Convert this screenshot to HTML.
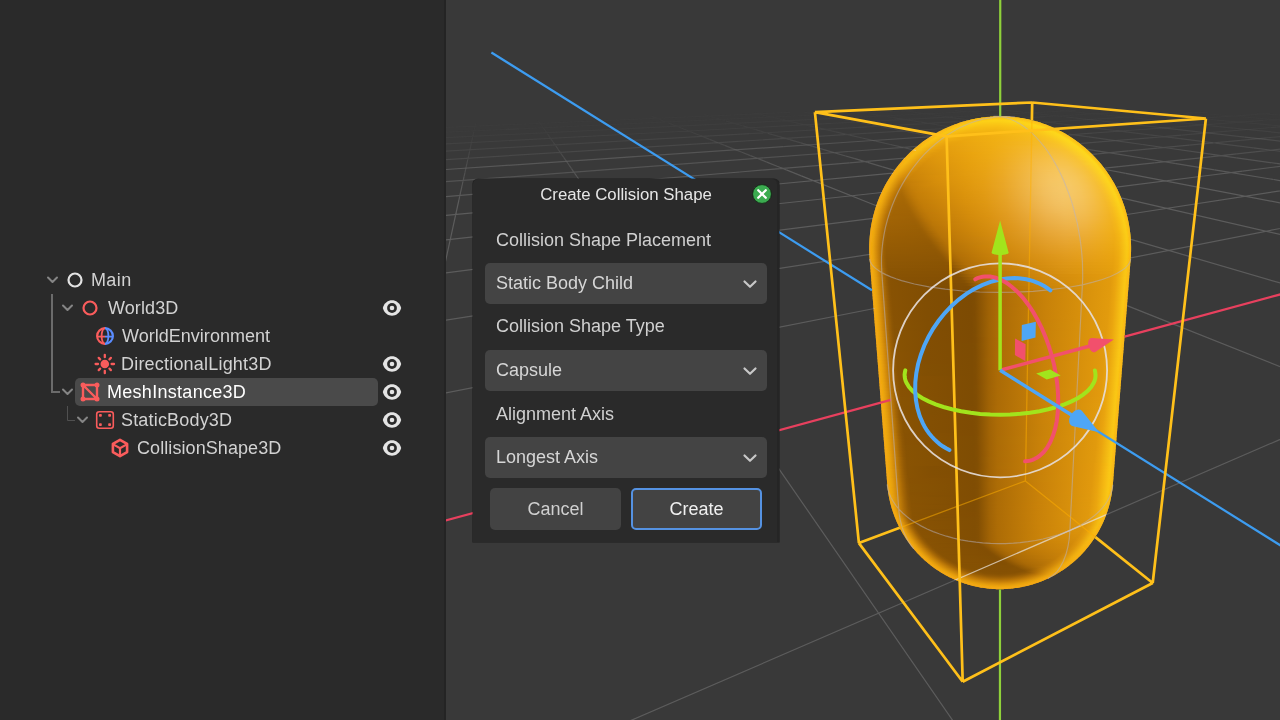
<!DOCTYPE html>
<html><head><meta charset="utf-8"><style>
*{margin:0;padding:0;box-sizing:content-box}
html,body{width:1280px;height:720px;overflow:hidden;background:#2a2a2a}
body{position:relative;font-family:"Liberation Sans",sans-serif}
.t{position:absolute;will-change:transform;font-size:18px;line-height:22px;height:22px;white-space:nowrap;color:#d2d2d2}
.ttl{position:absolute;will-change:transform;font-size:16.8px;line-height:22px;white-space:nowrap;color:#e6e6e6}
.dl{color:#d0d0d0}
.dd{color:#d6d6d6}
.btn{font-size:18px}
</style></head><body>
<div style="position:absolute;left:0;top:0;width:446px;height:720px;background:#2a2a2a"></div>
<svg width="1280" height="720" style="position:absolute;left:0;top:0"><defs><clipPath id="vpc"><rect x="446" y="0" width="834" height="720"/></clipPath><clipPath id="cap"><path d="M887.21 483.82 L869.61 258.61 L869.45 256.34 L869.34 254.05 L869.26 251.75 L869.25 251.16 L869.22 248.87 L869.23 246.57 L869.28 244.27 L869.38 241.96 L869.41 241.40 L869.55 239.10 L869.73 236.80 L869.95 234.50 L870.22 232.19 L870.28 231.67 L870.59 229.37 L870.94 227.08 L871.33 224.79 L871.77 222.50 L871.87 222.00 L872.35 219.73 L872.86 217.46 L873.43 215.19 L874.03 212.94 L874.68 210.68 L874.81 210.24 L875.49 208.00 L876.22 205.78 L876.99 203.56 L877.81 201.36 L877.96 200.95 L878.81 198.77 L879.70 196.59 L880.64 194.44 L881.61 192.29 L881.79 191.92 L882.80 189.80 L883.85 187.70 L884.95 185.61 L886.08 183.54 L887.25 181.48 L887.44 181.16 L888.65 179.13 L889.90 177.13 L891.18 175.14 L892.50 173.18 L892.70 172.88 L894.06 170.95 L895.45 169.04 L896.88 167.15 L898.35 165.29 L898.56 165.03 L900.06 163.20 L901.59 161.40 L903.16 159.62 L904.76 157.87 L904.97 157.64 L906.61 155.92 L908.27 154.24 L909.97 152.58 L910.18 152.37 L911.91 150.75 L913.67 149.16 L915.46 147.60 L915.67 147.42 L917.49 145.90 L919.33 144.41 L921.20 142.95 L921.42 142.79 L923.31 141.37 L925.24 139.99 L927.19 138.64 L927.40 138.50 L929.37 137.19 L931.37 135.92 L933.39 134.68 L933.60 134.56 L935.64 133.37 L937.71 132.21 L937.91 132.10 L939.99 130.98 L942.10 129.91 L942.30 129.81 L944.42 128.78 L946.56 127.78 L946.76 127.69 L948.91 126.75 L949.11 126.66 L951.27 125.76 L953.46 124.89 L953.65 124.82 L955.84 124.00 L956.04 123.93 L958.24 123.15 L958.43 123.09 L960.64 122.36 L960.83 122.30 L963.04 121.61 L963.24 121.56 L965.45 120.92 L965.64 120.87 L965.84 120.81 L968.04 120.23 L968.24 120.18 L970.44 119.64 L970.63 119.59 L970.83 119.55 L973.02 119.06 L973.21 119.02 L973.40 118.98 L975.57 118.54 L975.76 118.50 L975.95 118.47 L978.10 118.08 L978.28 118.04 L978.47 118.01 L978.67 117.98 L980.77 117.64 L980.95 117.62 L981.14 117.59 L981.33 117.56 L981.53 117.53 L983.56 117.25 L983.74 117.23 L983.92 117.20 L984.11 117.18 L984.31 117.16 L984.51 117.13 L986.43 116.91 L986.61 116.89 L986.79 116.87 L986.97 116.85 L987.16 116.83 L987.36 116.82 L987.56 116.80 L987.76 116.78 L989.50 116.62 L989.68 116.61 L989.86 116.59 L990.04 116.58 L990.22 116.56 L990.41 116.55 L990.60 116.53 L990.79 116.52 L990.99 116.51 L991.19 116.49 L991.39 116.48 L991.59 116.47 L993.00 116.38 L993.18 116.37 L993.35 116.36 L993.53 116.35 L993.71 116.34 L993.89 116.33 L994.07 116.32 L994.25 116.31 L994.44 116.31 L994.62 116.30 L994.81 116.29 L995.00 116.28 L995.20 116.27 L995.39 116.27 L995.58 116.26 L995.78 116.25 L995.98 116.25 L996.18 116.24 L996.38 116.24 L996.58 116.23 L996.78 116.23 L996.98 116.22 L997.19 116.22 L997.39 116.21 L997.60 116.21 L997.80 116.20 L998.01 116.20 L998.44 116.19 L998.61 116.19 L998.77 116.19 L998.94 116.19 L999.11 116.19 L999.28 116.18 L999.45 116.18 L999.62 116.18 L999.78 116.18 L999.95 116.18 L1000.12 116.18 L1000.29 116.18 L1000.46 116.18 L1000.63 116.18 L1000.80 116.18 L1000.97 116.18 L1001.14 116.18 L1001.30 116.19 L1001.47 116.19 L1001.64 116.19 L1001.81 116.19 L1001.97 116.19 L1002.41 116.20 L1002.62 116.20 L1002.83 116.21 L1003.03 116.21 L1003.24 116.22 L1003.44 116.22 L1003.64 116.22 L1003.84 116.23 L1004.05 116.24 L1004.24 116.24 L1004.44 116.25 L1004.64 116.25 L1004.84 116.26 L1005.03 116.27 L1005.22 116.27 L1005.42 116.28 L1005.61 116.29 L1005.79 116.30 L1005.98 116.30 L1006.17 116.31 L1006.35 116.32 L1006.53 116.33 L1006.71 116.34 L1006.89 116.35 L1007.07 116.36 L1007.24 116.37 L1007.41 116.38 L1008.83 116.47 L1009.03 116.48 L1009.23 116.49 L1009.43 116.51 L1009.63 116.52 L1009.82 116.53 L1010.01 116.55 L1010.20 116.56 L1010.38 116.58 L1010.56 116.59 L1010.74 116.61 L1010.91 116.62 L1012.67 116.78 L1012.87 116.80 L1013.06 116.82 L1013.26 116.83 L1013.44 116.85 L1013.63 116.87 L1013.81 116.89 L1013.99 116.91 L1015.92 117.13 L1016.11 117.16 L1016.31 117.18 L1016.50 117.20 L1016.68 117.23 L1016.86 117.25 L1018.90 117.53 L1019.09 117.56 L1019.28 117.59 L1019.47 117.61 L1019.65 117.64 L1021.75 117.98 L1021.95 118.01 L1022.14 118.04 L1022.32 118.08 L1024.47 118.47 L1024.66 118.50 L1024.85 118.54 L1027.02 118.98 L1027.21 119.02 L1027.40 119.06 L1029.59 119.55 L1029.79 119.59 L1029.98 119.64 L1032.18 120.18 L1032.38 120.23 L1034.58 120.81 L1034.78 120.87 L1034.97 120.92 L1037.18 121.56 L1037.37 121.61 L1039.59 122.30 L1039.78 122.36 L1041.99 123.09 L1042.18 123.15 L1044.38 123.93 L1044.58 124.00 L1046.77 124.82 L1048.94 125.68 L1049.15 125.76 L1051.31 126.66 L1051.51 126.75 L1053.66 127.70 L1055.80 128.68 L1056.00 128.78 L1058.12 129.81 L1060.22 130.88 L1060.43 130.99 L1062.51 132.10 L1064.57 133.25 L1064.78 133.37 L1066.82 134.57 L1068.84 135.80 L1069.05 135.93 L1071.05 137.20 L1073.02 138.51 L1073.23 138.65 L1075.18 140.00 L1077.11 141.38 L1079.01 142.80 L1079.22 142.96 L1081.09 144.42 L1082.94 145.91 L1084.75 147.44 L1084.96 147.62 L1086.75 149.18 L1088.51 150.77 L1090.24 152.40 L1091.93 154.05 L1092.15 154.26 L1093.81 155.95 L1095.45 157.67 L1097.04 159.41 L1097.25 159.65 L1098.82 161.43 L1100.36 163.23 L1101.86 165.07 L1103.32 166.92 L1103.53 167.19 L1104.96 169.08 L1106.35 170.99 L1107.71 172.93 L1109.03 174.89 L1109.22 175.19 L1110.51 177.18 L1111.76 179.18 L1112.96 181.21 L1114.13 183.26 L1114.32 183.60 L1115.45 185.67 L1116.54 187.76 L1117.60 189.87 L1118.61 191.99 L1119.58 194.13 L1119.75 194.51 L1120.69 196.67 L1121.58 198.84 L1122.43 201.03 L1123.24 203.23 L1123.39 203.65 L1124.16 205.86 L1124.89 208.09 L1125.57 210.33 L1126.22 212.57 L1126.34 213.03 L1126.94 215.29 L1127.50 217.56 L1128.02 219.83 L1128.50 222.11 L1128.93 224.39 L1129.02 224.89 L1129.41 227.19 L1129.76 229.49 L1130.07 231.78 L1130.33 234.08 L1130.39 234.62 L1130.61 236.92 L1130.79 239.23 L1130.92 241.53 L1131.02 243.84 L1131.04 244.40 L1131.09 246.71 L1131.10 249.01 L1131.06 251.30 L1130.99 253.59 L1130.97 254.19 L1130.85 256.48 L1130.69 258.76 L1112.89 484.16 L1112.74 485.86 L1112.64 486.96 L1112.45 488.65 L1112.31 489.76 L1112.09 491.45 L1111.83 493.12 L1111.66 494.24 L1111.36 495.90 L1111.15 497.02 L1110.82 498.67 L1110.58 499.79 L1110.21 501.43 L1109.81 503.06 L1109.53 504.18 L1109.10 505.79 L1108.78 506.91 L1108.31 508.51 L1107.81 510.09 L1107.46 511.20 L1106.93 512.77 L1106.54 513.88 L1105.97 515.43 L1105.55 516.53 L1104.95 518.06 L1104.49 519.16 L1103.86 520.67 L1103.20 522.15 L1102.71 523.24 L1102.02 524.70 L1101.50 525.79 L1100.78 527.22 L1100.22 528.30 L1099.48 529.71 L1098.89 530.78 L1098.12 532.16 L1097.49 533.22 L1096.70 534.57 L1096.04 535.62 L1095.22 536.94 L1094.54 537.98 L1093.69 539.27 L1092.81 540.54 L1092.11 541.56 L1091.37 542.57 L1090.48 543.79 L1089.71 544.79 L1088.80 545.98 L1088.01 546.97 L1087.08 548.12 L1086.26 549.09 L1085.31 550.20 L1084.47 551.16 L1083.50 552.24 L1082.64 553.17 L1081.66 554.21 L1080.77 555.13 L1079.78 556.13 L1078.87 557.04 L1077.93 557.93 L1076.94 558.88 L1075.98 559.75 L1074.98 560.66 L1074.01 561.51 L1072.99 562.38 L1072.01 563.21 L1070.99 564.04 L1069.98 564.85 L1068.96 565.65 L1067.94 566.42 L1066.90 567.20 L1065.84 567.98 L1064.83 568.69 L1063.76 569.44 L1062.66 570.18 L1061.67 570.83 L1060.57 571.55 L1059.44 572.25 L1058.47 572.85 L1057.33 573.53 L1056.18 574.20 L1055.23 574.74 L1054.07 575.39 L1052.89 576.02 L1051.96 576.51 L1050.78 577.11 L1049.58 577.71 L1048.69 578.14 L1047.49 578.71 L1046.27 579.27 L1045.04 579.81 L1044.19 580.17 L1042.97 580.69 L1041.72 581.20 L1040.46 581.69 L1039.67 581.99 L1038.42 582.45 L1037.15 582.90 L1035.87 583.34 L1035.15 583.58 L1033.88 583.99 L1032.59 584.39 L1031.29 584.77 L1029.98 585.14 L1029.36 585.31 L1028.07 585.65 L1026.76 585.98 L1025.44 586.29 L1024.12 586.59 L1022.78 586.87 L1021.44 587.14 L1020.98 587.23 L1019.65 587.48 L1018.32 587.70 L1016.98 587.92 L1015.63 588.11 L1014.28 588.29 L1012.92 588.46 L1011.56 588.61 L1010.19 588.74 L1008.82 588.85 L1008.62 588.87 L1007.28 588.96 L1005.93 589.04 L1004.58 589.10 L1003.22 589.15 L1001.87 589.18 L1000.52 589.20 L999.16 589.19 L997.81 589.17 L996.45 589.14 L995.10 589.09 L993.75 589.02 L992.40 588.93 L991.06 588.83 L990.86 588.82 L989.49 588.70 L988.12 588.56 L986.76 588.41 L985.40 588.24 L984.05 588.05 L982.70 587.85 L981.37 587.63 L980.04 587.40 L978.71 587.15 L978.25 587.06 L976.90 586.79 L975.57 586.50 L974.25 586.20 L972.93 585.88 L971.63 585.54 L971.03 585.38 L969.71 585.02 L968.40 584.65 L967.11 584.26 L965.83 583.86 L965.13 583.63 L963.83 583.20 L962.55 582.76 L961.29 582.31 L960.04 581.84 L959.25 581.53 L957.99 581.04 L956.75 580.53 L955.53 580.01 L954.68 579.64 L953.45 579.09 L952.24 578.53 L951.36 578.11 L950.15 577.52 L948.95 576.92 L947.78 576.31 L946.85 575.82 L945.68 575.19 L944.52 574.54 L943.57 573.99 L942.42 573.32 L941.29 572.64 L940.32 572.03 L939.19 571.32 L938.09 570.61 L937.10 569.95 L936.01 569.20 L934.94 568.45 L933.94 567.73 L932.88 566.96 L931.88 566.20 L930.83 565.40 L929.81 564.60 L928.80 563.78 L927.79 562.95 L926.79 562.10 L925.80 561.25 L924.83 560.39 L923.83 559.48 L922.88 558.60 L921.88 557.65 L920.96 556.75 L919.97 555.76 L919.06 554.85 L918.18 553.92 L917.20 552.88 L916.35 551.94 L915.38 550.86 L914.55 549.90 L913.60 548.79 L912.79 547.81 L911.86 546.66 L911.07 545.67 L910.16 544.48 L909.40 543.48 L908.51 542.25 L907.78 541.24 L906.91 539.98 L906.21 538.95 L905.36 537.66 L904.69 536.62 L903.87 535.30 L903.22 534.25 L902.43 532.89 L901.81 531.83 L901.04 530.45 L900.46 529.38 L899.72 527.97 L899.17 526.89 L898.45 525.45 L897.94 524.37 L897.25 522.91 L896.59 521.42 L896.11 520.33 L895.48 518.82 L895.03 517.72 L894.44 516.19 L894.02 515.09 L893.46 513.54 L893.08 512.43 L892.55 510.86 L892.05 509.28 L891.70 508.16 L891.24 506.56 L890.93 505.45 L890.50 503.83 L890.10 502.20 L889.83 501.09 L889.47 499.44 L889.23 498.33 L888.90 496.67 L888.70 495.56 L888.41 493.89 L888.15 492.22 L887.99 491.11 L887.76 489.42 L887.64 488.32 L887.45 486.62 L887.30 484.92Z"/></clipPath><mask id="notcap"><rect x="0" y="0" width="1280" height="720" fill="#fff"/><path d="M887.21 483.82 L869.61 258.61 L869.45 256.34 L869.34 254.05 L869.26 251.75 L869.25 251.16 L869.22 248.87 L869.23 246.57 L869.28 244.27 L869.38 241.96 L869.41 241.40 L869.55 239.10 L869.73 236.80 L869.95 234.50 L870.22 232.19 L870.28 231.67 L870.59 229.37 L870.94 227.08 L871.33 224.79 L871.77 222.50 L871.87 222.00 L872.35 219.73 L872.86 217.46 L873.43 215.19 L874.03 212.94 L874.68 210.68 L874.81 210.24 L875.49 208.00 L876.22 205.78 L876.99 203.56 L877.81 201.36 L877.96 200.95 L878.81 198.77 L879.70 196.59 L880.64 194.44 L881.61 192.29 L881.79 191.92 L882.80 189.80 L883.85 187.70 L884.95 185.61 L886.08 183.54 L887.25 181.48 L887.44 181.16 L888.65 179.13 L889.90 177.13 L891.18 175.14 L892.50 173.18 L892.70 172.88 L894.06 170.95 L895.45 169.04 L896.88 167.15 L898.35 165.29 L898.56 165.03 L900.06 163.20 L901.59 161.40 L903.16 159.62 L904.76 157.87 L904.97 157.64 L906.61 155.92 L908.27 154.24 L909.97 152.58 L910.18 152.37 L911.91 150.75 L913.67 149.16 L915.46 147.60 L915.67 147.42 L917.49 145.90 L919.33 144.41 L921.20 142.95 L921.42 142.79 L923.31 141.37 L925.24 139.99 L927.19 138.64 L927.40 138.50 L929.37 137.19 L931.37 135.92 L933.39 134.68 L933.60 134.56 L935.64 133.37 L937.71 132.21 L937.91 132.10 L939.99 130.98 L942.10 129.91 L942.30 129.81 L944.42 128.78 L946.56 127.78 L946.76 127.69 L948.91 126.75 L949.11 126.66 L951.27 125.76 L953.46 124.89 L953.65 124.82 L955.84 124.00 L956.04 123.93 L958.24 123.15 L958.43 123.09 L960.64 122.36 L960.83 122.30 L963.04 121.61 L963.24 121.56 L965.45 120.92 L965.64 120.87 L965.84 120.81 L968.04 120.23 L968.24 120.18 L970.44 119.64 L970.63 119.59 L970.83 119.55 L973.02 119.06 L973.21 119.02 L973.40 118.98 L975.57 118.54 L975.76 118.50 L975.95 118.47 L978.10 118.08 L978.28 118.04 L978.47 118.01 L978.67 117.98 L980.77 117.64 L980.95 117.62 L981.14 117.59 L981.33 117.56 L981.53 117.53 L983.56 117.25 L983.74 117.23 L983.92 117.20 L984.11 117.18 L984.31 117.16 L984.51 117.13 L986.43 116.91 L986.61 116.89 L986.79 116.87 L986.97 116.85 L987.16 116.83 L987.36 116.82 L987.56 116.80 L987.76 116.78 L989.50 116.62 L989.68 116.61 L989.86 116.59 L990.04 116.58 L990.22 116.56 L990.41 116.55 L990.60 116.53 L990.79 116.52 L990.99 116.51 L991.19 116.49 L991.39 116.48 L991.59 116.47 L993.00 116.38 L993.18 116.37 L993.35 116.36 L993.53 116.35 L993.71 116.34 L993.89 116.33 L994.07 116.32 L994.25 116.31 L994.44 116.31 L994.62 116.30 L994.81 116.29 L995.00 116.28 L995.20 116.27 L995.39 116.27 L995.58 116.26 L995.78 116.25 L995.98 116.25 L996.18 116.24 L996.38 116.24 L996.58 116.23 L996.78 116.23 L996.98 116.22 L997.19 116.22 L997.39 116.21 L997.60 116.21 L997.80 116.20 L998.01 116.20 L998.44 116.19 L998.61 116.19 L998.77 116.19 L998.94 116.19 L999.11 116.19 L999.28 116.18 L999.45 116.18 L999.62 116.18 L999.78 116.18 L999.95 116.18 L1000.12 116.18 L1000.29 116.18 L1000.46 116.18 L1000.63 116.18 L1000.80 116.18 L1000.97 116.18 L1001.14 116.18 L1001.30 116.19 L1001.47 116.19 L1001.64 116.19 L1001.81 116.19 L1001.97 116.19 L1002.41 116.20 L1002.62 116.20 L1002.83 116.21 L1003.03 116.21 L1003.24 116.22 L1003.44 116.22 L1003.64 116.22 L1003.84 116.23 L1004.05 116.24 L1004.24 116.24 L1004.44 116.25 L1004.64 116.25 L1004.84 116.26 L1005.03 116.27 L1005.22 116.27 L1005.42 116.28 L1005.61 116.29 L1005.79 116.30 L1005.98 116.30 L1006.17 116.31 L1006.35 116.32 L1006.53 116.33 L1006.71 116.34 L1006.89 116.35 L1007.07 116.36 L1007.24 116.37 L1007.41 116.38 L1008.83 116.47 L1009.03 116.48 L1009.23 116.49 L1009.43 116.51 L1009.63 116.52 L1009.82 116.53 L1010.01 116.55 L1010.20 116.56 L1010.38 116.58 L1010.56 116.59 L1010.74 116.61 L1010.91 116.62 L1012.67 116.78 L1012.87 116.80 L1013.06 116.82 L1013.26 116.83 L1013.44 116.85 L1013.63 116.87 L1013.81 116.89 L1013.99 116.91 L1015.92 117.13 L1016.11 117.16 L1016.31 117.18 L1016.50 117.20 L1016.68 117.23 L1016.86 117.25 L1018.90 117.53 L1019.09 117.56 L1019.28 117.59 L1019.47 117.61 L1019.65 117.64 L1021.75 117.98 L1021.95 118.01 L1022.14 118.04 L1022.32 118.08 L1024.47 118.47 L1024.66 118.50 L1024.85 118.54 L1027.02 118.98 L1027.21 119.02 L1027.40 119.06 L1029.59 119.55 L1029.79 119.59 L1029.98 119.64 L1032.18 120.18 L1032.38 120.23 L1034.58 120.81 L1034.78 120.87 L1034.97 120.92 L1037.18 121.56 L1037.37 121.61 L1039.59 122.30 L1039.78 122.36 L1041.99 123.09 L1042.18 123.15 L1044.38 123.93 L1044.58 124.00 L1046.77 124.82 L1048.94 125.68 L1049.15 125.76 L1051.31 126.66 L1051.51 126.75 L1053.66 127.70 L1055.80 128.68 L1056.00 128.78 L1058.12 129.81 L1060.22 130.88 L1060.43 130.99 L1062.51 132.10 L1064.57 133.25 L1064.78 133.37 L1066.82 134.57 L1068.84 135.80 L1069.05 135.93 L1071.05 137.20 L1073.02 138.51 L1073.23 138.65 L1075.18 140.00 L1077.11 141.38 L1079.01 142.80 L1079.22 142.96 L1081.09 144.42 L1082.94 145.91 L1084.75 147.44 L1084.96 147.62 L1086.75 149.18 L1088.51 150.77 L1090.24 152.40 L1091.93 154.05 L1092.15 154.26 L1093.81 155.95 L1095.45 157.67 L1097.04 159.41 L1097.25 159.65 L1098.82 161.43 L1100.36 163.23 L1101.86 165.07 L1103.32 166.92 L1103.53 167.19 L1104.96 169.08 L1106.35 170.99 L1107.71 172.93 L1109.03 174.89 L1109.22 175.19 L1110.51 177.18 L1111.76 179.18 L1112.96 181.21 L1114.13 183.26 L1114.32 183.60 L1115.45 185.67 L1116.54 187.76 L1117.60 189.87 L1118.61 191.99 L1119.58 194.13 L1119.75 194.51 L1120.69 196.67 L1121.58 198.84 L1122.43 201.03 L1123.24 203.23 L1123.39 203.65 L1124.16 205.86 L1124.89 208.09 L1125.57 210.33 L1126.22 212.57 L1126.34 213.03 L1126.94 215.29 L1127.50 217.56 L1128.02 219.83 L1128.50 222.11 L1128.93 224.39 L1129.02 224.89 L1129.41 227.19 L1129.76 229.49 L1130.07 231.78 L1130.33 234.08 L1130.39 234.62 L1130.61 236.92 L1130.79 239.23 L1130.92 241.53 L1131.02 243.84 L1131.04 244.40 L1131.09 246.71 L1131.10 249.01 L1131.06 251.30 L1130.99 253.59 L1130.97 254.19 L1130.85 256.48 L1130.69 258.76 L1112.89 484.16 L1112.74 485.86 L1112.64 486.96 L1112.45 488.65 L1112.31 489.76 L1112.09 491.45 L1111.83 493.12 L1111.66 494.24 L1111.36 495.90 L1111.15 497.02 L1110.82 498.67 L1110.58 499.79 L1110.21 501.43 L1109.81 503.06 L1109.53 504.18 L1109.10 505.79 L1108.78 506.91 L1108.31 508.51 L1107.81 510.09 L1107.46 511.20 L1106.93 512.77 L1106.54 513.88 L1105.97 515.43 L1105.55 516.53 L1104.95 518.06 L1104.49 519.16 L1103.86 520.67 L1103.20 522.15 L1102.71 523.24 L1102.02 524.70 L1101.50 525.79 L1100.78 527.22 L1100.22 528.30 L1099.48 529.71 L1098.89 530.78 L1098.12 532.16 L1097.49 533.22 L1096.70 534.57 L1096.04 535.62 L1095.22 536.94 L1094.54 537.98 L1093.69 539.27 L1092.81 540.54 L1092.11 541.56 L1091.37 542.57 L1090.48 543.79 L1089.71 544.79 L1088.80 545.98 L1088.01 546.97 L1087.08 548.12 L1086.26 549.09 L1085.31 550.20 L1084.47 551.16 L1083.50 552.24 L1082.64 553.17 L1081.66 554.21 L1080.77 555.13 L1079.78 556.13 L1078.87 557.04 L1077.93 557.93 L1076.94 558.88 L1075.98 559.75 L1074.98 560.66 L1074.01 561.51 L1072.99 562.38 L1072.01 563.21 L1070.99 564.04 L1069.98 564.85 L1068.96 565.65 L1067.94 566.42 L1066.90 567.20 L1065.84 567.98 L1064.83 568.69 L1063.76 569.44 L1062.66 570.18 L1061.67 570.83 L1060.57 571.55 L1059.44 572.25 L1058.47 572.85 L1057.33 573.53 L1056.18 574.20 L1055.23 574.74 L1054.07 575.39 L1052.89 576.02 L1051.96 576.51 L1050.78 577.11 L1049.58 577.71 L1048.69 578.14 L1047.49 578.71 L1046.27 579.27 L1045.04 579.81 L1044.19 580.17 L1042.97 580.69 L1041.72 581.20 L1040.46 581.69 L1039.67 581.99 L1038.42 582.45 L1037.15 582.90 L1035.87 583.34 L1035.15 583.58 L1033.88 583.99 L1032.59 584.39 L1031.29 584.77 L1029.98 585.14 L1029.36 585.31 L1028.07 585.65 L1026.76 585.98 L1025.44 586.29 L1024.12 586.59 L1022.78 586.87 L1021.44 587.14 L1020.98 587.23 L1019.65 587.48 L1018.32 587.70 L1016.98 587.92 L1015.63 588.11 L1014.28 588.29 L1012.92 588.46 L1011.56 588.61 L1010.19 588.74 L1008.82 588.85 L1008.62 588.87 L1007.28 588.96 L1005.93 589.04 L1004.58 589.10 L1003.22 589.15 L1001.87 589.18 L1000.52 589.20 L999.16 589.19 L997.81 589.17 L996.45 589.14 L995.10 589.09 L993.75 589.02 L992.40 588.93 L991.06 588.83 L990.86 588.82 L989.49 588.70 L988.12 588.56 L986.76 588.41 L985.40 588.24 L984.05 588.05 L982.70 587.85 L981.37 587.63 L980.04 587.40 L978.71 587.15 L978.25 587.06 L976.90 586.79 L975.57 586.50 L974.25 586.20 L972.93 585.88 L971.63 585.54 L971.03 585.38 L969.71 585.02 L968.40 584.65 L967.11 584.26 L965.83 583.86 L965.13 583.63 L963.83 583.20 L962.55 582.76 L961.29 582.31 L960.04 581.84 L959.25 581.53 L957.99 581.04 L956.75 580.53 L955.53 580.01 L954.68 579.64 L953.45 579.09 L952.24 578.53 L951.36 578.11 L950.15 577.52 L948.95 576.92 L947.78 576.31 L946.85 575.82 L945.68 575.19 L944.52 574.54 L943.57 573.99 L942.42 573.32 L941.29 572.64 L940.32 572.03 L939.19 571.32 L938.09 570.61 L937.10 569.95 L936.01 569.20 L934.94 568.45 L933.94 567.73 L932.88 566.96 L931.88 566.20 L930.83 565.40 L929.81 564.60 L928.80 563.78 L927.79 562.95 L926.79 562.10 L925.80 561.25 L924.83 560.39 L923.83 559.48 L922.88 558.60 L921.88 557.65 L920.96 556.75 L919.97 555.76 L919.06 554.85 L918.18 553.92 L917.20 552.88 L916.35 551.94 L915.38 550.86 L914.55 549.90 L913.60 548.79 L912.79 547.81 L911.86 546.66 L911.07 545.67 L910.16 544.48 L909.40 543.48 L908.51 542.25 L907.78 541.24 L906.91 539.98 L906.21 538.95 L905.36 537.66 L904.69 536.62 L903.87 535.30 L903.22 534.25 L902.43 532.89 L901.81 531.83 L901.04 530.45 L900.46 529.38 L899.72 527.97 L899.17 526.89 L898.45 525.45 L897.94 524.37 L897.25 522.91 L896.59 521.42 L896.11 520.33 L895.48 518.82 L895.03 517.72 L894.44 516.19 L894.02 515.09 L893.46 513.54 L893.08 512.43 L892.55 510.86 L892.05 509.28 L891.70 508.16 L891.24 506.56 L890.93 505.45 L890.50 503.83 L890.10 502.20 L889.83 501.09 L889.47 499.44 L889.23 498.33 L888.90 496.67 L888.70 495.56 L888.41 493.89 L888.15 492.22 L887.99 491.11 L887.76 489.42 L887.64 488.32 L887.45 486.62 L887.30 484.92Z" fill="#000"/></mask><filter id="rb" x="-10%" y="-10%" width="120%" height="120%"><feGaussianBlur stdDeviation="1.2"/></filter><filter id="lite"><feColorMatrix type="matrix" values="0 0 0 0 0.80  0 0 0 0 0.74  0 0 0 0 0.68  0 0 0 0.75 0"/></filter><linearGradient id="c0" gradientUnits="userSpaceOnUse" x1="991.1" x2="1009.3"><stop offset="0.019" stop-color="#fdd819"/><stop offset="0.981" stop-color="#feda1a"/></linearGradient><linearGradient id="c1" gradientUnits="userSpaceOnUse" x1="981.8" x2="1018.7"><stop offset="0.009" stop-color="#fdd719"/><stop offset="0.991" stop-color="#fedb1a"/></linearGradient><linearGradient id="c2" gradientUnits="userSpaceOnUse" x1="975.8" x2="1024.7"><stop offset="0.007" stop-color="#fdd619"/><stop offset="0.993" stop-color="#fedc1a"/></linearGradient><linearGradient id="c3" gradientUnits="userSpaceOnUse" x1="971.0" x2="1029.4"><stop offset="0.006" stop-color="#fdd518"/><stop offset="0.492" stop-color="#fdd519"/><stop offset="0.994" stop-color="#fedc1a"/></linearGradient><linearGradient id="c4" gradientUnits="userSpaceOnUse" x1="967.0" x2="1033.4"><stop offset="0.005" stop-color="#fdd418"/><stop offset="0.493" stop-color="#fdd218"/><stop offset="0.995" stop-color="#fedc1b"/></linearGradient><linearGradient id="c5" gradientUnits="userSpaceOnUse" x1="963.4" x2="1037.0"><stop offset="0.005" stop-color="#fdd318"/><stop offset="0.487" stop-color="#fccf17"/><stop offset="0.995" stop-color="#fedd1b"/></linearGradient><linearGradient id="c6" gradientUnits="userSpaceOnUse" x1="960.2" x2="1040.2"><stop offset="0.004" stop-color="#fdd318"/><stop offset="0.079" stop-color="#fdd318"/><stop offset="0.327" stop-color="#fbcc16"/><stop offset="0.488" stop-color="#fbcc16"/><stop offset="0.996" stop-color="#fedd1b"/></linearGradient><linearGradient id="c7" gradientUnits="userSpaceOnUse" x1="957.3" x2="1043.2"><stop offset="0.004" stop-color="#fdd218"/><stop offset="0.062" stop-color="#fdd318"/><stop offset="0.315" stop-color="#fbc916"/><stop offset="0.477" stop-color="#fac816"/><stop offset="0.650" stop-color="#fccd17"/><stop offset="0.996" stop-color="#fedd1b"/></linearGradient><linearGradient id="c8" gradientUnits="userSpaceOnUse" x1="954.5" x2="1045.9"><stop offset="0.004" stop-color="#fcd118"/><stop offset="0.058" stop-color="#fcd218"/><stop offset="0.306" stop-color="#fac615"/><stop offset="0.478" stop-color="#fac515"/><stop offset="0.662" stop-color="#fbcb17"/><stop offset="0.931" stop-color="#fedc1b"/><stop offset="0.996" stop-color="#fedd1b"/></linearGradient><linearGradient id="c9" gradientUnits="userSpaceOnUse" x1="951.9" x2="1048.5"><stop offset="0.004" stop-color="#fcd117"/><stop offset="0.055" stop-color="#fcd118"/><stop offset="0.290" stop-color="#f9c415"/><stop offset="0.474" stop-color="#f9c214"/><stop offset="0.669" stop-color="#fac816"/><stop offset="0.935" stop-color="#fedc1b"/><stop offset="0.996" stop-color="#fedd1b"/></linearGradient><linearGradient id="c10" gradientUnits="userSpaceOnUse" x1="949.5" x2="1050.9"><stop offset="0.003" stop-color="#fcd017"/><stop offset="0.052" stop-color="#fcd017"/><stop offset="0.286" stop-color="#f8c114"/><stop offset="0.471" stop-color="#f8bf14"/><stop offset="0.675" stop-color="#fac616"/><stop offset="0.938" stop-color="#fedc1b"/><stop offset="0.997" stop-color="#fede1b"/></linearGradient><linearGradient id="c11" gradientUnits="userSpaceOnUse" x1="947.2" x2="1053.2"><stop offset="0.003" stop-color="#fcd017"/><stop offset="0.050" stop-color="#fcd017"/><stop offset="0.273" stop-color="#f7be13"/><stop offset="0.468" stop-color="#f7bc13"/><stop offset="0.681" stop-color="#f9c416"/><stop offset="0.950" stop-color="#fedc1b"/><stop offset="0.997" stop-color="#fede1b"/></linearGradient><linearGradient id="c12" gradientUnits="userSpaceOnUse" x1="945.0" x2="1055.4"><stop offset="0.003" stop-color="#fccf17"/><stop offset="0.048" stop-color="#fccf17"/><stop offset="0.263" stop-color="#f7bc13"/><stop offset="0.460" stop-color="#f5ba13"/><stop offset="0.692" stop-color="#f9c316"/><stop offset="0.952" stop-color="#fedc1b"/><stop offset="0.997" stop-color="#fede1b"/></linearGradient><linearGradient id="c13" gradientUnits="userSpaceOnUse" x1="942.9" x2="1057.5"><stop offset="0.003" stop-color="#fccf17"/><stop offset="0.046" stop-color="#fcce17"/><stop offset="0.254" stop-color="#f6ba13"/><stop offset="0.452" stop-color="#f4b712"/><stop offset="0.694" stop-color="#f8c116"/><stop offset="0.954" stop-color="#fedc1b"/><stop offset="0.997" stop-color="#fede1b"/></linearGradient><linearGradient id="c14" gradientUnits="userSpaceOnUse" x1="940.9" x2="1059.5"><stop offset="0.003" stop-color="#fcce17"/><stop offset="0.036" stop-color="#fcce17"/><stop offset="0.162" stop-color="#f7bf14"/><stop offset="0.245" stop-color="#f5b812"/><stop offset="0.437" stop-color="#f3b512"/><stop offset="0.705" stop-color="#f8c017"/><stop offset="0.955" stop-color="#fedc1b"/><stop offset="0.997" stop-color="#fede1b"/></linearGradient><linearGradient id="c15" gradientUnits="userSpaceOnUse" x1="939.0" x2="1061.4"><stop offset="0.003" stop-color="#fccd17"/><stop offset="0.035" stop-color="#fccd17"/><stop offset="0.156" stop-color="#f7bd13"/><stop offset="0.237" stop-color="#f4b612"/><stop offset="0.431" stop-color="#f2b312"/><stop offset="0.706" stop-color="#f7bf17"/><stop offset="0.811" stop-color="#fac91a"/><stop offset="0.957" stop-color="#fedc1b"/><stop offset="0.997" stop-color="#fede1b"/></linearGradient><linearGradient id="c16" gradientUnits="userSpaceOnUse" x1="937.2" x2="1063.2"><stop offset="0.003" stop-color="#fccd17"/><stop offset="0.034" stop-color="#fccd17"/><stop offset="0.144" stop-color="#f7bc13"/><stop offset="0.222" stop-color="#f3b412"/><stop offset="0.308" stop-color="#f1b111"/><stop offset="0.410" stop-color="#f1b111"/><stop offset="0.582" stop-color="#f4b614"/><stop offset="0.715" stop-color="#f7be18"/><stop offset="0.817" stop-color="#fac81a"/><stop offset="0.966" stop-color="#fedd1b"/><stop offset="0.997" stop-color="#fede1b"/></linearGradient><linearGradient id="c17" gradientUnits="userSpaceOnUse" x1="935.4" x2="1065.0"><stop offset="0.003" stop-color="#fbcc16"/><stop offset="0.033" stop-color="#fbcc16"/><stop offset="0.140" stop-color="#f6bb13"/><stop offset="0.217" stop-color="#f2b211"/><stop offset="0.293" stop-color="#f0af11"/><stop offset="0.393" stop-color="#f0af11"/><stop offset="0.592" stop-color="#f4b615"/><stop offset="0.722" stop-color="#f7bd19"/><stop offset="0.821" stop-color="#fac71b"/><stop offset="0.967" stop-color="#fedd1b"/><stop offset="0.997" stop-color="#fede1b"/></linearGradient><linearGradient id="c18" gradientUnits="userSpaceOnUse" x1="933.7" x2="1066.7"><stop offset="0.003" stop-color="#fbcc16"/><stop offset="0.032" stop-color="#fbcb16"/><stop offset="0.136" stop-color="#f5b912"/><stop offset="0.203" stop-color="#f2b111"/><stop offset="0.277" stop-color="#efae10"/><stop offset="0.366" stop-color="#f0ae10"/><stop offset="0.723" stop-color="#f6bc1a"/><stop offset="0.812" stop-color="#f9c51c"/><stop offset="0.960" stop-color="#fedc1b"/><stop offset="0.997" stop-color="#fede1b"/></linearGradient><linearGradient id="c19" gradientUnits="userSpaceOnUse" x1="932.1" x2="1068.4"><stop offset="0.003" stop-color="#fbcb16"/><stop offset="0.032" stop-color="#fbcb16"/><stop offset="0.126" stop-color="#f5b912"/><stop offset="0.191" stop-color="#f1b011"/><stop offset="0.264" stop-color="#efac10"/><stop offset="0.344" stop-color="#efac10"/><stop offset="0.736" stop-color="#f6bc1c"/><stop offset="0.823" stop-color="#f9c51d"/><stop offset="0.961" stop-color="#fedc1b"/><stop offset="0.997" stop-color="#fede1b"/></linearGradient><linearGradient id="c20" gradientUnits="userSpaceOnUse" x1="930.5" x2="1069.9"><stop offset="0.003" stop-color="#fbcb16"/><stop offset="0.031" stop-color="#fbca16"/><stop offset="0.123" stop-color="#f5b712"/><stop offset="0.187" stop-color="#f0af10"/><stop offset="0.322" stop-color="#eeab10"/><stop offset="0.493" stop-color="#f1b113"/><stop offset="0.742" stop-color="#f6bc1d"/><stop offset="0.827" stop-color="#f9c41e"/><stop offset="0.962" stop-color="#fedb1c"/><stop offset="0.997" stop-color="#fede1b"/></linearGradient><linearGradient id="c21" gradientUnits="userSpaceOnUse" x1="928.9" x2="1071.5"><stop offset="0.002" stop-color="#fbca16"/><stop offset="0.030" stop-color="#fbca16"/><stop offset="0.121" stop-color="#f4b612"/><stop offset="0.176" stop-color="#efae10"/><stop offset="0.232" stop-color="#edaa10"/><stop offset="0.302" stop-color="#eda910"/><stop offset="0.483" stop-color="#f1b013"/><stop offset="0.747" stop-color="#f6bb1f"/><stop offset="0.831" stop-color="#f9c41f"/><stop offset="0.970" stop-color="#fedc1c"/><stop offset="0.998" stop-color="#fede1b"/></linearGradient><linearGradient id="c22" gradientUnits="userSpaceOnUse" x1="927.4" x2="1073.0"><stop offset="0.002" stop-color="#fbca16"/><stop offset="0.030" stop-color="#fbc916"/><stop offset="0.111" stop-color="#f4b612"/><stop offset="0.166" stop-color="#efad10"/><stop offset="0.221" stop-color="#eca90f"/><stop offset="0.282" stop-color="#eca80f"/><stop offset="0.473" stop-color="#f0af13"/><stop offset="0.759" stop-color="#f6bc20"/><stop offset="0.841" stop-color="#f9c420"/><stop offset="0.970" stop-color="#fedc1c"/><stop offset="0.998" stop-color="#fede1b"/></linearGradient><linearGradient id="c23" gradientUnits="userSpaceOnUse" x1="925.9" x2="1074.5"><stop offset="0.002" stop-color="#fbc916"/><stop offset="0.029" stop-color="#fac816"/><stop offset="0.109" stop-color="#f3b512"/><stop offset="0.163" stop-color="#eeab10"/><stop offset="0.270" stop-color="#eba70f"/><stop offset="0.470" stop-color="#f0af13"/><stop offset="0.771" stop-color="#f6bc22"/><stop offset="0.851" stop-color="#f9c521"/><stop offset="0.971" stop-color="#fedc1c"/><stop offset="0.998" stop-color="#fede1b"/></linearGradient><linearGradient id="c24" gradientUnits="userSpaceOnUse" x1="924.5" x2="1075.9"><stop offset="0.002" stop-color="#fbc916"/><stop offset="0.029" stop-color="#fac815"/><stop offset="0.107" stop-color="#f3b311"/><stop offset="0.153" stop-color="#eeab10"/><stop offset="0.251" stop-color="#eaa60f"/><stop offset="0.467" stop-color="#f0af13"/><stop offset="0.775" stop-color="#f6bc24"/><stop offset="0.854" stop-color="#f9c522"/><stop offset="0.971" stop-color="#fedc1c"/><stop offset="0.998" stop-color="#fede1b"/></linearGradient><linearGradient id="c25" gradientUnits="userSpaceOnUse" x1="923.1" x2="1077.3"><stop offset="0.002" stop-color="#fbc816"/><stop offset="0.028" stop-color="#fac715"/><stop offset="0.099" stop-color="#f3b311"/><stop offset="0.144" stop-color="#edaa10"/><stop offset="0.189" stop-color="#eaa60f"/><stop offset="0.240" stop-color="#eaa50f"/><stop offset="0.458" stop-color="#f0ae13"/><stop offset="0.696" stop-color="#f4b823"/><stop offset="0.786" stop-color="#f6bc26"/><stop offset="0.856" stop-color="#f9c423"/><stop offset="0.972" stop-color="#fedc1c"/><stop offset="0.998" stop-color="#fede1b"/></linearGradient><linearGradient id="c26" gradientUnits="userSpaceOnUse" x1="921.8" x2="1078.6"><stop offset="0.002" stop-color="#fac815"/><stop offset="0.028" stop-color="#fac615"/><stop offset="0.097" stop-color="#f2b211"/><stop offset="0.142" stop-color="#eca90f"/><stop offset="0.186" stop-color="#e9a40f"/><stop offset="0.231" stop-color="#e9a40e"/><stop offset="0.452" stop-color="#efad13"/><stop offset="0.700" stop-color="#f4b825"/><stop offset="0.795" stop-color="#f6bd27"/><stop offset="0.865" stop-color="#f9c524"/><stop offset="0.972" stop-color="#fedc1c"/><stop offset="0.998" stop-color="#fede1b"/></linearGradient><linearGradient id="c27" gradientUnits="userSpaceOnUse" x1="920.5" x2="1079.9"><stop offset="0.002" stop-color="#fac715"/><stop offset="0.027" stop-color="#fac615"/><stop offset="0.133" stop-color="#eca80f"/><stop offset="0.176" stop-color="#e9a30e"/><stop offset="0.220" stop-color="#e8a30e"/><stop offset="0.450" stop-color="#efad13"/><stop offset="0.705" stop-color="#f4b927"/><stop offset="0.805" stop-color="#f6bd29"/><stop offset="0.873" stop-color="#f9c625"/><stop offset="0.973" stop-color="#fedc1c"/><stop offset="0.998" stop-color="#fede1b"/></linearGradient><linearGradient id="c28" gradientUnits="userSpaceOnUse" x1="919.2" x2="1081.2"><stop offset="0.002" stop-color="#fac715"/><stop offset="0.027" stop-color="#fac515"/><stop offset="0.088" stop-color="#f2b111"/><stop offset="0.131" stop-color="#eba70f"/><stop offset="0.168" stop-color="#e8a20e"/><stop offset="0.211" stop-color="#e7a20e"/><stop offset="0.457" stop-color="#efad13"/><stop offset="0.758" stop-color="#f5bb2b"/><stop offset="0.856" stop-color="#f8c228"/><stop offset="0.973" stop-color="#fedc1c"/><stop offset="0.998" stop-color="#fede1b"/></linearGradient><linearGradient id="c29" gradientUnits="userSpaceOnUse" x1="918.0" x2="1082.4"><stop offset="0.002" stop-color="#fac715"/><stop offset="0.026" stop-color="#f9c515"/><stop offset="0.123" stop-color="#eba70f"/><stop offset="0.159" stop-color="#e8a20e"/><stop offset="0.201" stop-color="#e7a10e"/><stop offset="0.455" stop-color="#efad13"/><stop offset="0.690" stop-color="#f4b829"/><stop offset="0.763" stop-color="#f5bc2d"/><stop offset="0.865" stop-color="#f9c328"/><stop offset="0.974" stop-color="#fedc1c"/><stop offset="0.998" stop-color="#fede1b"/></linearGradient><linearGradient id="c30" gradientUnits="userSpaceOnUse" x1="916.8" x2="1083.6"><stop offset="0.002" stop-color="#fac615"/><stop offset="0.020" stop-color="#fac615"/><stop offset="0.121" stop-color="#eaa60f"/><stop offset="0.157" stop-color="#e7a00e"/><stop offset="0.193" stop-color="#e69f0e"/><stop offset="0.449" stop-color="#eeac13"/><stop offset="0.688" stop-color="#f4b92b"/><stop offset="0.759" stop-color="#f5bc2f"/><stop offset="0.867" stop-color="#f8c32a"/><stop offset="0.980" stop-color="#fedd1c"/><stop offset="0.998" stop-color="#fede1b"/></linearGradient><linearGradient id="c31" gradientUnits="userSpaceOnUse" x1="915.6" x2="1084.8"><stop offset="0.002" stop-color="#fac615"/><stop offset="0.020" stop-color="#fac515"/><stop offset="0.084" stop-color="#f0ae10"/><stop offset="0.119" stop-color="#e9a40f"/><stop offset="0.154" stop-color="#e69f0e"/><stop offset="0.190" stop-color="#e59f0e"/><stop offset="0.447" stop-color="#eeac13"/><stop offset="0.687" stop-color="#f4b92d"/><stop offset="0.764" stop-color="#f5bc31"/><stop offset="0.869" stop-color="#f8c32b"/><stop offset="0.980" stop-color="#fedd1c"/><stop offset="0.998" stop-color="#fede1b"/></linearGradient><linearGradient id="c32" gradientUnits="userSpaceOnUse" x1="914.4" x2="1086.0"><stop offset="0.002" stop-color="#fac515"/><stop offset="0.019" stop-color="#f9c415"/><stop offset="0.083" stop-color="#efad10"/><stop offset="0.118" stop-color="#e9a30e"/><stop offset="0.182" stop-color="#e49e0d"/><stop offset="0.448" stop-color="#eeab13"/><stop offset="0.685" stop-color="#f4b92e"/><stop offset="0.761" stop-color="#f5bc33"/><stop offset="0.813" stop-color="#f6be32"/><stop offset="0.871" stop-color="#f8c32c"/><stop offset="0.952" stop-color="#fdd51f"/><stop offset="0.981" stop-color="#fedd1c"/><stop offset="0.998" stop-color="#fede1b"/></linearGradient><linearGradient id="c33" gradientUnits="userSpaceOnUse" x1="913.3" x2="1087.1"><stop offset="0.002" stop-color="#f9c515"/><stop offset="0.019" stop-color="#f9c415"/><stop offset="0.111" stop-color="#e8a30e"/><stop offset="0.139" stop-color="#e59e0d"/><stop offset="0.174" stop-color="#e49d0d"/><stop offset="0.443" stop-color="#eeab13"/><stop offset="0.523" stop-color="#f0af1b"/><stop offset="0.689" stop-color="#f4b931"/><stop offset="0.763" stop-color="#f5bd35"/><stop offset="0.815" stop-color="#f6be34"/><stop offset="0.872" stop-color="#f8c22d"/><stop offset="0.952" stop-color="#fdd51f"/><stop offset="0.981" stop-color="#fedd1c"/><stop offset="0.998" stop-color="#fede1b"/></linearGradient><linearGradient id="c34" gradientUnits="userSpaceOnUse" x1="912.2" x2="1088.2"><stop offset="0.002" stop-color="#f9c415"/><stop offset="0.019" stop-color="#f9c314"/><stop offset="0.109" stop-color="#e8a20e"/><stop offset="0.137" stop-color="#e49d0d"/><stop offset="0.171" stop-color="#e39c0d"/><stop offset="0.447" stop-color="#eeab14"/><stop offset="0.525" stop-color="#f0af1c"/><stop offset="0.683" stop-color="#f4b932"/><stop offset="0.762" stop-color="#f5bd37"/><stop offset="0.818" stop-color="#f6be36"/><stop offset="0.874" stop-color="#f8c22e"/><stop offset="0.953" stop-color="#fdd51f"/><stop offset="0.981" stop-color="#fedd1c"/><stop offset="0.998" stop-color="#fede1b"/></linearGradient><linearGradient id="c35" gradientUnits="userSpaceOnUse" x1="911.1" x2="1089.3"><stop offset="0.002" stop-color="#f9c415"/><stop offset="0.019" stop-color="#f9c314"/><stop offset="0.074" stop-color="#eeab10"/><stop offset="0.108" stop-color="#e7a10e"/><stop offset="0.163" stop-color="#e29b0d"/><stop offset="0.442" stop-color="#edaa14"/><stop offset="0.525" stop-color="#f0af1c"/><stop offset="0.686" stop-color="#f4ba34"/><stop offset="0.764" stop-color="#f5bd39"/><stop offset="0.820" stop-color="#f6bf37"/><stop offset="0.876" stop-color="#f8c230"/><stop offset="0.954" stop-color="#fdd520"/><stop offset="0.981" stop-color="#fedd1c"/><stop offset="0.998" stop-color="#fede1b"/></linearGradient><linearGradient id="c36" gradientUnits="userSpaceOnUse" x1="910.1" x2="1090.3"><stop offset="0.002" stop-color="#f9c314"/><stop offset="0.018" stop-color="#f9c214"/><stop offset="0.101" stop-color="#e7a10e"/><stop offset="0.129" stop-color="#e29b0d"/><stop offset="0.162" stop-color="#e19a0d"/><stop offset="0.349" stop-color="#eaa50f"/><stop offset="0.442" stop-color="#edaa14"/><stop offset="0.525" stop-color="#f0af1d"/><stop offset="0.684" stop-color="#f4ba35"/><stop offset="0.761" stop-color="#f5be3b"/><stop offset="0.822" stop-color="#f6bf39"/><stop offset="0.882" stop-color="#f8c330"/><stop offset="0.954" stop-color="#fdd420"/><stop offset="0.982" stop-color="#fedd1c"/><stop offset="0.998" stop-color="#fede1b"/></linearGradient><linearGradient id="c37" gradientUnits="userSpaceOnUse" x1="909.0" x2="1091.4"><stop offset="0.002" stop-color="#f9c314"/><stop offset="0.018" stop-color="#f9c214"/><stop offset="0.100" stop-color="#e6a00e"/><stop offset="0.127" stop-color="#e19a0d"/><stop offset="0.154" stop-color="#e0990d"/><stop offset="0.350" stop-color="#eaa50f"/><stop offset="0.443" stop-color="#edaa14"/><stop offset="0.519" stop-color="#efae1d"/><stop offset="0.688" stop-color="#f4ba38"/><stop offset="0.764" stop-color="#f5be3e"/><stop offset="0.824" stop-color="#f6bf3b"/><stop offset="0.884" stop-color="#f8c331"/><stop offset="0.955" stop-color="#fdd420"/><stop offset="0.982" stop-color="#fedc1d"/><stop offset="0.998" stop-color="#fede1b"/></linearGradient><linearGradient id="c38" gradientUnits="userSpaceOnUse" x1="908.0" x2="1092.4"><stop offset="0.002" stop-color="#f9c214"/><stop offset="0.018" stop-color="#f8c114"/><stop offset="0.072" stop-color="#eca80f"/><stop offset="0.099" stop-color="#e59e0e"/><stop offset="0.126" stop-color="#e1990d"/><stop offset="0.153" stop-color="#e0980c"/><stop offset="0.347" stop-color="#e9a40f"/><stop offset="0.438" stop-color="#eca914"/><stop offset="0.519" stop-color="#efae1d"/><stop offset="0.686" stop-color="#f4ba39"/><stop offset="0.761" stop-color="#f5bf3f"/><stop offset="0.820" stop-color="#f6c03d"/><stop offset="0.885" stop-color="#f8c332"/><stop offset="0.955" stop-color="#fdd420"/><stop offset="0.982" stop-color="#fedc1d"/><stop offset="0.998" stop-color="#fede1b"/></linearGradient><linearGradient id="c39" gradientUnits="userSpaceOnUse" x1="907.0" x2="1093.4"><stop offset="0.002" stop-color="#f8c114"/><stop offset="0.018" stop-color="#f8c114"/><stop offset="0.071" stop-color="#eba70f"/><stop offset="0.098" stop-color="#e49d0d"/><stop offset="0.146" stop-color="#df970c"/><stop offset="0.343" stop-color="#e9a30f"/><stop offset="0.439" stop-color="#eca914"/><stop offset="0.519" stop-color="#efae1e"/><stop offset="0.684" stop-color="#f4ba3b"/><stop offset="0.764" stop-color="#f5bf42"/><stop offset="0.822" stop-color="#f6c03f"/><stop offset="0.886" stop-color="#f8c233"/><stop offset="0.956" stop-color="#fdd421"/><stop offset="0.982" stop-color="#fedc1d"/><stop offset="0.998" stop-color="#fede1b"/></linearGradient><linearGradient id="c40" gradientUnits="userSpaceOnUse" x1="906.1" x2="1094.3"><stop offset="0.002" stop-color="#f8c114"/><stop offset="0.018" stop-color="#f8c014"/><stop offset="0.070" stop-color="#eaa60f"/><stop offset="0.097" stop-color="#e39c0d"/><stop offset="0.144" stop-color="#de960c"/><stop offset="0.344" stop-color="#e9a30f"/><stop offset="0.439" stop-color="#eca914"/><stop offset="0.518" stop-color="#efae1e"/><stop offset="0.682" stop-color="#f4bb3c"/><stop offset="0.761" stop-color="#f5bf43"/><stop offset="0.824" stop-color="#f6c140"/><stop offset="0.887" stop-color="#f8c234"/><stop offset="0.919" stop-color="#fac82b"/><stop offset="0.956" stop-color="#fdd421"/><stop offset="0.982" stop-color="#fedc1d"/><stop offset="0.998" stop-color="#fede1b"/></linearGradient><linearGradient id="c41" gradientUnits="userSpaceOnUse" x1="905.1" x2="1095.3"><stop offset="0.002" stop-color="#f8c014"/><stop offset="0.017" stop-color="#f8bf14"/><stop offset="0.070" stop-color="#eaa50f"/><stop offset="0.096" stop-color="#e29b0d"/><stop offset="0.143" stop-color="#dd950c"/><stop offset="0.341" stop-color="#e8a20f"/><stop offset="0.435" stop-color="#eca814"/><stop offset="0.518" stop-color="#efad1f"/><stop offset="0.685" stop-color="#f4bb3e"/><stop offset="0.763" stop-color="#f5c045"/><stop offset="0.826" stop-color="#f6c142"/><stop offset="0.894" stop-color="#f8c333"/><stop offset="0.956" stop-color="#fdd321"/><stop offset="0.983" stop-color="#fedc1d"/><stop offset="0.998" stop-color="#fede1b"/></linearGradient><linearGradient id="c42" gradientUnits="userSpaceOnUse" x1="904.2" x2="1096.2"><stop offset="0.002" stop-color="#f7bf14"/><stop offset="0.017" stop-color="#f8bf14"/><stop offset="0.090" stop-color="#e29b0d"/><stop offset="0.110" stop-color="#de960c"/><stop offset="0.136" stop-color="#dc940c"/><stop offset="0.343" stop-color="#e8a20f"/><stop offset="0.435" stop-color="#eca814"/><stop offset="0.518" stop-color="#eead1f"/><stop offset="0.683" stop-color="#f4bb40"/><stop offset="0.766" stop-color="#f6c047"/><stop offset="0.828" stop-color="#f6c143"/><stop offset="0.895" stop-color="#f8c334"/><stop offset="0.957" stop-color="#fdd321"/><stop offset="0.983" stop-color="#fedc1d"/><stop offset="0.998" stop-color="#fede1b"/></linearGradient><linearGradient id="c43" gradientUnits="userSpaceOnUse" x1="903.3" x2="1097.1"><stop offset="0.002" stop-color="#f7be13"/><stop offset="0.017" stop-color="#f7be13"/><stop offset="0.063" stop-color="#eaa50f"/><stop offset="0.089" stop-color="#e19a0d"/><stop offset="0.130" stop-color="#db930c"/><stop offset="0.341" stop-color="#e7a20f"/><stop offset="0.433" stop-color="#eba714"/><stop offset="0.515" stop-color="#eead1f"/><stop offset="0.685" stop-color="#f4bc42"/><stop offset="0.767" stop-color="#f6c149"/><stop offset="0.829" stop-color="#f6c245"/><stop offset="0.895" stop-color="#f8c335"/><stop offset="0.957" stop-color="#fdd321"/><stop offset="0.983" stop-color="#fedc1d"/><stop offset="0.998" stop-color="#fede1b"/></linearGradient><linearGradient id="c44" gradientUnits="userSpaceOnUse" x1="902.4" x2="1098.0"><stop offset="0.002" stop-color="#f7bd13"/><stop offset="0.017" stop-color="#f7bd13"/><stop offset="0.063" stop-color="#e9a40e"/><stop offset="0.088" stop-color="#e0990d"/><stop offset="0.129" stop-color="#db930b"/><stop offset="0.342" stop-color="#e7a10f"/><stop offset="0.434" stop-color="#eba714"/><stop offset="0.515" stop-color="#eead20"/><stop offset="0.688" stop-color="#f4bc44"/><stop offset="0.769" stop-color="#f6c14b"/><stop offset="0.830" stop-color="#f6c246"/><stop offset="0.897" stop-color="#f8c336"/><stop offset="0.927" stop-color="#fac92b"/><stop offset="0.958" stop-color="#fdd321"/><stop offset="0.983" stop-color="#fedc1d"/><stop offset="0.998" stop-color="#fede1b"/></linearGradient><linearGradient id="c45" gradientUnits="userSpaceOnUse" x1="901.5" x2="1098.9"><stop offset="0.002" stop-color="#f6bb13"/><stop offset="0.017" stop-color="#f7bd13"/><stop offset="0.062" stop-color="#e8a30e"/><stop offset="0.087" stop-color="#df980c"/><stop offset="0.128" stop-color="#da920b"/><stop offset="0.339" stop-color="#e7a10f"/><stop offset="0.435" stop-color="#eba714"/><stop offset="0.515" stop-color="#eeac20"/><stop offset="0.686" stop-color="#f4bc45"/><stop offset="0.767" stop-color="#f6c24d"/><stop offset="0.832" stop-color="#f6c248"/><stop offset="0.898" stop-color="#f8c236"/><stop offset="0.928" stop-color="#fac82b"/><stop offset="0.958" stop-color="#fdd321"/><stop offset="0.983" stop-color="#fedc1d"/><stop offset="0.998" stop-color="#fede1b"/></linearGradient><linearGradient id="c46" gradientUnits="userSpaceOnUse" x1="900.7" x2="1099.7"><stop offset="0.002" stop-color="#f6ba13"/><stop offset="0.017" stop-color="#f6bc13"/><stop offset="0.076" stop-color="#e29b0d"/><stop offset="0.101" stop-color="#db930c"/><stop offset="0.121" stop-color="#d9910b"/><stop offset="0.336" stop-color="#e6a00e"/><stop offset="0.430" stop-color="#eaa614"/><stop offset="0.515" stop-color="#eeac21"/><stop offset="0.684" stop-color="#f4bd46"/><stop offset="0.769" stop-color="#f6c24f"/><stop offset="0.834" stop-color="#f6c349"/><stop offset="0.899" stop-color="#f8c237"/><stop offset="0.928" stop-color="#fac82c"/><stop offset="0.958" stop-color="#fcd222"/><stop offset="0.983" stop-color="#fedc1d"/><stop offset="0.998" stop-color="#fede1b"/></linearGradient><linearGradient id="c47" gradientUnits="userSpaceOnUse" x1="899.8" x2="1100.6"><stop offset="0.002" stop-color="#f5ba12"/><stop offset="0.012" stop-color="#f6bc13"/><stop offset="0.022" stop-color="#f5b912"/><stop offset="0.061" stop-color="#e7a10e"/><stop offset="0.086" stop-color="#dd960c"/><stop offset="0.121" stop-color="#d8900b"/><stop offset="0.339" stop-color="#e6a00e"/><stop offset="0.433" stop-color="#eaa614"/><stop offset="0.512" stop-color="#edac21"/><stop offset="0.686" stop-color="#f4bd48"/><stop offset="0.765" stop-color="#f6c250"/><stop offset="0.835" stop-color="#f6c34a"/><stop offset="0.904" stop-color="#f8c336"/><stop offset="0.959" stop-color="#fcd222"/><stop offset="0.983" stop-color="#fedc1d"/><stop offset="0.998" stop-color="#fede1b"/></linearGradient><linearGradient id="c48" gradientUnits="userSpaceOnUse" x1="899.0" x2="1101.4"><stop offset="0.002" stop-color="#f5b912"/><stop offset="0.012" stop-color="#f6bb13"/><stop offset="0.021" stop-color="#f5b712"/><stop offset="0.061" stop-color="#e6a00e"/><stop offset="0.085" stop-color="#dc940c"/><stop offset="0.120" stop-color="#d78f0b"/><stop offset="0.336" stop-color="#e69f0e"/><stop offset="0.429" stop-color="#eaa514"/><stop offset="0.512" stop-color="#edac21"/><stop offset="0.684" stop-color="#f4bd49"/><stop offset="0.768" stop-color="#f6c352"/><stop offset="0.836" stop-color="#f6c34b"/><stop offset="0.905" stop-color="#f8c336"/><stop offset="0.959" stop-color="#fcd222"/><stop offset="0.984" stop-color="#fedb1d"/><stop offset="0.998" stop-color="#fede1b"/></linearGradient><linearGradient id="c49" gradientUnits="userSpaceOnUse" x1="898.2" x2="1102.2"><stop offset="0.002" stop-color="#f5b812"/><stop offset="0.011" stop-color="#f6ba13"/><stop offset="0.021" stop-color="#f4b612"/><stop offset="0.065" stop-color="#e39c0d"/><stop offset="0.084" stop-color="#db930c"/><stop offset="0.118" stop-color="#d68e0b"/><stop offset="0.337" stop-color="#e59f0e"/><stop offset="0.430" stop-color="#eaa514"/><stop offset="0.512" stop-color="#edab22"/><stop offset="0.682" stop-color="#f4bd4a"/><stop offset="0.765" stop-color="#f6c353"/><stop offset="0.833" stop-color="#f6c34d"/><stop offset="0.906" stop-color="#f8c337"/><stop offset="0.930" stop-color="#fac72d"/><stop offset="0.959" stop-color="#fcd222"/><stop offset="0.984" stop-color="#fedb1d"/><stop offset="0.998" stop-color="#fedd1b"/></linearGradient><linearGradient id="c50" gradientUnits="userSpaceOnUse" x1="897.4" x2="1103.0"><stop offset="0.002" stop-color="#f5b812"/><stop offset="0.021" stop-color="#f3b512"/><stop offset="0.079" stop-color="#dc940c"/><stop offset="0.113" stop-color="#d58d0b"/><stop offset="0.340" stop-color="#e59f0e"/><stop offset="0.432" stop-color="#eaa514"/><stop offset="0.515" stop-color="#edab23"/><stop offset="0.684" stop-color="#f4be4c"/><stop offset="0.766" stop-color="#f6c455"/><stop offset="0.834" stop-color="#f6c44f"/><stop offset="0.906" stop-color="#f8c237"/><stop offset="0.931" stop-color="#fac72d"/><stop offset="0.960" stop-color="#fcd122"/><stop offset="0.984" stop-color="#fedb1d"/><stop offset="0.998" stop-color="#fedd1b"/></linearGradient><linearGradient id="c51" gradientUnits="userSpaceOnUse" x1="896.6" x2="1103.8"><stop offset="0.002" stop-color="#f5b812"/><stop offset="0.021" stop-color="#f3b411"/><stop offset="0.078" stop-color="#db930c"/><stop offset="0.112" stop-color="#d48c0a"/><stop offset="0.337" stop-color="#e59e0e"/><stop offset="0.428" stop-color="#e9a414"/><stop offset="0.510" stop-color="#edab22"/><stop offset="0.687" stop-color="#f4be4e"/><stop offset="0.768" stop-color="#f6c456"/><stop offset="0.835" stop-color="#f6c450"/><stop offset="0.907" stop-color="#f7c238"/><stop offset="0.931" stop-color="#fac72d"/><stop offset="0.960" stop-color="#fcd122"/><stop offset="0.984" stop-color="#fedb1d"/><stop offset="0.998" stop-color="#fedd1b"/></linearGradient><linearGradient id="c52" gradientUnits="userSpaceOnUse" x1="895.9" x2="1104.5"><stop offset="0.002" stop-color="#f5b812"/><stop offset="0.016" stop-color="#f3b512"/><stop offset="0.030" stop-color="#efad10"/><stop offset="0.078" stop-color="#da920b"/><stop offset="0.111" stop-color="#d38b0a"/><stop offset="0.340" stop-color="#e59e0e"/><stop offset="0.431" stop-color="#e9a414"/><stop offset="0.512" stop-color="#edab23"/><stop offset="0.684" stop-color="#f4be4e"/><stop offset="0.765" stop-color="#f6c458"/><stop offset="0.803" stop-color="#f6c556"/><stop offset="0.836" stop-color="#f6c451"/><stop offset="0.870" stop-color="#f6c247"/><stop offset="0.908" stop-color="#f7c238"/><stop offset="0.932" stop-color="#f9c72d"/><stop offset="0.960" stop-color="#fcd122"/><stop offset="0.984" stop-color="#fedb1d"/><stop offset="0.998" stop-color="#fedd1b"/></linearGradient><linearGradient id="c53" gradientUnits="userSpaceOnUse" x1="895.1" x2="1105.3"><stop offset="0.002" stop-color="#f5b812"/><stop offset="0.011" stop-color="#f4b612"/><stop offset="0.030" stop-color="#eeac10"/><stop offset="0.077" stop-color="#d9910b"/><stop offset="0.110" stop-color="#d28b0a"/><stop offset="0.342" stop-color="#e49e0e"/><stop offset="0.432" stop-color="#e9a415"/><stop offset="0.512" stop-color="#ecaa23"/><stop offset="0.687" stop-color="#f4bf50"/><stop offset="0.767" stop-color="#f6c559"/><stop offset="0.805" stop-color="#f6c557"/><stop offset="0.838" stop-color="#f6c451"/><stop offset="0.871" stop-color="#f6c248"/><stop offset="0.909" stop-color="#f7c238"/><stop offset="0.932" stop-color="#f9c62d"/><stop offset="0.961" stop-color="#fcd122"/><stop offset="0.984" stop-color="#fedb1c"/><stop offset="0.998" stop-color="#fedd1b"/></linearGradient><linearGradient id="c54" gradientUnits="userSpaceOnUse" x1="894.4" x2="1106.0"><stop offset="0.002" stop-color="#f5b812"/><stop offset="0.011" stop-color="#f4b612"/><stop offset="0.030" stop-color="#eeab10"/><stop offset="0.077" stop-color="#d8900b"/><stop offset="0.110" stop-color="#d28a0a"/><stop offset="0.340" stop-color="#e49d0e"/><stop offset="0.429" stop-color="#e8a314"/><stop offset="0.514" stop-color="#ecaa24"/><stop offset="0.683" stop-color="#f4be51"/><stop offset="0.726" stop-color="#f5c358"/><stop offset="0.768" stop-color="#f6c55b"/><stop offset="0.806" stop-color="#f6c658"/><stop offset="0.838" stop-color="#f6c552"/><stop offset="0.871" stop-color="#f6c348"/><stop offset="0.909" stop-color="#f7c239"/><stop offset="0.933" stop-color="#f9c62e"/><stop offset="0.961" stop-color="#fcd022"/><stop offset="0.984" stop-color="#fedb1c"/><stop offset="0.998" stop-color="#fedd1b"/></linearGradient><linearGradient id="c55" gradientUnits="userSpaceOnUse" x1="893.7" x2="1106.7"><stop offset="0.002" stop-color="#f5b812"/><stop offset="0.011" stop-color="#f4b612"/><stop offset="0.025" stop-color="#efac10"/><stop offset="0.072" stop-color="#d9910b"/><stop offset="0.104" stop-color="#d1890a"/><stop offset="0.337" stop-color="#e39c0e"/><stop offset="0.430" stop-color="#e8a314"/><stop offset="0.514" stop-color="#ecaa24"/><stop offset="0.686" stop-color="#f4bf52"/><stop offset="0.765" stop-color="#f6c55c"/><stop offset="0.803" stop-color="#f6c65a"/><stop offset="0.835" stop-color="#f6c554"/><stop offset="0.873" stop-color="#f6c349"/><stop offset="0.910" stop-color="#f7c139"/><stop offset="0.933" stop-color="#f9c62e"/><stop offset="0.961" stop-color="#fcd022"/><stop offset="0.984" stop-color="#fedb1c"/><stop offset="0.998" stop-color="#fedd1b"/></linearGradient><linearGradient id="c56" gradientUnits="userSpaceOnUse" x1="893.0" x2="1107.4"><stop offset="0.002" stop-color="#f5b812"/><stop offset="0.011" stop-color="#f4b612"/><stop offset="0.043" stop-color="#e59f0e"/><stop offset="0.071" stop-color="#d8900b"/><stop offset="0.090" stop-color="#d1890a"/><stop offset="0.104" stop-color="#d0880a"/><stop offset="0.340" stop-color="#e39c0e"/><stop offset="0.428" stop-color="#e8a214"/><stop offset="0.512" stop-color="#ecaa24"/><stop offset="0.683" stop-color="#f3bf53"/><stop offset="0.725" stop-color="#f5c35a"/><stop offset="0.767" stop-color="#f6c65d"/><stop offset="0.804" stop-color="#f6c65b"/><stop offset="0.836" stop-color="#f6c555"/><stop offset="0.873" stop-color="#f6c349"/><stop offset="0.910" stop-color="#f7c139"/><stop offset="0.933" stop-color="#f9c52e"/><stop offset="0.961" stop-color="#fcd022"/><stop offset="0.984" stop-color="#fedb1c"/><stop offset="0.998" stop-color="#fedd1b"/></linearGradient><linearGradient id="c57" gradientUnits="userSpaceOnUse" x1="892.3" x2="1108.1"><stop offset="0.002" stop-color="#f5b812"/><stop offset="0.011" stop-color="#f4b512"/><stop offset="0.034" stop-color="#e9a30e"/><stop offset="0.062" stop-color="#db930c"/><stop offset="0.085" stop-color="#d1890a"/><stop offset="0.103" stop-color="#cf870a"/><stop offset="0.338" stop-color="#e39c0e"/><stop offset="0.426" stop-color="#e7a214"/><stop offset="0.509" stop-color="#eba923"/><stop offset="0.685" stop-color="#f3bf54"/><stop offset="0.726" stop-color="#f5c35b"/><stop offset="0.768" stop-color="#f6c65e"/><stop offset="0.805" stop-color="#f6c65c"/><stop offset="0.841" stop-color="#f6c555"/><stop offset="0.878" stop-color="#f6c248"/><stop offset="0.915" stop-color="#f7c237"/><stop offset="0.938" stop-color="#f9c72c"/><stop offset="0.961" stop-color="#fcd022"/><stop offset="0.985" stop-color="#feda1c"/><stop offset="0.998" stop-color="#fedd1b"/></linearGradient><linearGradient id="c58" gradientUnits="userSpaceOnUse" x1="891.6" x2="1108.8"><stop offset="0.002" stop-color="#f5b812"/><stop offset="0.011" stop-color="#f4b512"/><stop offset="0.034" stop-color="#e8a20e"/><stop offset="0.061" stop-color="#d9910b"/><stop offset="0.084" stop-color="#d0880a"/><stop offset="0.102" stop-color="#ce8609"/><stop offset="0.335" stop-color="#e29b0e"/><stop offset="0.427" stop-color="#e7a214"/><stop offset="0.509" stop-color="#eba924"/><stop offset="0.683" stop-color="#f3bf55"/><stop offset="0.724" stop-color="#f5c45c"/><stop offset="0.765" stop-color="#f6c65f"/><stop offset="0.802" stop-color="#f6c75d"/><stop offset="0.838" stop-color="#f6c556"/><stop offset="0.875" stop-color="#f6c34a"/><stop offset="0.916" stop-color="#f7c137"/><stop offset="0.939" stop-color="#f9c62c"/><stop offset="0.962" stop-color="#fcd022"/><stop offset="0.985" stop-color="#feda1c"/><stop offset="0.998" stop-color="#fedd1b"/></linearGradient><linearGradient id="c59" gradientUnits="userSpaceOnUse" x1="890.9" x2="1109.4"><stop offset="0.002" stop-color="#f5b712"/><stop offset="0.011" stop-color="#f4b512"/><stop offset="0.033" stop-color="#e7a00e"/><stop offset="0.056" stop-color="#da910b"/><stop offset="0.084" stop-color="#cf870a"/><stop offset="0.102" stop-color="#cd8509"/><stop offset="0.206" stop-color="#d8900b"/><stop offset="0.338" stop-color="#e29b0e"/><stop offset="0.429" stop-color="#e7a114"/><stop offset="0.511" stop-color="#eba924"/><stop offset="0.684" stop-color="#f3bf56"/><stop offset="0.725" stop-color="#f5c45d"/><stop offset="0.766" stop-color="#f6c660"/><stop offset="0.803" stop-color="#f6c75e"/><stop offset="0.839" stop-color="#f6c557"/><stop offset="0.876" stop-color="#f6c34b"/><stop offset="0.916" stop-color="#f7c137"/><stop offset="0.939" stop-color="#f9c62c"/><stop offset="0.962" stop-color="#fccf22"/><stop offset="0.985" stop-color="#feda1c"/><stop offset="0.998" stop-color="#fedd1b"/></linearGradient><linearGradient id="c60" gradientUnits="userSpaceOnUse" x1="890.3" x2="1110.1"><stop offset="0.002" stop-color="#f5b712"/><stop offset="0.011" stop-color="#f3b512"/><stop offset="0.020" stop-color="#efad10"/><stop offset="0.038" stop-color="#e29b0d"/><stop offset="0.056" stop-color="#d8900b"/><stop offset="0.074" stop-color="#d0880a"/><stop offset="0.097" stop-color="#cc8409"/><stop offset="0.210" stop-color="#d8900b"/><stop offset="0.337" stop-color="#e19a0d"/><stop offset="0.428" stop-color="#e7a114"/><stop offset="0.509" stop-color="#eba824"/><stop offset="0.686" stop-color="#f3c057"/><stop offset="0.727" stop-color="#f5c45e"/><stop offset="0.767" stop-color="#f6c761"/><stop offset="0.804" stop-color="#f6c75f"/><stop offset="0.840" stop-color="#f6c657"/><stop offset="0.876" stop-color="#f6c34b"/><stop offset="0.917" stop-color="#f7c137"/><stop offset="0.940" stop-color="#f9c62c"/><stop offset="0.962" stop-color="#fccf21"/><stop offset="0.989" stop-color="#fedc1c"/><stop offset="0.998" stop-color="#fedd1b"/></linearGradient><linearGradient id="c61" gradientUnits="userSpaceOnUse" x1="889.7" x2="1110.7"><stop offset="0.002" stop-color="#f4b712"/><stop offset="0.011" stop-color="#f3b512"/><stop offset="0.020" stop-color="#efad10"/><stop offset="0.038" stop-color="#e19a0d"/><stop offset="0.055" stop-color="#d68e0b"/><stop offset="0.073" stop-color="#ce870a"/><stop offset="0.096" stop-color="#cb8309"/><stop offset="0.208" stop-color="#d78f0b"/><stop offset="0.338" stop-color="#e19a0d"/><stop offset="0.428" stop-color="#e6a114"/><stop offset="0.513" stop-color="#eba825"/><stop offset="0.684" stop-color="#f3c057"/><stop offset="0.725" stop-color="#f5c45f"/><stop offset="0.765" stop-color="#f6c762"/><stop offset="0.805" stop-color="#f6c75f"/><stop offset="0.841" stop-color="#f6c658"/><stop offset="0.877" stop-color="#f6c34b"/><stop offset="0.918" stop-color="#f7c137"/><stop offset="0.940" stop-color="#f9c52b"/><stop offset="0.962" stop-color="#fccf21"/><stop offset="0.989" stop-color="#fedc1c"/><stop offset="0.998" stop-color="#fedd1b"/></linearGradient><linearGradient id="c62" gradientUnits="userSpaceOnUse" x1="889.0" x2="1111.3"><stop offset="0.002" stop-color="#f4b712"/><stop offset="0.011" stop-color="#f3b512"/><stop offset="0.019" stop-color="#efad10"/><stop offset="0.042" stop-color="#dd950c"/><stop offset="0.055" stop-color="#d48c0a"/><stop offset="0.073" stop-color="#cc8509"/><stop offset="0.095" stop-color="#ca8309"/><stop offset="0.207" stop-color="#d78e0b"/><stop offset="0.337" stop-color="#e1990d"/><stop offset="0.426" stop-color="#e6a014"/><stop offset="0.511" stop-color="#eaa825"/><stop offset="0.686" stop-color="#f3c058"/><stop offset="0.726" stop-color="#f5c460"/><stop offset="0.766" stop-color="#f6c763"/><stop offset="0.806" stop-color="#f6c760"/><stop offset="0.842" stop-color="#f6c658"/><stop offset="0.878" stop-color="#f6c24b"/><stop offset="0.918" stop-color="#f7c037"/><stop offset="0.940" stop-color="#f9c52b"/><stop offset="0.963" stop-color="#fccf21"/><stop offset="0.989" stop-color="#fedc1c"/><stop offset="0.998" stop-color="#fedd1b"/></linearGradient><linearGradient id="c63" gradientUnits="userSpaceOnUse" x1="888.4" x2="1111.9"><stop offset="0.002" stop-color="#f4b712"/><stop offset="0.010" stop-color="#f3b512"/><stop offset="0.019" stop-color="#efad10"/><stop offset="0.042" stop-color="#dc940c"/><stop offset="0.055" stop-color="#d28a0a"/><stop offset="0.073" stop-color="#ca8309"/><stop offset="0.091" stop-color="#c88109"/><stop offset="0.206" stop-color="#d68e0b"/><stop offset="0.340" stop-color="#e0990d"/><stop offset="0.429" stop-color="#e6a014"/><stop offset="0.513" stop-color="#eaa826"/><stop offset="0.682" stop-color="#f3c058"/><stop offset="0.727" stop-color="#f5c561"/><stop offset="0.767" stop-color="#f6c763"/><stop offset="0.807" stop-color="#f6c761"/><stop offset="0.843" stop-color="#f6c659"/><stop offset="0.878" stop-color="#f6c24b"/><stop offset="0.918" stop-color="#f7c037"/><stop offset="0.941" stop-color="#f9c52b"/><stop offset="0.963" stop-color="#fcce21"/><stop offset="0.990" stop-color="#fedb1b"/><stop offset="0.998" stop-color="#fedc1b"/></linearGradient><linearGradient id="c64" gradientUnits="userSpaceOnUse" x1="887.8" x2="1112.5"><stop offset="0.002" stop-color="#f4b712"/><stop offset="0.010" stop-color="#f3b412"/><stop offset="0.019" stop-color="#efac10"/><stop offset="0.046" stop-color="#d78f0b"/><stop offset="0.055" stop-color="#d0880a"/><stop offset="0.068" stop-color="#c98209"/><stop offset="0.086" stop-color="#c68008"/><stop offset="0.232" stop-color="#d8900b"/><stop offset="0.356" stop-color="#e19a0e"/><stop offset="0.427" stop-color="#e59f14"/><stop offset="0.511" stop-color="#eaa725"/><stop offset="0.684" stop-color="#f3c059"/><stop offset="0.724" stop-color="#f5c461"/><stop offset="0.764" stop-color="#f6c764"/><stop offset="0.803" stop-color="#f6c862"/><stop offset="0.839" stop-color="#f6c65a"/><stop offset="0.874" stop-color="#f6c34d"/><stop offset="0.919" stop-color="#f7c037"/><stop offset="0.941" stop-color="#f9c52b"/><stop offset="0.963" stop-color="#fcce21"/><stop offset="0.990" stop-color="#fedb1b"/><stop offset="0.998" stop-color="#fedc1b"/></linearGradient><linearGradient id="c65" gradientUnits="userSpaceOnUse" x1="887.2" x2="1113.1"><stop offset="0.002" stop-color="#f4b712"/><stop offset="0.010" stop-color="#f3b412"/><stop offset="0.024" stop-color="#eba70f"/><stop offset="0.054" stop-color="#ce8609"/><stop offset="0.068" stop-color="#c78009"/><stop offset="0.085" stop-color="#c47e08"/><stop offset="0.222" stop-color="#d68e0b"/><stop offset="0.354" stop-color="#e1990e"/><stop offset="0.429" stop-color="#e59f14"/><stop offset="0.513" stop-color="#eaa726"/><stop offset="0.685" stop-color="#f3c05a"/><stop offset="0.725" stop-color="#f5c562"/><stop offset="0.765" stop-color="#f5c765"/><stop offset="0.804" stop-color="#f6c862"/><stop offset="0.840" stop-color="#f6c65a"/><stop offset="0.875" stop-color="#f6c34d"/><stop offset="0.919" stop-color="#f6c037"/><stop offset="0.941" stop-color="#f9c42b"/><stop offset="0.963" stop-color="#fcce21"/><stop offset="0.990" stop-color="#fedb1b"/><stop offset="0.998" stop-color="#fedc1b"/></linearGradient><linearGradient id="c66" gradientUnits="userSpaceOnUse" x1="886.7" x2="1113.7"><stop offset="0.002" stop-color="#f4b712"/><stop offset="0.010" stop-color="#f3b411"/><stop offset="0.023" stop-color="#eba70f"/><stop offset="0.054" stop-color="#cc8509"/><stop offset="0.067" stop-color="#c47e08"/><stop offset="0.080" stop-color="#c27c08"/><stop offset="0.211" stop-color="#d58d0b"/><stop offset="0.351" stop-color="#e0990d"/><stop offset="0.426" stop-color="#e59f13"/><stop offset="0.509" stop-color="#e9a624"/><stop offset="0.684" stop-color="#f3c05a"/><stop offset="0.727" stop-color="#f5c562"/><stop offset="0.767" stop-color="#f5c765"/><stop offset="0.806" stop-color="#f6c862"/><stop offset="0.841" stop-color="#f6c65a"/><stop offset="0.876" stop-color="#f6c24d"/><stop offset="0.920" stop-color="#f6bf37"/><stop offset="0.942" stop-color="#f9c42b"/><stop offset="0.963" stop-color="#fcce21"/><stop offset="0.990" stop-color="#fedb1b"/><stop offset="0.998" stop-color="#fedc1b"/></linearGradient><linearGradient id="c67" gradientUnits="userSpaceOnUse" x1="886.1" x2="1114.3"><stop offset="0.002" stop-color="#f4b712"/><stop offset="0.010" stop-color="#f3b411"/><stop offset="0.023" stop-color="#eba70f"/><stop offset="0.058" stop-color="#c78009"/><stop offset="0.080" stop-color="#bf7a08"/><stop offset="0.115" stop-color="#c88109"/><stop offset="0.202" stop-color="#d38b0a"/><stop offset="0.354" stop-color="#e0980e"/><stop offset="0.428" stop-color="#e59e14"/><stop offset="0.511" stop-color="#e9a625"/><stop offset="0.685" stop-color="#f3c05b"/><stop offset="0.724" stop-color="#f4c562"/><stop offset="0.763" stop-color="#f5c766"/><stop offset="0.803" stop-color="#f6c863"/><stop offset="0.842" stop-color="#f6c65a"/><stop offset="0.877" stop-color="#f6c24d"/><stop offset="0.920" stop-color="#f6bf36"/><stop offset="0.942" stop-color="#f9c42a"/><stop offset="0.964" stop-color="#fccd20"/><stop offset="0.990" stop-color="#fedb1b"/><stop offset="0.998" stop-color="#fedc1b"/></linearGradient><linearGradient id="c68" gradientUnits="userSpaceOnUse" x1="885.6" x2="1114.8"><stop offset="0.002" stop-color="#f4b712"/><stop offset="0.010" stop-color="#f3b411"/><stop offset="0.023" stop-color="#eba60f"/><stop offset="0.058" stop-color="#c57f08"/><stop offset="0.067" stop-color="#bf7a08"/><stop offset="0.080" stop-color="#bd7807"/><stop offset="0.114" stop-color="#c78009"/><stop offset="0.192" stop-color="#d18a0a"/><stop offset="0.348" stop-color="#df980d"/><stop offset="0.426" stop-color="#e49e13"/><stop offset="0.513" stop-color="#e9a626"/><stop offset="0.686" stop-color="#f3c05b"/><stop offset="0.725" stop-color="#f4c563"/><stop offset="0.764" stop-color="#f5c766"/><stop offset="0.803" stop-color="#f6c863"/><stop offset="0.842" stop-color="#f6c65a"/><stop offset="0.877" stop-color="#f6c24d"/><stop offset="0.920" stop-color="#f6bf36"/><stop offset="0.942" stop-color="#f8c32a"/><stop offset="0.964" stop-color="#fbcd20"/><stop offset="0.990" stop-color="#fedb1b"/><stop offset="0.998" stop-color="#fedc1b"/></linearGradient><linearGradient id="c69" gradientUnits="userSpaceOnUse" x1="885.0" x2="1115.4"><stop offset="0.002" stop-color="#f4b712"/><stop offset="0.010" stop-color="#f3b411"/><stop offset="0.023" stop-color="#eba60f"/><stop offset="0.058" stop-color="#c47e08"/><stop offset="0.066" stop-color="#bd7807"/><stop offset="0.079" stop-color="#ba7607"/><stop offset="0.118" stop-color="#c78009"/><stop offset="0.183" stop-color="#d0880a"/><stop offset="0.351" stop-color="#df970d"/><stop offset="0.429" stop-color="#e49e14"/><stop offset="0.511" stop-color="#e9a625"/><stop offset="0.683" stop-color="#f3c05b"/><stop offset="0.727" stop-color="#f4c563"/><stop offset="0.765" stop-color="#f5c766"/><stop offset="0.804" stop-color="#f6c864"/><stop offset="0.843" stop-color="#f6c55a"/><stop offset="0.878" stop-color="#f6c24d"/><stop offset="0.921" stop-color="#f6be36"/><stop offset="0.942" stop-color="#f8c32a"/><stop offset="0.964" stop-color="#fbcd20"/><stop offset="0.990" stop-color="#fedb1b"/><stop offset="0.998" stop-color="#fedc1b"/></linearGradient><linearGradient id="c70" gradientUnits="userSpaceOnUse" x1="884.5" x2="1115.9"><stop offset="0.002" stop-color="#f4b612"/><stop offset="0.010" stop-color="#f3b411"/><stop offset="0.023" stop-color="#eba60f"/><stop offset="0.062" stop-color="#bf7908"/><stop offset="0.070" stop-color="#b97507"/><stop offset="0.079" stop-color="#b77407"/><stop offset="0.118" stop-color="#c57f08"/><stop offset="0.173" stop-color="#ce8609"/><stop offset="0.350" stop-color="#de970d"/><stop offset="0.427" stop-color="#e49d13"/><stop offset="0.513" stop-color="#e9a625"/><stop offset="0.685" stop-color="#f3c05b"/><stop offset="0.728" stop-color="#f4c564"/><stop offset="0.766" stop-color="#f5c767"/><stop offset="0.805" stop-color="#f6c764"/><stop offset="0.844" stop-color="#f6c55a"/><stop offset="0.878" stop-color="#f6c24d"/><stop offset="0.921" stop-color="#f6be36"/><stop offset="0.943" stop-color="#f8c32a"/><stop offset="0.964" stop-color="#fbcd20"/><stop offset="0.990" stop-color="#fedb1b"/><stop offset="0.998" stop-color="#fedc1a"/></linearGradient><linearGradient id="c71" gradientUnits="userSpaceOnUse" x1="884.0" x2="1116.4"><stop offset="0.002" stop-color="#f4b612"/><stop offset="0.010" stop-color="#f3b411"/><stop offset="0.023" stop-color="#eaa60f"/><stop offset="0.061" stop-color="#be7907"/><stop offset="0.070" stop-color="#b67307"/><stop offset="0.079" stop-color="#b57207"/><stop offset="0.121" stop-color="#c57f08"/><stop offset="0.168" stop-color="#cc8509"/><stop offset="0.348" stop-color="#de960d"/><stop offset="0.429" stop-color="#e39d14"/><stop offset="0.515" stop-color="#e9a626"/><stop offset="0.682" stop-color="#f2bf5b"/><stop offset="0.725" stop-color="#f4c464"/><stop offset="0.763" stop-color="#f5c767"/><stop offset="0.802" stop-color="#f6c764"/><stop offset="0.840" stop-color="#f6c55c"/><stop offset="0.879" stop-color="#f6c14c"/><stop offset="0.921" stop-color="#f6be35"/><stop offset="0.943" stop-color="#f8c229"/><stop offset="0.964" stop-color="#fbcc20"/><stop offset="0.990" stop-color="#feda1b"/><stop offset="0.998" stop-color="#fedc1a"/></linearGradient><linearGradient id="c72" gradientUnits="userSpaceOnUse" x1="883.5" x2="1116.9"><stop offset="0.001" stop-color="#f4b612"/><stop offset="0.010" stop-color="#f3b311"/><stop offset="0.023" stop-color="#eaa50f"/><stop offset="0.057" stop-color="#c27c08"/><stop offset="0.070" stop-color="#b57207"/><stop offset="0.078" stop-color="#b27006"/><stop offset="0.121" stop-color="#c47e08"/><stop offset="0.159" stop-color="#ca8309"/><stop offset="0.351" stop-color="#de960d"/><stop offset="0.432" stop-color="#e39d14"/><stop offset="0.513" stop-color="#e8a525"/><stop offset="0.683" stop-color="#f2bf5b"/><stop offset="0.726" stop-color="#f4c464"/><stop offset="0.764" stop-color="#f5c767"/><stop offset="0.803" stop-color="#f6c764"/><stop offset="0.841" stop-color="#f6c55b"/><stop offset="0.879" stop-color="#f5c14c"/><stop offset="0.922" stop-color="#f6be35"/><stop offset="0.943" stop-color="#f8c229"/><stop offset="0.964" stop-color="#fbcc1f"/><stop offset="0.990" stop-color="#feda1b"/><stop offset="0.999" stop-color="#fedc1a"/></linearGradient><linearGradient id="c73" gradientUnits="userSpaceOnUse" x1="883.0" x2="1117.4"><stop offset="0.001" stop-color="#f4b612"/><stop offset="0.010" stop-color="#f3b311"/><stop offset="0.023" stop-color="#eaa50f"/><stop offset="0.057" stop-color="#c17c08"/><stop offset="0.069" stop-color="#b47106"/><stop offset="0.078" stop-color="#b06e06"/><stop offset="0.120" stop-color="#c27c08"/><stop offset="0.154" stop-color="#c98209"/><stop offset="0.349" stop-color="#dd950d"/><stop offset="0.430" stop-color="#e39c13"/><stop offset="0.515" stop-color="#e8a526"/><stop offset="0.685" stop-color="#f2bf5c"/><stop offset="0.727" stop-color="#f4c464"/><stop offset="0.765" stop-color="#f5c767"/><stop offset="0.803" stop-color="#f5c764"/><stop offset="0.842" stop-color="#f6c55b"/><stop offset="0.880" stop-color="#f5c14c"/><stop offset="0.922" stop-color="#f6bd35"/><stop offset="0.943" stop-color="#f8c229"/><stop offset="0.965" stop-color="#fbcc1f"/><stop offset="0.990" stop-color="#feda1b"/><stop offset="0.999" stop-color="#fedc1a"/></linearGradient><linearGradient id="c74" gradientUnits="userSpaceOnUse" x1="882.5" x2="1117.9"><stop offset="0.001" stop-color="#f4b612"/><stop offset="0.010" stop-color="#f2b311"/><stop offset="0.023" stop-color="#eaa50f"/><stop offset="0.061" stop-color="#bc7707"/><stop offset="0.073" stop-color="#b06e06"/><stop offset="0.082" stop-color="#ad6c06"/><stop offset="0.120" stop-color="#c07b08"/><stop offset="0.149" stop-color="#c78109"/><stop offset="0.348" stop-color="#dd950d"/><stop offset="0.432" stop-color="#e39c14"/><stop offset="0.513" stop-color="#e8a425"/><stop offset="0.686" stop-color="#f2bf5c"/><stop offset="0.728" stop-color="#f4c464"/><stop offset="0.766" stop-color="#f5c767"/><stop offset="0.804" stop-color="#f5c764"/><stop offset="0.842" stop-color="#f5c55b"/><stop offset="0.880" stop-color="#f5c14b"/><stop offset="0.927" stop-color="#f6bd32"/><stop offset="0.944" stop-color="#f8c128"/><stop offset="0.965" stop-color="#fbcc1f"/><stop offset="0.990" stop-color="#feda1b"/><stop offset="0.999" stop-color="#fedb1a"/></linearGradient><linearGradient id="c75" gradientUnits="userSpaceOnUse" x1="882.0" x2="1118.4"><stop offset="0.001" stop-color="#f4b612"/><stop offset="0.010" stop-color="#f2b311"/><stop offset="0.023" stop-color="#eaa50f"/><stop offset="0.056" stop-color="#c07b08"/><stop offset="0.069" stop-color="#b27006"/><stop offset="0.081" stop-color="#ab6b06"/><stop offset="0.123" stop-color="#c07b08"/><stop offset="0.149" stop-color="#c78009"/><stop offset="0.351" stop-color="#dc950d"/><stop offset="0.431" stop-color="#e29b13"/><stop offset="0.515" stop-color="#e8a425"/><stop offset="0.683" stop-color="#f2bf5b"/><stop offset="0.725" stop-color="#f4c464"/><stop offset="0.763" stop-color="#f5c667"/><stop offset="0.805" stop-color="#f5c764"/><stop offset="0.843" stop-color="#f5c45b"/><stop offset="0.881" stop-color="#f5c04b"/><stop offset="0.927" stop-color="#f6bd31"/><stop offset="0.944" stop-color="#f8c128"/><stop offset="0.965" stop-color="#fbcb1f"/><stop offset="0.990" stop-color="#feda1b"/><stop offset="0.999" stop-color="#fedb1a"/></linearGradient><linearGradient id="c76" gradientUnits="userSpaceOnUse" x1="881.5" x2="1118.8"><stop offset="0.001" stop-color="#f4b612"/><stop offset="0.010" stop-color="#f2b311"/><stop offset="0.022" stop-color="#e9a40f"/><stop offset="0.060" stop-color="#ba7607"/><stop offset="0.073" stop-color="#ae6d06"/><stop offset="0.085" stop-color="#aa6a06"/><stop offset="0.123" stop-color="#be7908"/><stop offset="0.148" stop-color="#c67f08"/><stop offset="0.349" stop-color="#dc940c"/><stop offset="0.433" stop-color="#e29b13"/><stop offset="0.517" stop-color="#e7a426"/><stop offset="0.684" stop-color="#f2be5c"/><stop offset="0.722" stop-color="#f3c363"/><stop offset="0.760" stop-color="#f5c667"/><stop offset="0.802" stop-color="#f5c764"/><stop offset="0.839" stop-color="#f5c45b"/><stop offset="0.881" stop-color="#f5c04a"/><stop offset="0.927" stop-color="#f6bd31"/><stop offset="0.944" stop-color="#f8c127"/><stop offset="0.965" stop-color="#fbcb1e"/><stop offset="0.990" stop-color="#feda1b"/><stop offset="0.999" stop-color="#fedb1a"/></linearGradient><linearGradient id="c77" gradientUnits="userSpaceOnUse" x1="881.1" x2="1119.3"><stop offset="0.001" stop-color="#f4b612"/><stop offset="0.010" stop-color="#f2b311"/><stop offset="0.022" stop-color="#e9a40f"/><stop offset="0.043" stop-color="#d0880a"/><stop offset="0.060" stop-color="#ba7607"/><stop offset="0.072" stop-color="#ae6d06"/><stop offset="0.085" stop-color="#a96906"/><stop offset="0.127" stop-color="#be7908"/><stop offset="0.152" stop-color="#c57f08"/><stop offset="0.352" stop-color="#dc940c"/><stop offset="0.431" stop-color="#e19b13"/><stop offset="0.515" stop-color="#e7a325"/><stop offset="0.681" stop-color="#f2be5b"/><stop offset="0.723" stop-color="#f3c363"/><stop offset="0.761" stop-color="#f4c667"/><stop offset="0.802" stop-color="#f5c664"/><stop offset="0.840" stop-color="#f5c45b"/><stop offset="0.878" stop-color="#f5c04c"/><stop offset="0.928" stop-color="#f5bc30"/><stop offset="0.944" stop-color="#f8c027"/><stop offset="0.965" stop-color="#fbcb1e"/><stop offset="0.990" stop-color="#feda1b"/><stop offset="0.999" stop-color="#fedb1a"/></linearGradient><linearGradient id="c78" gradientUnits="userSpaceOnUse" x1="880.6" x2="1119.7"><stop offset="0.001" stop-color="#f4b612"/><stop offset="0.010" stop-color="#f2b311"/><stop offset="0.022" stop-color="#e9a40e"/><stop offset="0.043" stop-color="#d0880a"/><stop offset="0.060" stop-color="#b97507"/><stop offset="0.072" stop-color="#ad6c06"/><stop offset="0.085" stop-color="#a86805"/><stop offset="0.093" stop-color="#aa6a06"/><stop offset="0.130" stop-color="#be7908"/><stop offset="0.155" stop-color="#c57f08"/><stop offset="0.350" stop-color="#db930c"/><stop offset="0.434" stop-color="#e19a13"/><stop offset="0.517" stop-color="#e7a325"/><stop offset="0.683" stop-color="#f1be5b"/><stop offset="0.724" stop-color="#f3c363"/><stop offset="0.762" stop-color="#f4c666"/><stop offset="0.803" stop-color="#f5c664"/><stop offset="0.841" stop-color="#f5c45a"/><stop offset="0.878" stop-color="#f5c04b"/><stop offset="0.928" stop-color="#f5bc30"/><stop offset="0.945" stop-color="#f7c027"/><stop offset="0.965" stop-color="#fbcb1e"/><stop offset="0.990" stop-color="#feda1b"/><stop offset="0.999" stop-color="#fedb1a"/></linearGradient><linearGradient id="c79" gradientUnits="userSpaceOnUse" x1="880.2" x2="1120.2"><stop offset="0.001" stop-color="#f4b612"/><stop offset="0.010" stop-color="#f2b211"/><stop offset="0.022" stop-color="#e9a40e"/><stop offset="0.043" stop-color="#cf880a"/><stop offset="0.059" stop-color="#b97507"/><stop offset="0.076" stop-color="#aa6a06"/><stop offset="0.088" stop-color="#a86805"/><stop offset="0.097" stop-color="#aa6a06"/><stop offset="0.134" stop-color="#be7907"/><stop offset="0.159" stop-color="#c57f08"/><stop offset="0.353" stop-color="#db930c"/><stop offset="0.436" stop-color="#e19a13"/><stop offset="0.514" stop-color="#e6a325"/><stop offset="0.684" stop-color="#f1be5b"/><stop offset="0.721" stop-color="#f3c262"/><stop offset="0.759" stop-color="#f4c566"/><stop offset="0.800" stop-color="#f5c664"/><stop offset="0.841" stop-color="#f5c35a"/><stop offset="0.879" stop-color="#f5c04b"/><stop offset="0.928" stop-color="#f5bc2f"/><stop offset="0.945" stop-color="#f7c026"/><stop offset="0.965" stop-color="#fbca1e"/><stop offset="0.990" stop-color="#fed91a"/><stop offset="0.999" stop-color="#fedb1a"/></linearGradient><linearGradient id="c80" gradientUnits="userSpaceOnUse" x1="879.7" x2="1120.6"><stop offset="0.001" stop-color="#f4b512"/><stop offset="0.010" stop-color="#f2b211"/><stop offset="0.022" stop-color="#e9a30e"/><stop offset="0.043" stop-color="#cf870a"/><stop offset="0.059" stop-color="#b87407"/><stop offset="0.076" stop-color="#a96906"/><stop offset="0.088" stop-color="#a76805"/><stop offset="0.097" stop-color="#a86805"/><stop offset="0.134" stop-color="#bc7707"/><stop offset="0.159" stop-color="#c47e08"/><stop offset="0.353" stop-color="#da930c"/><stop offset="0.436" stop-color="#e19a13"/><stop offset="0.519" stop-color="#e6a325"/><stop offset="0.684" stop-color="#f1bd5a"/><stop offset="0.721" stop-color="#f3c262"/><stop offset="0.759" stop-color="#f4c566"/><stop offset="0.800" stop-color="#f5c563"/><stop offset="0.841" stop-color="#f5c35a"/><stop offset="0.879" stop-color="#f5bf4a"/><stop offset="0.928" stop-color="#f5bb2f"/><stop offset="0.945" stop-color="#f7bf26"/><stop offset="0.965" stop-color="#fbca1d"/><stop offset="0.990" stop-color="#fed91a"/><stop offset="0.999" stop-color="#fedb1a"/></linearGradient><linearGradient id="c81" gradientUnits="userSpaceOnUse" x1="879.3" x2="1121.0"><stop offset="0.001" stop-color="#f4b512"/><stop offset="0.010" stop-color="#f2b211"/><stop offset="0.022" stop-color="#e9a30e"/><stop offset="0.047" stop-color="#c88109"/><stop offset="0.063" stop-color="#b37006"/><stop offset="0.076" stop-color="#a96906"/><stop offset="0.092" stop-color="#a76705"/><stop offset="0.100" stop-color="#a86805"/><stop offset="0.142" stop-color="#be7907"/><stop offset="0.162" stop-color="#c47e08"/><stop offset="0.356" stop-color="#da920c"/><stop offset="0.434" stop-color="#e09913"/><stop offset="0.516" stop-color="#e6a225"/><stop offset="0.681" stop-color="#f1bc59"/><stop offset="0.722" stop-color="#f3c262"/><stop offset="0.760" stop-color="#f4c565"/><stop offset="0.801" stop-color="#f5c563"/><stop offset="0.842" stop-color="#f5c359"/><stop offset="0.879" stop-color="#f5bf4a"/><stop offset="0.929" stop-color="#f5bb2e"/><stop offset="0.945" stop-color="#f7bf25"/><stop offset="0.966" stop-color="#fbca1d"/><stop offset="0.990" stop-color="#fed91a"/><stop offset="0.999" stop-color="#fedb1a"/></linearGradient><linearGradient id="c82" gradientUnits="userSpaceOnUse" x1="878.9" x2="1121.4"><stop offset="0.001" stop-color="#f4b512"/><stop offset="0.010" stop-color="#f2b211"/><stop offset="0.022" stop-color="#e8a30e"/><stop offset="0.047" stop-color="#c88109"/><stop offset="0.063" stop-color="#b27006"/><stop offset="0.075" stop-color="#a86905"/><stop offset="0.096" stop-color="#a66705"/><stop offset="0.104" stop-color="#a76805"/><stop offset="0.145" stop-color="#bd7907"/><stop offset="0.166" stop-color="#c47e08"/><stop offset="0.354" stop-color="#da920c"/><stop offset="0.436" stop-color="#e09913"/><stop offset="0.518" stop-color="#e6a225"/><stop offset="0.683" stop-color="#f1bc59"/><stop offset="0.724" stop-color="#f3c162"/><stop offset="0.761" stop-color="#f4c465"/><stop offset="0.802" stop-color="#f4c562"/><stop offset="0.843" stop-color="#f5c258"/><stop offset="0.880" stop-color="#f4be49"/><stop offset="0.929" stop-color="#f5ba2e"/><stop offset="0.945" stop-color="#f7bf25"/><stop offset="0.966" stop-color="#fbc91d"/><stop offset="0.990" stop-color="#fed91a"/><stop offset="0.999" stop-color="#fedb1a"/></linearGradient><linearGradient id="c83" gradientUnits="userSpaceOnUse" x1="878.5" x2="1121.8"><stop offset="0.001" stop-color="#f3b512"/><stop offset="0.010" stop-color="#f2b211"/><stop offset="0.022" stop-color="#e8a30e"/><stop offset="0.046" stop-color="#c78109"/><stop offset="0.063" stop-color="#b26f06"/><stop offset="0.079" stop-color="#a76705"/><stop offset="0.100" stop-color="#a66705"/><stop offset="0.108" stop-color="#a76805"/><stop offset="0.149" stop-color="#bd7807"/><stop offset="0.169" stop-color="#c37d08"/><stop offset="0.357" stop-color="#d9910c"/><stop offset="0.439" stop-color="#e09913"/><stop offset="0.516" stop-color="#e5a124"/><stop offset="0.684" stop-color="#f1bc59"/><stop offset="0.721" stop-color="#f2c161"/><stop offset="0.757" stop-color="#f4c464"/><stop offset="0.798" stop-color="#f4c462"/><stop offset="0.839" stop-color="#f4c259"/><stop offset="0.880" stop-color="#f4be48"/><stop offset="0.929" stop-color="#f5ba2d"/><stop offset="0.945" stop-color="#f7be24"/><stop offset="0.966" stop-color="#fbc91d"/><stop offset="0.990" stop-color="#fed91a"/><stop offset="0.999" stop-color="#feda1a"/></linearGradient><linearGradient id="c84" gradientUnits="userSpaceOnUse" x1="878.1" x2="1122.2"><stop offset="0.001" stop-color="#f3b512"/><stop offset="0.010" stop-color="#f2b211"/><stop offset="0.022" stop-color="#e8a20e"/><stop offset="0.046" stop-color="#c78009"/><stop offset="0.062" stop-color="#b16f06"/><stop offset="0.079" stop-color="#a66705"/><stop offset="0.103" stop-color="#a56705"/><stop offset="0.111" stop-color="#a76805"/><stop offset="0.152" stop-color="#bd7807"/><stop offset="0.172" stop-color="#c37d08"/><stop offset="0.356" stop-color="#d9910c"/><stop offset="0.437" stop-color="#df9813"/><stop offset="0.518" stop-color="#e5a124"/><stop offset="0.681" stop-color="#f0bb58"/><stop offset="0.722" stop-color="#f2c060"/><stop offset="0.758" stop-color="#f3c364"/><stop offset="0.799" stop-color="#f4c461"/><stop offset="0.840" stop-color="#f4c258"/><stop offset="0.881" stop-color="#f4be47"/><stop offset="0.929" stop-color="#f4ba2c"/><stop offset="0.946" stop-color="#f7be24"/><stop offset="0.966" stop-color="#fbc91c"/><stop offset="0.990" stop-color="#fed91a"/><stop offset="0.999" stop-color="#feda1a"/></linearGradient><linearGradient id="c85" gradientUnits="userSpaceOnUse" x1="877.8" x2="1122.6"><stop offset="0.001" stop-color="#f3b512"/><stop offset="0.010" stop-color="#f2b211"/><stop offset="0.022" stop-color="#e8a20e"/><stop offset="0.046" stop-color="#c68008"/><stop offset="0.062" stop-color="#b06f06"/><stop offset="0.079" stop-color="#a66705"/><stop offset="0.103" stop-color="#a56605"/><stop offset="0.115" stop-color="#a76805"/><stop offset="0.152" stop-color="#bb7707"/><stop offset="0.176" stop-color="#c37d08"/><stop offset="0.360" stop-color="#d9910c"/><stop offset="0.437" stop-color="#df9812"/><stop offset="0.518" stop-color="#e5a124"/><stop offset="0.681" stop-color="#f0bb57"/><stop offset="0.722" stop-color="#f2c060"/><stop offset="0.758" stop-color="#f3c363"/><stop offset="0.799" stop-color="#f4c361"/><stop offset="0.840" stop-color="#f4c157"/><stop offset="0.881" stop-color="#f4bd47"/><stop offset="0.929" stop-color="#f4b92c"/><stop offset="0.946" stop-color="#f7be24"/><stop offset="0.966" stop-color="#fac91c"/><stop offset="0.990" stop-color="#fdd91a"/><stop offset="0.999" stop-color="#feda1a"/></linearGradient><linearGradient id="c86" gradientUnits="userSpaceOnUse" x1="877.4" x2="1123.0"><stop offset="0.001" stop-color="#f3b512"/><stop offset="0.010" stop-color="#f2b111"/><stop offset="0.022" stop-color="#e8a20e"/><stop offset="0.046" stop-color="#c67f08"/><stop offset="0.062" stop-color="#b06e06"/><stop offset="0.078" stop-color="#a56705"/><stop offset="0.107" stop-color="#a46605"/><stop offset="0.119" stop-color="#a76805"/><stop offset="0.160" stop-color="#bd7807"/><stop offset="0.180" stop-color="#c37d08"/><stop offset="0.362" stop-color="#d9910c"/><stop offset="0.439" stop-color="#df9812"/><stop offset="0.520" stop-color="#e5a024"/><stop offset="0.682" stop-color="#f0ba57"/><stop offset="0.723" stop-color="#f2c05f"/><stop offset="0.759" stop-color="#f3c262"/><stop offset="0.800" stop-color="#f4c360"/><stop offset="0.840" stop-color="#f4c156"/><stop offset="0.881" stop-color="#f4bd46"/><stop offset="0.930" stop-color="#f4b92b"/><stop offset="0.946" stop-color="#f6bd23"/><stop offset="0.966" stop-color="#fac81c"/><stop offset="0.990" stop-color="#fdd91a"/><stop offset="0.999" stop-color="#feda1a"/></linearGradient><linearGradient id="c87" gradientUnits="userSpaceOnUse" x1="877.0" x2="1123.3"><stop offset="0.001" stop-color="#f3b512"/><stop offset="0.009" stop-color="#f2b111"/><stop offset="0.022" stop-color="#e8a20e"/><stop offset="0.046" stop-color="#c57f08"/><stop offset="0.062" stop-color="#af6e06"/><stop offset="0.078" stop-color="#a56605"/><stop offset="0.110" stop-color="#a46605"/><stop offset="0.123" stop-color="#a76805"/><stop offset="0.163" stop-color="#bd7807"/><stop offset="0.183" stop-color="#c27d08"/><stop offset="0.361" stop-color="#d8900c"/><stop offset="0.441" stop-color="#df9713"/><stop offset="0.522" stop-color="#e5a024"/><stop offset="0.684" stop-color="#f0ba57"/><stop offset="0.724" stop-color="#f2bf5f"/><stop offset="0.760" stop-color="#f3c262"/><stop offset="0.801" stop-color="#f4c25f"/><stop offset="0.841" stop-color="#f4c055"/><stop offset="0.882" stop-color="#f4bc45"/><stop offset="0.930" stop-color="#f4b92b"/><stop offset="0.946" stop-color="#f6bd23"/><stop offset="0.966" stop-color="#fac81b"/><stop offset="0.991" stop-color="#fdd81a"/><stop offset="0.999" stop-color="#feda1a"/></linearGradient><linearGradient id="c88" gradientUnits="userSpaceOnUse" x1="876.7" x2="1123.7"><stop offset="0.001" stop-color="#f3b512"/><stop offset="0.009" stop-color="#f1b111"/><stop offset="0.022" stop-color="#e7a10e"/><stop offset="0.050" stop-color="#bf7a08"/><stop offset="0.066" stop-color="#ab6b06"/><stop offset="0.078" stop-color="#a56605"/><stop offset="0.114" stop-color="#a46505"/><stop offset="0.122" stop-color="#a56605"/><stop offset="0.166" stop-color="#bc7807"/><stop offset="0.186" stop-color="#c27c08"/><stop offset="0.363" stop-color="#d8900c"/><stop offset="0.444" stop-color="#de9713"/><stop offset="0.520" stop-color="#e4a023"/><stop offset="0.681" stop-color="#efb955"/><stop offset="0.721" stop-color="#f1be5e"/><stop offset="0.757" stop-color="#f3c161"/><stop offset="0.798" stop-color="#f3c25f"/><stop offset="0.838" stop-color="#f4c056"/><stop offset="0.878" stop-color="#f4bc46"/><stop offset="0.930" stop-color="#f4b82a"/><stop offset="0.946" stop-color="#f6bd22"/><stop offset="0.966" stop-color="#fac81b"/><stop offset="0.991" stop-color="#fdd81a"/><stop offset="0.999" stop-color="#feda1a"/></linearGradient><linearGradient id="c89" gradientUnits="userSpaceOnUse" x1="876.3" x2="1124.0"><stop offset="0.001" stop-color="#f3b512"/><stop offset="0.009" stop-color="#f1b111"/><stop offset="0.022" stop-color="#e7a10e"/><stop offset="0.050" stop-color="#be7908"/><stop offset="0.066" stop-color="#aa6a06"/><stop offset="0.078" stop-color="#a46605"/><stop offset="0.118" stop-color="#a36505"/><stop offset="0.126" stop-color="#a56605"/><stop offset="0.166" stop-color="#bb7607"/><stop offset="0.190" stop-color="#c27c08"/><stop offset="0.363" stop-color="#d78f0c"/><stop offset="0.444" stop-color="#de9712"/><stop offset="0.520" stop-color="#e49f23"/><stop offset="0.681" stop-color="#efb955"/><stop offset="0.721" stop-color="#f1be5d"/><stop offset="0.757" stop-color="#f2c160"/><stop offset="0.798" stop-color="#f3c15e"/><stop offset="0.838" stop-color="#f3bf55"/><stop offset="0.878" stop-color="#f3bc45"/><stop offset="0.930" stop-color="#f4b829"/><stop offset="0.946" stop-color="#f6bc22"/><stop offset="0.966" stop-color="#fac81b"/><stop offset="0.991" stop-color="#fdd81a"/><stop offset="0.999" stop-color="#feda1a"/></linearGradient><linearGradient id="c90" gradientUnits="userSpaceOnUse" x1="876.0" x2="1124.4"><stop offset="0.001" stop-color="#f3b412"/><stop offset="0.009" stop-color="#f1b111"/><stop offset="0.021" stop-color="#e7a10e"/><stop offset="0.049" stop-color="#be7907"/><stop offset="0.065" stop-color="#aa6a06"/><stop offset="0.077" stop-color="#a46505"/><stop offset="0.122" stop-color="#a36505"/><stop offset="0.130" stop-color="#a56605"/><stop offset="0.170" stop-color="#bb7607"/><stop offset="0.194" stop-color="#c27c08"/><stop offset="0.366" stop-color="#d78f0c"/><stop offset="0.442" stop-color="#de9612"/><stop offset="0.522" stop-color="#e49f23"/><stop offset="0.682" stop-color="#efb854"/><stop offset="0.722" stop-color="#f1bd5c"/><stop offset="0.758" stop-color="#f2c05f"/><stop offset="0.798" stop-color="#f3c15d"/><stop offset="0.838" stop-color="#f3bf54"/><stop offset="0.878" stop-color="#f3bb44"/><stop offset="0.931" stop-color="#f4b829"/><stop offset="0.947" stop-color="#f6bc21"/><stop offset="0.963" stop-color="#f9c51c"/><stop offset="0.991" stop-color="#fdd81a"/><stop offset="0.999" stop-color="#feda1a"/></linearGradient><linearGradient id="c91" gradientUnits="userSpaceOnUse" x1="875.7" x2="1124.7"><stop offset="0.001" stop-color="#f3b412"/><stop offset="0.009" stop-color="#f1b111"/><stop offset="0.021" stop-color="#e7a10e"/><stop offset="0.049" stop-color="#bd7907"/><stop offset="0.065" stop-color="#a96906"/><stop offset="0.077" stop-color="#a36505"/><stop offset="0.125" stop-color="#a36505"/><stop offset="0.133" stop-color="#a46605"/><stop offset="0.173" stop-color="#ba7607"/><stop offset="0.193" stop-color="#c17b08"/><stop offset="0.364" stop-color="#d68e0c"/><stop offset="0.444" stop-color="#dd9612"/><stop offset="0.524" stop-color="#e39f23"/><stop offset="0.683" stop-color="#efb854"/><stop offset="0.723" stop-color="#f1bd5b"/><stop offset="0.759" stop-color="#f2c05e"/><stop offset="0.799" stop-color="#f3c05c"/><stop offset="0.839" stop-color="#f3be53"/><stop offset="0.879" stop-color="#f3bb43"/><stop offset="0.931" stop-color="#f3b728"/><stop offset="0.947" stop-color="#f6bb21"/><stop offset="0.963" stop-color="#f9c41b"/><stop offset="0.991" stop-color="#fdd81a"/><stop offset="0.999" stop-color="#fed91a"/></linearGradient><linearGradient id="c92" gradientUnits="userSpaceOnUse" x1="875.3" x2="1125.0"><stop offset="0.001" stop-color="#f3b411"/><stop offset="0.009" stop-color="#f1b111"/><stop offset="0.021" stop-color="#e7a00e"/><stop offset="0.049" stop-color="#bd7807"/><stop offset="0.065" stop-color="#a96906"/><stop offset="0.077" stop-color="#a36505"/><stop offset="0.125" stop-color="#a26405"/><stop offset="0.137" stop-color="#a46605"/><stop offset="0.173" stop-color="#b97507"/><stop offset="0.197" stop-color="#c17b08"/><stop offset="0.368" stop-color="#d68e0c"/><stop offset="0.444" stop-color="#dd9512"/><stop offset="0.524" stop-color="#e39e22"/><stop offset="0.683" stop-color="#efb753"/><stop offset="0.723" stop-color="#f1bc5a"/><stop offset="0.759" stop-color="#f2bf5d"/><stop offset="0.799" stop-color="#f3c05b"/><stop offset="0.839" stop-color="#f3be52"/><stop offset="0.879" stop-color="#f3ba42"/><stop offset="0.931" stop-color="#f3b728"/><stop offset="0.947" stop-color="#f6bb20"/><stop offset="0.963" stop-color="#f9c41b"/><stop offset="0.991" stop-color="#fdd81a"/><stop offset="0.999" stop-color="#fed91a"/></linearGradient><linearGradient id="c93" gradientUnits="userSpaceOnUse" x1="875.0" x2="1125.3"><stop offset="0.001" stop-color="#f3b411"/><stop offset="0.009" stop-color="#f1b111"/><stop offset="0.021" stop-color="#e6a00e"/><stop offset="0.049" stop-color="#bc7807"/><stop offset="0.065" stop-color="#a86905"/><stop offset="0.077" stop-color="#a36505"/><stop offset="0.129" stop-color="#a26405"/><stop offset="0.140" stop-color="#a46605"/><stop offset="0.176" stop-color="#b87507"/><stop offset="0.200" stop-color="#c07b08"/><stop offset="0.371" stop-color="#d68e0c"/><stop offset="0.446" stop-color="#dd9512"/><stop offset="0.526" stop-color="#e39e23"/><stop offset="0.681" stop-color="#eeb651"/><stop offset="0.720" stop-color="#f0bb59"/><stop offset="0.756" stop-color="#f2be5c"/><stop offset="0.800" stop-color="#f2bf5a"/><stop offset="0.840" stop-color="#f3bd51"/><stop offset="0.879" stop-color="#f3ba41"/><stop offset="0.931" stop-color="#f3b627"/><stop offset="0.947" stop-color="#f6bb20"/><stop offset="0.963" stop-color="#f9c41b"/><stop offset="0.991" stop-color="#fdd81a"/><stop offset="0.999" stop-color="#fed91a"/></linearGradient><linearGradient id="c94" gradientUnits="userSpaceOnUse" x1="874.7" x2="1125.6"><stop offset="0.001" stop-color="#f3b411"/><stop offset="0.009" stop-color="#f1b011"/><stop offset="0.021" stop-color="#e6a00e"/><stop offset="0.049" stop-color="#bc7707"/><stop offset="0.065" stop-color="#a86805"/><stop offset="0.077" stop-color="#a26405"/><stop offset="0.133" stop-color="#a16405"/><stop offset="0.140" stop-color="#a26405"/><stop offset="0.184" stop-color="#ba7607"/><stop offset="0.204" stop-color="#c07b08"/><stop offset="0.371" stop-color="#d68e0b"/><stop offset="0.446" stop-color="#dc9512"/><stop offset="0.526" stop-color="#e39e22"/><stop offset="0.681" stop-color="#eeb650"/><stop offset="0.720" stop-color="#f0bb58"/><stop offset="0.756" stop-color="#f1be5b"/><stop offset="0.796" stop-color="#f2be59"/><stop offset="0.836" stop-color="#f3bd51"/><stop offset="0.875" stop-color="#f3ba42"/><stop offset="0.931" stop-color="#f3b626"/><stop offset="0.947" stop-color="#f5ba1f"/><stop offset="0.963" stop-color="#f9c31a"/><stop offset="0.991" stop-color="#fdd719"/><stop offset="0.999" stop-color="#fed91a"/></linearGradient><linearGradient id="c95" gradientUnits="userSpaceOnUse" x1="874.4" x2="1125.9"><stop offset="0.001" stop-color="#f3b411"/><stop offset="0.009" stop-color="#f1b011"/><stop offset="0.021" stop-color="#e6a00e"/><stop offset="0.049" stop-color="#bb7707"/><stop offset="0.065" stop-color="#a76805"/><stop offset="0.077" stop-color="#a26405"/><stop offset="0.136" stop-color="#a16305"/><stop offset="0.144" stop-color="#a26405"/><stop offset="0.187" stop-color="#ba7607"/><stop offset="0.207" stop-color="#c07b08"/><stop offset="0.373" stop-color="#d58d0b"/><stop offset="0.449" stop-color="#dc9512"/><stop offset="0.524" stop-color="#e29d21"/><stop offset="0.682" stop-color="#eeb550"/><stop offset="0.722" stop-color="#f0ba57"/><stop offset="0.757" stop-color="#f1bd5a"/><stop offset="0.797" stop-color="#f2be58"/><stop offset="0.836" stop-color="#f2bc50"/><stop offset="0.876" stop-color="#f2b941"/><stop offset="0.931" stop-color="#f3b626"/><stop offset="0.947" stop-color="#f5ba1f"/><stop offset="0.963" stop-color="#f9c31a"/><stop offset="0.991" stop-color="#fdd719"/><stop offset="0.999" stop-color="#fed91a"/></linearGradient><linearGradient id="c96" gradientUnits="userSpaceOnUse" x1="874.2" x2="1126.2"><stop offset="0.001" stop-color="#f3b411"/><stop offset="0.009" stop-color="#f1b011"/><stop offset="0.021" stop-color="#e6a00e"/><stop offset="0.049" stop-color="#bb7707"/><stop offset="0.064" stop-color="#a76805"/><stop offset="0.076" stop-color="#a26405"/><stop offset="0.139" stop-color="#a16305"/><stop offset="0.147" stop-color="#a26405"/><stop offset="0.187" stop-color="#b87407"/><stop offset="0.210" stop-color="#c07a08"/><stop offset="0.372" stop-color="#d58d0b"/><stop offset="0.451" stop-color="#dc9412"/><stop offset="0.526" stop-color="#e29d21"/><stop offset="0.683" stop-color="#edb54f"/><stop offset="0.723" stop-color="#f0ba56"/><stop offset="0.758" stop-color="#f1bc59"/><stop offset="0.798" stop-color="#f2bd57"/><stop offset="0.837" stop-color="#f2bc4e"/><stop offset="0.876" stop-color="#f2b940"/><stop offset="0.932" stop-color="#f3b525"/><stop offset="0.947" stop-color="#f5ba1e"/><stop offset="0.963" stop-color="#f9c31a"/><stop offset="0.991" stop-color="#fdd719"/><stop offset="0.999" stop-color="#fed91a"/></linearGradient><linearGradient id="c97" gradientUnits="userSpaceOnUse" x1="873.9" x2="1126.5"><stop offset="0.001" stop-color="#f3b411"/><stop offset="0.009" stop-color="#f1b011"/><stop offset="0.021" stop-color="#e69f0e"/><stop offset="0.049" stop-color="#ba7607"/><stop offset="0.064" stop-color="#a66705"/><stop offset="0.076" stop-color="#a16405"/><stop offset="0.139" stop-color="#a06305"/><stop offset="0.151" stop-color="#a26405"/><stop offset="0.187" stop-color="#b67307"/><stop offset="0.214" stop-color="#c07a08"/><stop offset="0.376" stop-color="#d58d0b"/><stop offset="0.451" stop-color="#db9411"/><stop offset="0.526" stop-color="#e29c20"/><stop offset="0.683" stop-color="#edb44e"/><stop offset="0.758" stop-color="#f1bc58"/><stop offset="0.798" stop-color="#f2bc56"/><stop offset="0.837" stop-color="#f2bb4d"/><stop offset="0.876" stop-color="#f2b83f"/><stop offset="0.932" stop-color="#f3b524"/><stop offset="0.947" stop-color="#f5b91e"/><stop offset="0.963" stop-color="#f9c219"/><stop offset="0.991" stop-color="#fdd719"/><stop offset="0.999" stop-color="#fed91a"/></linearGradient><linearGradient id="c98" gradientUnits="userSpaceOnUse" x1="873.6" x2="1126.7"><stop offset="0.001" stop-color="#f3b411"/><stop offset="0.009" stop-color="#f1b011"/><stop offset="0.021" stop-color="#e69f0e"/><stop offset="0.048" stop-color="#ba7607"/><stop offset="0.064" stop-color="#a66705"/><stop offset="0.076" stop-color="#a16305"/><stop offset="0.143" stop-color="#a06205"/><stop offset="0.155" stop-color="#a26405"/><stop offset="0.190" stop-color="#b67307"/><stop offset="0.217" stop-color="#bf7a08"/><stop offset="0.378" stop-color="#d48c0b"/><stop offset="0.453" stop-color="#db9412"/><stop offset="0.527" stop-color="#e19c20"/><stop offset="0.681" stop-color="#edb34c"/><stop offset="0.755" stop-color="#f0bb57"/><stop offset="0.798" stop-color="#f1bc55"/><stop offset="0.838" stop-color="#f2ba4c"/><stop offset="0.877" stop-color="#f2b73e"/><stop offset="0.932" stop-color="#f2b424"/><stop offset="0.948" stop-color="#f5b91d"/><stop offset="0.963" stop-color="#f9c219"/><stop offset="0.991" stop-color="#fdd719"/><stop offset="0.999" stop-color="#fdd919"/></linearGradient><linearGradient id="c99" gradientUnits="userSpaceOnUse" x1="873.4" x2="1127.0"><stop offset="0.001" stop-color="#f3b411"/><stop offset="0.009" stop-color="#f1b011"/><stop offset="0.021" stop-color="#e59f0e"/><stop offset="0.048" stop-color="#b97507"/><stop offset="0.064" stop-color="#a56705"/><stop offset="0.076" stop-color="#a16305"/><stop offset="0.147" stop-color="#9f6205"/><stop offset="0.158" stop-color="#a26405"/><stop offset="0.198" stop-color="#b87407"/><stop offset="0.221" stop-color="#bf7a08"/><stop offset="0.378" stop-color="#d48c0b"/><stop offset="0.453" stop-color="#db9311"/><stop offset="0.527" stop-color="#e19b20"/><stop offset="0.685" stop-color="#edb34c"/><stop offset="0.755" stop-color="#f0ba56"/><stop offset="0.798" stop-color="#f1bb53"/><stop offset="0.838" stop-color="#f2ba4b"/><stop offset="0.877" stop-color="#f2b73d"/><stop offset="0.932" stop-color="#f2b423"/><stop offset="0.948" stop-color="#f5b91d"/><stop offset="0.963" stop-color="#f8c219"/><stop offset="0.991" stop-color="#fdd719"/><stop offset="0.999" stop-color="#fdd819"/></linearGradient><linearGradient id="c100" gradientUnits="userSpaceOnUse" x1="873.1" x2="1127.2"><stop offset="0.001" stop-color="#f3b311"/><stop offset="0.009" stop-color="#f1b011"/><stop offset="0.021" stop-color="#e59f0e"/><stop offset="0.048" stop-color="#b97507"/><stop offset="0.060" stop-color="#a96906"/><stop offset="0.068" stop-color="#a26405"/><stop offset="0.150" stop-color="#9f6205"/><stop offset="0.162" stop-color="#a26405"/><stop offset="0.201" stop-color="#b87407"/><stop offset="0.224" stop-color="#bf7a08"/><stop offset="0.381" stop-color="#d48c0b"/><stop offset="0.455" stop-color="#db9311"/><stop offset="0.529" stop-color="#e19b20"/><stop offset="0.682" stop-color="#ecb24a"/><stop offset="0.756" stop-color="#f0b954"/><stop offset="0.799" stop-color="#f1ba52"/><stop offset="0.838" stop-color="#f1b94a"/><stop offset="0.877" stop-color="#f1b63b"/><stop offset="0.932" stop-color="#f2b422"/><stop offset="0.948" stop-color="#f5b81c"/><stop offset="0.963" stop-color="#f8c219"/><stop offset="0.991" stop-color="#fdd619"/><stop offset="0.999" stop-color="#fdd819"/></linearGradient><linearGradient id="c101" gradientUnits="userSpaceOnUse" x1="872.9" x2="1127.5"><stop offset="0.001" stop-color="#f3b311"/><stop offset="0.009" stop-color="#f1b011"/><stop offset="0.021" stop-color="#e59f0e"/><stop offset="0.048" stop-color="#b87507"/><stop offset="0.060" stop-color="#a86905"/><stop offset="0.068" stop-color="#a26405"/><stop offset="0.154" stop-color="#9e6205"/><stop offset="0.162" stop-color="#a06305"/><stop offset="0.201" stop-color="#b67307"/><stop offset="0.224" stop-color="#be7908"/><stop offset="0.381" stop-color="#d38b0b"/><stop offset="0.455" stop-color="#da9211"/><stop offset="0.529" stop-color="#e09b1f"/><stop offset="0.682" stop-color="#ecb149"/><stop offset="0.756" stop-color="#efb953"/><stop offset="0.799" stop-color="#f1ba51"/><stop offset="0.838" stop-color="#f1b848"/><stop offset="0.877" stop-color="#f1b63a"/><stop offset="0.932" stop-color="#f2b322"/><stop offset="0.948" stop-color="#f4b81c"/><stop offset="0.963" stop-color="#f8c118"/><stop offset="0.991" stop-color="#fdd619"/><stop offset="0.999" stop-color="#fdd819"/></linearGradient><linearGradient id="c102" gradientUnits="userSpaceOnUse" x1="872.6" x2="1127.7"><stop offset="0.001" stop-color="#f3b311"/><stop offset="0.009" stop-color="#f0af11"/><stop offset="0.021" stop-color="#e59e0e"/><stop offset="0.048" stop-color="#b87407"/><stop offset="0.060" stop-color="#a86805"/><stop offset="0.068" stop-color="#a16405"/><stop offset="0.157" stop-color="#9e6105"/><stop offset="0.165" stop-color="#9f6205"/><stop offset="0.208" stop-color="#b77407"/><stop offset="0.227" stop-color="#be7907"/><stop offset="0.383" stop-color="#d38b0b"/><stop offset="0.457" stop-color="#da9211"/><stop offset="0.531" stop-color="#e09a1f"/><stop offset="0.683" stop-color="#ecb048"/><stop offset="0.757" stop-color="#efb852"/><stop offset="0.796" stop-color="#f0b950"/><stop offset="0.835" stop-color="#f1b848"/><stop offset="0.874" stop-color="#f1b63b"/><stop offset="0.932" stop-color="#f2b321"/><stop offset="0.948" stop-color="#f4b71b"/><stop offset="0.964" stop-color="#f8c118"/><stop offset="0.991" stop-color="#fdd619"/><stop offset="0.999" stop-color="#fdd819"/></linearGradient><linearGradient id="c103" gradientUnits="userSpaceOnUse" x1="872.4" x2="1127.9"><stop offset="0.001" stop-color="#f2b311"/><stop offset="0.009" stop-color="#f0af11"/><stop offset="0.021" stop-color="#e59e0d"/><stop offset="0.048" stop-color="#b87407"/><stop offset="0.060" stop-color="#a76805"/><stop offset="0.068" stop-color="#a16305"/><stop offset="0.157" stop-color="#9d6105"/><stop offset="0.169" stop-color="#9f6205"/><stop offset="0.208" stop-color="#b67207"/><stop offset="0.231" stop-color="#be7907"/><stop offset="0.383" stop-color="#d28a0b"/><stop offset="0.457" stop-color="#d99211"/><stop offset="0.531" stop-color="#e09a1f"/><stop offset="0.683" stop-color="#ebb047"/><stop offset="0.757" stop-color="#efb751"/><stop offset="0.796" stop-color="#f0b84f"/><stop offset="0.835" stop-color="#f1b747"/><stop offset="0.874" stop-color="#f1b53a"/><stop offset="0.932" stop-color="#f2b320"/><stop offset="0.948" stop-color="#f4b71b"/><stop offset="0.964" stop-color="#f8c118"/><stop offset="0.991" stop-color="#fdd619"/><stop offset="0.999" stop-color="#fdd819"/></linearGradient><linearGradient id="c104" gradientUnits="userSpaceOnUse" x1="872.2" x2="1128.2"><stop offset="0.001" stop-color="#f2b311"/><stop offset="0.009" stop-color="#f0af11"/><stop offset="0.021" stop-color="#e59e0d"/><stop offset="0.048" stop-color="#b77307"/><stop offset="0.060" stop-color="#a76705"/><stop offset="0.068" stop-color="#a06305"/><stop offset="0.161" stop-color="#9d6105"/><stop offset="0.173" stop-color="#a06205"/><stop offset="0.208" stop-color="#b47106"/><stop offset="0.235" stop-color="#be7907"/><stop offset="0.383" stop-color="#d28a0b"/><stop offset="0.457" stop-color="#d99110"/><stop offset="0.531" stop-color="#df991e"/><stop offset="0.683" stop-color="#ebaf46"/><stop offset="0.753" stop-color="#eeb64f"/><stop offset="0.796" stop-color="#f0b74d"/><stop offset="0.835" stop-color="#f0b746"/><stop offset="0.874" stop-color="#f1b439"/><stop offset="0.932" stop-color="#f1b220"/><stop offset="0.948" stop-color="#f4b71a"/><stop offset="0.964" stop-color="#f8c017"/><stop offset="0.991" stop-color="#fdd619"/><stop offset="0.999" stop-color="#fdd819"/></linearGradient><linearGradient id="c105" gradientUnits="userSpaceOnUse" x1="872.0" x2="1128.4"><stop offset="0.001" stop-color="#f2b311"/><stop offset="0.009" stop-color="#f0af10"/><stop offset="0.021" stop-color="#e49e0d"/><stop offset="0.048" stop-color="#b77307"/><stop offset="0.060" stop-color="#a66705"/><stop offset="0.067" stop-color="#a06305"/><stop offset="0.164" stop-color="#9d6005"/><stop offset="0.176" stop-color="#9f6205"/><stop offset="0.211" stop-color="#b47106"/><stop offset="0.238" stop-color="#bd7807"/><stop offset="0.386" stop-color="#d18a0b"/><stop offset="0.459" stop-color="#d99110"/><stop offset="0.533" stop-color="#df991e"/><stop offset="0.684" stop-color="#ebae45"/><stop offset="0.754" stop-color="#eeb54e"/><stop offset="0.797" stop-color="#efb74c"/><stop offset="0.836" stop-color="#f0b644"/><stop offset="0.874" stop-color="#f0b437"/><stop offset="0.933" stop-color="#f1b21f"/><stop offset="0.948" stop-color="#f4b61a"/><stop offset="0.964" stop-color="#f8c017"/><stop offset="0.991" stop-color="#fdd619"/><stop offset="0.999" stop-color="#fdd819"/></linearGradient><linearGradient id="c106" gradientUnits="userSpaceOnUse" x1="871.8" x2="1128.6"><stop offset="0.001" stop-color="#f2b311"/><stop offset="0.009" stop-color="#f0af10"/><stop offset="0.021" stop-color="#e49e0d"/><stop offset="0.048" stop-color="#b67307"/><stop offset="0.060" stop-color="#a66705"/><stop offset="0.067" stop-color="#a06205"/><stop offset="0.168" stop-color="#9c6005"/><stop offset="0.180" stop-color="#9f6205"/><stop offset="0.219" stop-color="#b57207"/><stop offset="0.242" stop-color="#bd7807"/><stop offset="0.386" stop-color="#d1890b"/><stop offset="0.459" stop-color="#d89110"/><stop offset="0.533" stop-color="#df991d"/><stop offset="0.684" stop-color="#eaae44"/><stop offset="0.754" stop-color="#eeb54c"/><stop offset="0.797" stop-color="#efb64a"/><stop offset="0.836" stop-color="#f0b543"/><stop offset="0.874" stop-color="#f0b336"/><stop offset="0.933" stop-color="#f1b11e"/><stop offset="0.948" stop-color="#f4b619"/><stop offset="0.964" stop-color="#f8c017"/><stop offset="0.991" stop-color="#fdd519"/><stop offset="0.999" stop-color="#fdd719"/></linearGradient><linearGradient id="c107" gradientUnits="userSpaceOnUse" x1="871.6" x2="1128.8"><stop offset="0.001" stop-color="#f2b311"/><stop offset="0.009" stop-color="#f0af10"/><stop offset="0.021" stop-color="#e49d0d"/><stop offset="0.048" stop-color="#b67307"/><stop offset="0.059" stop-color="#a56705"/><stop offset="0.067" stop-color="#9f6205"/><stop offset="0.171" stop-color="#9c6005"/><stop offset="0.179" stop-color="#9d6105"/><stop offset="0.214" stop-color="#b16f06"/><stop offset="0.237" stop-color="#bb7707"/><stop offset="0.307" stop-color="#c78009"/><stop offset="0.411" stop-color="#d38b0c"/><stop offset="0.481" stop-color="#da9213"/><stop offset="0.543" stop-color="#df991f"/><stop offset="0.682" stop-color="#eaad42"/><stop offset="0.755" stop-color="#eeb44b"/><stop offset="0.798" stop-color="#efb549"/><stop offset="0.836" stop-color="#f0b442"/><stop offset="0.933" stop-color="#f1b11e"/><stop offset="0.948" stop-color="#f3b619"/><stop offset="0.964" stop-color="#f8bf17"/><stop offset="0.991" stop-color="#fdd519"/><stop offset="0.999" stop-color="#fdd719"/></linearGradient><linearGradient id="c108" gradientUnits="userSpaceOnUse" x1="871.4" x2="1128.9"><stop offset="0.001" stop-color="#f2b311"/><stop offset="0.009" stop-color="#f0af10"/><stop offset="0.021" stop-color="#e49d0d"/><stop offset="0.048" stop-color="#b57207"/><stop offset="0.059" stop-color="#a56605"/><stop offset="0.067" stop-color="#9f6205"/><stop offset="0.171" stop-color="#9b6005"/><stop offset="0.183" stop-color="#9d6105"/><stop offset="0.237" stop-color="#ba7607"/><stop offset="0.311" stop-color="#c68009"/><stop offset="0.415" stop-color="#d38b0c"/><stop offset="0.481" stop-color="#d99212"/><stop offset="0.543" stop-color="#df991e"/><stop offset="0.682" stop-color="#e9ac41"/><stop offset="0.755" stop-color="#edb34a"/><stop offset="0.798" stop-color="#efb448"/><stop offset="0.836" stop-color="#efb440"/><stop offset="0.933" stop-color="#f1b11d"/><stop offset="0.948" stop-color="#f3b519"/><stop offset="0.964" stop-color="#f8bf17"/><stop offset="0.991" stop-color="#fdd519"/><stop offset="0.999" stop-color="#fdd719"/></linearGradient><linearGradient id="c109" gradientUnits="userSpaceOnUse" x1="871.2" x2="1129.1"><stop offset="0.001" stop-color="#f2b311"/><stop offset="0.009" stop-color="#f0ae10"/><stop offset="0.021" stop-color="#e49d0d"/><stop offset="0.048" stop-color="#b57207"/><stop offset="0.059" stop-color="#a46605"/><stop offset="0.067" stop-color="#9e6205"/><stop offset="0.175" stop-color="#9b5f04"/><stop offset="0.187" stop-color="#9d6105"/><stop offset="0.222" stop-color="#b26f06"/><stop offset="0.241" stop-color="#ba7607"/><stop offset="0.311" stop-color="#c67f08"/><stop offset="0.415" stop-color="#d28b0c"/><stop offset="0.481" stop-color="#d99112"/><stop offset="0.543" stop-color="#de981e"/><stop offset="0.682" stop-color="#e9ab40"/><stop offset="0.755" stop-color="#edb248"/><stop offset="0.794" stop-color="#eeb447"/><stop offset="0.832" stop-color="#efb340"/><stop offset="0.933" stop-color="#f0b01d"/><stop offset="0.952" stop-color="#f4b717"/><stop offset="0.991" stop-color="#fdd519"/><stop offset="0.999" stop-color="#fdd719"/></linearGradient><linearGradient id="c110" gradientUnits="userSpaceOnUse" x1="871.0" x2="1129.3"><stop offset="0.001" stop-color="#f2b211"/><stop offset="0.009" stop-color="#f0ae10"/><stop offset="0.021" stop-color="#e49d0d"/><stop offset="0.048" stop-color="#b47207"/><stop offset="0.059" stop-color="#a46605"/><stop offset="0.067" stop-color="#9e6105"/><stop offset="0.178" stop-color="#9b5f04"/><stop offset="0.190" stop-color="#9d6105"/><stop offset="0.225" stop-color="#b16f06"/><stop offset="0.244" stop-color="#b97507"/><stop offset="0.313" stop-color="#c57f08"/><stop offset="0.417" stop-color="#d28a0c"/><stop offset="0.483" stop-color="#d99112"/><stop offset="0.544" stop-color="#de981d"/><stop offset="0.679" stop-color="#e9aa3e"/><stop offset="0.752" stop-color="#edb147"/><stop offset="0.795" stop-color="#eeb345"/><stop offset="0.833" stop-color="#efb33e"/><stop offset="0.933" stop-color="#f0b01c"/><stop offset="0.952" stop-color="#f4b717"/><stop offset="0.991" stop-color="#fdd519"/><stop offset="0.999" stop-color="#fdd719"/></linearGradient><linearGradient id="c111" gradientUnits="userSpaceOnUse" x1="870.9" x2="1129.5"><stop offset="0.001" stop-color="#f2b211"/><stop offset="0.009" stop-color="#f0ae10"/><stop offset="0.021" stop-color="#e49d0d"/><stop offset="0.048" stop-color="#b47106"/><stop offset="0.059" stop-color="#a36505"/><stop offset="0.067" stop-color="#9d6105"/><stop offset="0.182" stop-color="#9a5f04"/><stop offset="0.194" stop-color="#9d6105"/><stop offset="0.225" stop-color="#af6e06"/><stop offset="0.248" stop-color="#b97507"/><stop offset="0.317" stop-color="#c57f08"/><stop offset="0.417" stop-color="#d28a0b"/><stop offset="0.487" stop-color="#d89112"/><stop offset="0.544" stop-color="#de971d"/><stop offset="0.679" stop-color="#e8a93d"/><stop offset="0.752" stop-color="#ecb045"/><stop offset="0.795" stop-color="#eeb244"/><stop offset="0.833" stop-color="#eeb23d"/><stop offset="0.933" stop-color="#f0b01b"/><stop offset="0.952" stop-color="#f4b617"/><stop offset="0.991" stop-color="#fdd519"/><stop offset="0.999" stop-color="#fdd719"/></linearGradient><linearGradient id="c112" gradientUnits="userSpaceOnUse" x1="870.7" x2="1129.6"><stop offset="0.001" stop-color="#f2b211"/><stop offset="0.009" stop-color="#f0ae10"/><stop offset="0.017" stop-color="#e8a30e"/><stop offset="0.028" stop-color="#d78f0b"/><stop offset="0.048" stop-color="#b37106"/><stop offset="0.059" stop-color="#a36505"/><stop offset="0.067" stop-color="#9d6105"/><stop offset="0.186" stop-color="#9a5f04"/><stop offset="0.194" stop-color="#9b5f04"/><stop offset="0.229" stop-color="#af6e06"/><stop offset="0.252" stop-color="#b97507"/><stop offset="0.317" stop-color="#c57e08"/><stop offset="0.417" stop-color="#d1890b"/><stop offset="0.487" stop-color="#d89012"/><stop offset="0.544" stop-color="#dd971c"/><stop offset="0.683" stop-color="#e8a93c"/><stop offset="0.752" stop-color="#ecb044"/><stop offset="0.795" stop-color="#edb142"/><stop offset="0.833" stop-color="#eeb13c"/><stop offset="0.933" stop-color="#f0af1b"/><stop offset="0.952" stop-color="#f4b616"/><stop offset="0.991" stop-color="#fdd418"/><stop offset="0.999" stop-color="#fdd619"/></linearGradient><linearGradient id="c113" gradientUnits="userSpaceOnUse" x1="870.6" x2="1129.8"><stop offset="0.001" stop-color="#f2b211"/><stop offset="0.009" stop-color="#f0ae10"/><stop offset="0.017" stop-color="#e8a30e"/><stop offset="0.028" stop-color="#d78f0b"/><stop offset="0.047" stop-color="#b37106"/><stop offset="0.059" stop-color="#a26505"/><stop offset="0.067" stop-color="#9d6005"/><stop offset="0.185" stop-color="#995e04"/><stop offset="0.197" stop-color="#9b5f04"/><stop offset="0.231" stop-color="#af6e06"/><stop offset="0.255" stop-color="#b97507"/><stop offset="0.320" stop-color="#c47e08"/><stop offset="0.419" stop-color="#d1890b"/><stop offset="0.488" stop-color="#d89012"/><stop offset="0.546" stop-color="#dd971c"/><stop offset="0.680" stop-color="#e8a83a"/><stop offset="0.753" stop-color="#ecaf42"/><stop offset="0.795" stop-color="#edb041"/><stop offset="0.834" stop-color="#eeb03a"/><stop offset="0.933" stop-color="#f0af1a"/><stop offset="0.953" stop-color="#f4b616"/><stop offset="0.991" stop-color="#fdd418"/><stop offset="0.999" stop-color="#fdd619"/></linearGradient><linearGradient id="c114" gradientUnits="userSpaceOnUse" x1="870.4" x2="1129.9"><stop offset="0.001" stop-color="#f2b211"/><stop offset="0.009" stop-color="#f0ae10"/><stop offset="0.017" stop-color="#e8a20e"/><stop offset="0.028" stop-color="#d78f0b"/><stop offset="0.047" stop-color="#b37006"/><stop offset="0.059" stop-color="#a26405"/><stop offset="0.067" stop-color="#9c6005"/><stop offset="0.189" stop-color="#995e04"/><stop offset="0.201" stop-color="#9b5f04"/><stop offset="0.235" stop-color="#af6e06"/><stop offset="0.258" stop-color="#b97507"/><stop offset="0.324" stop-color="#c47e08"/><stop offset="0.423" stop-color="#d1890b"/><stop offset="0.488" stop-color="#d79011"/><stop offset="0.550" stop-color="#dd961c"/><stop offset="0.680" stop-color="#e7a739"/><stop offset="0.753" stop-color="#ebae41"/><stop offset="0.795" stop-color="#edb03f"/><stop offset="0.834" stop-color="#eeb039"/><stop offset="0.937" stop-color="#f0af19"/><stop offset="0.956" stop-color="#f5b815"/><stop offset="0.991" stop-color="#fdd418"/><stop offset="0.999" stop-color="#fdd619"/></linearGradient><linearGradient id="c115" gradientUnits="userSpaceOnUse" x1="870.3" x2="1130.0"><stop offset="0.001" stop-color="#f2b211"/><stop offset="0.009" stop-color="#f0ae10"/><stop offset="0.017" stop-color="#e8a20e"/><stop offset="0.028" stop-color="#d68e0b"/><stop offset="0.047" stop-color="#b27006"/><stop offset="0.059" stop-color="#a16405"/><stop offset="0.067" stop-color="#9c6005"/><stop offset="0.193" stop-color="#985e04"/><stop offset="0.205" stop-color="#9b5f04"/><stop offset="0.258" stop-color="#b87407"/><stop offset="0.324" stop-color="#c47d08"/><stop offset="0.423" stop-color="#d0890b"/><stop offset="0.488" stop-color="#d78f11"/><stop offset="0.550" stop-color="#dc961b"/><stop offset="0.684" stop-color="#e7a738"/><stop offset="0.753" stop-color="#ebad3f"/><stop offset="0.792" stop-color="#ecaf3e"/><stop offset="0.830" stop-color="#edaf38"/><stop offset="0.937" stop-color="#f0af18"/><stop offset="0.956" stop-color="#f4b715"/><stop offset="0.991" stop-color="#fdd418"/><stop offset="0.999" stop-color="#fdd619"/></linearGradient><linearGradient id="c116" gradientUnits="userSpaceOnUse" x1="870.2" x2="1130.1"><stop offset="0.001" stop-color="#f2b211"/><stop offset="0.009" stop-color="#efae10"/><stop offset="0.017" stop-color="#e8a20e"/><stop offset="0.028" stop-color="#d68e0b"/><stop offset="0.047" stop-color="#b27006"/><stop offset="0.059" stop-color="#a16305"/><stop offset="0.067" stop-color="#9b6005"/><stop offset="0.193" stop-color="#985d04"/><stop offset="0.208" stop-color="#9b5f04"/><stop offset="0.239" stop-color="#ad6c06"/><stop offset="0.262" stop-color="#b87407"/><stop offset="0.327" stop-color="#c37d08"/><stop offset="0.427" stop-color="#d0880b"/><stop offset="0.492" stop-color="#d78f11"/><stop offset="0.684" stop-color="#e7a637"/><stop offset="0.753" stop-color="#eaac3e"/><stop offset="0.792" stop-color="#ecae3d"/><stop offset="0.830" stop-color="#edae37"/><stop offset="0.937" stop-color="#f0ae18"/><stop offset="0.956" stop-color="#f4b715"/><stop offset="0.991" stop-color="#fdd418"/><stop offset="0.999" stop-color="#fdd619"/></linearGradient><linearGradient id="c117" gradientUnits="userSpaceOnUse" x1="870.1" x2="1130.3"><stop offset="0.001" stop-color="#f2b211"/><stop offset="0.009" stop-color="#efad10"/><stop offset="0.017" stop-color="#e8a20e"/><stop offset="0.028" stop-color="#d68e0b"/><stop offset="0.047" stop-color="#b26f06"/><stop offset="0.059" stop-color="#a16305"/><stop offset="0.066" stop-color="#9b5f04"/><stop offset="0.196" stop-color="#985d04"/><stop offset="0.212" stop-color="#9b5f04"/><stop offset="0.265" stop-color="#b77407"/><stop offset="0.330" stop-color="#c37d08"/><stop offset="0.425" stop-color="#cf880b"/><stop offset="0.490" stop-color="#d68e10"/><stop offset="0.682" stop-color="#e6a535"/><stop offset="0.750" stop-color="#eaab3c"/><stop offset="0.792" stop-color="#ecad3b"/><stop offset="0.831" stop-color="#edae36"/><stop offset="0.938" stop-color="#efae17"/><stop offset="0.957" stop-color="#f4b715"/><stop offset="0.991" stop-color="#fdd318"/><stop offset="0.999" stop-color="#fdd619"/></linearGradient><linearGradient id="c118" gradientUnits="userSpaceOnUse" x1="869.9" x2="1130.4"><stop offset="0.001" stop-color="#f2b211"/><stop offset="0.009" stop-color="#efad10"/><stop offset="0.017" stop-color="#e8a20e"/><stop offset="0.028" stop-color="#d68e0b"/><stop offset="0.047" stop-color="#b16f06"/><stop offset="0.059" stop-color="#a06305"/><stop offset="0.066" stop-color="#9b5f04"/><stop offset="0.200" stop-color="#975d04"/><stop offset="0.212" stop-color="#995e04"/><stop offset="0.246" stop-color="#ad6c06"/><stop offset="0.269" stop-color="#b77407"/><stop offset="0.330" stop-color="#c27d08"/><stop offset="0.429" stop-color="#cf880b"/><stop offset="0.494" stop-color="#d68e10"/><stop offset="0.682" stop-color="#e6a434"/><stop offset="0.750" stop-color="#eaab3b"/><stop offset="0.792" stop-color="#ebad3a"/><stop offset="0.831" stop-color="#ecad34"/><stop offset="0.938" stop-color="#efad17"/><stop offset="0.957" stop-color="#f4b614"/><stop offset="0.991" stop-color="#fdd318"/><stop offset="0.999" stop-color="#fdd519"/></linearGradient><linearGradient id="c119" gradientUnits="userSpaceOnUse" x1="869.9" x2="1130.5"><stop offset="0.001" stop-color="#f2b211"/><stop offset="0.009" stop-color="#efad10"/><stop offset="0.017" stop-color="#e8a20e"/><stop offset="0.028" stop-color="#d68e0b"/><stop offset="0.047" stop-color="#b16f06"/><stop offset="0.059" stop-color="#a06305"/><stop offset="0.066" stop-color="#9a5f04"/><stop offset="0.204" stop-color="#975c04"/><stop offset="0.215" stop-color="#995e04"/><stop offset="0.250" stop-color="#ad6c06"/><stop offset="0.273" stop-color="#b77407"/><stop offset="0.334" stop-color="#c27c08"/><stop offset="0.429" stop-color="#cf870b"/><stop offset="0.494" stop-color="#d58e10"/><stop offset="0.682" stop-color="#e5a433"/><stop offset="0.750" stop-color="#e9aa3a"/><stop offset="0.788" stop-color="#ebac39"/><stop offset="0.827" stop-color="#ecac34"/><stop offset="0.938" stop-color="#efad16"/><stop offset="0.957" stop-color="#f4b614"/><stop offset="0.991" stop-color="#fdd318"/><stop offset="0.999" stop-color="#fdd519"/></linearGradient><linearGradient id="c120" gradientUnits="userSpaceOnUse" x1="869.8" x2="1130.6"><stop offset="0.001" stop-color="#f2b111"/><stop offset="0.009" stop-color="#efad10"/><stop offset="0.017" stop-color="#e7a10e"/><stop offset="0.028" stop-color="#d58d0b"/><stop offset="0.047" stop-color="#b06e06"/><stop offset="0.059" stop-color="#9f6205"/><stop offset="0.066" stop-color="#9a5e04"/><stop offset="0.204" stop-color="#965c04"/><stop offset="0.219" stop-color="#995e04"/><stop offset="0.254" stop-color="#ad6c06"/><stop offset="0.276" stop-color="#b77407"/><stop offset="0.338" stop-color="#c27c08"/><stop offset="0.433" stop-color="#ce870b"/><stop offset="0.498" stop-color="#d58e10"/><stop offset="0.682" stop-color="#e5a331"/><stop offset="0.750" stop-color="#e9a938"/><stop offset="0.827" stop-color="#ecac32"/><stop offset="0.938" stop-color="#efad16"/><stop offset="0.957" stop-color="#f4b614"/><stop offset="0.991" stop-color="#fdd318"/><stop offset="0.999" stop-color="#fdd519"/></linearGradient><linearGradient id="c121" gradientUnits="userSpaceOnUse" x1="869.7" x2="1130.7"><stop offset="0.001" stop-color="#f2b111"/><stop offset="0.009" stop-color="#efad10"/><stop offset="0.017" stop-color="#e7a10e"/><stop offset="0.028" stop-color="#d58d0b"/><stop offset="0.047" stop-color="#b06e06"/><stop offset="0.059" stop-color="#9f6205"/><stop offset="0.066" stop-color="#995e04"/><stop offset="0.208" stop-color="#965c04"/><stop offset="0.223" stop-color="#995e04"/><stop offset="0.276" stop-color="#b67307"/><stop offset="0.338" stop-color="#c17c08"/><stop offset="0.498" stop-color="#d58d10"/><stop offset="0.682" stop-color="#e4a230"/><stop offset="0.750" stop-color="#e8a837"/><stop offset="0.827" stop-color="#ebab31"/><stop offset="0.938" stop-color="#eeac16"/><stop offset="0.957" stop-color="#f3b514"/><stop offset="0.991" stop-color="#fdd318"/><stop offset="0.999" stop-color="#fdd518"/></linearGradient><linearGradient id="c122" gradientUnits="userSpaceOnUse" x1="869.6" x2="1130.7"><stop offset="0.001" stop-color="#f1b111"/><stop offset="0.009" stop-color="#efad10"/><stop offset="0.017" stop-color="#e7a10e"/><stop offset="0.028" stop-color="#d58d0b"/><stop offset="0.047" stop-color="#b06e06"/><stop offset="0.058" stop-color="#9e6205"/><stop offset="0.066" stop-color="#995e04"/><stop offset="0.211" stop-color="#955b04"/><stop offset="0.226" stop-color="#985d04"/><stop offset="0.279" stop-color="#b57207"/><stop offset="0.340" stop-color="#c17b08"/><stop offset="0.500" stop-color="#d58d10"/><stop offset="0.683" stop-color="#e4a12f"/><stop offset="0.751" stop-color="#e8a835"/><stop offset="0.827" stop-color="#ebaa30"/><stop offset="0.938" stop-color="#eeac15"/><stop offset="0.957" stop-color="#f3b514"/><stop offset="0.991" stop-color="#fdd318"/><stop offset="0.999" stop-color="#fdd518"/></linearGradient><linearGradient id="c123" gradientUnits="userSpaceOnUse" x1="869.5" x2="1130.8"><stop offset="0.001" stop-color="#f1b111"/><stop offset="0.009" stop-color="#efad10"/><stop offset="0.017" stop-color="#e7a10e"/><stop offset="0.028" stop-color="#d58d0b"/><stop offset="0.047" stop-color="#af6e06"/><stop offset="0.058" stop-color="#9e6105"/><stop offset="0.066" stop-color="#985e04"/><stop offset="0.215" stop-color="#955b04"/><stop offset="0.226" stop-color="#965c04"/><stop offset="0.283" stop-color="#b57207"/><stop offset="0.340" stop-color="#c07b08"/><stop offset="0.500" stop-color="#d48c0f"/><stop offset="0.683" stop-color="#e4a12e"/><stop offset="0.751" stop-color="#e8a734"/><stop offset="0.827" stop-color="#ebaa2e"/><stop offset="0.938" stop-color="#eeac15"/><stop offset="0.957" stop-color="#f3b513"/><stop offset="0.991" stop-color="#fdd218"/><stop offset="0.999" stop-color="#fdd518"/></linearGradient><linearGradient id="c124" gradientUnits="userSpaceOnUse" x1="869.5" x2="1130.9"><stop offset="0.001" stop-color="#f1b111"/><stop offset="0.009" stop-color="#efad10"/><stop offset="0.017" stop-color="#e7a10e"/><stop offset="0.028" stop-color="#d48c0a"/><stop offset="0.047" stop-color="#af6d06"/><stop offset="0.058" stop-color="#9e6105"/><stop offset="0.066" stop-color="#985d04"/><stop offset="0.218" stop-color="#955b04"/><stop offset="0.230" stop-color="#965c04"/><stop offset="0.264" stop-color="#ab6b06"/><stop offset="0.287" stop-color="#b57207"/><stop offset="0.340" stop-color="#c07a08"/><stop offset="0.500" stop-color="#d48c0f"/><stop offset="0.683" stop-color="#e3a02c"/><stop offset="0.747" stop-color="#e7a632"/><stop offset="0.824" stop-color="#eaa92e"/><stop offset="0.938" stop-color="#eeab14"/><stop offset="0.957" stop-color="#f3b413"/><stop offset="0.991" stop-color="#fdd218"/><stop offset="0.999" stop-color="#fdd418"/></linearGradient><linearGradient id="c125" gradientUnits="userSpaceOnUse" x1="869.4" x2="1130.9"><stop offset="0.001" stop-color="#f1b111"/><stop offset="0.009" stop-color="#efad10"/><stop offset="0.017" stop-color="#e7a10e"/><stop offset="0.028" stop-color="#d48c0a"/><stop offset="0.047" stop-color="#ae6d06"/><stop offset="0.058" stop-color="#9d6105"/><stop offset="0.066" stop-color="#985d04"/><stop offset="0.218" stop-color="#945b04"/><stop offset="0.234" stop-color="#965c04"/><stop offset="0.268" stop-color="#ab6b06"/><stop offset="0.291" stop-color="#b57207"/><stop offset="0.348" stop-color="#c07b08"/><stop offset="0.504" stop-color="#d38c0f"/><stop offset="0.683" stop-color="#e39f2b"/><stop offset="0.751" stop-color="#e7a531"/><stop offset="0.827" stop-color="#eaa82c"/><stop offset="0.934" stop-color="#edaa15"/><stop offset="0.953" stop-color="#f1b113"/><stop offset="0.991" stop-color="#fdd218"/><stop offset="0.999" stop-color="#fdd418"/></linearGradient><linearGradient id="c126" gradientUnits="userSpaceOnUse" x1="869.4" x2="1131.0"><stop offset="0.001" stop-color="#f1b111"/><stop offset="0.009" stop-color="#efac10"/><stop offset="0.017" stop-color="#e7a10e"/><stop offset="0.028" stop-color="#d48c0a"/><stop offset="0.047" stop-color="#ae6d06"/><stop offset="0.058" stop-color="#9d6005"/><stop offset="0.066" stop-color="#975d04"/><stop offset="0.222" stop-color="#945a04"/><stop offset="0.237" stop-color="#965c04"/><stop offset="0.291" stop-color="#b47106"/><stop offset="0.348" stop-color="#bf7a08"/><stop offset="0.504" stop-color="#d38b0f"/><stop offset="0.683" stop-color="#e29f2a"/><stop offset="0.751" stop-color="#e7a530"/><stop offset="0.824" stop-color="#eaa82b"/><stop offset="0.934" stop-color="#edaa14"/><stop offset="0.953" stop-color="#f1b113"/><stop offset="0.991" stop-color="#fcd218"/><stop offset="0.999" stop-color="#fdd418"/></linearGradient><linearGradient id="c127" gradientUnits="userSpaceOnUse" x1="869.3" x2="1131.0"><stop offset="0.001" stop-color="#f1b111"/><stop offset="0.009" stop-color="#efac10"/><stop offset="0.017" stop-color="#e7a00e"/><stop offset="0.028" stop-color="#d48c0a"/><stop offset="0.047" stop-color="#ad6c06"/><stop offset="0.058" stop-color="#9c6005"/><stop offset="0.066" stop-color="#975c04"/><stop offset="0.226" stop-color="#935a04"/><stop offset="0.237" stop-color="#955b04"/><stop offset="0.294" stop-color="#b47106"/><stop offset="0.348" stop-color="#be7908"/><stop offset="0.504" stop-color="#d28b0e"/><stop offset="0.687" stop-color="#e29e29"/><stop offset="0.751" stop-color="#e6a42e"/><stop offset="0.824" stop-color="#e9a72a"/><stop offset="0.934" stop-color="#eda914"/><stop offset="0.953" stop-color="#f1b113"/><stop offset="0.991" stop-color="#fcd218"/><stop offset="0.999" stop-color="#fdd418"/></linearGradient><linearGradient id="c128" gradientUnits="userSpaceOnUse" x1="869.3" x2="1131.0"><stop offset="0.001" stop-color="#f1b111"/><stop offset="0.009" stop-color="#efac10"/><stop offset="0.017" stop-color="#e6a00e"/><stop offset="0.028" stop-color="#d48c0a"/><stop offset="0.047" stop-color="#ad6c06"/><stop offset="0.058" stop-color="#9c6005"/><stop offset="0.066" stop-color="#965c04"/><stop offset="0.230" stop-color="#935a04"/><stop offset="0.241" stop-color="#945b04"/><stop offset="0.298" stop-color="#b47106"/><stop offset="0.352" stop-color="#be7908"/><stop offset="0.508" stop-color="#d28b0e"/><stop offset="0.687" stop-color="#e29e28"/><stop offset="0.751" stop-color="#e6a32d"/><stop offset="0.824" stop-color="#e9a628"/><stop offset="0.934" stop-color="#eca913"/><stop offset="0.953" stop-color="#f1b012"/><stop offset="0.991" stop-color="#fcd118"/><stop offset="0.999" stop-color="#fdd418"/></linearGradient><linearGradient id="c129" gradientUnits="userSpaceOnUse" x1="869.3" x2="1131.1"><stop offset="0.001" stop-color="#f1b011"/><stop offset="0.009" stop-color="#efac10"/><stop offset="0.017" stop-color="#e6a00e"/><stop offset="0.028" stop-color="#d38b0a"/><stop offset="0.047" stop-color="#ad6c06"/><stop offset="0.058" stop-color="#9b6005"/><stop offset="0.066" stop-color="#965c04"/><stop offset="0.234" stop-color="#925904"/><stop offset="0.245" stop-color="#945b04"/><stop offset="0.283" stop-color="#ab6b06"/><stop offset="0.310" stop-color="#b67307"/><stop offset="0.428" stop-color="#c88209"/><stop offset="0.523" stop-color="#d38c0f"/><stop offset="0.683" stop-color="#e19d26"/><stop offset="0.751" stop-color="#e5a22b"/><stop offset="0.824" stop-color="#e9a627"/><stop offset="0.934" stop-color="#eca913"/><stop offset="0.953" stop-color="#f1b012"/><stop offset="0.991" stop-color="#fcd118"/><stop offset="0.999" stop-color="#fdd318"/></linearGradient><linearGradient id="c130" gradientUnits="userSpaceOnUse" x1="869.2" x2="1131.1"><stop offset="0.001" stop-color="#f1b011"/><stop offset="0.009" stop-color="#eeac10"/><stop offset="0.017" stop-color="#e6a00e"/><stop offset="0.028" stop-color="#d38b0a"/><stop offset="0.047" stop-color="#ac6c06"/><stop offset="0.058" stop-color="#9b5f04"/><stop offset="0.066" stop-color="#965c04"/><stop offset="0.234" stop-color="#925904"/><stop offset="0.249" stop-color="#945b04"/><stop offset="0.287" stop-color="#ab6b06"/><stop offset="0.310" stop-color="#b57207"/><stop offset="0.428" stop-color="#c88109"/><stop offset="0.523" stop-color="#d38b0f"/><stop offset="0.687" stop-color="#e19c25"/><stop offset="0.751" stop-color="#e5a22a"/><stop offset="0.824" stop-color="#e8a526"/><stop offset="0.934" stop-color="#eca813"/><stop offset="0.953" stop-color="#f0af12"/><stop offset="0.991" stop-color="#fcd118"/><stop offset="0.999" stop-color="#fdd318"/></linearGradient><linearGradient id="c131" gradientUnits="userSpaceOnUse" x1="869.2" x2="1131.1"><stop offset="0.001" stop-color="#f1b011"/><stop offset="0.009" stop-color="#eeac10"/><stop offset="0.017" stop-color="#e6a00e"/><stop offset="0.028" stop-color="#d38b0a"/><stop offset="0.047" stop-color="#ac6b06"/><stop offset="0.058" stop-color="#9a5f04"/><stop offset="0.066" stop-color="#955b04"/><stop offset="0.237" stop-color="#915904"/><stop offset="0.253" stop-color="#955b04"/><stop offset="0.291" stop-color="#ab6b06"/><stop offset="0.313" stop-color="#b57207"/><stop offset="0.431" stop-color="#c88109"/><stop offset="0.527" stop-color="#d38b0f"/><stop offset="0.687" stop-color="#e09c24"/><stop offset="0.751" stop-color="#e5a129"/><stop offset="0.824" stop-color="#e8a525"/><stop offset="0.934" stop-color="#eca812"/><stop offset="0.953" stop-color="#f0af12"/><stop offset="0.991" stop-color="#fcd117"/><stop offset="0.999" stop-color="#fdd318"/></linearGradient><linearGradient id="c132" gradientUnits="userSpaceOnUse" x1="869.2" x2="1131.1"><stop offset="0.001" stop-color="#f1b011"/><stop offset="0.009" stop-color="#eeac10"/><stop offset="0.017" stop-color="#e6a00e"/><stop offset="0.028" stop-color="#d38b0a"/><stop offset="0.047" stop-color="#ac6b06"/><stop offset="0.058" stop-color="#9a5f04"/><stop offset="0.066" stop-color="#955b04"/><stop offset="0.241" stop-color="#915904"/><stop offset="0.253" stop-color="#935a04"/><stop offset="0.294" stop-color="#ab6b06"/><stop offset="0.317" stop-color="#b57207"/><stop offset="0.431" stop-color="#c78009"/><stop offset="0.527" stop-color="#d28a0f"/><stop offset="0.687" stop-color="#e09b23"/><stop offset="0.751" stop-color="#e4a027"/><stop offset="0.824" stop-color="#e8a424"/><stop offset="0.934" stop-color="#eba712"/><stop offset="0.953" stop-color="#f0af12"/><stop offset="0.991" stop-color="#fcd117"/><stop offset="0.999" stop-color="#fdd318"/></linearGradient><linearGradient id="c133" gradientUnits="userSpaceOnUse" x1="869.2" x2="1131.1"><stop offset="0.001" stop-color="#f1b011"/><stop offset="0.009" stop-color="#eeac10"/><stop offset="0.017" stop-color="#e6a00e"/><stop offset="0.028" stop-color="#d38b0a"/><stop offset="0.047" stop-color="#ab6b06"/><stop offset="0.058" stop-color="#9a5e04"/><stop offset="0.066" stop-color="#945b04"/><stop offset="0.245" stop-color="#915804"/><stop offset="0.256" stop-color="#925904"/><stop offset="0.294" stop-color="#aa6a06"/><stop offset="0.321" stop-color="#b57207"/><stop offset="0.435" stop-color="#c78009"/><stop offset="0.530" stop-color="#d28a0f"/><stop offset="0.687" stop-color="#e09a22"/><stop offset="0.751" stop-color="#e4a026"/><stop offset="0.820" stop-color="#e7a323"/><stop offset="0.934" stop-color="#eba712"/><stop offset="0.953" stop-color="#f0ae11"/><stop offset="0.991" stop-color="#fcd017"/><stop offset="0.999" stop-color="#fdd318"/></linearGradient><linearGradient id="c134" gradientUnits="userSpaceOnUse" x1="869.2" x2="1131.1"><stop offset="0.001" stop-color="#f1b011"/><stop offset="0.009" stop-color="#eeab10"/><stop offset="0.017" stop-color="#e69f0e"/><stop offset="0.028" stop-color="#d28a0a"/><stop offset="0.047" stop-color="#ab6b06"/><stop offset="0.058" stop-color="#995e04"/><stop offset="0.066" stop-color="#945a04"/><stop offset="0.245" stop-color="#905804"/><stop offset="0.260" stop-color="#925904"/><stop offset="0.298" stop-color="#aa6a06"/><stop offset="0.325" stop-color="#b47207"/><stop offset="0.435" stop-color="#c68009"/><stop offset="0.530" stop-color="#d18a0e"/><stop offset="0.687" stop-color="#df9a21"/><stop offset="0.751" stop-color="#e39f25"/><stop offset="0.820" stop-color="#e7a322"/><stop offset="0.934" stop-color="#eba712"/><stop offset="0.953" stop-color="#f0ae11"/><stop offset="0.991" stop-color="#fcd017"/><stop offset="0.999" stop-color="#fdd218"/></linearGradient><linearGradient id="c135" gradientUnits="userSpaceOnUse" x1="869.3" x2="1131.1"><stop offset="0.001" stop-color="#f1b011"/><stop offset="0.009" stop-color="#eeab10"/><stop offset="0.017" stop-color="#e69f0e"/><stop offset="0.028" stop-color="#d28a0a"/><stop offset="0.047" stop-color="#ab6a06"/><stop offset="0.058" stop-color="#995e04"/><stop offset="0.066" stop-color="#935a04"/><stop offset="0.249" stop-color="#905804"/><stop offset="0.264" stop-color="#925904"/><stop offset="0.302" stop-color="#aa6a06"/><stop offset="0.329" stop-color="#b47207"/><stop offset="0.439" stop-color="#c68009"/><stop offset="0.530" stop-color="#d1890e"/><stop offset="0.687" stop-color="#df9920"/><stop offset="0.751" stop-color="#e39e24"/><stop offset="0.820" stop-color="#e6a221"/><stop offset="0.934" stop-color="#eba611"/><stop offset="0.953" stop-color="#efae11"/><stop offset="0.991" stop-color="#fcd017"/><stop offset="0.999" stop-color="#fdd218"/></linearGradient><linearGradient id="c136" gradientUnits="userSpaceOnUse" x1="869.3" x2="1131.0"><stop offset="0.001" stop-color="#f1b011"/><stop offset="0.009" stop-color="#eeab10"/><stop offset="0.017" stop-color="#e69f0e"/><stop offset="0.028" stop-color="#d28a0a"/><stop offset="0.047" stop-color="#aa6a06"/><stop offset="0.058" stop-color="#985e04"/><stop offset="0.066" stop-color="#935a04"/><stop offset="0.253" stop-color="#8f5704"/><stop offset="0.268" stop-color="#935904"/><stop offset="0.306" stop-color="#aa6a06"/><stop offset="0.329" stop-color="#b37106"/><stop offset="0.439" stop-color="#c57f09"/><stop offset="0.530" stop-color="#d0890e"/><stop offset="0.687" stop-color="#de981f"/><stop offset="0.751" stop-color="#e39e22"/><stop offset="0.820" stop-color="#e6a120"/><stop offset="0.934" stop-color="#eaa611"/><stop offset="0.953" stop-color="#efad11"/><stop offset="0.991" stop-color="#fcd017"/><stop offset="0.999" stop-color="#fdd218"/></linearGradient><linearGradient id="c137" gradientUnits="userSpaceOnUse" x1="869.3" x2="1131.0"><stop offset="0.001" stop-color="#f1b011"/><stop offset="0.009" stop-color="#eeab10"/><stop offset="0.017" stop-color="#e59f0e"/><stop offset="0.028" stop-color="#d28a0a"/><stop offset="0.047" stop-color="#aa6a06"/><stop offset="0.058" stop-color="#985d04"/><stop offset="0.066" stop-color="#935a04"/><stop offset="0.256" stop-color="#8f5704"/><stop offset="0.268" stop-color="#905804"/><stop offset="0.310" stop-color="#aa6a06"/><stop offset="0.333" stop-color="#b37106"/><stop offset="0.439" stop-color="#c57e09"/><stop offset="0.588" stop-color="#d58e13"/><stop offset="0.690" stop-color="#de981e"/><stop offset="0.751" stop-color="#e29d21"/><stop offset="0.820" stop-color="#e6a11f"/><stop offset="0.934" stop-color="#eaa511"/><stop offset="0.953" stop-color="#efad11"/><stop offset="0.991" stop-color="#fccf17"/><stop offset="0.999" stop-color="#fcd218"/></linearGradient><linearGradient id="c138" gradientUnits="userSpaceOnUse" x1="869.4" x2="1131.0"><stop offset="0.001" stop-color="#f1af11"/><stop offset="0.009" stop-color="#eeab10"/><stop offset="0.017" stop-color="#e59f0e"/><stop offset="0.028" stop-color="#d28a0a"/><stop offset="0.047" stop-color="#aa6a06"/><stop offset="0.058" stop-color="#985d04"/><stop offset="0.066" stop-color="#925904"/><stop offset="0.256" stop-color="#8e5704"/><stop offset="0.272" stop-color="#905804"/><stop offset="0.310" stop-color="#a86805"/><stop offset="0.336" stop-color="#b37006"/><stop offset="0.443" stop-color="#c47e09"/><stop offset="0.591" stop-color="#d58e12"/><stop offset="0.751" stop-color="#e29c20"/><stop offset="0.816" stop-color="#e5a01e"/><stop offset="0.934" stop-color="#eaa511"/><stop offset="0.953" stop-color="#efad11"/><stop offset="0.991" stop-color="#fccf17"/><stop offset="0.999" stop-color="#fcd218"/></linearGradient><linearGradient id="c139" gradientUnits="userSpaceOnUse" x1="869.4" x2="1130.9"><stop offset="0.001" stop-color="#f0af11"/><stop offset="0.009" stop-color="#eeab10"/><stop offset="0.017" stop-color="#e59f0e"/><stop offset="0.028" stop-color="#d28a0a"/><stop offset="0.047" stop-color="#a96906"/><stop offset="0.058" stop-color="#975d04"/><stop offset="0.066" stop-color="#925904"/><stop offset="0.260" stop-color="#8e5604"/><stop offset="0.275" stop-color="#905804"/><stop offset="0.313" stop-color="#a86805"/><stop offset="0.340" stop-color="#b37006"/><stop offset="0.447" stop-color="#c47e09"/><stop offset="0.591" stop-color="#d58d12"/><stop offset="0.751" stop-color="#e19c1f"/><stop offset="0.816" stop-color="#e59f1d"/><stop offset="0.934" stop-color="#eaa410"/><stop offset="0.953" stop-color="#efac11"/><stop offset="0.991" stop-color="#fccf17"/><stop offset="0.999" stop-color="#fcd118"/></linearGradient><linearGradient id="c140" gradientUnits="userSpaceOnUse" x1="869.5" x2="1130.8"><stop offset="0.001" stop-color="#f0af11"/><stop offset="0.009" stop-color="#eeab10"/><stop offset="0.017" stop-color="#e59f0e"/><stop offset="0.028" stop-color="#d18a0a"/><stop offset="0.047" stop-color="#a96906"/><stop offset="0.058" stop-color="#975c04"/><stop offset="0.066" stop-color="#915904"/><stop offset="0.264" stop-color="#8d5604"/><stop offset="0.279" stop-color="#905804"/><stop offset="0.317" stop-color="#a86805"/><stop offset="0.344" stop-color="#b37006"/><stop offset="0.447" stop-color="#c47e08"/><stop offset="0.591" stop-color="#d48d11"/><stop offset="0.751" stop-color="#e19b1e"/><stop offset="0.816" stop-color="#e49f1c"/><stop offset="0.934" stop-color="#e9a410"/><stop offset="0.953" stop-color="#eeac10"/><stop offset="0.991" stop-color="#fccf17"/><stop offset="0.999" stop-color="#fcd118"/></linearGradient><linearGradient id="c141" gradientUnits="userSpaceOnUse" x1="869.5" x2="1130.8"><stop offset="0.001" stop-color="#f0af11"/><stop offset="0.009" stop-color="#eeab10"/><stop offset="0.017" stop-color="#e59f0e"/><stop offset="0.028" stop-color="#d1890a"/><stop offset="0.047" stop-color="#a96906"/><stop offset="0.058" stop-color="#975c04"/><stop offset="0.066" stop-color="#915804"/><stop offset="0.268" stop-color="#8d5604"/><stop offset="0.283" stop-color="#905804"/><stop offset="0.321" stop-color="#a86805"/><stop offset="0.344" stop-color="#b16f06"/><stop offset="0.447" stop-color="#c37d08"/><stop offset="0.591" stop-color="#d48c11"/><stop offset="0.751" stop-color="#e09a1d"/><stop offset="0.816" stop-color="#e49e1b"/><stop offset="0.934" stop-color="#e9a410"/><stop offset="0.953" stop-color="#eeab10"/><stop offset="0.991" stop-color="#fccf17"/><stop offset="0.999" stop-color="#fcd118"/></linearGradient><linearGradient id="c142" gradientUnits="userSpaceOnUse" x1="869.6" x2="1130.7"><stop offset="0.001" stop-color="#f0af11"/><stop offset="0.009" stop-color="#eeab10"/><stop offset="0.017" stop-color="#e59e0e"/><stop offset="0.028" stop-color="#d1890a"/><stop offset="0.047" stop-color="#a86905"/><stop offset="0.058" stop-color="#965c04"/><stop offset="0.066" stop-color="#905804"/><stop offset="0.272" stop-color="#8d5604"/><stop offset="0.283" stop-color="#8e5704"/><stop offset="0.325" stop-color="#a86805"/><stop offset="0.348" stop-color="#b16f06"/><stop offset="0.451" stop-color="#c37d08"/><stop offset="0.595" stop-color="#d38c11"/><stop offset="0.751" stop-color="#e09a1c"/><stop offset="0.816" stop-color="#e49e1a"/><stop offset="0.934" stop-color="#e9a310"/><stop offset="0.953" stop-color="#eeab10"/><stop offset="0.991" stop-color="#fcce17"/><stop offset="0.999" stop-color="#fcd117"/></linearGradient><linearGradient id="c143" gradientUnits="userSpaceOnUse" x1="869.7" x2="1130.6"><stop offset="0.001" stop-color="#f0af10"/><stop offset="0.009" stop-color="#eeaa10"/><stop offset="0.017" stop-color="#e59e0e"/><stop offset="0.028" stop-color="#d1890a"/><stop offset="0.047" stop-color="#a86805"/><stop offset="0.059" stop-color="#965c04"/><stop offset="0.066" stop-color="#905804"/><stop offset="0.273" stop-color="#8c5504"/><stop offset="0.288" stop-color="#8f5704"/><stop offset="0.326" stop-color="#a66705"/><stop offset="0.353" stop-color="#b26f06"/><stop offset="0.452" stop-color="#c27c08"/><stop offset="0.594" stop-color="#d38b10"/><stop offset="0.750" stop-color="#df991b"/><stop offset="0.815" stop-color="#e39d19"/><stop offset="0.934" stop-color="#e8a30f"/><stop offset="0.953" stop-color="#eeab10"/><stop offset="0.991" stop-color="#fcce17"/><stop offset="0.999" stop-color="#fcd017"/></linearGradient><linearGradient id="c144" gradientUnits="userSpaceOnUse" x1="869.8" x2="1130.6"><stop offset="0.001" stop-color="#f0af10"/><stop offset="0.009" stop-color="#eeaa10"/><stop offset="0.017" stop-color="#e59e0d"/><stop offset="0.028" stop-color="#d1890a"/><stop offset="0.047" stop-color="#a86805"/><stop offset="0.059" stop-color="#955b04"/><stop offset="0.066" stop-color="#905804"/><stop offset="0.276" stop-color="#8c5504"/><stop offset="0.292" stop-color="#8f5704"/><stop offset="0.330" stop-color="#a66705"/><stop offset="0.353" stop-color="#b06e06"/><stop offset="0.452" stop-color="#c17c08"/><stop offset="0.594" stop-color="#d28b0f"/><stop offset="0.750" stop-color="#df981a"/><stop offset="0.811" stop-color="#e39c18"/><stop offset="0.934" stop-color="#e8a20f"/><stop offset="0.953" stop-color="#edaa10"/><stop offset="0.991" stop-color="#fcce17"/><stop offset="0.999" stop-color="#fcd017"/></linearGradient><linearGradient id="c145" gradientUnits="userSpaceOnUse" x1="869.8" x2="1130.5"><stop offset="0.001" stop-color="#f0af10"/><stop offset="0.009" stop-color="#edaa10"/><stop offset="0.017" stop-color="#e59e0d"/><stop offset="0.028" stop-color="#d1890a"/><stop offset="0.047" stop-color="#a86805"/><stop offset="0.059" stop-color="#955b04"/><stop offset="0.066" stop-color="#8f5704"/><stop offset="0.280" stop-color="#8b5503"/><stop offset="0.296" stop-color="#8f5704"/><stop offset="0.334" stop-color="#a66705"/><stop offset="0.357" stop-color="#b06e06"/><stop offset="0.456" stop-color="#c17c08"/><stop offset="0.594" stop-color="#d28a0f"/><stop offset="0.750" stop-color="#df9819"/><stop offset="0.811" stop-color="#e29c18"/><stop offset="0.934" stop-color="#e8a20f"/><stop offset="0.953" stop-color="#edaa10"/><stop offset="0.991" stop-color="#fcce17"/><stop offset="0.999" stop-color="#fcd017"/></linearGradient><linearGradient id="c146" gradientUnits="userSpaceOnUse" x1="870.0" x2="1130.3"><stop offset="0.001" stop-color="#f0af10"/><stop offset="0.009" stop-color="#eeaa10"/><stop offset="0.017" stop-color="#e59e0e"/><stop offset="0.028" stop-color="#d1890a"/><stop offset="0.047" stop-color="#a86805"/><stop offset="0.059" stop-color="#955b04"/><stop offset="0.066" stop-color="#8e5704"/><stop offset="0.284" stop-color="#8a5403"/><stop offset="0.299" stop-color="#8c5504"/><stop offset="0.338" stop-color="#a46605"/><stop offset="0.364" stop-color="#b06e06"/><stop offset="0.460" stop-color="#c07b08"/><stop offset="0.597" stop-color="#d1890e"/><stop offset="0.750" stop-color="#de9717"/><stop offset="0.934" stop-color="#e7a10f"/><stop offset="0.953" stop-color="#eda910"/><stop offset="0.987" stop-color="#fbca16"/><stop offset="0.999" stop-color="#fcd017"/></linearGradient><linearGradient id="c147" gradientUnits="userSpaceOnUse" x1="870.2" x2="1130.1"><stop offset="0.001" stop-color="#f0af10"/><stop offset="0.009" stop-color="#eeab10"/><stop offset="0.021" stop-color="#e0980c"/><stop offset="0.047" stop-color="#a86805"/><stop offset="0.059" stop-color="#945a04"/><stop offset="0.067" stop-color="#8d5604"/><stop offset="0.297" stop-color="#895303"/><stop offset="0.308" stop-color="#8b5403"/><stop offset="0.350" stop-color="#a46605"/><stop offset="0.373" stop-color="#af6d06"/><stop offset="0.465" stop-color="#bf7a08"/><stop offset="0.600" stop-color="#cf880d"/><stop offset="0.749" stop-color="#dc9515"/><stop offset="0.933" stop-color="#e6a00e"/><stop offset="0.953" stop-color="#eca80f"/><stop offset="0.987" stop-color="#fbca16"/><stop offset="0.999" stop-color="#fcd017"/></linearGradient><linearGradient id="c148" gradientUnits="userSpaceOnUse" x1="870.5" x2="1129.8"><stop offset="0.001" stop-color="#f0af10"/><stop offset="0.009" stop-color="#eeab10"/><stop offset="0.021" stop-color="#e0990d"/><stop offset="0.028" stop-color="#d38b0a"/><stop offset="0.044" stop-color="#b16f06"/><stop offset="0.055" stop-color="#9a5f04"/><stop offset="0.063" stop-color="#905704"/><stop offset="0.070" stop-color="#8b5503"/><stop offset="0.304" stop-color="#885203"/><stop offset="0.320" stop-color="#8a5403"/><stop offset="0.358" stop-color="#a26405"/><stop offset="0.385" stop-color="#ae6d06"/><stop offset="0.469" stop-color="#bd7808"/><stop offset="0.600" stop-color="#cd860c"/><stop offset="0.745" stop-color="#da9312"/><stop offset="0.933" stop-color="#e59f0e"/><stop offset="0.953" stop-color="#eca80f"/><stop offset="0.987" stop-color="#fbca16"/><stop offset="0.999" stop-color="#fcd017"/></linearGradient><linearGradient id="c149" gradientUnits="userSpaceOnUse" x1="870.7" x2="1129.6"><stop offset="0.001" stop-color="#f0af10"/><stop offset="0.009" stop-color="#eeab10"/><stop offset="0.021" stop-color="#e0990d"/><stop offset="0.032" stop-color="#cb8409"/><stop offset="0.051" stop-color="#a26405"/><stop offset="0.063" stop-color="#8f5704"/><stop offset="0.071" stop-color="#8a5403"/><stop offset="0.313" stop-color="#865103"/><stop offset="0.329" stop-color="#885203"/><stop offset="0.371" stop-color="#a26405"/><stop offset="0.394" stop-color="#ad6c06"/><stop offset="0.475" stop-color="#bb7707"/><stop offset="0.683" stop-color="#d48c0f"/><stop offset="0.779" stop-color="#db9411"/><stop offset="0.933" stop-color="#e49d0e"/><stop offset="0.952" stop-color="#eca80f"/><stop offset="0.987" stop-color="#fbca16"/><stop offset="0.999" stop-color="#fcd017"/></linearGradient><linearGradient id="c150" gradientUnits="userSpaceOnUse" x1="870.9" x2="1129.4"><stop offset="0.001" stop-color="#f0af10"/><stop offset="0.009" stop-color="#eeab10"/><stop offset="0.021" stop-color="#e0990d"/><stop offset="0.032" stop-color="#cc8409"/><stop offset="0.051" stop-color="#a36505"/><stop offset="0.063" stop-color="#905804"/><stop offset="0.071" stop-color="#895303"/><stop offset="0.325" stop-color="#855003"/><stop offset="0.340" stop-color="#875203"/><stop offset="0.379" stop-color="#9f6205"/><stop offset="0.406" stop-color="#ac6b06"/><stop offset="0.479" stop-color="#ba7607"/><stop offset="0.683" stop-color="#d28a0d"/><stop offset="0.929" stop-color="#e39b0d"/><stop offset="0.949" stop-color="#eaa50f"/><stop offset="0.987" stop-color="#fbca16"/><stop offset="0.999" stop-color="#fcd017"/></linearGradient><linearGradient id="c151" gradientUnits="userSpaceOnUse" x1="871.2" x2="1129.1"><stop offset="0.001" stop-color="#f0af10"/><stop offset="0.009" stop-color="#eeab10"/><stop offset="0.021" stop-color="#e0990d"/><stop offset="0.044" stop-color="#b37106"/><stop offset="0.059" stop-color="#955b04"/><stop offset="0.067" stop-color="#8c5504"/><stop offset="0.075" stop-color="#885203"/><stop offset="0.338" stop-color="#834f03"/><stop offset="0.349" stop-color="#855003"/><stop offset="0.392" stop-color="#9f6205"/><stop offset="0.415" stop-color="#aa6a06"/><stop offset="0.481" stop-color="#b77407"/><stop offset="0.678" stop-color="#d0880c"/><stop offset="0.929" stop-color="#e29b0d"/><stop offset="0.948" stop-color="#eaa50f"/><stop offset="0.987" stop-color="#fbca16"/><stop offset="0.999" stop-color="#fcd017"/></linearGradient><linearGradient id="c152" gradientUnits="userSpaceOnUse" x1="871.4" x2="1128.9"><stop offset="0.001" stop-color="#f0af10"/><stop offset="0.009" stop-color="#eeab10"/><stop offset="0.021" stop-color="#e0990d"/><stop offset="0.044" stop-color="#b37106"/><stop offset="0.059" stop-color="#965c04"/><stop offset="0.067" stop-color="#8c5504"/><stop offset="0.075" stop-color="#885203"/><stop offset="0.129" stop-color="#845003"/><stop offset="0.345" stop-color="#824e03"/><stop offset="0.361" stop-color="#845003"/><stop offset="0.403" stop-color="#9f6205"/><stop offset="0.427" stop-color="#a96906"/><stop offset="0.485" stop-color="#b57207"/><stop offset="0.666" stop-color="#cd850b"/><stop offset="0.929" stop-color="#e29b0d"/><stop offset="0.948" stop-color="#eaa50f"/><stop offset="0.987" stop-color="#fbca16"/><stop offset="0.999" stop-color="#fcd017"/></linearGradient><linearGradient id="c153" gradientUnits="userSpaceOnUse" x1="871.6" x2="1128.7"><stop offset="0.001" stop-color="#f0af10"/><stop offset="0.009" stop-color="#eeab10"/><stop offset="0.021" stop-color="#e0990d"/><stop offset="0.044" stop-color="#b37106"/><stop offset="0.055" stop-color="#9c6005"/><stop offset="0.067" stop-color="#8c5504"/><stop offset="0.075" stop-color="#885203"/><stop offset="0.175" stop-color="#824f03"/><stop offset="0.357" stop-color="#804d03"/><stop offset="0.372" stop-color="#834f03"/><stop offset="0.411" stop-color="#9b6005"/><stop offset="0.434" stop-color="#a76805"/><stop offset="0.485" stop-color="#b27006"/><stop offset="0.655" stop-color="#c9830a"/><stop offset="0.929" stop-color="#e29b0d"/><stop offset="0.948" stop-color="#eaa50f"/><stop offset="0.987" stop-color="#fbca16"/><stop offset="0.999" stop-color="#fcd017"/></linearGradient><linearGradient id="c154" gradientUnits="userSpaceOnUse" x1="871.9" x2="1128.4"><stop offset="0.001" stop-color="#f0af10"/><stop offset="0.009" stop-color="#eeab10"/><stop offset="0.021" stop-color="#e0990d"/><stop offset="0.044" stop-color="#b37106"/><stop offset="0.056" stop-color="#9c6005"/><stop offset="0.067" stop-color="#8c5504"/><stop offset="0.075" stop-color="#885203"/><stop offset="0.234" stop-color="#804d03"/><stop offset="0.370" stop-color="#7f4c03"/><stop offset="0.386" stop-color="#824f03"/><stop offset="0.444" stop-color="#a56605"/><stop offset="0.486" stop-color="#b06e06"/><stop offset="0.646" stop-color="#c68009"/><stop offset="0.929" stop-color="#e29b0d"/><stop offset="0.948" stop-color="#eaa50f"/><stop offset="0.987" stop-color="#fbca16"/><stop offset="0.999" stop-color="#fcd017"/></linearGradient><linearGradient id="c155" gradientUnits="userSpaceOnUse" x1="872.1" x2="1128.2"><stop offset="0.001" stop-color="#f0af10"/><stop offset="0.009" stop-color="#eeab10"/><stop offset="0.021" stop-color="#e1990d"/><stop offset="0.044" stop-color="#b47106"/><stop offset="0.056" stop-color="#9c6005"/><stop offset="0.067" stop-color="#8c5504"/><stop offset="0.075" stop-color="#885203"/><stop offset="0.219" stop-color="#814e03"/><stop offset="0.382" stop-color="#7d4b03"/><stop offset="0.397" stop-color="#814e03"/><stop offset="0.451" stop-color="#a26405"/><stop offset="0.486" stop-color="#ac6c06"/><stop offset="0.634" stop-color="#c37d08"/><stop offset="0.929" stop-color="#e29b0d"/><stop offset="0.948" stop-color="#eaa50f"/><stop offset="0.987" stop-color="#fbca16"/><stop offset="0.999" stop-color="#fcd017"/></linearGradient><linearGradient id="c156" gradientUnits="userSpaceOnUse" x1="872.3" x2="1127.9"><stop offset="0.001" stop-color="#f0af10"/><stop offset="0.009" stop-color="#eeab10"/><stop offset="0.021" stop-color="#e0990d"/><stop offset="0.044" stop-color="#b47106"/><stop offset="0.056" stop-color="#9c6005"/><stop offset="0.068" stop-color="#8c5504"/><stop offset="0.075" stop-color="#885203"/><stop offset="0.212" stop-color="#814e03"/><stop offset="0.383" stop-color="#7d4b03"/><stop offset="0.403" stop-color="#804d03"/><stop offset="0.453" stop-color="#9f6205"/><stop offset="0.492" stop-color="#ab6b06"/><stop offset="0.683" stop-color="#c98209"/><stop offset="0.929" stop-color="#e29b0d"/><stop offset="0.948" stop-color="#eaa50f"/><stop offset="0.987" stop-color="#fbca16"/><stop offset="0.999" stop-color="#fcd017"/></linearGradient><linearGradient id="c157" gradientUnits="userSpaceOnUse" x1="872.6" x2="1127.7"><stop offset="0.001" stop-color="#f0af10"/><stop offset="0.009" stop-color="#eeab10"/><stop offset="0.021" stop-color="#e1990d"/><stop offset="0.044" stop-color="#b47106"/><stop offset="0.056" stop-color="#9d6005"/><stop offset="0.068" stop-color="#8c5504"/><stop offset="0.075" stop-color="#885203"/><stop offset="0.208" stop-color="#814e03"/><stop offset="0.383" stop-color="#7d4b03"/><stop offset="0.403" stop-color="#804d03"/><stop offset="0.453" stop-color="#9f6205"/><stop offset="0.492" stop-color="#ab6b06"/><stop offset="0.683" stop-color="#c98209"/><stop offset="0.929" stop-color="#e29b0d"/><stop offset="0.948" stop-color="#eaa50f"/><stop offset="0.987" stop-color="#fbca16"/><stop offset="0.999" stop-color="#fcd017"/></linearGradient><linearGradient id="c158" gradientUnits="userSpaceOnUse" x1="872.8" x2="1127.5"><stop offset="0.001" stop-color="#f0af10"/><stop offset="0.009" stop-color="#eeab10"/><stop offset="0.021" stop-color="#e1990d"/><stop offset="0.044" stop-color="#b47106"/><stop offset="0.056" stop-color="#9d6005"/><stop offset="0.068" stop-color="#8c5504"/><stop offset="0.076" stop-color="#885203"/><stop offset="0.209" stop-color="#814e03"/><stop offset="0.385" stop-color="#7d4b03"/><stop offset="0.400" stop-color="#7f4c03"/><stop offset="0.455" stop-color="#9f6205"/><stop offset="0.490" stop-color="#ab6b06"/><stop offset="0.682" stop-color="#c88209"/><stop offset="0.928" stop-color="#e29b0d"/><stop offset="0.948" stop-color="#eaa50f"/><stop offset="0.987" stop-color="#fbca16"/><stop offset="0.999" stop-color="#fcd017"/></linearGradient><linearGradient id="c159" gradientUnits="userSpaceOnUse" x1="873.0" x2="1127.2"><stop offset="0.001" stop-color="#f0af10"/><stop offset="0.009" stop-color="#eeab10"/><stop offset="0.021" stop-color="#e1990d"/><stop offset="0.033" stop-color="#cc8509"/><stop offset="0.056" stop-color="#9d6105"/><stop offset="0.068" stop-color="#8d5504"/><stop offset="0.076" stop-color="#885203"/><stop offset="0.209" stop-color="#814e03"/><stop offset="0.385" stop-color="#7d4b03"/><stop offset="0.400" stop-color="#7f4d03"/><stop offset="0.455" stop-color="#9f6205"/><stop offset="0.490" stop-color="#ab6b06"/><stop offset="0.682" stop-color="#c88209"/><stop offset="0.928" stop-color="#e29b0d"/><stop offset="0.948" stop-color="#eaa50f"/><stop offset="0.987" stop-color="#fbca16"/><stop offset="0.999" stop-color="#fcd017"/></linearGradient><linearGradient id="c160" gradientUnits="userSpaceOnUse" x1="873.3" x2="1127.0"><stop offset="0.001" stop-color="#f0af10"/><stop offset="0.009" stop-color="#eeab10"/><stop offset="0.021" stop-color="#e1990d"/><stop offset="0.045" stop-color="#b47106"/><stop offset="0.056" stop-color="#9d6105"/><stop offset="0.068" stop-color="#8d5504"/><stop offset="0.076" stop-color="#885203"/><stop offset="0.213" stop-color="#814e03"/><stop offset="0.386" stop-color="#7d4b03"/><stop offset="0.402" stop-color="#804d03"/><stop offset="0.453" stop-color="#9e6205"/><stop offset="0.488" stop-color="#ab6a06"/><stop offset="0.681" stop-color="#c88209"/><stop offset="0.928" stop-color="#e29b0d"/><stop offset="0.948" stop-color="#eaa50f"/><stop offset="0.987" stop-color="#fbca16"/><stop offset="0.999" stop-color="#fcd017"/></linearGradient><linearGradient id="c161" gradientUnits="userSpaceOnUse" x1="873.5" x2="1126.8"><stop offset="0.001" stop-color="#f0af10"/><stop offset="0.009" stop-color="#eeab10"/><stop offset="0.021" stop-color="#e1990d"/><stop offset="0.033" stop-color="#cc8509"/><stop offset="0.056" stop-color="#9d6105"/><stop offset="0.068" stop-color="#8d5604"/><stop offset="0.076" stop-color="#885203"/><stop offset="0.209" stop-color="#814e03"/><stop offset="0.386" stop-color="#7d4b03"/><stop offset="0.402" stop-color="#804d03"/><stop offset="0.453" stop-color="#9e6205"/><stop offset="0.488" stop-color="#ab6b06"/><stop offset="0.681" stop-color="#c88209"/><stop offset="0.928" stop-color="#e29b0d"/><stop offset="0.948" stop-color="#eaa50f"/><stop offset="0.987" stop-color="#fbca16"/><stop offset="0.999" stop-color="#fcd017"/></linearGradient><linearGradient id="c162" gradientUnits="userSpaceOnUse" x1="873.7" x2="1126.5"><stop offset="0.001" stop-color="#f0af10"/><stop offset="0.009" stop-color="#eeab10"/><stop offset="0.021" stop-color="#e1990d"/><stop offset="0.033" stop-color="#cc8509"/><stop offset="0.057" stop-color="#9d6105"/><stop offset="0.068" stop-color="#8d5604"/><stop offset="0.076" stop-color="#885203"/><stop offset="0.210" stop-color="#814e03"/><stop offset="0.384" stop-color="#7d4b03"/><stop offset="0.399" stop-color="#7f4c03"/><stop offset="0.455" stop-color="#9f6205"/><stop offset="0.490" stop-color="#ab6b06"/><stop offset="0.683" stop-color="#c98209"/><stop offset="0.928" stop-color="#e29b0d"/><stop offset="0.947" stop-color="#eaa50f"/><stop offset="0.987" stop-color="#fbca16"/><stop offset="0.999" stop-color="#fcd017"/></linearGradient><linearGradient id="c163" gradientUnits="userSpaceOnUse" x1="874.0" x2="1126.3"><stop offset="0.001" stop-color="#f0af10"/><stop offset="0.009" stop-color="#eeab10"/><stop offset="0.021" stop-color="#e1990d"/><stop offset="0.033" stop-color="#cc8509"/><stop offset="0.057" stop-color="#9d6105"/><stop offset="0.068" stop-color="#8d5604"/><stop offset="0.076" stop-color="#885203"/><stop offset="0.210" stop-color="#814e03"/><stop offset="0.384" stop-color="#7d4b03"/><stop offset="0.399" stop-color="#7f4c03"/><stop offset="0.455" stop-color="#9f6205"/><stop offset="0.490" stop-color="#ab6b06"/><stop offset="0.683" stop-color="#c98209"/><stop offset="0.928" stop-color="#e29b0d"/><stop offset="0.947" stop-color="#eaa50f"/><stop offset="0.987" stop-color="#fbca16"/><stop offset="0.999" stop-color="#fcd017"/></linearGradient><linearGradient id="c164" gradientUnits="userSpaceOnUse" x1="874.2" x2="1126.1"><stop offset="0.001" stop-color="#f0af10"/><stop offset="0.009" stop-color="#eeab10"/><stop offset="0.021" stop-color="#e1990d"/><stop offset="0.033" stop-color="#cc8509"/><stop offset="0.057" stop-color="#9d6105"/><stop offset="0.069" stop-color="#8d5604"/><stop offset="0.077" stop-color="#885203"/><stop offset="0.211" stop-color="#814e03"/><stop offset="0.385" stop-color="#7d4b03"/><stop offset="0.401" stop-color="#804d03"/><stop offset="0.453" stop-color="#9e6205"/><stop offset="0.488" stop-color="#ab6b06"/><stop offset="0.682" stop-color="#c98209"/><stop offset="0.927" stop-color="#e29b0d"/><stop offset="0.947" stop-color="#eaa50f"/><stop offset="0.987" stop-color="#fbca16"/><stop offset="0.999" stop-color="#fcd017"/></linearGradient><linearGradient id="c165" gradientUnits="userSpaceOnUse" x1="874.4" x2="1125.8"><stop offset="0.001" stop-color="#f0af10"/><stop offset="0.009" stop-color="#eeab10"/><stop offset="0.021" stop-color="#e1990d"/><stop offset="0.033" stop-color="#cd8509"/><stop offset="0.057" stop-color="#9e6105"/><stop offset="0.069" stop-color="#8d5604"/><stop offset="0.077" stop-color="#885203"/><stop offset="0.207" stop-color="#814e03"/><stop offset="0.385" stop-color="#7d4b03"/><stop offset="0.401" stop-color="#804d03"/><stop offset="0.453" stop-color="#9e6205"/><stop offset="0.488" stop-color="#ab6b06"/><stop offset="0.678" stop-color="#c88109"/><stop offset="0.927" stop-color="#e29b0d"/><stop offset="0.947" stop-color="#eaa50f"/><stop offset="0.987" stop-color="#fbca16"/><stop offset="0.999" stop-color="#fcd017"/></linearGradient><linearGradient id="c166" gradientUnits="userSpaceOnUse" x1="874.7" x2="1125.6"><stop offset="0.001" stop-color="#f0af10"/><stop offset="0.009" stop-color="#eeab10"/><stop offset="0.021" stop-color="#e1990d"/><stop offset="0.033" stop-color="#cd8509"/><stop offset="0.057" stop-color="#9d6105"/><stop offset="0.069" stop-color="#8d5604"/><stop offset="0.077" stop-color="#885203"/><stop offset="0.212" stop-color="#814e03"/><stop offset="0.387" stop-color="#7d4b03"/><stop offset="0.403" stop-color="#814e03"/><stop offset="0.458" stop-color="#a16405"/><stop offset="0.490" stop-color="#ab6b06"/><stop offset="0.681" stop-color="#c88209"/><stop offset="0.927" stop-color="#e29b0d"/><stop offset="0.947" stop-color="#eaa50f"/><stop offset="0.987" stop-color="#fbca16"/><stop offset="0.999" stop-color="#fcd017"/></linearGradient><linearGradient id="c167" gradientUnits="userSpaceOnUse" x1="874.9" x2="1125.3"><stop offset="0.001" stop-color="#f0af10"/><stop offset="0.009" stop-color="#eeab10"/><stop offset="0.021" stop-color="#e1990d"/><stop offset="0.033" stop-color="#cd8509"/><stop offset="0.057" stop-color="#9e6105"/><stop offset="0.069" stop-color="#8d5604"/><stop offset="0.077" stop-color="#885303"/><stop offset="0.212" stop-color="#814e03"/><stop offset="0.387" stop-color="#7d4b03"/><stop offset="0.403" stop-color="#814e03"/><stop offset="0.458" stop-color="#a16405"/><stop offset="0.490" stop-color="#ab6b06"/><stop offset="0.681" stop-color="#c88209"/><stop offset="0.927" stop-color="#e29b0d"/><stop offset="0.947" stop-color="#eaa50f"/><stop offset="0.987" stop-color="#fbca16"/><stop offset="0.999" stop-color="#fcd017"/></linearGradient><linearGradient id="c168" gradientUnits="userSpaceOnUse" x1="875.1" x2="1125.1"><stop offset="0.001" stop-color="#f0af10"/><stop offset="0.009" stop-color="#eeab10"/><stop offset="0.021" stop-color="#e1990d"/><stop offset="0.033" stop-color="#cd8509"/><stop offset="0.057" stop-color="#9e6105"/><stop offset="0.069" stop-color="#8d5604"/><stop offset="0.077" stop-color="#885203"/><stop offset="0.209" stop-color="#814e03"/><stop offset="0.384" stop-color="#7d4b03"/><stop offset="0.400" stop-color="#7f4d03"/><stop offset="0.452" stop-color="#9e6205"/><stop offset="0.488" stop-color="#ab6b06"/><stop offset="0.679" stop-color="#c88109"/><stop offset="0.927" stop-color="#e29b0d"/><stop offset="0.947" stop-color="#eaa50f"/><stop offset="0.987" stop-color="#fbca16"/><stop offset="0.999" stop-color="#fcd017"/></linearGradient><linearGradient id="c169" gradientUnits="userSpaceOnUse" x1="875.4" x2="1124.9"><stop offset="0.001" stop-color="#f0af10"/><stop offset="0.009" stop-color="#eeab10"/><stop offset="0.021" stop-color="#e19a0d"/><stop offset="0.033" stop-color="#cd8609"/><stop offset="0.057" stop-color="#9e6105"/><stop offset="0.069" stop-color="#8d5604"/><stop offset="0.077" stop-color="#885303"/><stop offset="0.205" stop-color="#824e03"/><stop offset="0.384" stop-color="#7d4b03"/><stop offset="0.400" stop-color="#7f4d03"/><stop offset="0.452" stop-color="#9e6205"/><stop offset="0.488" stop-color="#ab6b06"/><stop offset="0.679" stop-color="#c88209"/><stop offset="0.923" stop-color="#e29a0d"/><stop offset="0.947" stop-color="#eaa50f"/><stop offset="0.987" stop-color="#fbca16"/><stop offset="0.999" stop-color="#fcd017"/></linearGradient><linearGradient id="c170" gradientUnits="userSpaceOnUse" x1="875.6" x2="1124.6"><stop offset="0.001" stop-color="#f0af10"/><stop offset="0.009" stop-color="#eeab10"/><stop offset="0.021" stop-color="#e19a0d"/><stop offset="0.033" stop-color="#cd8609"/><stop offset="0.057" stop-color="#9e6205"/><stop offset="0.069" stop-color="#8e5604"/><stop offset="0.077" stop-color="#885303"/><stop offset="0.205" stop-color="#824e03"/><stop offset="0.384" stop-color="#7d4b03"/><stop offset="0.400" stop-color="#804d03"/><stop offset="0.452" stop-color="#9e6205"/><stop offset="0.488" stop-color="#ab6b06"/><stop offset="0.679" stop-color="#c88209"/><stop offset="0.923" stop-color="#e29a0d"/><stop offset="0.947" stop-color="#eaa50f"/><stop offset="0.987" stop-color="#fbca16"/><stop offset="0.999" stop-color="#fcd017"/></linearGradient><linearGradient id="c171" gradientUnits="userSpaceOnUse" x1="875.9" x2="1124.4"><stop offset="0.001" stop-color="#f0af10"/><stop offset="0.009" stop-color="#eeab10"/><stop offset="0.021" stop-color="#e19a0d"/><stop offset="0.033" stop-color="#cd8609"/><stop offset="0.057" stop-color="#9e6205"/><stop offset="0.069" stop-color="#8e5604"/><stop offset="0.077" stop-color="#885303"/><stop offset="0.206" stop-color="#824e03"/><stop offset="0.386" stop-color="#7d4b03"/><stop offset="0.402" stop-color="#804d03"/><stop offset="0.454" stop-color="#9f6205"/><stop offset="0.490" stop-color="#ab6b06"/><stop offset="0.682" stop-color="#c98209"/><stop offset="0.923" stop-color="#e29a0d"/><stop offset="0.947" stop-color="#eaa50f"/><stop offset="0.987" stop-color="#fbca16"/><stop offset="0.999" stop-color="#fcd017"/></linearGradient><linearGradient id="c172" gradientUnits="userSpaceOnUse" x1="876.1" x2="1124.2"><stop offset="0.001" stop-color="#f0af10"/><stop offset="0.009" stop-color="#eeab10"/><stop offset="0.021" stop-color="#e19a0d"/><stop offset="0.033" stop-color="#cd8609"/><stop offset="0.057" stop-color="#9f6205"/><stop offset="0.069" stop-color="#8e5604"/><stop offset="0.078" stop-color="#885303"/><stop offset="0.206" stop-color="#824e03"/><stop offset="0.386" stop-color="#7e4b03"/><stop offset="0.402" stop-color="#804d03"/><stop offset="0.454" stop-color="#9f6205"/><stop offset="0.490" stop-color="#ab6b06"/><stop offset="0.682" stop-color="#c98209"/><stop offset="0.922" stop-color="#e29a0d"/><stop offset="0.947" stop-color="#eaa50f"/><stop offset="0.987" stop-color="#fbca16"/><stop offset="0.999" stop-color="#fcd017"/></linearGradient><linearGradient id="c173" gradientUnits="userSpaceOnUse" x1="876.3" x2="1123.9"><stop offset="0.001" stop-color="#f0af10"/><stop offset="0.009" stop-color="#eeab10"/><stop offset="0.022" stop-color="#e19a0d"/><stop offset="0.034" stop-color="#cd8609"/><stop offset="0.058" stop-color="#9f6205"/><stop offset="0.070" stop-color="#8e5604"/><stop offset="0.078" stop-color="#885303"/><stop offset="0.202" stop-color="#824e03"/><stop offset="0.383" stop-color="#7e4c03"/><stop offset="0.399" stop-color="#7f4d03"/><stop offset="0.456" stop-color="#a06305"/><stop offset="0.492" stop-color="#ac6b06"/><stop offset="0.685" stop-color="#c98209"/><stop offset="0.922" stop-color="#e29a0d"/><stop offset="0.946" stop-color="#eaa50f"/><stop offset="0.987" stop-color="#fbca16"/><stop offset="0.999" stop-color="#fcd017"/></linearGradient><linearGradient id="c174" gradientUnits="userSpaceOnUse" x1="876.6" x2="1123.7"><stop offset="0.001" stop-color="#f0af10"/><stop offset="0.009" stop-color="#eeab10"/><stop offset="0.022" stop-color="#e19a0d"/><stop offset="0.034" stop-color="#ce8609"/><stop offset="0.058" stop-color="#9f6205"/><stop offset="0.070" stop-color="#8e5704"/><stop offset="0.078" stop-color="#885303"/><stop offset="0.202" stop-color="#824e03"/><stop offset="0.383" stop-color="#7e4c03"/><stop offset="0.399" stop-color="#7f4d03"/><stop offset="0.456" stop-color="#a06305"/><stop offset="0.492" stop-color="#ac6b06"/><stop offset="0.681" stop-color="#c98209"/><stop offset="0.922" stop-color="#e29a0d"/><stop offset="0.946" stop-color="#eaa50f"/><stop offset="0.987" stop-color="#fbca16"/><stop offset="0.999" stop-color="#fcd017"/></linearGradient><linearGradient id="c175" gradientUnits="userSpaceOnUse" x1="876.8" x2="1123.4"><stop offset="0.001" stop-color="#f0af10"/><stop offset="0.009" stop-color="#eeab10"/><stop offset="0.022" stop-color="#e19a0d"/><stop offset="0.034" stop-color="#ce8609"/><stop offset="0.058" stop-color="#9f6205"/><stop offset="0.070" stop-color="#8e5704"/><stop offset="0.078" stop-color="#885303"/><stop offset="0.203" stop-color="#824e03"/><stop offset="0.385" stop-color="#7e4c03"/><stop offset="0.401" stop-color="#804d03"/><stop offset="0.454" stop-color="#9f6205"/><stop offset="0.490" stop-color="#ab6b06"/><stop offset="0.680" stop-color="#c88209"/><stop offset="0.922" stop-color="#e29a0d"/><stop offset="0.946" stop-color="#eaa50f"/><stop offset="0.986" stop-color="#fbca16"/><stop offset="0.999" stop-color="#fcd017"/></linearGradient><linearGradient id="c176" gradientUnits="userSpaceOnUse" x1="877.0" x2="1123.2"><stop offset="0.001" stop-color="#f0af10"/><stop offset="0.009" stop-color="#eeab10"/><stop offset="0.022" stop-color="#e19a0d"/><stop offset="0.034" stop-color="#ce8609"/><stop offset="0.058" stop-color="#9f6205"/><stop offset="0.070" stop-color="#8e5704"/><stop offset="0.078" stop-color="#895303"/><stop offset="0.203" stop-color="#824e03"/><stop offset="0.385" stop-color="#7e4c03"/><stop offset="0.401" stop-color="#804d03"/><stop offset="0.454" stop-color="#9f6205"/><stop offset="0.490" stop-color="#ac6b06"/><stop offset="0.680" stop-color="#c88209"/><stop offset="0.922" stop-color="#e29a0d"/><stop offset="0.946" stop-color="#eaa60f"/><stop offset="0.986" stop-color="#fbca16"/><stop offset="0.999" stop-color="#fcd017"/></linearGradient><linearGradient id="c177" gradientUnits="userSpaceOnUse" x1="877.3" x2="1123.0"><stop offset="0.001" stop-color="#f0af10"/><stop offset="0.010" stop-color="#eeab10"/><stop offset="0.022" stop-color="#e19a0d"/><stop offset="0.034" stop-color="#ce8609"/><stop offset="0.058" stop-color="#9f6205"/><stop offset="0.070" stop-color="#8e5704"/><stop offset="0.078" stop-color="#895303"/><stop offset="0.204" stop-color="#824e03"/><stop offset="0.387" stop-color="#7e4c03"/><stop offset="0.403" stop-color="#814e03"/><stop offset="0.451" stop-color="#9e6105"/><stop offset="0.488" stop-color="#ab6b06"/><stop offset="0.678" stop-color="#c88109"/><stop offset="0.922" stop-color="#e29a0d"/><stop offset="0.946" stop-color="#eaa60f"/><stop offset="0.986" stop-color="#fbca16"/><stop offset="0.999" stop-color="#fcd017"/></linearGradient><linearGradient id="c178" gradientUnits="userSpaceOnUse" x1="877.5" x2="1122.7"><stop offset="0.001" stop-color="#f0af10"/><stop offset="0.010" stop-color="#eeab10"/><stop offset="0.022" stop-color="#e19a0d"/><stop offset="0.034" stop-color="#ce8609"/><stop offset="0.058" stop-color="#a06305"/><stop offset="0.070" stop-color="#8f5704"/><stop offset="0.078" stop-color="#895303"/><stop offset="0.200" stop-color="#824e03"/><stop offset="0.387" stop-color="#7e4c03"/><stop offset="0.403" stop-color="#814e03"/><stop offset="0.451" stop-color="#9e6205"/><stop offset="0.488" stop-color="#ab6b06"/><stop offset="0.678" stop-color="#c88109"/><stop offset="0.922" stop-color="#e29a0d"/><stop offset="0.946" stop-color="#eaa60f"/><stop offset="0.986" stop-color="#fbca16"/><stop offset="0.999" stop-color="#fcd017"/></linearGradient><linearGradient id="c179" gradientUnits="userSpaceOnUse" x1="877.7" x2="1122.5"><stop offset="0.001" stop-color="#f0af10"/><stop offset="0.010" stop-color="#eeab10"/><stop offset="0.022" stop-color="#e19a0d"/><stop offset="0.034" stop-color="#ce8609"/><stop offset="0.058" stop-color="#a06305"/><stop offset="0.071" stop-color="#8f5704"/><stop offset="0.079" stop-color="#895303"/><stop offset="0.201" stop-color="#824e03"/><stop offset="0.384" stop-color="#7e4c03"/><stop offset="0.400" stop-color="#804d03"/><stop offset="0.453" stop-color="#9f6205"/><stop offset="0.490" stop-color="#ac6b06"/><stop offset="0.681" stop-color="#c98209"/><stop offset="0.921" stop-color="#e29a0d"/><stop offset="0.946" stop-color="#eaa60f"/><stop offset="0.986" stop-color="#fbca16"/><stop offset="0.999" stop-color="#fcd017"/></linearGradient><linearGradient id="c180" gradientUnits="userSpaceOnUse" x1="878.0" x2="1122.3"><stop offset="0.001" stop-color="#f0af10"/><stop offset="0.010" stop-color="#eeab10"/><stop offset="0.022" stop-color="#e29a0d"/><stop offset="0.034" stop-color="#ce870a"/><stop offset="0.058" stop-color="#a06305"/><stop offset="0.071" stop-color="#8f5704"/><stop offset="0.079" stop-color="#895303"/><stop offset="0.197" stop-color="#824f03"/><stop offset="0.384" stop-color="#7e4c03"/><stop offset="0.400" stop-color="#804d03"/><stop offset="0.453" stop-color="#9f6205"/><stop offset="0.490" stop-color="#ac6b06"/><stop offset="0.681" stop-color="#c98209"/><stop offset="0.921" stop-color="#e29a0d"/><stop offset="0.946" stop-color="#eaa60f"/><stop offset="0.986" stop-color="#fbca16"/><stop offset="0.999" stop-color="#fcd017"/></linearGradient><linearGradient id="c181" gradientUnits="userSpaceOnUse" x1="878.2" x2="1122.0"><stop offset="0.001" stop-color="#f0af10"/><stop offset="0.010" stop-color="#eeab10"/><stop offset="0.022" stop-color="#e29a0d"/><stop offset="0.034" stop-color="#ce870a"/><stop offset="0.059" stop-color="#a06305"/><stop offset="0.071" stop-color="#8f5704"/><stop offset="0.079" stop-color="#895303"/><stop offset="0.198" stop-color="#824f03"/><stop offset="0.386" stop-color="#7e4c03"/><stop offset="0.402" stop-color="#814e03"/><stop offset="0.451" stop-color="#9e6105"/><stop offset="0.488" stop-color="#ab6b06"/><stop offset="0.680" stop-color="#c98209"/><stop offset="0.921" stop-color="#e29a0d"/><stop offset="0.945" stop-color="#eaa60f"/><stop offset="0.986" stop-color="#fbca16"/><stop offset="0.999" stop-color="#fcd017"/></linearGradient><linearGradient id="c182" gradientUnits="userSpaceOnUse" x1="878.4" x2="1121.8"><stop offset="0.001" stop-color="#f0af10"/><stop offset="0.010" stop-color="#eeab10"/><stop offset="0.022" stop-color="#e29a0d"/><stop offset="0.034" stop-color="#ce870a"/><stop offset="0.059" stop-color="#a16305"/><stop offset="0.071" stop-color="#8f5704"/><stop offset="0.079" stop-color="#895303"/><stop offset="0.198" stop-color="#824f03"/><stop offset="0.386" stop-color="#7e4c03"/><stop offset="0.402" stop-color="#814e03"/><stop offset="0.451" stop-color="#9e6105"/><stop offset="0.488" stop-color="#ab6b06"/><stop offset="0.680" stop-color="#c98209"/><stop offset="0.921" stop-color="#e29a0d"/><stop offset="0.945" stop-color="#eba60f"/><stop offset="0.986" stop-color="#fbca16"/><stop offset="0.999" stop-color="#fcd017"/></linearGradient><linearGradient id="c183" gradientUnits="userSpaceOnUse" x1="878.7" x2="1121.6"><stop offset="0.001" stop-color="#f0af10"/><stop offset="0.010" stop-color="#eeab10"/><stop offset="0.022" stop-color="#e29a0d"/><stop offset="0.034" stop-color="#ce870a"/><stop offset="0.059" stop-color="#a16305"/><stop offset="0.071" stop-color="#8f5704"/><stop offset="0.079" stop-color="#895303"/><stop offset="0.194" stop-color="#824f03"/><stop offset="0.383" stop-color="#7e4c03"/><stop offset="0.399" stop-color="#804d03"/><stop offset="0.453" stop-color="#9f6205"/><stop offset="0.490" stop-color="#ac6b06"/><stop offset="0.678" stop-color="#c88209"/><stop offset="0.921" stop-color="#e29a0d"/><stop offset="0.945" stop-color="#eba60f"/><stop offset="0.986" stop-color="#fbca16"/><stop offset="0.999" stop-color="#fcd017"/></linearGradient><linearGradient id="c184" gradientUnits="userSpaceOnUse" x1="878.9" x2="1121.3"><stop offset="0.001" stop-color="#f0af10"/><stop offset="0.010" stop-color="#eeab10"/><stop offset="0.022" stop-color="#e29a0d"/><stop offset="0.034" stop-color="#cf870a"/><stop offset="0.059" stop-color="#a16305"/><stop offset="0.071" stop-color="#905704"/><stop offset="0.084" stop-color="#885203"/><stop offset="0.383" stop-color="#7e4c03"/><stop offset="0.399" stop-color="#804d03"/><stop offset="0.453" stop-color="#9f6205"/><stop offset="0.490" stop-color="#ac6b06"/><stop offset="0.678" stop-color="#c88209"/><stop offset="0.921" stop-color="#e29a0d"/><stop offset="0.945" stop-color="#eba60f"/><stop offset="0.986" stop-color="#fbca16"/><stop offset="0.999" stop-color="#fcd017"/></linearGradient><linearGradient id="c185" gradientUnits="userSpaceOnUse" x1="879.1" x2="1121.1"><stop offset="0.001" stop-color="#f0af10"/><stop offset="0.010" stop-color="#eeab10"/><stop offset="0.022" stop-color="#e29a0d"/><stop offset="0.034" stop-color="#cf870a"/><stop offset="0.059" stop-color="#a16305"/><stop offset="0.071" stop-color="#905704"/><stop offset="0.084" stop-color="#885203"/><stop offset="0.385" stop-color="#7e4c03"/><stop offset="0.401" stop-color="#814d03"/><stop offset="0.451" stop-color="#9e6105"/><stop offset="0.488" stop-color="#ab6b06"/><stop offset="0.677" stop-color="#c88109"/><stop offset="0.920" stop-color="#e29a0d"/><stop offset="0.945" stop-color="#eba60f"/><stop offset="0.986" stop-color="#fbca16"/><stop offset="0.999" stop-color="#fcd017"/></linearGradient><linearGradient id="c186" gradientUnits="userSpaceOnUse" x1="879.4" x2="1120.8"><stop offset="0.001" stop-color="#f0af10"/><stop offset="0.010" stop-color="#eeab10"/><stop offset="0.022" stop-color="#e29b0d"/><stop offset="0.034" stop-color="#cf870a"/><stop offset="0.059" stop-color="#a16405"/><stop offset="0.071" stop-color="#905804"/><stop offset="0.084" stop-color="#885203"/><stop offset="0.385" stop-color="#7e4c03"/><stop offset="0.401" stop-color="#814d03"/><stop offset="0.451" stop-color="#9e6105"/><stop offset="0.488" stop-color="#ab6b06"/><stop offset="0.677" stop-color="#c88109"/><stop offset="0.920" stop-color="#e29a0d"/><stop offset="0.945" stop-color="#eba60f"/><stop offset="0.986" stop-color="#fbca16"/><stop offset="0.999" stop-color="#fcd017"/></linearGradient><linearGradient id="c187" gradientUnits="userSpaceOnUse" x1="879.6" x2="1120.6"><stop offset="0.001" stop-color="#f0af10"/><stop offset="0.010" stop-color="#eeab10"/><stop offset="0.022" stop-color="#e29b0d"/><stop offset="0.034" stop-color="#cf870a"/><stop offset="0.059" stop-color="#a26405"/><stop offset="0.071" stop-color="#905804"/><stop offset="0.084" stop-color="#885203"/><stop offset="0.385" stop-color="#7e4c03"/><stop offset="0.401" stop-color="#814e03"/><stop offset="0.455" stop-color="#a06305"/><stop offset="0.488" stop-color="#ab6b06"/><stop offset="0.677" stop-color="#c88109"/><stop offset="0.920" stop-color="#e29a0d"/><stop offset="0.945" stop-color="#eba60f"/><stop offset="0.986" stop-color="#fbca16"/><stop offset="0.999" stop-color="#fcd017"/></linearGradient><linearGradient id="c188" gradientUnits="userSpaceOnUse" x1="879.8" x2="1120.4"><stop offset="0.001" stop-color="#f0af10"/><stop offset="0.010" stop-color="#eeab10"/><stop offset="0.022" stop-color="#e29b0d"/><stop offset="0.035" stop-color="#cf870a"/><stop offset="0.059" stop-color="#a26405"/><stop offset="0.072" stop-color="#905804"/><stop offset="0.084" stop-color="#885203"/><stop offset="0.386" stop-color="#7e4c03"/><stop offset="0.403" stop-color="#824e03"/><stop offset="0.452" stop-color="#9f6205"/><stop offset="0.490" stop-color="#ac6b06"/><stop offset="0.680" stop-color="#c98209"/><stop offset="0.920" stop-color="#e29a0d"/><stop offset="0.945" stop-color="#eba60f"/><stop offset="0.986" stop-color="#fbca16"/><stop offset="0.999" stop-color="#fcd017"/></linearGradient><linearGradient id="c189" gradientUnits="userSpaceOnUse" x1="880.1" x2="1120.1"><stop offset="0.001" stop-color="#f0af10"/><stop offset="0.010" stop-color="#eeab10"/><stop offset="0.022" stop-color="#e29b0d"/><stop offset="0.035" stop-color="#cf880a"/><stop offset="0.059" stop-color="#a26405"/><stop offset="0.072" stop-color="#915804"/><stop offset="0.084" stop-color="#885203"/><stop offset="0.386" stop-color="#7e4c03"/><stop offset="0.403" stop-color="#824e03"/><stop offset="0.452" stop-color="#9f6205"/><stop offset="0.490" stop-color="#ac6b06"/><stop offset="0.680" stop-color="#c98209"/><stop offset="0.920" stop-color="#e29a0d"/><stop offset="0.945" stop-color="#eba60f"/><stop offset="0.986" stop-color="#fbcb16"/><stop offset="0.999" stop-color="#fcd017"/></linearGradient><linearGradient id="c190" gradientUnits="userSpaceOnUse" x1="880.3" x2="1119.9"><stop offset="0.001" stop-color="#f0af10"/><stop offset="0.010" stop-color="#eeab10"/><stop offset="0.022" stop-color="#e29b0d"/><stop offset="0.035" stop-color="#cf880a"/><stop offset="0.060" stop-color="#a26405"/><stop offset="0.072" stop-color="#915804"/><stop offset="0.085" stop-color="#885203"/><stop offset="0.384" stop-color="#7e4c03"/><stop offset="0.400" stop-color="#804d03"/><stop offset="0.454" stop-color="#a06305"/><stop offset="0.488" stop-color="#ab6b06"/><stop offset="0.674" stop-color="#c88109"/><stop offset="0.920" stop-color="#e29a0d"/><stop offset="0.945" stop-color="#eba60f"/><stop offset="0.986" stop-color="#fbcb16"/><stop offset="0.999" stop-color="#fcd017"/></linearGradient><linearGradient id="c191" gradientUnits="userSpaceOnUse" x1="880.5" x2="1119.7"><stop offset="0.001" stop-color="#f0af10"/><stop offset="0.010" stop-color="#eeab10"/><stop offset="0.022" stop-color="#e29b0d"/><stop offset="0.035" stop-color="#d0880a"/><stop offset="0.060" stop-color="#a36505"/><stop offset="0.072" stop-color="#915804"/><stop offset="0.085" stop-color="#885303"/><stop offset="0.384" stop-color="#7e4c03"/><stop offset="0.400" stop-color="#804d03"/><stop offset="0.454" stop-color="#a06305"/><stop offset="0.488" stop-color="#ab6b06"/><stop offset="0.674" stop-color="#c88109"/><stop offset="0.920" stop-color="#e29b0d"/><stop offset="0.945" stop-color="#eba70f"/><stop offset="0.986" stop-color="#fbcb16"/><stop offset="0.999" stop-color="#fcd017"/></linearGradient><linearGradient id="c192" gradientUnits="userSpaceOnUse" x1="880.8" x2="1119.4"><stop offset="0.001" stop-color="#f0af10"/><stop offset="0.010" stop-color="#eeab10"/><stop offset="0.022" stop-color="#e29b0d"/><stop offset="0.035" stop-color="#d0880a"/><stop offset="0.060" stop-color="#a36505"/><stop offset="0.072" stop-color="#915804"/><stop offset="0.085" stop-color="#885303"/><stop offset="0.385" stop-color="#7e4c03"/><stop offset="0.402" stop-color="#814e03"/><stop offset="0.452" stop-color="#9f6205"/><stop offset="0.490" stop-color="#ac6b06"/><stop offset="0.677" stop-color="#c88209"/><stop offset="0.919" stop-color="#e29a0d"/><stop offset="0.944" stop-color="#eba70f"/><stop offset="0.986" stop-color="#fbcb16"/><stop offset="0.999" stop-color="#fcd017"/></linearGradient><linearGradient id="c193" gradientUnits="userSpaceOnUse" x1="881.0" x2="1119.2"><stop offset="0.001" stop-color="#f0af10"/><stop offset="0.010" stop-color="#eeab10"/><stop offset="0.022" stop-color="#e29b0d"/><stop offset="0.035" stop-color="#d0880a"/><stop offset="0.060" stop-color="#a36505"/><stop offset="0.072" stop-color="#915904"/><stop offset="0.085" stop-color="#885303"/><stop offset="0.385" stop-color="#7e4c03"/><stop offset="0.402" stop-color="#814e03"/><stop offset="0.452" stop-color="#9f6205"/><stop offset="0.490" stop-color="#ac6b06"/><stop offset="0.677" stop-color="#c88209"/><stop offset="0.919" stop-color="#e29b0d"/><stop offset="0.944" stop-color="#eba70f"/><stop offset="0.986" stop-color="#fbcb16"/><stop offset="0.999" stop-color="#fcd017"/></linearGradient><linearGradient id="c194" gradientUnits="userSpaceOnUse" x1="881.2" x2="1118.9"><stop offset="0.001" stop-color="#f0af10"/><stop offset="0.010" stop-color="#eeab10"/><stop offset="0.022" stop-color="#e29b0d"/><stop offset="0.035" stop-color="#d0880a"/><stop offset="0.060" stop-color="#a36505"/><stop offset="0.073" stop-color="#915904"/><stop offset="0.085" stop-color="#885303"/><stop offset="0.211" stop-color="#824f03"/><stop offset="0.387" stop-color="#7f4c03"/><stop offset="0.399" stop-color="#804d03"/><stop offset="0.454" stop-color="#a06305"/><stop offset="0.487" stop-color="#ac6b06"/><stop offset="0.676" stop-color="#c88109"/><stop offset="0.919" stop-color="#e29b0d"/><stop offset="0.944" stop-color="#eba70f"/><stop offset="0.986" stop-color="#fbcb16"/><stop offset="0.999" stop-color="#fcd017"/></linearGradient><linearGradient id="c195" gradientUnits="userSpaceOnUse" x1="881.5" x2="1118.7"><stop offset="0.001" stop-color="#f0af10"/><stop offset="0.010" stop-color="#eeab10"/><stop offset="0.022" stop-color="#e29b0d"/><stop offset="0.035" stop-color="#d0880a"/><stop offset="0.060" stop-color="#a46505"/><stop offset="0.073" stop-color="#925904"/><stop offset="0.085" stop-color="#885303"/><stop offset="0.211" stop-color="#824f03"/><stop offset="0.387" stop-color="#7f4c03"/><stop offset="0.399" stop-color="#804d03"/><stop offset="0.454" stop-color="#a06305"/><stop offset="0.487" stop-color="#ac6b06"/><stop offset="0.676" stop-color="#c88109"/><stop offset="0.915" stop-color="#e19a0d"/><stop offset="0.940" stop-color="#e9a40f"/><stop offset="0.986" stop-color="#fbcb16"/><stop offset="0.999" stop-color="#fcd017"/></linearGradient><linearGradient id="c196" gradientUnits="userSpaceOnUse" x1="881.7" x2="1118.5"><stop offset="0.001" stop-color="#f0af10"/><stop offset="0.010" stop-color="#eeab10"/><stop offset="0.023" stop-color="#e29b0d"/><stop offset="0.035" stop-color="#d0880a"/><stop offset="0.060" stop-color="#a46505"/><stop offset="0.073" stop-color="#925904"/><stop offset="0.086" stop-color="#885303"/><stop offset="0.208" stop-color="#824f03"/><stop offset="0.384" stop-color="#7f4c03"/><stop offset="0.401" stop-color="#814e03"/><stop offset="0.452" stop-color="#9f6205"/><stop offset="0.489" stop-color="#ac6b06"/><stop offset="0.679" stop-color="#c98209"/><stop offset="0.914" stop-color="#e19a0d"/><stop offset="0.940" stop-color="#e9a40f"/><stop offset="0.986" stop-color="#fbcb16"/><stop offset="0.999" stop-color="#fcd017"/></linearGradient><linearGradient id="c197" gradientUnits="userSpaceOnUse" x1="881.9" x2="1118.2"><stop offset="0.001" stop-color="#f0af10"/><stop offset="0.010" stop-color="#eeab10"/><stop offset="0.023" stop-color="#e39b0d"/><stop offset="0.035" stop-color="#d0890a"/><stop offset="0.060" stop-color="#a46605"/><stop offset="0.073" stop-color="#925904"/><stop offset="0.086" stop-color="#895303"/><stop offset="0.203" stop-color="#834f03"/><stop offset="0.384" stop-color="#7f4c03"/><stop offset="0.401" stop-color="#814e03"/><stop offset="0.452" stop-color="#9f6205"/><stop offset="0.489" stop-color="#ac6b06"/><stop offset="0.679" stop-color="#c98209"/><stop offset="0.914" stop-color="#e19a0d"/><stop offset="0.940" stop-color="#e9a40f"/><stop offset="0.986" stop-color="#fbcb16"/><stop offset="0.999" stop-color="#fcd017"/></linearGradient><linearGradient id="c198" gradientUnits="userSpaceOnUse" x1="882.2" x2="1118.0"><stop offset="0.001" stop-color="#f0af10"/><stop offset="0.010" stop-color="#eeab10"/><stop offset="0.023" stop-color="#e39b0d"/><stop offset="0.035" stop-color="#d0890a"/><stop offset="0.061" stop-color="#a46605"/><stop offset="0.073" stop-color="#925904"/><stop offset="0.086" stop-color="#895303"/><stop offset="0.204" stop-color="#834f03"/><stop offset="0.386" stop-color="#7f4c03"/><stop offset="0.403" stop-color="#824f03"/><stop offset="0.454" stop-color="#a06305"/><stop offset="0.487" stop-color="#ac6b06"/><stop offset="0.677" stop-color="#c98209"/><stop offset="0.914" stop-color="#e19a0d"/><stop offset="0.939" stop-color="#e9a40f"/><stop offset="0.986" stop-color="#fbcb16"/><stop offset="0.999" stop-color="#fcd017"/></linearGradient><linearGradient id="c199" gradientUnits="userSpaceOnUse" x1="882.4" x2="1117.8"><stop offset="0.001" stop-color="#f0af10"/><stop offset="0.010" stop-color="#eeab10"/><stop offset="0.023" stop-color="#e39c0d"/><stop offset="0.035" stop-color="#d1890a"/><stop offset="0.061" stop-color="#a56605"/><stop offset="0.073" stop-color="#935a04"/><stop offset="0.086" stop-color="#895303"/><stop offset="0.204" stop-color="#834f03"/><stop offset="0.386" stop-color="#7f4c03"/><stop offset="0.403" stop-color="#824f03"/><stop offset="0.454" stop-color="#a06305"/><stop offset="0.487" stop-color="#ac6b06"/><stop offset="0.677" stop-color="#c98209"/><stop offset="0.914" stop-color="#e19a0d"/><stop offset="0.939" stop-color="#eaa40f"/><stop offset="0.986" stop-color="#fbcb16"/><stop offset="0.999" stop-color="#fcd017"/></linearGradient><linearGradient id="c200" gradientUnits="userSpaceOnUse" x1="882.7" x2="1117.5"><stop offset="0.001" stop-color="#f0af10"/><stop offset="0.010" stop-color="#eeab10"/><stop offset="0.023" stop-color="#e39c0d"/><stop offset="0.035" stop-color="#d1890a"/><stop offset="0.061" stop-color="#a56605"/><stop offset="0.074" stop-color="#935a04"/><stop offset="0.086" stop-color="#895303"/><stop offset="0.201" stop-color="#834f03"/><stop offset="0.383" stop-color="#7f4c03"/><stop offset="0.400" stop-color="#814e03"/><stop offset="0.455" stop-color="#a16305"/><stop offset="0.489" stop-color="#ac6b06"/><stop offset="0.676" stop-color="#c88209"/><stop offset="0.914" stop-color="#e19a0d"/><stop offset="0.939" stop-color="#eaa40f"/><stop offset="0.986" stop-color="#fbcb16"/><stop offset="0.999" stop-color="#fcd017"/></linearGradient><linearGradient id="c201" gradientUnits="userSpaceOnUse" x1="882.9" x2="1117.3"><stop offset="0.001" stop-color="#f0af10"/><stop offset="0.010" stop-color="#eeab10"/><stop offset="0.023" stop-color="#e39c0d"/><stop offset="0.035" stop-color="#d1890a"/><stop offset="0.061" stop-color="#a56705"/><stop offset="0.074" stop-color="#935a04"/><stop offset="0.086" stop-color="#895303"/><stop offset="0.197" stop-color="#834f03"/><stop offset="0.383" stop-color="#7f4c03"/><stop offset="0.400" stop-color="#814e03"/><stop offset="0.455" stop-color="#a16305"/><stop offset="0.489" stop-color="#ac6b06"/><stop offset="0.676" stop-color="#c88209"/><stop offset="0.914" stop-color="#e19a0d"/><stop offset="0.939" stop-color="#eaa50f"/><stop offset="0.986" stop-color="#fbcb16"/><stop offset="0.999" stop-color="#fcd017"/></linearGradient><linearGradient id="c202" gradientUnits="userSpaceOnUse" x1="883.1" x2="1117.1"><stop offset="0.001" stop-color="#f0af10"/><stop offset="0.010" stop-color="#eeab10"/><stop offset="0.023" stop-color="#e39c0d"/><stop offset="0.036" stop-color="#d1890a"/><stop offset="0.061" stop-color="#a56705"/><stop offset="0.074" stop-color="#935a04"/><stop offset="0.087" stop-color="#895303"/><stop offset="0.197" stop-color="#834f03"/><stop offset="0.385" stop-color="#7f4c03"/><stop offset="0.402" stop-color="#824e03"/><stop offset="0.453" stop-color="#a06305"/><stop offset="0.487" stop-color="#ac6b06"/><stop offset="0.675" stop-color="#c88109"/><stop offset="0.913" stop-color="#e19a0d"/><stop offset="0.939" stop-color="#eaa50f"/><stop offset="0.986" stop-color="#fbcb16"/><stop offset="0.999" stop-color="#fcd017"/></linearGradient><linearGradient id="c203" gradientUnits="userSpaceOnUse" x1="883.4" x2="1116.8"><stop offset="0.001" stop-color="#f0af10"/><stop offset="0.010" stop-color="#eeac10"/><stop offset="0.023" stop-color="#e39c0d"/><stop offset="0.036" stop-color="#d18a0a"/><stop offset="0.065" stop-color="#9f6205"/><stop offset="0.078" stop-color="#8f5704"/><stop offset="0.091" stop-color="#885203"/><stop offset="0.385" stop-color="#7f4c03"/><stop offset="0.402" stop-color="#824e03"/><stop offset="0.453" stop-color="#a06305"/><stop offset="0.487" stop-color="#ac6b06"/><stop offset="0.675" stop-color="#c88109"/><stop offset="0.913" stop-color="#e19a0d"/><stop offset="0.939" stop-color="#eaa50f"/><stop offset="0.986" stop-color="#fbcb16"/><stop offset="0.999" stop-color="#fcd017"/></linearGradient><linearGradient id="c204" gradientUnits="userSpaceOnUse" x1="883.6" x2="1116.6"><stop offset="0.002" stop-color="#f0af10"/><stop offset="0.010" stop-color="#eeac10"/><stop offset="0.023" stop-color="#e39c0d"/><stop offset="0.036" stop-color="#d18a0a"/><stop offset="0.066" stop-color="#9f6205"/><stop offset="0.079" stop-color="#8f5704"/><stop offset="0.091" stop-color="#885203"/><stop offset="0.387" stop-color="#7f4d03"/><stop offset="0.399" stop-color="#814e03"/><stop offset="0.455" stop-color="#a16305"/><stop offset="0.489" stop-color="#ac6c06"/><stop offset="0.678" stop-color="#c98209"/><stop offset="0.913" stop-color="#e19a0d"/><stop offset="0.939" stop-color="#eaa50f"/><stop offset="0.986" stop-color="#fbcb16"/><stop offset="0.998" stop-color="#fcd017"/></linearGradient><linearGradient id="c205" gradientUnits="userSpaceOnUse" x1="883.8" x2="1116.3"><stop offset="0.002" stop-color="#f0af10"/><stop offset="0.010" stop-color="#eeac10"/><stop offset="0.023" stop-color="#e39c0d"/><stop offset="0.036" stop-color="#d28a0a"/><stop offset="0.066" stop-color="#a06305"/><stop offset="0.079" stop-color="#905804"/><stop offset="0.091" stop-color="#885203"/><stop offset="0.387" stop-color="#7f4d03"/><stop offset="0.399" stop-color="#814e03"/><stop offset="0.455" stop-color="#a16305"/><stop offset="0.489" stop-color="#ac6c06"/><stop offset="0.678" stop-color="#c98209"/><stop offset="0.913" stop-color="#e19a0d"/><stop offset="0.939" stop-color="#eaa50f"/><stop offset="0.986" stop-color="#fbcb16"/><stop offset="0.998" stop-color="#fcd017"/></linearGradient><linearGradient id="c206" gradientUnits="userSpaceOnUse" x1="884.1" x2="1116.1"><stop offset="0.002" stop-color="#f0af10"/><stop offset="0.010" stop-color="#eeac10"/><stop offset="0.023" stop-color="#e39c0d"/><stop offset="0.036" stop-color="#d28a0a"/><stop offset="0.066" stop-color="#a06305"/><stop offset="0.079" stop-color="#905804"/><stop offset="0.091" stop-color="#885203"/><stop offset="0.387" stop-color="#7f4d03"/><stop offset="0.399" stop-color="#814e03"/><stop offset="0.455" stop-color="#a16305"/><stop offset="0.489" stop-color="#ac6c06"/><stop offset="0.673" stop-color="#c88109"/><stop offset="0.913" stop-color="#e19a0d"/><stop offset="0.939" stop-color="#eaa50f"/><stop offset="0.986" stop-color="#fbcb16"/><stop offset="0.998" stop-color="#fcd017"/></linearGradient><linearGradient id="c207" gradientUnits="userSpaceOnUse" x1="884.3" x2="1115.9"><stop offset="0.002" stop-color="#f0af10"/><stop offset="0.010" stop-color="#eeac10"/><stop offset="0.023" stop-color="#e39c0d"/><stop offset="0.036" stop-color="#d28a0a"/><stop offset="0.066" stop-color="#a06305"/><stop offset="0.079" stop-color="#905804"/><stop offset="0.092" stop-color="#885303"/><stop offset="0.384" stop-color="#7f4d03"/><stop offset="0.401" stop-color="#824e03"/><stop offset="0.453" stop-color="#a06305"/><stop offset="0.487" stop-color="#ac6b06"/><stop offset="0.672" stop-color="#c88109"/><stop offset="0.913" stop-color="#e19a0d"/><stop offset="0.938" stop-color="#eaa50f"/><stop offset="0.986" stop-color="#fbcb16"/><stop offset="0.998" stop-color="#fcd017"/></linearGradient><linearGradient id="c208" gradientUnits="userSpaceOnUse" x1="884.5" x2="1115.6"><stop offset="0.002" stop-color="#f0af10"/><stop offset="0.010" stop-color="#eeac10"/><stop offset="0.023" stop-color="#e39c0d"/><stop offset="0.036" stop-color="#d28a0a"/><stop offset="0.066" stop-color="#a16305"/><stop offset="0.079" stop-color="#915804"/><stop offset="0.092" stop-color="#885303"/><stop offset="0.384" stop-color="#7f4d03"/><stop offset="0.401" stop-color="#824e03"/><stop offset="0.453" stop-color="#a06305"/><stop offset="0.487" stop-color="#ac6b06"/><stop offset="0.672" stop-color="#c88109"/><stop offset="0.913" stop-color="#e19a0d"/><stop offset="0.938" stop-color="#eaa50f"/><stop offset="0.986" stop-color="#fbcb16"/><stop offset="0.998" stop-color="#fcd017"/></linearGradient><linearGradient id="c209" gradientUnits="userSpaceOnUse" x1="884.8" x2="1115.4"><stop offset="0.002" stop-color="#f0af10"/><stop offset="0.010" stop-color="#eeac10"/><stop offset="0.023" stop-color="#e39c0d"/><stop offset="0.036" stop-color="#d28a0a"/><stop offset="0.066" stop-color="#a16305"/><stop offset="0.079" stop-color="#915804"/><stop offset="0.092" stop-color="#885303"/><stop offset="0.386" stop-color="#7f4d03"/><stop offset="0.403" stop-color="#834f03"/><stop offset="0.455" stop-color="#a16305"/><stop offset="0.489" stop-color="#ac6c06"/><stop offset="0.675" stop-color="#c88209"/><stop offset="0.912" stop-color="#e19a0d"/><stop offset="0.938" stop-color="#eaa50f"/><stop offset="0.986" stop-color="#fbcb16"/><stop offset="0.998" stop-color="#fcd017"/></linearGradient><linearGradient id="c210" gradientUnits="userSpaceOnUse" x1="885.0" x2="1115.2"><stop offset="0.002" stop-color="#f0af10"/><stop offset="0.010" stop-color="#eeac10"/><stop offset="0.023" stop-color="#e49d0d"/><stop offset="0.036" stop-color="#d38b0a"/><stop offset="0.066" stop-color="#a16405"/><stop offset="0.079" stop-color="#915804"/><stop offset="0.092" stop-color="#885303"/><stop offset="0.386" stop-color="#7f4d03"/><stop offset="0.403" stop-color="#834f03"/><stop offset="0.455" stop-color="#a16305"/><stop offset="0.489" stop-color="#ac6c06"/><stop offset="0.675" stop-color="#c88209"/><stop offset="0.912" stop-color="#e19a0d"/><stop offset="0.938" stop-color="#eaa60f"/><stop offset="0.986" stop-color="#fbcb16"/><stop offset="0.998" stop-color="#fcd017"/></linearGradient><linearGradient id="c211" gradientUnits="userSpaceOnUse" x1="885.2" x2="1114.9"><stop offset="0.002" stop-color="#f0af10"/><stop offset="0.010" stop-color="#eeac10"/><stop offset="0.023" stop-color="#e49d0d"/><stop offset="0.036" stop-color="#d38b0a"/><stop offset="0.067" stop-color="#a26405"/><stop offset="0.080" stop-color="#915904"/><stop offset="0.093" stop-color="#885303"/><stop offset="0.383" stop-color="#7f4d03"/><stop offset="0.400" stop-color="#814e03"/><stop offset="0.452" stop-color="#a06305"/><stop offset="0.487" stop-color="#ac6b06"/><stop offset="0.673" stop-color="#c88109"/><stop offset="0.912" stop-color="#e19a0d"/><stop offset="0.938" stop-color="#eaa60f"/><stop offset="0.985" stop-color="#fbcb16"/><stop offset="0.998" stop-color="#fcd017"/></linearGradient><linearGradient id="c212" gradientUnits="userSpaceOnUse" x1="885.5" x2="1114.7"><stop offset="0.002" stop-color="#f0af10"/><stop offset="0.010" stop-color="#eeac10"/><stop offset="0.023" stop-color="#e49d0d"/><stop offset="0.036" stop-color="#d38b0a"/><stop offset="0.067" stop-color="#a26405"/><stop offset="0.080" stop-color="#925904"/><stop offset="0.093" stop-color="#895303"/><stop offset="0.383" stop-color="#804d03"/><stop offset="0.400" stop-color="#824e03"/><stop offset="0.452" stop-color="#a06305"/><stop offset="0.487" stop-color="#ac6b06"/><stop offset="0.669" stop-color="#c88109"/><stop offset="0.912" stop-color="#e19a0d"/><stop offset="0.938" stop-color="#eaa60f"/><stop offset="0.985" stop-color="#fbcb16"/><stop offset="0.998" stop-color="#fcd017"/></linearGradient><linearGradient id="c213" gradientUnits="userSpaceOnUse" x1="885.7" x2="1114.4"><stop offset="0.002" stop-color="#f0af10"/><stop offset="0.010" stop-color="#eeac10"/><stop offset="0.023" stop-color="#e49d0d"/><stop offset="0.036" stop-color="#d38b0a"/><stop offset="0.067" stop-color="#a26405"/><stop offset="0.080" stop-color="#925904"/><stop offset="0.093" stop-color="#895303"/><stop offset="0.385" stop-color="#804d03"/><stop offset="0.402" stop-color="#824f03"/><stop offset="0.454" stop-color="#a16305"/><stop offset="0.489" stop-color="#ac6c06"/><stop offset="0.676" stop-color="#c98209"/><stop offset="0.907" stop-color="#e1990d"/><stop offset="0.933" stop-color="#e9a30e"/><stop offset="0.964" stop-color="#f5b912"/><stop offset="0.985" stop-color="#fbcb16"/><stop offset="0.998" stop-color="#fcd017"/></linearGradient><linearGradient id="c214" gradientUnits="userSpaceOnUse" x1="885.9" x2="1114.2"><stop offset="0.002" stop-color="#f0af10"/><stop offset="0.010" stop-color="#eeac10"/><stop offset="0.023" stop-color="#e49d0d"/><stop offset="0.036" stop-color="#d38b0a"/><stop offset="0.067" stop-color="#a36505"/><stop offset="0.080" stop-color="#925904"/><stop offset="0.093" stop-color="#895303"/><stop offset="0.202" stop-color="#834f03"/><stop offset="0.385" stop-color="#804d03"/><stop offset="0.402" stop-color="#834f03"/><stop offset="0.454" stop-color="#a16305"/><stop offset="0.489" stop-color="#ad6c06"/><stop offset="0.672" stop-color="#c88109"/><stop offset="0.907" stop-color="#e1990d"/><stop offset="0.933" stop-color="#e9a30e"/><stop offset="0.964" stop-color="#f6ba13"/><stop offset="0.985" stop-color="#fbcb16"/><stop offset="0.998" stop-color="#fcd017"/></linearGradient><linearGradient id="c215" gradientUnits="userSpaceOnUse" x1="886.2" x2="1114.0"><stop offset="0.002" stop-color="#f0af10"/><stop offset="0.010" stop-color="#eeac10"/><stop offset="0.023" stop-color="#e49d0d"/><stop offset="0.037" stop-color="#d38b0a"/><stop offset="0.067" stop-color="#a36505"/><stop offset="0.080" stop-color="#925904"/><stop offset="0.093" stop-color="#895303"/><stop offset="0.203" stop-color="#834f03"/><stop offset="0.386" stop-color="#804d03"/><stop offset="0.399" stop-color="#824e03"/><stop offset="0.452" stop-color="#a06305"/><stop offset="0.487" stop-color="#ac6b06"/><stop offset="0.671" stop-color="#c88109"/><stop offset="0.907" stop-color="#e1990d"/><stop offset="0.933" stop-color="#e9a30e"/><stop offset="0.963" stop-color="#f6ba13"/><stop offset="0.985" stop-color="#fbcb16"/><stop offset="0.998" stop-color="#fcd017"/></linearGradient><linearGradient id="c216" gradientUnits="userSpaceOnUse" x1="886.4" x2="1113.7"><stop offset="0.002" stop-color="#f0af10"/><stop offset="0.010" stop-color="#eeac10"/><stop offset="0.028" stop-color="#df970c"/><stop offset="0.067" stop-color="#a36505"/><stop offset="0.080" stop-color="#935a04"/><stop offset="0.093" stop-color="#895303"/><stop offset="0.203" stop-color="#834f03"/><stop offset="0.386" stop-color="#804d03"/><stop offset="0.399" stop-color="#824e03"/><stop offset="0.452" stop-color="#a06305"/><stop offset="0.487" stop-color="#ac6b06"/><stop offset="0.671" stop-color="#c88109"/><stop offset="0.907" stop-color="#e1990d"/><stop offset="0.933" stop-color="#e9a30e"/><stop offset="0.963" stop-color="#f6ba13"/><stop offset="0.985" stop-color="#fbcb16"/><stop offset="0.998" stop-color="#fcd017"/></linearGradient><linearGradient id="c217" gradientUnits="userSpaceOnUse" x1="886.6" x2="1113.5"><stop offset="0.002" stop-color="#f0af10"/><stop offset="0.010" stop-color="#eeac10"/><stop offset="0.028" stop-color="#df970c"/><stop offset="0.067" stop-color="#a46505"/><stop offset="0.081" stop-color="#935a04"/><stop offset="0.094" stop-color="#895303"/><stop offset="0.199" stop-color="#844f03"/><stop offset="0.384" stop-color="#804d03"/><stop offset="0.401" stop-color="#824f03"/><stop offset="0.454" stop-color="#a16305"/><stop offset="0.489" stop-color="#ad6c06"/><stop offset="0.673" stop-color="#c88209"/><stop offset="0.906" stop-color="#e1990d"/><stop offset="0.933" stop-color="#e9a40e"/><stop offset="0.963" stop-color="#f6ba13"/><stop offset="0.985" stop-color="#fbcb16"/><stop offset="0.998" stop-color="#fcd017"/></linearGradient><linearGradient id="c218" gradientUnits="userSpaceOnUse" x1="886.8" x2="1113.3"><stop offset="0.002" stop-color="#f0af10"/><stop offset="0.010" stop-color="#eeac10"/><stop offset="0.024" stop-color="#e49d0d"/><stop offset="0.041" stop-color="#cd8609"/><stop offset="0.067" stop-color="#a46605"/><stop offset="0.085" stop-color="#8f5704"/><stop offset="0.098" stop-color="#885203"/><stop offset="0.384" stop-color="#804d03"/><stop offset="0.401" stop-color="#824f03"/><stop offset="0.454" stop-color="#a16305"/><stop offset="0.489" stop-color="#ad6c06"/><stop offset="0.673" stop-color="#c88209"/><stop offset="0.906" stop-color="#e1990d"/><stop offset="0.933" stop-color="#e9a40e"/><stop offset="0.963" stop-color="#f6ba13"/><stop offset="0.985" stop-color="#fbcb16"/><stop offset="0.998" stop-color="#fcd017"/></linearGradient><linearGradient id="c219" gradientUnits="userSpaceOnUse" x1="886.9" x2="1113.3"><stop offset="0.002" stop-color="#f0af10"/><stop offset="0.010" stop-color="#eeac10"/><stop offset="0.024" stop-color="#e49d0d"/><stop offset="0.041" stop-color="#ce8609"/><stop offset="0.067" stop-color="#a46605"/><stop offset="0.085" stop-color="#8f5704"/><stop offset="0.098" stop-color="#885203"/><stop offset="0.384" stop-color="#804d03"/><stop offset="0.401" stop-color="#824f03"/><stop offset="0.454" stop-color="#a16305"/><stop offset="0.489" stop-color="#ad6c06"/><stop offset="0.673" stop-color="#c88209"/><stop offset="0.906" stop-color="#e1990d"/><stop offset="0.933" stop-color="#e9a40e"/><stop offset="0.963" stop-color="#f6ba13"/><stop offset="0.985" stop-color="#fbcb16"/><stop offset="0.998" stop-color="#fcd017"/></linearGradient><linearGradient id="c220" gradientUnits="userSpaceOnUse" x1="886.9" x2="1113.2"><stop offset="0.002" stop-color="#f0af10"/><stop offset="0.010" stop-color="#eeac10"/><stop offset="0.024" stop-color="#e49d0d"/><stop offset="0.041" stop-color="#ce8609"/><stop offset="0.067" stop-color="#a46605"/><stop offset="0.085" stop-color="#8f5704"/><stop offset="0.098" stop-color="#885203"/><stop offset="0.384" stop-color="#804d03"/><stop offset="0.401" stop-color="#824f03"/><stop offset="0.454" stop-color="#a16305"/><stop offset="0.489" stop-color="#ad6c06"/><stop offset="0.673" stop-color="#c88209"/><stop offset="0.906" stop-color="#e1990d"/><stop offset="0.933" stop-color="#e9a40e"/><stop offset="0.963" stop-color="#f6ba13"/><stop offset="0.985" stop-color="#fbcb16"/><stop offset="0.998" stop-color="#fcd017"/></linearGradient><linearGradient id="c221" gradientUnits="userSpaceOnUse" x1="887.0" x2="1113.1"><stop offset="0.002" stop-color="#f0af10"/><stop offset="0.010" stop-color="#eeac10"/><stop offset="0.024" stop-color="#e49d0d"/><stop offset="0.041" stop-color="#ce8609"/><stop offset="0.067" stop-color="#a56605"/><stop offset="0.085" stop-color="#8f5704"/><stop offset="0.098" stop-color="#885203"/><stop offset="0.384" stop-color="#804d03"/><stop offset="0.401" stop-color="#824f03"/><stop offset="0.454" stop-color="#a16305"/><stop offset="0.489" stop-color="#ad6c06"/><stop offset="0.673" stop-color="#c88209"/><stop offset="0.906" stop-color="#e1990d"/><stop offset="0.933" stop-color="#e9a40e"/><stop offset="0.963" stop-color="#f6ba13"/><stop offset="0.985" stop-color="#fbcb16"/><stop offset="0.998" stop-color="#fcd017"/></linearGradient><linearGradient id="c222" gradientUnits="userSpaceOnUse" x1="887.1" x2="1113.0"><stop offset="0.002" stop-color="#f0af10"/><stop offset="0.010" stop-color="#eeac10"/><stop offset="0.024" stop-color="#e49d0d"/><stop offset="0.041" stop-color="#ce8609"/><stop offset="0.068" stop-color="#a46605"/><stop offset="0.085" stop-color="#8f5704"/><stop offset="0.099" stop-color="#885203"/><stop offset="0.385" stop-color="#804d03"/><stop offset="0.403" stop-color="#834f03"/><stop offset="0.451" stop-color="#a06305"/><stop offset="0.487" stop-color="#ac6c06"/><stop offset="0.672" stop-color="#c88109"/><stop offset="0.906" stop-color="#e1990d"/><stop offset="0.932" stop-color="#e9a40e"/><stop offset="0.963" stop-color="#f6ba13"/><stop offset="0.985" stop-color="#fbcb16"/><stop offset="0.998" stop-color="#fcd017"/></linearGradient><linearGradient id="c223" gradientUnits="userSpaceOnUse" x1="887.2" x2="1112.9"><stop offset="0.002" stop-color="#f0af10"/><stop offset="0.010" stop-color="#eeac10"/><stop offset="0.024" stop-color="#e49d0d"/><stop offset="0.041" stop-color="#ce8609"/><stop offset="0.068" stop-color="#a56605"/><stop offset="0.085" stop-color="#8f5704"/><stop offset="0.099" stop-color="#885203"/><stop offset="0.385" stop-color="#804d03"/><stop offset="0.403" stop-color="#834f03"/><stop offset="0.451" stop-color="#a06305"/><stop offset="0.487" stop-color="#ac6c06"/><stop offset="0.672" stop-color="#c88109"/><stop offset="0.906" stop-color="#e1990d"/><stop offset="0.932" stop-color="#e9a40e"/><stop offset="0.963" stop-color="#f6ba13"/><stop offset="0.985" stop-color="#fbcb16"/><stop offset="0.998" stop-color="#fcd017"/></linearGradient><linearGradient id="c224" gradientUnits="userSpaceOnUse" x1="887.3" x2="1112.9"><stop offset="0.002" stop-color="#f0af10"/><stop offset="0.010" stop-color="#eeac10"/><stop offset="0.024" stop-color="#e49e0d"/><stop offset="0.041" stop-color="#ce8609"/><stop offset="0.068" stop-color="#a56605"/><stop offset="0.085" stop-color="#905704"/><stop offset="0.099" stop-color="#885303"/><stop offset="0.385" stop-color="#804d03"/><stop offset="0.403" stop-color="#834f03"/><stop offset="0.451" stop-color="#a06305"/><stop offset="0.487" stop-color="#ac6c06"/><stop offset="0.672" stop-color="#c88109"/><stop offset="0.906" stop-color="#e1990d"/><stop offset="0.932" stop-color="#e9a40e"/><stop offset="0.963" stop-color="#f6ba13"/><stop offset="0.985" stop-color="#fbcb16"/><stop offset="0.998" stop-color="#fcd017"/></linearGradient><linearGradient id="c225" gradientUnits="userSpaceOnUse" x1="887.4" x2="1112.8"><stop offset="0.002" stop-color="#f0af10"/><stop offset="0.010" stop-color="#eeac10"/><stop offset="0.024" stop-color="#e49e0d"/><stop offset="0.041" stop-color="#ce8609"/><stop offset="0.068" stop-color="#a56605"/><stop offset="0.085" stop-color="#905804"/><stop offset="0.099" stop-color="#885303"/><stop offset="0.385" stop-color="#804d03"/><stop offset="0.403" stop-color="#834f03"/><stop offset="0.451" stop-color="#a06305"/><stop offset="0.487" stop-color="#ac6c06"/><stop offset="0.672" stop-color="#c88109"/><stop offset="0.906" stop-color="#e1990d"/><stop offset="0.932" stop-color="#e9a40f"/><stop offset="0.963" stop-color="#f6ba13"/><stop offset="0.985" stop-color="#fbcb16"/><stop offset="0.998" stop-color="#fcd017"/></linearGradient><linearGradient id="c226" gradientUnits="userSpaceOnUse" x1="887.4" x2="1112.7"><stop offset="0.002" stop-color="#f0af10"/><stop offset="0.010" stop-color="#eeac10"/><stop offset="0.024" stop-color="#e49e0d"/><stop offset="0.041" stop-color="#ce8609"/><stop offset="0.068" stop-color="#a56605"/><stop offset="0.085" stop-color="#905804"/><stop offset="0.099" stop-color="#885303"/><stop offset="0.385" stop-color="#804d03"/><stop offset="0.403" stop-color="#834f03"/><stop offset="0.451" stop-color="#a06305"/><stop offset="0.487" stop-color="#ac6c06"/><stop offset="0.672" stop-color="#c88109"/><stop offset="0.906" stop-color="#e1990d"/><stop offset="0.932" stop-color="#e9a40f"/><stop offset="0.963" stop-color="#f6ba13"/><stop offset="0.985" stop-color="#fbcb16"/><stop offset="0.998" stop-color="#fcd017"/></linearGradient><linearGradient id="c227" gradientUnits="userSpaceOnUse" x1="887.5" x2="1112.6"><stop offset="0.002" stop-color="#f0af10"/><stop offset="0.010" stop-color="#eeac10"/><stop offset="0.024" stop-color="#e49d0d"/><stop offset="0.041" stop-color="#ce8609"/><stop offset="0.068" stop-color="#a56605"/><stop offset="0.085" stop-color="#905804"/><stop offset="0.099" stop-color="#885303"/><stop offset="0.385" stop-color="#804d03"/><stop offset="0.403" stop-color="#834f03"/><stop offset="0.451" stop-color="#a06305"/><stop offset="0.487" stop-color="#ac6c06"/><stop offset="0.672" stop-color="#c88109"/><stop offset="0.906" stop-color="#e1990d"/><stop offset="0.932" stop-color="#e9a40f"/><stop offset="0.963" stop-color="#f6ba13"/><stop offset="0.985" stop-color="#fbcb16"/><stop offset="0.998" stop-color="#fcd017"/></linearGradient><linearGradient id="c228" gradientUnits="userSpaceOnUse" x1="887.7" x2="1112.5"><stop offset="0.002" stop-color="#f0af10"/><stop offset="0.010" stop-color="#eeac10"/><stop offset="0.024" stop-color="#e49d0d"/><stop offset="0.041" stop-color="#ce8609"/><stop offset="0.068" stop-color="#a56605"/><stop offset="0.086" stop-color="#905704"/><stop offset="0.099" stop-color="#885303"/><stop offset="0.383" stop-color="#804d03"/><stop offset="0.400" stop-color="#824e03"/><stop offset="0.453" stop-color="#a16305"/><stop offset="0.489" stop-color="#ad6c06"/><stop offset="0.671" stop-color="#c88109"/><stop offset="0.905" stop-color="#e1990d"/><stop offset="0.932" stop-color="#e9a40e"/><stop offset="0.963" stop-color="#f6ba13"/><stop offset="0.985" stop-color="#fbcb16"/><stop offset="0.998" stop-color="#fcd017"/></linearGradient><linearGradient id="c229" gradientUnits="userSpaceOnUse" x1="887.8" x2="1112.3"><stop offset="0.002" stop-color="#f0af10"/><stop offset="0.010" stop-color="#eeac10"/><stop offset="0.024" stop-color="#e49d0d"/><stop offset="0.041" stop-color="#cd8609"/><stop offset="0.068" stop-color="#a56605"/><stop offset="0.086" stop-color="#905704"/><stop offset="0.099" stop-color="#885303"/><stop offset="0.383" stop-color="#804d03"/><stop offset="0.400" stop-color="#824f03"/><stop offset="0.453" stop-color="#a16305"/><stop offset="0.489" stop-color="#ad6c06"/><stop offset="0.671" stop-color="#c88109"/><stop offset="0.905" stop-color="#e1990d"/><stop offset="0.932" stop-color="#e9a40e"/><stop offset="0.985" stop-color="#fbcb16"/><stop offset="0.998" stop-color="#fcd017"/></linearGradient><linearGradient id="c230" gradientUnits="userSpaceOnUse" x1="887.9" x2="1112.2"><stop offset="0.002" stop-color="#f0af10"/><stop offset="0.010" stop-color="#eeab10"/><stop offset="0.024" stop-color="#e49d0d"/><stop offset="0.037" stop-color="#d48c0a"/><stop offset="0.068" stop-color="#a46605"/><stop offset="0.086" stop-color="#905704"/><stop offset="0.099" stop-color="#885303"/><stop offset="0.383" stop-color="#804d03"/><stop offset="0.400" stop-color="#824f03"/><stop offset="0.453" stop-color="#a16305"/><stop offset="0.489" stop-color="#ad6c06"/><stop offset="0.671" stop-color="#c88109"/><stop offset="0.905" stop-color="#e1990d"/><stop offset="0.932" stop-color="#e9a40e"/><stop offset="0.985" stop-color="#fbcb16"/><stop offset="0.998" stop-color="#fcd017"/></linearGradient><linearGradient id="c231" gradientUnits="userSpaceOnUse" x1="888.0" x2="1112.1"><stop offset="0.002" stop-color="#f0af10"/><stop offset="0.010" stop-color="#eeab10"/><stop offset="0.024" stop-color="#e39d0d"/><stop offset="0.037" stop-color="#d38b0a"/><stop offset="0.068" stop-color="#a46605"/><stop offset="0.086" stop-color="#8f5704"/><stop offset="0.099" stop-color="#885303"/><stop offset="0.383" stop-color="#804d03"/><stop offset="0.400" stop-color="#824f03"/><stop offset="0.453" stop-color="#a16305"/><stop offset="0.489" stop-color="#ad6c06"/><stop offset="0.671" stop-color="#c88109"/><stop offset="0.905" stop-color="#e1990d"/><stop offset="0.932" stop-color="#e9a40e"/><stop offset="0.985" stop-color="#fbcb16"/><stop offset="0.998" stop-color="#fcd017"/></linearGradient><linearGradient id="c232" gradientUnits="userSpaceOnUse" x1="888.2" x2="1111.9"><stop offset="0.002" stop-color="#f0af10"/><stop offset="0.010" stop-color="#eeab10"/><stop offset="0.024" stop-color="#e39c0d"/><stop offset="0.037" stop-color="#d38b0a"/><stop offset="0.068" stop-color="#a46505"/><stop offset="0.086" stop-color="#8f5704"/><stop offset="0.099" stop-color="#885203"/><stop offset="0.384" stop-color="#804d03"/><stop offset="0.402" stop-color="#834f03"/><stop offset="0.451" stop-color="#a06305"/><stop offset="0.487" stop-color="#ac6c06"/><stop offset="0.669" stop-color="#c88109"/><stop offset="0.905" stop-color="#e1990d"/><stop offset="0.932" stop-color="#e9a30e"/><stop offset="0.985" stop-color="#fbca16"/><stop offset="0.998" stop-color="#fccf17"/></linearGradient><linearGradient id="c233" gradientUnits="userSpaceOnUse" x1="888.3" x2="1111.8"><stop offset="0.002" stop-color="#f0af10"/><stop offset="0.010" stop-color="#eeab10"/><stop offset="0.028" stop-color="#de960c"/><stop offset="0.055" stop-color="#b87407"/><stop offset="0.073" stop-color="#9d6105"/><stop offset="0.086" stop-color="#8f5704"/><stop offset="0.099" stop-color="#885203"/><stop offset="0.384" stop-color="#804d03"/><stop offset="0.402" stop-color="#834f03"/><stop offset="0.451" stop-color="#a06305"/><stop offset="0.487" stop-color="#ac6c06"/><stop offset="0.669" stop-color="#c88109"/><stop offset="0.905" stop-color="#e1990d"/><stop offset="0.936" stop-color="#eba60f"/><stop offset="0.985" stop-color="#fbca16"/><stop offset="0.998" stop-color="#fccf17"/></linearGradient><linearGradient id="c234" gradientUnits="userSpaceOnUse" x1="888.5" x2="1111.6"><stop offset="0.002" stop-color="#f0af10"/><stop offset="0.010" stop-color="#edaa10"/><stop offset="0.028" stop-color="#de960c"/><stop offset="0.055" stop-color="#b77407"/><stop offset="0.073" stop-color="#9d6105"/><stop offset="0.086" stop-color="#8f5704"/><stop offset="0.099" stop-color="#885203"/><stop offset="0.384" stop-color="#804d03"/><stop offset="0.402" stop-color="#834f03"/><stop offset="0.451" stop-color="#a06305"/><stop offset="0.487" stop-color="#ac6c06"/><stop offset="0.669" stop-color="#c88109"/><stop offset="0.905" stop-color="#e0990d"/><stop offset="0.936" stop-color="#eaa60f"/><stop offset="0.985" stop-color="#fbca16"/><stop offset="0.998" stop-color="#fccf17"/></linearGradient><linearGradient id="c235" gradientUnits="userSpaceOnUse" x1="888.7" x2="1111.4"><stop offset="0.002" stop-color="#f0af10"/><stop offset="0.011" stop-color="#edaa10"/><stop offset="0.024" stop-color="#e29b0d"/><stop offset="0.037" stop-color="#d1890a"/><stop offset="0.069" stop-color="#a26405"/><stop offset="0.082" stop-color="#925904"/><stop offset="0.095" stop-color="#895303"/><stop offset="0.198" stop-color="#845003"/><stop offset="0.386" stop-color="#804d03"/><stop offset="0.399" stop-color="#824f03"/><stop offset="0.453" stop-color="#a16305"/><stop offset="0.489" stop-color="#ad6c06"/><stop offset="0.672" stop-color="#c88109"/><stop offset="0.905" stop-color="#e0990d"/><stop offset="0.936" stop-color="#eaa50f"/><stop offset="0.985" stop-color="#fbca16"/><stop offset="0.998" stop-color="#fccf17"/></linearGradient><linearGradient id="c236" gradientUnits="userSpaceOnUse" x1="888.9" x2="1111.3"><stop offset="0.002" stop-color="#f0af10"/><stop offset="0.011" stop-color="#eda90f"/><stop offset="0.024" stop-color="#e29a0d"/><stop offset="0.037" stop-color="#d1890a"/><stop offset="0.069" stop-color="#a26405"/><stop offset="0.082" stop-color="#925904"/><stop offset="0.095" stop-color="#895303"/><stop offset="0.203" stop-color="#845003"/><stop offset="0.386" stop-color="#804d03"/><stop offset="0.399" stop-color="#824f03"/><stop offset="0.453" stop-color="#a16305"/><stop offset="0.489" stop-color="#ad6c06"/><stop offset="0.672" stop-color="#c88109"/><stop offset="0.905" stop-color="#e0990d"/><stop offset="0.936" stop-color="#eaa50f"/><stop offset="0.985" stop-color="#fbc916"/><stop offset="0.998" stop-color="#fccf17"/></linearGradient><linearGradient id="c237" gradientUnits="userSpaceOnUse" x1="889.1" x2="1111.1"><stop offset="0.002" stop-color="#f0af10"/><stop offset="0.006" stop-color="#efad10"/><stop offset="0.015" stop-color="#e9a40f"/><stop offset="0.029" stop-color="#dc940c"/><stop offset="0.069" stop-color="#a16405"/><stop offset="0.082" stop-color="#925904"/><stop offset="0.096" stop-color="#895303"/><stop offset="0.383" stop-color="#804d03"/><stop offset="0.401" stop-color="#834f03"/><stop offset="0.451" stop-color="#a06305"/><stop offset="0.487" stop-color="#ac6c06"/><stop offset="0.671" stop-color="#c88109"/><stop offset="0.904" stop-color="#e0990d"/><stop offset="0.936" stop-color="#eaa50f"/><stop offset="0.967" stop-color="#f6bb13"/><stop offset="0.989" stop-color="#fbcc16"/><stop offset="0.998" stop-color="#fccf17"/></linearGradient><linearGradient id="c238" gradientUnits="userSpaceOnUse" x1="889.3" x2="1110.9"><stop offset="0.002" stop-color="#f0af10"/><stop offset="0.006" stop-color="#efad10"/><stop offset="0.015" stop-color="#e9a40e"/><stop offset="0.029" stop-color="#db930c"/><stop offset="0.069" stop-color="#a16305"/><stop offset="0.082" stop-color="#915904"/><stop offset="0.096" stop-color="#895303"/><stop offset="0.383" stop-color="#804d03"/><stop offset="0.401" stop-color="#834f03"/><stop offset="0.451" stop-color="#a06305"/><stop offset="0.487" stop-color="#ac6c06"/><stop offset="0.671" stop-color="#c88109"/><stop offset="0.909" stop-color="#e19a0d"/><stop offset="0.936" stop-color="#eaa50f"/><stop offset="0.971" stop-color="#f7be13"/><stop offset="0.989" stop-color="#fbcc16"/><stop offset="0.998" stop-color="#fcce17"/></linearGradient><linearGradient id="c239" gradientUnits="userSpaceOnUse" x1="889.5" x2="1110.6"><stop offset="0.002" stop-color="#f0af10"/><stop offset="0.006" stop-color="#efad10"/><stop offset="0.029" stop-color="#db930c"/><stop offset="0.069" stop-color="#a06305"/><stop offset="0.082" stop-color="#915804"/><stop offset="0.096" stop-color="#895303"/><stop offset="0.383" stop-color="#804d03"/><stop offset="0.401" stop-color="#834f03"/><stop offset="0.451" stop-color="#a06305"/><stop offset="0.487" stop-color="#ac6c06"/><stop offset="0.671" stop-color="#c88109"/><stop offset="0.909" stop-color="#e1990d"/><stop offset="0.936" stop-color="#eaa40f"/><stop offset="0.971" stop-color="#f7be13"/><stop offset="0.994" stop-color="#fcce17"/><stop offset="0.998" stop-color="#fcce17"/></linearGradient><linearGradient id="c240" gradientUnits="userSpaceOnUse" x1="889.7" x2="1110.4"><stop offset="0.002" stop-color="#f0af10"/><stop offset="0.006" stop-color="#efad10"/><stop offset="0.029" stop-color="#da920b"/><stop offset="0.065" stop-color="#a56705"/><stop offset="0.083" stop-color="#905804"/><stop offset="0.096" stop-color="#885303"/><stop offset="0.385" stop-color="#804d03"/><stop offset="0.399" stop-color="#824f03"/><stop offset="0.453" stop-color="#a16305"/><stop offset="0.489" stop-color="#ad6c06"/><stop offset="0.674" stop-color="#c88209"/><stop offset="0.908" stop-color="#e1990d"/><stop offset="0.935" stop-color="#e9a40f"/><stop offset="0.989" stop-color="#fbcb16"/><stop offset="0.998" stop-color="#fcce17"/></linearGradient><linearGradient id="c241" gradientUnits="userSpaceOnUse" x1="889.9" x2="1110.2"><stop offset="0.002" stop-color="#f0af10"/><stop offset="0.011" stop-color="#eca80f"/><stop offset="0.029" stop-color="#d9910b"/><stop offset="0.065" stop-color="#a56605"/><stop offset="0.083" stop-color="#905804"/><stop offset="0.096" stop-color="#885303"/><stop offset="0.385" stop-color="#804d03"/><stop offset="0.399" stop-color="#824f03"/><stop offset="0.453" stop-color="#a16305"/><stop offset="0.489" stop-color="#ad6c06"/><stop offset="0.674" stop-color="#c88209"/><stop offset="0.908" stop-color="#e1990d"/><stop offset="0.940" stop-color="#eba60f"/><stop offset="0.989" stop-color="#fbcb16"/><stop offset="0.998" stop-color="#fcce17"/></linearGradient><linearGradient id="c242" gradientUnits="userSpaceOnUse" x1="890.2" x2="1110.0"><stop offset="0.002" stop-color="#f0af10"/><stop offset="0.006" stop-color="#efad10"/><stop offset="0.024" stop-color="#de960c"/><stop offset="0.065" stop-color="#a46505"/><stop offset="0.083" stop-color="#8f5704"/><stop offset="0.097" stop-color="#885303"/><stop offset="0.382" stop-color="#804d03"/><stop offset="0.400" stop-color="#834f03"/><stop offset="0.450" stop-color="#a06305"/><stop offset="0.486" stop-color="#ac6c06"/><stop offset="0.672" stop-color="#c88109"/><stop offset="0.908" stop-color="#e0990d"/><stop offset="0.940" stop-color="#eba60f"/><stop offset="0.989" stop-color="#fbcb16"/><stop offset="0.998" stop-color="#fccd17"/></linearGradient><linearGradient id="c243" gradientUnits="userSpaceOnUse" x1="890.4" x2="1109.7"><stop offset="0.002" stop-color="#f0af10"/><stop offset="0.011" stop-color="#eca80f"/><stop offset="0.024" stop-color="#dd950c"/><stop offset="0.065" stop-color="#a36505"/><stop offset="0.083" stop-color="#8f5704"/><stop offset="0.097" stop-color="#885203"/><stop offset="0.382" stop-color="#804d03"/><stop offset="0.400" stop-color="#834f03"/><stop offset="0.450" stop-color="#a06305"/><stop offset="0.486" stop-color="#ad6c06"/><stop offset="0.672" stop-color="#c88109"/><stop offset="0.908" stop-color="#e0990d"/><stop offset="0.940" stop-color="#eaa60f"/><stop offset="0.989" stop-color="#fbcb16"/><stop offset="0.998" stop-color="#fccd17"/></linearGradient><linearGradient id="c244" gradientUnits="userSpaceOnUse" x1="890.7" x2="1109.4"><stop offset="0.002" stop-color="#f0af10"/><stop offset="0.006" stop-color="#efad10"/><stop offset="0.015" stop-color="#e7a10e"/><stop offset="0.038" stop-color="#ca8309"/><stop offset="0.061" stop-color="#a86905"/><stop offset="0.079" stop-color="#925904"/><stop offset="0.093" stop-color="#895303"/><stop offset="0.197" stop-color="#845003"/><stop offset="0.384" stop-color="#804d03"/><stop offset="0.398" stop-color="#824f03"/><stop offset="0.452" stop-color="#a16305"/><stop offset="0.489" stop-color="#ad6c06"/><stop offset="0.675" stop-color="#c98209"/><stop offset="0.907" stop-color="#e0990d"/><stop offset="0.939" stop-color="#eaa50f"/><stop offset="0.989" stop-color="#fbca16"/><stop offset="0.998" stop-color="#fccd17"/></linearGradient><linearGradient id="c245" gradientUnits="userSpaceOnUse" x1="890.9" x2="1109.2"><stop offset="0.002" stop-color="#f0af10"/><stop offset="0.006" stop-color="#efad10"/><stop offset="0.015" stop-color="#e7a20e"/><stop offset="0.024" stop-color="#db930c"/><stop offset="0.061" stop-color="#a76805"/><stop offset="0.079" stop-color="#925904"/><stop offset="0.093" stop-color="#895303"/><stop offset="0.384" stop-color="#804d03"/><stop offset="0.398" stop-color="#824f03"/><stop offset="0.452" stop-color="#a16305"/><stop offset="0.489" stop-color="#ad6c06"/><stop offset="0.675" stop-color="#c88209"/><stop offset="0.907" stop-color="#e0990d"/><stop offset="0.939" stop-color="#eaa50f"/><stop offset="0.989" stop-color="#fbca16"/><stop offset="0.998" stop-color="#fccd17"/></linearGradient><linearGradient id="c246" gradientUnits="userSpaceOnUse" x1="891.2" x2="1108.9"><stop offset="0.002" stop-color="#f0af10"/><stop offset="0.006" stop-color="#efad10"/><stop offset="0.015" stop-color="#e7a20e"/><stop offset="0.029" stop-color="#d48c0a"/><stop offset="0.061" stop-color="#a66705"/><stop offset="0.079" stop-color="#915804"/><stop offset="0.093" stop-color="#895303"/><stop offset="0.381" stop-color="#804d03"/><stop offset="0.399" stop-color="#834f03"/><stop offset="0.450" stop-color="#a06305"/><stop offset="0.486" stop-color="#ad6c06"/><stop offset="0.669" stop-color="#c88109"/><stop offset="0.912" stop-color="#e1990d"/><stop offset="0.944" stop-color="#eba70f"/><stop offset="0.989" stop-color="#fbca16"/><stop offset="0.998" stop-color="#fbcd17"/></linearGradient><linearGradient id="c247" gradientUnits="userSpaceOnUse" x1="891.5" x2="1108.6"><stop offset="0.002" stop-color="#f0af10"/><stop offset="0.006" stop-color="#efad10"/><stop offset="0.015" stop-color="#e8a20e"/><stop offset="0.029" stop-color="#d38b0a"/><stop offset="0.056" stop-color="#ab6b06"/><stop offset="0.075" stop-color="#945b04"/><stop offset="0.093" stop-color="#885303"/><stop offset="0.381" stop-color="#804d03"/><stop offset="0.399" stop-color="#834f03"/><stop offset="0.450" stop-color="#a06305"/><stop offset="0.486" stop-color="#ad6c06"/><stop offset="0.669" stop-color="#c88109"/><stop offset="0.912" stop-color="#e1990d"/><stop offset="0.944" stop-color="#eba60f"/><stop offset="0.971" stop-color="#f5b912"/><stop offset="0.989" stop-color="#fbca16"/><stop offset="0.998" stop-color="#fbcc16"/></linearGradient><linearGradient id="c248" gradientUnits="userSpaceOnUse" x1="891.8" x2="1108.3"><stop offset="0.002" stop-color="#f0af10"/><stop offset="0.006" stop-color="#efad10"/><stop offset="0.015" stop-color="#e8a20e"/><stop offset="0.029" stop-color="#d28a0a"/><stop offset="0.057" stop-color="#aa6a06"/><stop offset="0.075" stop-color="#935a04"/><stop offset="0.093" stop-color="#885303"/><stop offset="0.383" stop-color="#804d03"/><stop offset="0.397" stop-color="#824f03"/><stop offset="0.452" stop-color="#a16305"/><stop offset="0.489" stop-color="#ad6c06"/><stop offset="0.672" stop-color="#c88109"/><stop offset="0.911" stop-color="#e0990d"/><stop offset="0.943" stop-color="#eaa60f"/><stop offset="0.966" stop-color="#f3b512"/><stop offset="0.989" stop-color="#fbca16"/><stop offset="0.998" stop-color="#fbcc16"/></linearGradient><linearGradient id="c249" gradientUnits="userSpaceOnUse" x1="892.1" x2="1108.0"><stop offset="0.002" stop-color="#f0af10"/><stop offset="0.006" stop-color="#efad10"/><stop offset="0.015" stop-color="#e8a20e"/><stop offset="0.034" stop-color="#ca8309"/><stop offset="0.052" stop-color="#af6d06"/><stop offset="0.071" stop-color="#975d04"/><stop offset="0.089" stop-color="#895303"/><stop offset="0.186" stop-color="#845003"/><stop offset="0.380" stop-color="#804d03"/><stop offset="0.398" stop-color="#834f03"/><stop offset="0.449" stop-color="#a06305"/><stop offset="0.486" stop-color="#ad6c06"/><stop offset="0.675" stop-color="#c88209"/><stop offset="0.911" stop-color="#e0990d"/><stop offset="0.943" stop-color="#eaa50f"/><stop offset="0.966" stop-color="#f3b412"/><stop offset="0.989" stop-color="#fbc916"/><stop offset="0.998" stop-color="#fbcc16"/></linearGradient><linearGradient id="c250" gradientUnits="userSpaceOnUse" x1="892.4" x2="1107.7"><stop offset="0.002" stop-color="#f0ae10"/><stop offset="0.011" stop-color="#eca80f"/><stop offset="0.020" stop-color="#e29a0d"/><stop offset="0.034" stop-color="#ca8309"/><stop offset="0.052" stop-color="#ae6d06"/><stop offset="0.071" stop-color="#965c04"/><stop offset="0.089" stop-color="#895303"/><stop offset="0.380" stop-color="#804d03"/><stop offset="0.398" stop-color="#834f03"/><stop offset="0.449" stop-color="#a06305"/><stop offset="0.486" stop-color="#ad6c06"/><stop offset="0.675" stop-color="#c88109"/><stop offset="0.911" stop-color="#e0990d"/><stop offset="0.948" stop-color="#eca70f"/><stop offset="0.966" stop-color="#f3b411"/><stop offset="0.989" stop-color="#fbc916"/><stop offset="0.998" stop-color="#fbcc16"/></linearGradient><linearGradient id="c251" gradientUnits="userSpaceOnUse" x1="892.8" x2="1107.4"><stop offset="0.002" stop-color="#f0ae10"/><stop offset="0.011" stop-color="#eca80f"/><stop offset="0.020" stop-color="#e29a0d"/><stop offset="0.039" stop-color="#c07b08"/><stop offset="0.053" stop-color="#ac6b06"/><stop offset="0.071" stop-color="#955b04"/><stop offset="0.090" stop-color="#895303"/><stop offset="0.382" stop-color="#804d03"/><stop offset="0.396" stop-color="#824f03"/><stop offset="0.451" stop-color="#a16305"/><stop offset="0.488" stop-color="#ad6c06"/><stop offset="0.674" stop-color="#c88109"/><stop offset="0.915" stop-color="#e1990d"/><stop offset="0.947" stop-color="#eba70f"/><stop offset="0.961" stop-color="#f1b011"/><stop offset="0.989" stop-color="#fbc916"/><stop offset="0.998" stop-color="#fbcb16"/></linearGradient><linearGradient id="c252" gradientUnits="userSpaceOnUse" x1="893.1" x2="1107.0"><stop offset="0.002" stop-color="#f0ae10"/><stop offset="0.011" stop-color="#eca90f"/><stop offset="0.020" stop-color="#e29b0d"/><stop offset="0.039" stop-color="#c17b08"/><stop offset="0.048" stop-color="#b16f06"/><stop offset="0.072" stop-color="#945a04"/><stop offset="0.090" stop-color="#885303"/><stop offset="0.379" stop-color="#814d03"/><stop offset="0.398" stop-color="#834f03"/><stop offset="0.449" stop-color="#a06305"/><stop offset="0.486" stop-color="#ad6c06"/><stop offset="0.672" stop-color="#c88109"/><stop offset="0.915" stop-color="#e0990d"/><stop offset="0.952" stop-color="#eca90f"/><stop offset="0.989" stop-color="#fbc916"/><stop offset="0.998" stop-color="#fbcb16"/></linearGradient><linearGradient id="c253" gradientUnits="userSpaceOnUse" x1="893.4" x2="1106.7"><stop offset="0.002" stop-color="#f0ae10"/><stop offset="0.011" stop-color="#eca90f"/><stop offset="0.020" stop-color="#e29b0d"/><stop offset="0.048" stop-color="#b06e06"/><stop offset="0.072" stop-color="#935a04"/><stop offset="0.090" stop-color="#885303"/><stop offset="0.379" stop-color="#814d03"/><stop offset="0.398" stop-color="#834f03"/><stop offset="0.449" stop-color="#a06305"/><stop offset="0.486" stop-color="#ad6c06"/><stop offset="0.672" stop-color="#c88109"/><stop offset="0.915" stop-color="#e0990d"/><stop offset="0.952" stop-color="#eca80f"/><stop offset="0.989" stop-color="#fbc816"/><stop offset="0.998" stop-color="#fbcb16"/></linearGradient><linearGradient id="c254" gradientUnits="userSpaceOnUse" x1="893.8" x2="1106.3"><stop offset="0.002" stop-color="#f0ae10"/><stop offset="0.011" stop-color="#eca90f"/><stop offset="0.020" stop-color="#e29b0d"/><stop offset="0.030" stop-color="#d38b0a"/><stop offset="0.044" stop-color="#b87407"/><stop offset="0.053" stop-color="#a76805"/><stop offset="0.072" stop-color="#925904"/><stop offset="0.086" stop-color="#895303"/><stop offset="0.189" stop-color="#845003"/><stop offset="0.381" stop-color="#814d03"/><stop offset="0.399" stop-color="#845003"/><stop offset="0.451" stop-color="#a16305"/><stop offset="0.488" stop-color="#ad6c06"/><stop offset="0.675" stop-color="#c88109"/><stop offset="0.914" stop-color="#e0990d"/><stop offset="0.952" stop-color="#eca70f"/><stop offset="0.989" stop-color="#fac816"/><stop offset="0.998" stop-color="#fbcb16"/></linearGradient><linearGradient id="c255" gradientUnits="userSpaceOnUse" x1="894.2" x2="1105.9"><stop offset="0.002" stop-color="#f0ae10"/><stop offset="0.011" stop-color="#eca90f"/><stop offset="0.020" stop-color="#e29b0d"/><stop offset="0.030" stop-color="#d38b0a"/><stop offset="0.053" stop-color="#a66705"/><stop offset="0.072" stop-color="#915804"/><stop offset="0.086" stop-color="#895303"/><stop offset="0.378" stop-color="#814d03"/><stop offset="0.397" stop-color="#834f03"/><stop offset="0.448" stop-color="#a06305"/><stop offset="0.486" stop-color="#ad6c06"/><stop offset="0.674" stop-color="#c88109"/><stop offset="0.918" stop-color="#e1990d"/><stop offset="0.947" stop-color="#e9a40f"/><stop offset="0.989" stop-color="#fac815"/><stop offset="0.998" stop-color="#fbca16"/></linearGradient><linearGradient id="c256" gradientUnits="userSpaceOnUse" x1="894.6" x2="1105.6"><stop offset="0.002" stop-color="#f0ae10"/><stop offset="0.011" stop-color="#eca90f"/><stop offset="0.025" stop-color="#dc940c"/><stop offset="0.044" stop-color="#b97507"/><stop offset="0.058" stop-color="#9e6105"/><stop offset="0.072" stop-color="#905804"/><stop offset="0.086" stop-color="#885303"/><stop offset="0.378" stop-color="#814d03"/><stop offset="0.397" stop-color="#834f03"/><stop offset="0.448" stop-color="#a06305"/><stop offset="0.486" stop-color="#ad6c06"/><stop offset="0.674" stop-color="#c88109"/><stop offset="0.918" stop-color="#e0990d"/><stop offset="0.947" stop-color="#e9a40e"/><stop offset="0.989" stop-color="#fac815"/><stop offset="0.998" stop-color="#fbca16"/></linearGradient><linearGradient id="c257" gradientUnits="userSpaceOnUse" x1="894.9" x2="1105.2"><stop offset="0.002" stop-color="#f0ae10"/><stop offset="0.011" stop-color="#eca90f"/><stop offset="0.025" stop-color="#dc940c"/><stop offset="0.058" stop-color="#9e6205"/><stop offset="0.068" stop-color="#935a04"/><stop offset="0.082" stop-color="#895303"/><stop offset="0.181" stop-color="#845003"/><stop offset="0.380" stop-color="#814e03"/><stop offset="0.398" stop-color="#845003"/><stop offset="0.450" stop-color="#a16305"/><stop offset="0.488" stop-color="#ad6c06"/><stop offset="0.677" stop-color="#c88109"/><stop offset="0.918" stop-color="#e0990d"/><stop offset="0.946" stop-color="#e9a30e"/><stop offset="0.989" stop-color="#fac815"/><stop offset="0.998" stop-color="#fbca16"/></linearGradient><linearGradient id="c258" gradientUnits="userSpaceOnUse" x1="895.4" x2="1104.8"><stop offset="0.002" stop-color="#f0ae10"/><stop offset="0.011" stop-color="#eda90f"/><stop offset="0.025" stop-color="#dc940c"/><stop offset="0.059" stop-color="#9f6205"/><stop offset="0.068" stop-color="#915904"/><stop offset="0.082" stop-color="#895303"/><stop offset="0.377" stop-color="#814e03"/><stop offset="0.396" stop-color="#834f03"/><stop offset="0.448" stop-color="#a06305"/><stop offset="0.486" stop-color="#ad6c06"/><stop offset="0.676" stop-color="#c88109"/><stop offset="0.922" stop-color="#e1990d"/><stop offset="0.946" stop-color="#e9a30e"/><stop offset="0.989" stop-color="#fac715"/><stop offset="0.998" stop-color="#fbca16"/></linearGradient><linearGradient id="c259" gradientUnits="userSpaceOnUse" x1="895.8" x2="1104.4"><stop offset="0.002" stop-color="#f0ae10"/><stop offset="0.011" stop-color="#eda90f"/><stop offset="0.026" stop-color="#dc940c"/><stop offset="0.059" stop-color="#9f6205"/><stop offset="0.068" stop-color="#915904"/><stop offset="0.083" stop-color="#895303"/><stop offset="0.378" stop-color="#814e03"/><stop offset="0.397" stop-color="#845003"/><stop offset="0.450" stop-color="#a16305"/><stop offset="0.488" stop-color="#ad6c06"/><stop offset="0.679" stop-color="#c88109"/><stop offset="0.922" stop-color="#e0990d"/><stop offset="0.946" stop-color="#e8a30e"/><stop offset="0.989" stop-color="#fac715"/><stop offset="0.998" stop-color="#fbc916"/></linearGradient><linearGradient id="c260" gradientUnits="userSpaceOnUse" x1="896.2" x2="1103.9"><stop offset="0.002" stop-color="#f0ae10"/><stop offset="0.011" stop-color="#eda90f"/><stop offset="0.021" stop-color="#e39c0d"/><stop offset="0.035" stop-color="#cc8509"/><stop offset="0.054" stop-color="#a86805"/><stop offset="0.069" stop-color="#925904"/><stop offset="0.078" stop-color="#8a5303"/><stop offset="0.179" stop-color="#845003"/><stop offset="0.380" stop-color="#814e03"/><stop offset="0.395" stop-color="#834f03"/><stop offset="0.447" stop-color="#a06305"/><stop offset="0.486" stop-color="#ad6c06"/><stop offset="0.677" stop-color="#c88109"/><stop offset="0.922" stop-color="#e0990d"/><stop offset="0.946" stop-color="#e8a20e"/><stop offset="0.989" stop-color="#fac715"/><stop offset="0.998" stop-color="#fbc916"/></linearGradient><linearGradient id="c261" gradientUnits="userSpaceOnUse" x1="896.6" x2="1103.5"><stop offset="0.002" stop-color="#f0ae10"/><stop offset="0.011" stop-color="#eda90f"/><stop offset="0.021" stop-color="#e39c0d"/><stop offset="0.035" stop-color="#cc8509"/><stop offset="0.059" stop-color="#a06305"/><stop offset="0.074" stop-color="#8d5604"/><stop offset="0.084" stop-color="#885203"/><stop offset="0.377" stop-color="#814e03"/><stop offset="0.396" stop-color="#845003"/><stop offset="0.449" stop-color="#a16305"/><stop offset="0.488" stop-color="#ad6c06"/><stop offset="0.681" stop-color="#c88209"/><stop offset="0.921" stop-color="#e0980c"/><stop offset="0.945" stop-color="#e8a20e"/><stop offset="0.989" stop-color="#fac715"/><stop offset="0.998" stop-color="#fbc916"/></linearGradient><linearGradient id="c262" gradientUnits="userSpaceOnUse" x1="897.1" x2="1103.0"><stop offset="0.002" stop-color="#f0ae10"/><stop offset="0.011" stop-color="#eda90f"/><stop offset="0.021" stop-color="#e39c0d"/><stop offset="0.036" stop-color="#cd8509"/><stop offset="0.060" stop-color="#a06305"/><stop offset="0.074" stop-color="#8d5604"/><stop offset="0.084" stop-color="#885203"/><stop offset="0.379" stop-color="#814e03"/><stop offset="0.394" stop-color="#834f03"/><stop offset="0.447" stop-color="#a06305"/><stop offset="0.485" stop-color="#ad6c06"/><stop offset="0.684" stop-color="#c98209"/><stop offset="0.921" stop-color="#df980c"/><stop offset="0.945" stop-color="#e8a20e"/><stop offset="0.989" stop-color="#fac615"/><stop offset="0.998" stop-color="#fbc916"/></linearGradient><linearGradient id="c263" gradientUnits="userSpaceOnUse" x1="897.5" x2="1102.6"><stop offset="0.002" stop-color="#f0ae10"/><stop offset="0.011" stop-color="#eda90f"/><stop offset="0.021" stop-color="#e39c0d"/><stop offset="0.036" stop-color="#cd8609"/><stop offset="0.060" stop-color="#a16405"/><stop offset="0.074" stop-color="#8e5604"/><stop offset="0.084" stop-color="#885203"/><stop offset="0.374" stop-color="#814e03"/><stop offset="0.394" stop-color="#834f03"/><stop offset="0.447" stop-color="#a06305"/><stop offset="0.485" stop-color="#ad6c06"/><stop offset="0.684" stop-color="#c98209"/><stop offset="0.921" stop-color="#df970c"/><stop offset="0.945" stop-color="#e8a20e"/><stop offset="0.989" stop-color="#fac615"/><stop offset="0.998" stop-color="#fac816"/></linearGradient><linearGradient id="c264" gradientUnits="userSpaceOnUse" x1="898.0" x2="1102.1"><stop offset="0.002" stop-color="#f0ae10"/><stop offset="0.011" stop-color="#eda90f"/><stop offset="0.021" stop-color="#e39c0d"/><stop offset="0.036" stop-color="#cd8609"/><stop offset="0.060" stop-color="#a26405"/><stop offset="0.075" stop-color="#8e5704"/><stop offset="0.084" stop-color="#885203"/><stop offset="0.376" stop-color="#814e03"/><stop offset="0.395" stop-color="#845003"/><stop offset="0.449" stop-color="#a16305"/><stop offset="0.488" stop-color="#ad6c06"/><stop offset="0.687" stop-color="#c98209"/><stop offset="0.921" stop-color="#df970c"/><stop offset="0.945" stop-color="#e7a10e"/><stop offset="0.989" stop-color="#fac615"/><stop offset="0.998" stop-color="#fac815"/></linearGradient><linearGradient id="c265" gradientUnits="userSpaceOnUse" x1="898.5" x2="1101.6"><stop offset="0.002" stop-color="#f0ae10"/><stop offset="0.011" stop-color="#eda90f"/><stop offset="0.021" stop-color="#e39c0d"/><stop offset="0.036" stop-color="#ce8609"/><stop offset="0.060" stop-color="#a26405"/><stop offset="0.075" stop-color="#8f5704"/><stop offset="0.085" stop-color="#885303"/><stop offset="0.378" stop-color="#814e03"/><stop offset="0.393" stop-color="#834f03"/><stop offset="0.446" stop-color="#a06305"/><stop offset="0.485" stop-color="#ad6c06"/><stop offset="0.691" stop-color="#c98209"/><stop offset="0.920" stop-color="#de960c"/><stop offset="0.945" stop-color="#e7a10e"/><stop offset="0.989" stop-color="#fac615"/><stop offset="0.998" stop-color="#fac815"/></linearGradient><linearGradient id="c266" gradientUnits="userSpaceOnUse" x1="899.0" x2="1101.1"><stop offset="0.002" stop-color="#f0ae10"/><stop offset="0.012" stop-color="#eda90f"/><stop offset="0.021" stop-color="#e39d0d"/><stop offset="0.036" stop-color="#ce870a"/><stop offset="0.061" stop-color="#a36505"/><stop offset="0.075" stop-color="#8f5704"/><stop offset="0.085" stop-color="#885303"/><stop offset="0.375" stop-color="#814e03"/><stop offset="0.394" stop-color="#845003"/><stop offset="0.448" stop-color="#a16305"/><stop offset="0.488" stop-color="#ad6c06"/><stop offset="0.694" stop-color="#c98309"/><stop offset="0.920" stop-color="#de960c"/><stop offset="0.944" stop-color="#e7a10e"/><stop offset="0.988" stop-color="#fac515"/><stop offset="0.998" stop-color="#fac715"/></linearGradient><linearGradient id="c267" gradientUnits="userSpaceOnUse" x1="899.5" x2="1100.6"><stop offset="0.002" stop-color="#f0ae10"/><stop offset="0.012" stop-color="#eda90f"/><stop offset="0.021" stop-color="#e49d0d"/><stop offset="0.036" stop-color="#ce870a"/><stop offset="0.061" stop-color="#a36505"/><stop offset="0.076" stop-color="#8f5704"/><stop offset="0.086" stop-color="#885303"/><stop offset="0.377" stop-color="#814e03"/><stop offset="0.391" stop-color="#834f03"/><stop offset="0.446" stop-color="#a06305"/><stop offset="0.485" stop-color="#ad6c06"/><stop offset="0.697" stop-color="#ca8309"/><stop offset="0.919" stop-color="#dd960c"/><stop offset="0.944" stop-color="#e7a10e"/><stop offset="0.969" stop-color="#f3b512"/><stop offset="0.988" stop-color="#fac515"/><stop offset="0.998" stop-color="#fac715"/></linearGradient><linearGradient id="c268" gradientUnits="userSpaceOnUse" x1="900.0" x2="1100.1"><stop offset="0.002" stop-color="#f0ae10"/><stop offset="0.012" stop-color="#eda90f"/><stop offset="0.022" stop-color="#e49d0d"/><stop offset="0.036" stop-color="#cf870a"/><stop offset="0.061" stop-color="#a46605"/><stop offset="0.076" stop-color="#905804"/><stop offset="0.086" stop-color="#895303"/><stop offset="0.374" stop-color="#814e03"/><stop offset="0.393" stop-color="#845003"/><stop offset="0.448" stop-color="#a16305"/><stop offset="0.488" stop-color="#ad6c06"/><stop offset="0.701" stop-color="#ca8309"/><stop offset="0.919" stop-color="#dd950c"/><stop offset="0.939" stop-color="#e49d0d"/><stop offset="0.969" stop-color="#f3b412"/><stop offset="0.988" stop-color="#fac515"/><stop offset="0.998" stop-color="#fac715"/></linearGradient><linearGradient id="c269" gradientUnits="userSpaceOnUse" x1="900.5" x2="1099.6"><stop offset="0.002" stop-color="#f0ae10"/><stop offset="0.012" stop-color="#eda90f"/><stop offset="0.022" stop-color="#e49d0d"/><stop offset="0.037" stop-color="#cf880a"/><stop offset="0.062" stop-color="#a56605"/><stop offset="0.076" stop-color="#905804"/><stop offset="0.086" stop-color="#895303"/><stop offset="0.166" stop-color="#855003"/><stop offset="0.375" stop-color="#814e03"/><stop offset="0.390" stop-color="#834f03"/><stop offset="0.445" stop-color="#a06305"/><stop offset="0.485" stop-color="#ad6c06"/><stop offset="0.704" stop-color="#ca8309"/><stop offset="0.919" stop-color="#dc950c"/><stop offset="0.943" stop-color="#e6a00e"/><stop offset="0.973" stop-color="#f5b912"/><stop offset="0.988" stop-color="#f9c515"/><stop offset="0.998" stop-color="#fac715"/></linearGradient><linearGradient id="c270" gradientUnits="userSpaceOnUse" x1="901.1" x2="1099.0"><stop offset="0.002" stop-color="#f0ae10"/><stop offset="0.012" stop-color="#eda90f"/><stop offset="0.022" stop-color="#e49d0d"/><stop offset="0.037" stop-color="#cf880a"/><stop offset="0.067" stop-color="#9d6105"/><stop offset="0.082" stop-color="#8c5504"/><stop offset="0.092" stop-color="#875203"/><stop offset="0.374" stop-color="#814e03"/><stop offset="0.389" stop-color="#834f03"/><stop offset="0.450" stop-color="#a26405"/><stop offset="0.485" stop-color="#ad6c06"/><stop offset="0.711" stop-color="#cb8409"/><stop offset="0.847" stop-color="#d8900b"/><stop offset="0.913" stop-color="#db930c"/><stop offset="0.938" stop-color="#e39c0d"/><stop offset="0.968" stop-color="#f3b411"/><stop offset="0.988" stop-color="#f9c415"/><stop offset="0.998" stop-color="#fac615"/></linearGradient><linearGradient id="c271" gradientUnits="userSpaceOnUse" x1="901.6" x2="1098.5"><stop offset="0.002" stop-color="#f0ae10"/><stop offset="0.012" stop-color="#edaa10"/><stop offset="0.022" stop-color="#e49d0d"/><stop offset="0.037" stop-color="#d0880a"/><stop offset="0.068" stop-color="#9e6105"/><stop offset="0.083" stop-color="#8c5504"/><stop offset="0.093" stop-color="#885203"/><stop offset="0.371" stop-color="#814e03"/><stop offset="0.391" stop-color="#845003"/><stop offset="0.447" stop-color="#a16305"/><stop offset="0.487" stop-color="#ad6c06"/><stop offset="0.715" stop-color="#cb8409"/><stop offset="0.841" stop-color="#d8900b"/><stop offset="0.912" stop-color="#db930c"/><stop offset="0.938" stop-color="#e39c0d"/><stop offset="0.968" stop-color="#f3b411"/><stop offset="0.988" stop-color="#f9c415"/><stop offset="0.998" stop-color="#fac615"/></linearGradient><linearGradient id="c272" gradientUnits="userSpaceOnUse" x1="902.2" x2="1097.9"><stop offset="0.002" stop-color="#f0ae10"/><stop offset="0.012" stop-color="#edaa10"/><stop offset="0.022" stop-color="#e49d0d"/><stop offset="0.037" stop-color="#d0880a"/><stop offset="0.068" stop-color="#9f6205"/><stop offset="0.083" stop-color="#8d5604"/><stop offset="0.093" stop-color="#885203"/><stop offset="0.373" stop-color="#814e03"/><stop offset="0.388" stop-color="#834f03"/><stop offset="0.449" stop-color="#a26405"/><stop offset="0.485" stop-color="#ad6c06"/><stop offset="0.719" stop-color="#cc8409"/><stop offset="0.830" stop-color="#d68e0b"/><stop offset="0.912" stop-color="#da920b"/><stop offset="0.937" stop-color="#e39c0d"/><stop offset="0.968" stop-color="#f3b311"/><stop offset="0.988" stop-color="#f9c415"/><stop offset="0.998" stop-color="#fac615"/></linearGradient><linearGradient id="c273" gradientUnits="userSpaceOnUse" x1="902.8" x2="1097.3"><stop offset="0.002" stop-color="#f0ae10"/><stop offset="0.012" stop-color="#edaa10"/><stop offset="0.022" stop-color="#e49e0d"/><stop offset="0.038" stop-color="#d1890a"/><stop offset="0.068" stop-color="#9f6205"/><stop offset="0.084" stop-color="#8d5604"/><stop offset="0.094" stop-color="#885203"/><stop offset="0.370" stop-color="#814e03"/><stop offset="0.390" stop-color="#845003"/><stop offset="0.446" stop-color="#a16305"/><stop offset="0.487" stop-color="#ad6c06"/><stop offset="0.727" stop-color="#cc8509"/><stop offset="0.819" stop-color="#d58d0b"/><stop offset="0.911" stop-color="#da920b"/><stop offset="0.937" stop-color="#e39c0d"/><stop offset="0.968" stop-color="#f3b311"/><stop offset="0.988" stop-color="#f9c315"/><stop offset="0.998" stop-color="#fac515"/></linearGradient><linearGradient id="c274" gradientUnits="userSpaceOnUse" x1="903.4" x2="1096.7"><stop offset="0.002" stop-color="#f0ae10"/><stop offset="0.012" stop-color="#edaa10"/><stop offset="0.027" stop-color="#df970c"/><stop offset="0.069" stop-color="#a06305"/><stop offset="0.084" stop-color="#8e5604"/><stop offset="0.094" stop-color="#885203"/><stop offset="0.372" stop-color="#814e03"/><stop offset="0.387" stop-color="#834f03"/><stop offset="0.449" stop-color="#a26405"/><stop offset="0.485" stop-color="#ad6c06"/><stop offset="0.726" stop-color="#cc8509"/><stop offset="0.808" stop-color="#d48c0a"/><stop offset="0.911" stop-color="#d9910b"/><stop offset="0.937" stop-color="#e39b0d"/><stop offset="0.967" stop-color="#f2b311"/><stop offset="0.988" stop-color="#f9c314"/><stop offset="0.998" stop-color="#fac515"/></linearGradient><linearGradient id="c275" gradientUnits="userSpaceOnUse" x1="904.0" x2="1096.1"><stop offset="0.002" stop-color="#f0ae10"/><stop offset="0.012" stop-color="#edaa10"/><stop offset="0.028" stop-color="#df970c"/><stop offset="0.069" stop-color="#a16305"/><stop offset="0.084" stop-color="#8f5704"/><stop offset="0.095" stop-color="#885303"/><stop offset="0.368" stop-color="#814e03"/><stop offset="0.389" stop-color="#845003"/><stop offset="0.446" stop-color="#a16305"/><stop offset="0.487" stop-color="#ad6c06"/><stop offset="0.735" stop-color="#cd8609"/><stop offset="0.910" stop-color="#d9900b"/><stop offset="0.936" stop-color="#e29b0d"/><stop offset="0.983" stop-color="#f8bf14"/><stop offset="0.993" stop-color="#fac515"/><stop offset="0.998" stop-color="#f9c515"/></linearGradient><linearGradient id="c276" gradientUnits="userSpaceOnUse" x1="904.6" x2="1095.5"><stop offset="0.002" stop-color="#f0ae10"/><stop offset="0.012" stop-color="#edaa10"/><stop offset="0.028" stop-color="#df980c"/><stop offset="0.070" stop-color="#a16405"/><stop offset="0.085" stop-color="#8f5704"/><stop offset="0.096" stop-color="#885303"/><stop offset="0.367" stop-color="#814e03"/><stop offset="0.388" stop-color="#845003"/><stop offset="0.445" stop-color="#a16305"/><stop offset="0.487" stop-color="#ad6c06"/><stop offset="0.737" stop-color="#cd8609"/><stop offset="0.909" stop-color="#d8900b"/><stop offset="0.936" stop-color="#e29b0d"/><stop offset="0.972" stop-color="#f4b712"/><stop offset="0.988" stop-color="#f9c314"/><stop offset="0.998" stop-color="#f9c415"/></linearGradient><linearGradient id="c277" gradientUnits="userSpaceOnUse" x1="905.3" x2="1094.9"><stop offset="0.002" stop-color="#f0ae10"/><stop offset="0.012" stop-color="#edaa10"/><stop offset="0.028" stop-color="#df980c"/><stop offset="0.070" stop-color="#a26405"/><stop offset="0.086" stop-color="#905804"/><stop offset="0.096" stop-color="#895303"/><stop offset="0.191" stop-color="#845003"/><stop offset="0.369" stop-color="#814e03"/><stop offset="0.385" stop-color="#834f03"/><stop offset="0.448" stop-color="#a26405"/><stop offset="0.490" stop-color="#ae6d06"/><stop offset="0.746" stop-color="#ce8609"/><stop offset="0.909" stop-color="#d78f0b"/><stop offset="0.935" stop-color="#e29b0d"/><stop offset="0.972" stop-color="#f4b712"/><stop offset="0.988" stop-color="#f9c214"/><stop offset="0.998" stop-color="#f9c415"/></linearGradient><linearGradient id="c278" gradientUnits="userSpaceOnUse" x1="905.9" x2="1094.2"><stop offset="0.002" stop-color="#f0ae10"/><stop offset="0.012" stop-color="#edaa10"/><stop offset="0.028" stop-color="#e0980c"/><stop offset="0.044" stop-color="#cb8409"/><stop offset="0.070" stop-color="#a36505"/><stop offset="0.086" stop-color="#905804"/><stop offset="0.102" stop-color="#875203"/><stop offset="0.366" stop-color="#814e03"/><stop offset="0.387" stop-color="#845003"/><stop offset="0.445" stop-color="#a16305"/><stop offset="0.487" stop-color="#ad6c06"/><stop offset="0.740" stop-color="#cd8609"/><stop offset="0.903" stop-color="#d68e0b"/><stop offset="0.930" stop-color="#df970c"/><stop offset="0.982" stop-color="#f7bf14"/><stop offset="0.993" stop-color="#f9c415"/><stop offset="0.998" stop-color="#f9c415"/></linearGradient><linearGradient id="c279" gradientUnits="userSpaceOnUse" x1="906.6" x2="1093.5"><stop offset="0.002" stop-color="#f0ae10"/><stop offset="0.013" stop-color="#edaa10"/><stop offset="0.029" stop-color="#e0980c"/><stop offset="0.044" stop-color="#cb8409"/><stop offset="0.071" stop-color="#a46505"/><stop offset="0.087" stop-color="#915804"/><stop offset="0.103" stop-color="#875203"/><stop offset="0.364" stop-color="#814e03"/><stop offset="0.385" stop-color="#844f03"/><stop offset="0.444" stop-color="#a16305"/><stop offset="0.487" stop-color="#ad6c06"/><stop offset="0.716" stop-color="#ca8309"/><stop offset="0.902" stop-color="#d58d0b"/><stop offset="0.929" stop-color="#df970c"/><stop offset="0.982" stop-color="#f7be13"/><stop offset="0.993" stop-color="#f9c415"/><stop offset="0.998" stop-color="#f9c314"/></linearGradient><linearGradient id="c280" gradientUnits="userSpaceOnUse" x1="907.3" x2="1092.8"><stop offset="0.002" stop-color="#f0ae10"/><stop offset="0.013" stop-color="#edaa10"/><stop offset="0.029" stop-color="#e0990d"/><stop offset="0.045" stop-color="#cc8509"/><stop offset="0.072" stop-color="#a56605"/><stop offset="0.088" stop-color="#925904"/><stop offset="0.104" stop-color="#885203"/><stop offset="0.366" stop-color="#814e03"/><stop offset="0.382" stop-color="#834f03"/><stop offset="0.446" stop-color="#a26405"/><stop offset="0.489" stop-color="#ae6d06"/><stop offset="0.693" stop-color="#c88109"/><stop offset="0.902" stop-color="#d58d0b"/><stop offset="0.928" stop-color="#de970c"/><stop offset="0.982" stop-color="#f7be13"/><stop offset="0.993" stop-color="#f9c315"/><stop offset="0.998" stop-color="#f9c314"/></linearGradient><linearGradient id="c281" gradientUnits="userSpaceOnUse" x1="908.0" x2="1092.1"><stop offset="0.002" stop-color="#f0ae10"/><stop offset="0.013" stop-color="#edaa10"/><stop offset="0.029" stop-color="#e1990d"/><stop offset="0.045" stop-color="#cd8509"/><stop offset="0.072" stop-color="#a66705"/><stop offset="0.088" stop-color="#935a04"/><stop offset="0.104" stop-color="#885203"/><stop offset="0.363" stop-color="#814e03"/><stop offset="0.384" stop-color="#845003"/><stop offset="0.443" stop-color="#a16305"/><stop offset="0.487" stop-color="#ad6c06"/><stop offset="0.664" stop-color="#c57e08"/><stop offset="0.901" stop-color="#d48c0a"/><stop offset="0.933" stop-color="#e19a0d"/><stop offset="0.971" stop-color="#f4b612"/><stop offset="0.987" stop-color="#f8c114"/><stop offset="0.998" stop-color="#f9c314"/></linearGradient><linearGradient id="c282" gradientUnits="userSpaceOnUse" x1="908.7" x2="1091.4"><stop offset="0.002" stop-color="#f0ae10"/><stop offset="0.013" stop-color="#edaa10"/><stop offset="0.029" stop-color="#e1990d"/><stop offset="0.045" stop-color="#cd8609"/><stop offset="0.073" stop-color="#a66705"/><stop offset="0.089" stop-color="#935a04"/><stop offset="0.105" stop-color="#885303"/><stop offset="0.367" stop-color="#814e03"/><stop offset="0.383" stop-color="#844f03"/><stop offset="0.454" stop-color="#a56605"/><stop offset="0.486" stop-color="#ad6c06"/><stop offset="0.661" stop-color="#c37d08"/><stop offset="0.900" stop-color="#d48c0a"/><stop offset="0.933" stop-color="#e1990d"/><stop offset="0.971" stop-color="#f4b512"/><stop offset="0.987" stop-color="#f8c114"/><stop offset="0.998" stop-color="#f9c214"/></linearGradient><linearGradient id="c283" gradientUnits="userSpaceOnUse" x1="909.4" x2="1090.7"><stop offset="0.002" stop-color="#f0ae10"/><stop offset="0.013" stop-color="#eeaa10"/><stop offset="0.029" stop-color="#e19a0d"/><stop offset="0.046" stop-color="#ce8609"/><stop offset="0.073" stop-color="#a86805"/><stop offset="0.090" stop-color="#945b04"/><stop offset="0.106" stop-color="#895303"/><stop offset="0.172" stop-color="#855003"/><stop offset="0.369" stop-color="#814e03"/><stop offset="0.385" stop-color="#834f03"/><stop offset="0.445" stop-color="#a26405"/><stop offset="0.489" stop-color="#ae6d06"/><stop offset="0.675" stop-color="#c47e08"/><stop offset="0.894" stop-color="#d28a0a"/><stop offset="0.927" stop-color="#de960c"/><stop offset="0.960" stop-color="#efad10"/><stop offset="0.982" stop-color="#f7bd13"/><stop offset="0.993" stop-color="#f9c214"/><stop offset="0.998" stop-color="#f9c214"/></linearGradient><linearGradient id="c284" gradientUnits="userSpaceOnUse" x1="910.2" x2="1089.9"><stop offset="0.002" stop-color="#f0ae10"/><stop offset="0.013" stop-color="#eeaa10"/><stop offset="0.030" stop-color="#e19a0d"/><stop offset="0.046" stop-color="#ce870a"/><stop offset="0.079" stop-color="#a16405"/><stop offset="0.096" stop-color="#905804"/><stop offset="0.113" stop-color="#875203"/><stop offset="0.378" stop-color="#814e03"/><stop offset="0.395" stop-color="#845003"/><stop offset="0.456" stop-color="#a36505"/><stop offset="0.494" stop-color="#ae6d06"/><stop offset="0.677" stop-color="#c37d08"/><stop offset="0.893" stop-color="#d1890a"/><stop offset="0.926" stop-color="#dd950c"/><stop offset="0.959" stop-color="#efac10"/><stop offset="0.981" stop-color="#f7bd13"/><stop offset="0.993" stop-color="#f9c214"/><stop offset="0.998" stop-color="#f8c114"/></linearGradient><linearGradient id="c285" gradientUnits="userSpaceOnUse" x1="910.9" x2="1089.2"><stop offset="0.002" stop-color="#f0ae10"/><stop offset="0.013" stop-color="#eeab10"/><stop offset="0.030" stop-color="#e29a0d"/><stop offset="0.046" stop-color="#cf870a"/><stop offset="0.080" stop-color="#a36505"/><stop offset="0.097" stop-color="#915904"/><stop offset="0.113" stop-color="#885203"/><stop offset="0.380" stop-color="#814e03"/><stop offset="0.397" stop-color="#834f03"/><stop offset="0.458" stop-color="#a26405"/><stop offset="0.497" stop-color="#ad6c06"/><stop offset="0.675" stop-color="#c27c08"/><stop offset="0.892" stop-color="#d1890a"/><stop offset="0.926" stop-color="#dd950c"/><stop offset="0.970" stop-color="#f3b512"/><stop offset="0.987" stop-color="#f8c014"/><stop offset="0.998" stop-color="#f8c114"/></linearGradient><linearGradient id="c286" gradientUnits="userSpaceOnUse" x1="911.7" x2="1088.4"><stop offset="0.002" stop-color="#f0ae10"/><stop offset="0.013" stop-color="#eeab10"/><stop offset="0.030" stop-color="#e29a0d"/><stop offset="0.047" stop-color="#cf880a"/><stop offset="0.081" stop-color="#a36505"/><stop offset="0.098" stop-color="#925904"/><stop offset="0.115" stop-color="#885203"/><stop offset="0.385" stop-color="#814e03"/><stop offset="0.407" stop-color="#855003"/><stop offset="0.463" stop-color="#a16405"/><stop offset="0.508" stop-color="#ae6d06"/><stop offset="0.677" stop-color="#c17c08"/><stop offset="0.891" stop-color="#d0880a"/><stop offset="0.925" stop-color="#dd950c"/><stop offset="0.970" stop-color="#f3b512"/><stop offset="0.987" stop-color="#f8bf14"/><stop offset="0.998" stop-color="#f8c114"/></linearGradient><linearGradient id="c287" gradientUnits="userSpaceOnUse" x1="912.5" x2="1087.6"><stop offset="0.002" stop-color="#f0ae10"/><stop offset="0.013" stop-color="#eeab10"/><stop offset="0.030" stop-color="#e29b0d"/><stop offset="0.047" stop-color="#d0880a"/><stop offset="0.081" stop-color="#a56605"/><stop offset="0.098" stop-color="#935a04"/><stop offset="0.115" stop-color="#885303"/><stop offset="0.189" stop-color="#855003"/><stop offset="0.392" stop-color="#814e03"/><stop offset="0.409" stop-color="#834f03"/><stop offset="0.472" stop-color="#a26405"/><stop offset="0.511" stop-color="#ad6c06"/><stop offset="0.675" stop-color="#c07b08"/><stop offset="0.890" stop-color="#cf880a"/><stop offset="0.924" stop-color="#dd950c"/><stop offset="0.970" stop-color="#f3b412"/><stop offset="0.987" stop-color="#f8bf14"/><stop offset="0.998" stop-color="#f8c014"/></linearGradient><linearGradient id="c288" gradientUnits="userSpaceOnUse" x1="913.4" x2="1086.8"><stop offset="0.002" stop-color="#f0ae10"/><stop offset="0.013" stop-color="#eeab10"/><stop offset="0.031" stop-color="#e29b0d"/><stop offset="0.048" stop-color="#d1890a"/><stop offset="0.088" stop-color="#9f6205"/><stop offset="0.105" stop-color="#8f5704"/><stop offset="0.122" stop-color="#875203"/><stop offset="0.397" stop-color="#814e03"/><stop offset="0.420" stop-color="#855003"/><stop offset="0.477" stop-color="#a16305"/><stop offset="0.523" stop-color="#ae6c06"/><stop offset="0.683" stop-color="#c07a08"/><stop offset="0.889" stop-color="#cf870a"/><stop offset="0.924" stop-color="#dc950c"/><stop offset="0.969" stop-color="#f3b411"/><stop offset="0.987" stop-color="#f8bf14"/><stop offset="0.998" stop-color="#f8c014"/></linearGradient><linearGradient id="c289" gradientUnits="userSpaceOnUse" x1="914.2" x2="1085.9"><stop offset="0.002" stop-color="#f0ae10"/><stop offset="0.014" stop-color="#eeab10"/><stop offset="0.031" stop-color="#e39b0d"/><stop offset="0.048" stop-color="#d1890a"/><stop offset="0.089" stop-color="#a06305"/><stop offset="0.106" stop-color="#905804"/><stop offset="0.124" stop-color="#875203"/><stop offset="0.407" stop-color="#824e03"/><stop offset="0.425" stop-color="#845003"/><stop offset="0.483" stop-color="#a06305"/><stop offset="0.529" stop-color="#ad6c06"/><stop offset="0.685" stop-color="#bf7a08"/><stop offset="0.882" stop-color="#cd8509"/><stop offset="0.923" stop-color="#dc940c"/><stop offset="0.969" stop-color="#f3b411"/><stop offset="0.986" stop-color="#f7be13"/><stop offset="0.998" stop-color="#f8bf14"/></linearGradient><linearGradient id="c290" gradientUnits="userSpaceOnUse" x1="915.1" x2="1085.0"><stop offset="0.002" stop-color="#f0ae10"/><stop offset="0.014" stop-color="#eeab10"/><stop offset="0.031" stop-color="#e39c0d"/><stop offset="0.049" stop-color="#d28a0a"/><stop offset="0.090" stop-color="#a16405"/><stop offset="0.108" stop-color="#915804"/><stop offset="0.125" stop-color="#885203"/><stop offset="0.412" stop-color="#824e03"/><stop offset="0.430" stop-color="#844f03"/><stop offset="0.494" stop-color="#a26405"/><stop offset="0.535" stop-color="#ad6c06"/><stop offset="0.687" stop-color="#be7908"/><stop offset="0.881" stop-color="#cc8409"/><stop offset="0.916" stop-color="#d9910b"/><stop offset="0.969" stop-color="#f3b311"/><stop offset="0.986" stop-color="#f7be13"/><stop offset="0.998" stop-color="#f8bf14"/></linearGradient><linearGradient id="c291" gradientUnits="userSpaceOnUse" x1="916.0" x2="1084.2"><stop offset="0.002" stop-color="#f0ae10"/><stop offset="0.014" stop-color="#eeab10"/><stop offset="0.032" stop-color="#e39c0d"/><stop offset="0.049" stop-color="#d28b0a"/><stop offset="0.090" stop-color="#a36505"/><stop offset="0.114" stop-color="#8e5704"/><stop offset="0.132" stop-color="#875203"/><stop offset="0.420" stop-color="#824e03"/><stop offset="0.438" stop-color="#845003"/><stop offset="0.497" stop-color="#9f6205"/><stop offset="0.544" stop-color="#ad6c06"/><stop offset="0.686" stop-color="#bd7807"/><stop offset="0.880" stop-color="#cb8409"/><stop offset="0.915" stop-color="#d9910b"/><stop offset="0.963" stop-color="#f0af11"/><stop offset="0.986" stop-color="#f7be13"/><stop offset="0.998" stop-color="#f7bf14"/></linearGradient><linearGradient id="c292" gradientUnits="userSpaceOnUse" x1="916.9" x2="1083.3"><stop offset="0.002" stop-color="#f0ae10"/><stop offset="0.014" stop-color="#eeab10"/><stop offset="0.032" stop-color="#e39c0d"/><stop offset="0.050" stop-color="#d38b0a"/><stop offset="0.092" stop-color="#a46605"/><stop offset="0.115" stop-color="#8f5704"/><stop offset="0.133" stop-color="#875203"/><stop offset="0.425" stop-color="#824e03"/><stop offset="0.443" stop-color="#844f03"/><stop offset="0.509" stop-color="#a16305"/><stop offset="0.557" stop-color="#ad6c06"/><stop offset="0.688" stop-color="#bc7707"/><stop offset="0.879" stop-color="#ca8309"/><stop offset="0.914" stop-color="#d9910b"/><stop offset="0.962" stop-color="#f0af10"/><stop offset="0.986" stop-color="#f7bd13"/><stop offset="0.998" stop-color="#f7be13"/></linearGradient><linearGradient id="c293" gradientUnits="userSpaceOnUse" x1="917.8" x2="1082.3"><stop offset="0.002" stop-color="#f0ae10"/><stop offset="0.014" stop-color="#eeab10"/><stop offset="0.032" stop-color="#e49d0d"/><stop offset="0.050" stop-color="#d48c0a"/><stop offset="0.093" stop-color="#a56705"/><stop offset="0.117" stop-color="#905804"/><stop offset="0.135" stop-color="#885203"/><stop offset="0.431" stop-color="#824e03"/><stop offset="0.455" stop-color="#855003"/><stop offset="0.515" stop-color="#a06305"/><stop offset="0.563" stop-color="#ad6c06"/><stop offset="0.696" stop-color="#bb7707"/><stop offset="0.871" stop-color="#c88109"/><stop offset="0.913" stop-color="#d8900b"/><stop offset="0.962" stop-color="#f0af10"/><stop offset="0.986" stop-color="#f7bd13"/><stop offset="0.998" stop-color="#f7be13"/></linearGradient><linearGradient id="c294" gradientUnits="userSpaceOnUse" x1="918.7" x2="1081.4"><stop offset="0.002" stop-color="#f0ae10"/><stop offset="0.014" stop-color="#eeab10"/><stop offset="0.033" stop-color="#e49d0d"/><stop offset="0.057" stop-color="#ce870a"/><stop offset="0.094" stop-color="#a76805"/><stop offset="0.118" stop-color="#925904"/><stop offset="0.137" stop-color="#885303"/><stop offset="0.210" stop-color="#855003"/><stop offset="0.442" stop-color="#824e03"/><stop offset="0.460" stop-color="#845003"/><stop offset="0.527" stop-color="#a16305"/><stop offset="0.570" stop-color="#ac6c06"/><stop offset="0.692" stop-color="#ba7607"/><stop offset="0.870" stop-color="#c78109"/><stop offset="0.912" stop-color="#d8900b"/><stop offset="0.961" stop-color="#f0ae10"/><stop offset="0.986" stop-color="#f7bd13"/><stop offset="0.998" stop-color="#f7bd13"/></linearGradient><linearGradient id="c295" gradientUnits="userSpaceOnUse" x1="919.7" x2="1080.4"><stop offset="0.002" stop-color="#f0ae10"/><stop offset="0.015" stop-color="#eeab10"/><stop offset="0.033" stop-color="#e49e0d"/><stop offset="0.058" stop-color="#cf870a"/><stop offset="0.101" stop-color="#a26405"/><stop offset="0.126" stop-color="#8f5704"/><stop offset="0.144" stop-color="#875203"/><stop offset="0.447" stop-color="#824e03"/><stop offset="0.472" stop-color="#855103"/><stop offset="0.534" stop-color="#a06305"/><stop offset="0.583" stop-color="#ad6c06"/><stop offset="0.868" stop-color="#c78009"/><stop offset="0.911" stop-color="#d8900b"/><stop offset="0.961" stop-color="#f0ae10"/><stop offset="0.985" stop-color="#f7bc13"/><stop offset="0.998" stop-color="#f7bd13"/></linearGradient><linearGradient id="c296" gradientUnits="userSpaceOnUse" x1="920.7" x2="1079.4"><stop offset="0.002" stop-color="#f0ae10"/><stop offset="0.015" stop-color="#eeac10"/><stop offset="0.040" stop-color="#e0990d"/><stop offset="0.102" stop-color="#a46505"/><stop offset="0.127" stop-color="#905804"/><stop offset="0.146" stop-color="#885203"/><stop offset="0.453" stop-color="#824f03"/><stop offset="0.478" stop-color="#845003"/><stop offset="0.541" stop-color="#9f6205"/><stop offset="0.591" stop-color="#ac6c06"/><stop offset="0.866" stop-color="#c67f08"/><stop offset="0.910" stop-color="#d8900b"/><stop offset="0.960" stop-color="#f0ae10"/><stop offset="0.985" stop-color="#f6bc13"/><stop offset="0.998" stop-color="#f7bc13"/></linearGradient><linearGradient id="c297" gradientUnits="userSpaceOnUse" x1="921.7" x2="1078.4"><stop offset="0.002" stop-color="#f0ae10"/><stop offset="0.015" stop-color="#eeac10"/><stop offset="0.034" stop-color="#e59e0e"/><stop offset="0.059" stop-color="#d1890a"/><stop offset="0.104" stop-color="#a56605"/><stop offset="0.129" stop-color="#915904"/><stop offset="0.154" stop-color="#875203"/><stop offset="0.465" stop-color="#824f03"/><stop offset="0.490" stop-color="#865103"/><stop offset="0.554" stop-color="#9f6205"/><stop offset="0.605" stop-color="#ad6c06"/><stop offset="0.858" stop-color="#c47e08"/><stop offset="0.903" stop-color="#d48c0a"/><stop offset="0.960" stop-color="#f0ae10"/><stop offset="0.985" stop-color="#f6bb13"/><stop offset="0.998" stop-color="#f6bc13"/></linearGradient><linearGradient id="c298" gradientUnits="userSpaceOnUse" x1="922.8" x2="1077.3"><stop offset="0.002" stop-color="#f0ae10"/><stop offset="0.015" stop-color="#eeac10"/><stop offset="0.041" stop-color="#e19a0d"/><stop offset="0.086" stop-color="#b97507"/><stop offset="0.111" stop-color="#a16405"/><stop offset="0.137" stop-color="#8f5704"/><stop offset="0.156" stop-color="#885203"/><stop offset="0.471" stop-color="#824f03"/><stop offset="0.497" stop-color="#855003"/><stop offset="0.567" stop-color="#a06305"/><stop offset="0.619" stop-color="#ad6c06"/><stop offset="0.856" stop-color="#c37d08"/><stop offset="0.901" stop-color="#d48c0a"/><stop offset="0.959" stop-color="#efae10"/><stop offset="0.985" stop-color="#f6bb13"/><stop offset="0.998" stop-color="#f6bb13"/></linearGradient><linearGradient id="c299" gradientUnits="userSpaceOnUse" x1="923.8" x2="1076.3"><stop offset="0.002" stop-color="#f0ae10"/><stop offset="0.015" stop-color="#eeac10"/><stop offset="0.041" stop-color="#e19a0d"/><stop offset="0.113" stop-color="#a36505"/><stop offset="0.139" stop-color="#915804"/><stop offset="0.165" stop-color="#875203"/><stop offset="0.484" stop-color="#834f03"/><stop offset="0.510" stop-color="#865103"/><stop offset="0.575" stop-color="#9f6205"/><stop offset="0.627" stop-color="#ac6b06"/><stop offset="0.829" stop-color="#bd7907"/><stop offset="0.855" stop-color="#c27c08"/><stop offset="0.900" stop-color="#d48c0a"/><stop offset="0.959" stop-color="#efad10"/><stop offset="0.985" stop-color="#f6bb13"/><stop offset="0.998" stop-color="#f6bb13"/></linearGradient><linearGradient id="c300" gradientUnits="userSpaceOnUse" x1="925.0" x2="1075.2"><stop offset="0.002" stop-color="#f0ae10"/><stop offset="0.016" stop-color="#eeac10"/><stop offset="0.042" stop-color="#e29b0d"/><stop offset="0.068" stop-color="#ce8609"/><stop offset="0.114" stop-color="#a56605"/><stop offset="0.141" stop-color="#925904"/><stop offset="0.167" stop-color="#885203"/><stop offset="0.490" stop-color="#834f03"/><stop offset="0.516" stop-color="#855003"/><stop offset="0.589" stop-color="#9f6205"/><stop offset="0.642" stop-color="#ac6b06"/><stop offset="0.846" stop-color="#c07a08"/><stop offset="0.892" stop-color="#d1890a"/><stop offset="0.958" stop-color="#efad10"/><stop offset="0.984" stop-color="#f6ba13"/><stop offset="0.998" stop-color="#f6ba13"/></linearGradient><linearGradient id="c301" gradientUnits="userSpaceOnUse" x1="926.1" x2="1074.0"><stop offset="0.002" stop-color="#f0ae10"/><stop offset="0.016" stop-color="#efac10"/><stop offset="0.043" stop-color="#e29b0d"/><stop offset="0.090" stop-color="#bd7807"/><stop offset="0.123" stop-color="#a16405"/><stop offset="0.150" stop-color="#905804"/><stop offset="0.177" stop-color="#875203"/><stop offset="0.507" stop-color="#834f03"/><stop offset="0.534" stop-color="#865103"/><stop offset="0.601" stop-color="#9f6205"/><stop offset="0.655" stop-color="#ac6b06"/><stop offset="0.816" stop-color="#ba7607"/><stop offset="0.843" stop-color="#bf7a08"/><stop offset="0.890" stop-color="#d1890a"/><stop offset="0.951" stop-color="#eda90f"/><stop offset="0.984" stop-color="#f6ba13"/><stop offset="0.998" stop-color="#f6ba13"/></linearGradient><linearGradient id="c302" gradientUnits="userSpaceOnUse" x1="927.3" x2="1072.8"><stop offset="0.002" stop-color="#f0ae10"/><stop offset="0.016" stop-color="#efac10"/><stop offset="0.043" stop-color="#e39c0d"/><stop offset="0.091" stop-color="#bf7a08"/><stop offset="0.125" stop-color="#a36505"/><stop offset="0.152" stop-color="#925904"/><stop offset="0.180" stop-color="#885203"/><stop offset="0.255" stop-color="#855003"/><stop offset="0.514" stop-color="#834f03"/><stop offset="0.541" stop-color="#855003"/><stop offset="0.616" stop-color="#9f6205"/><stop offset="0.664" stop-color="#aa6a06"/><stop offset="0.807" stop-color="#b87407"/><stop offset="0.841" stop-color="#be7908"/><stop offset="0.889" stop-color="#d1890a"/><stop offset="0.950" stop-color="#eda90f"/><stop offset="0.984" stop-color="#f5b912"/><stop offset="0.998" stop-color="#f5b912"/></linearGradient><linearGradient id="c303" gradientUnits="userSpaceOnUse" x1="928.5" x2="1071.7"><stop offset="0.002" stop-color="#f0ae10"/><stop offset="0.016" stop-color="#efac10"/><stop offset="0.044" stop-color="#e39c0d"/><stop offset="0.072" stop-color="#d1890a"/><stop offset="0.127" stop-color="#a66705"/><stop offset="0.161" stop-color="#915804"/><stop offset="0.189" stop-color="#885203"/><stop offset="0.528" stop-color="#834f03"/><stop offset="0.555" stop-color="#855103"/><stop offset="0.631" stop-color="#9f6205"/><stop offset="0.680" stop-color="#aa6a06"/><stop offset="0.804" stop-color="#b67307"/><stop offset="0.839" stop-color="#be7907"/><stop offset="0.887" stop-color="#d1890a"/><stop offset="0.949" stop-color="#eda90f"/><stop offset="0.977" stop-color="#f4b612"/><stop offset="0.998" stop-color="#f5b912"/></linearGradient><linearGradient id="c304" gradientUnits="userSpaceOnUse" x1="929.7" x2="1070.4"><stop offset="0.002" stop-color="#f0ae10"/><stop offset="0.017" stop-color="#efac10"/><stop offset="0.045" stop-color="#e49d0d"/><stop offset="0.073" stop-color="#d28a0a"/><stop offset="0.130" stop-color="#a86805"/><stop offset="0.165" stop-color="#935a04"/><stop offset="0.193" stop-color="#895303"/><stop offset="0.242" stop-color="#855103"/><stop offset="0.539" stop-color="#834f03"/><stop offset="0.574" stop-color="#875203"/><stop offset="0.638" stop-color="#9c6005"/><stop offset="0.687" stop-color="#a86805"/><stop offset="0.793" stop-color="#b47106"/><stop offset="0.828" stop-color="#bb7607"/><stop offset="0.885" stop-color="#d1890a"/><stop offset="0.948" stop-color="#eca90f"/><stop offset="0.983" stop-color="#f5b812"/><stop offset="0.998" stop-color="#f5b812"/></linearGradient><linearGradient id="c305" gradientUnits="userSpaceOnUse" x1="931.0" x2="1069.2"><stop offset="0.003" stop-color="#f0ae10"/><stop offset="0.017" stop-color="#efac10"/><stop offset="0.045" stop-color="#e49d0d"/><stop offset="0.074" stop-color="#d38b0a"/><stop offset="0.139" stop-color="#a56705"/><stop offset="0.174" stop-color="#925904"/><stop offset="0.203" stop-color="#895303"/><stop offset="0.253" stop-color="#855103"/><stop offset="0.554" stop-color="#845003"/><stop offset="0.589" stop-color="#875203"/><stop offset="0.697" stop-color="#a66705"/><stop offset="0.790" stop-color="#b27006"/><stop offset="0.826" stop-color="#ba7607"/><stop offset="0.883" stop-color="#d1890a"/><stop offset="0.947" stop-color="#eca90f"/><stop offset="0.983" stop-color="#f5b812"/><stop offset="0.997" stop-color="#f4b712"/></linearGradient><linearGradient id="c306" gradientUnits="userSpaceOnUse" x1="932.3" x2="1067.8"><stop offset="0.003" stop-color="#f0ae10"/><stop offset="0.017" stop-color="#efac10"/><stop offset="0.046" stop-color="#e59e0d"/><stop offset="0.076" stop-color="#d48c0a"/><stop offset="0.142" stop-color="#a86805"/><stop offset="0.178" stop-color="#945a04"/><stop offset="0.215" stop-color="#885303"/><stop offset="0.266" stop-color="#855103"/><stop offset="0.566" stop-color="#845003"/><stop offset="0.602" stop-color="#865103"/><stop offset="0.698" stop-color="#a16405"/><stop offset="0.822" stop-color="#ba7607"/><stop offset="0.873" stop-color="#ce8609"/><stop offset="0.946" stop-color="#eca80f"/><stop offset="0.983" stop-color="#f4b712"/><stop offset="0.997" stop-color="#f4b612"/></linearGradient><linearGradient id="c307" gradientUnits="userSpaceOnUse" x1="933.6" x2="1066.5"><stop offset="0.003" stop-color="#f0ae10"/><stop offset="0.025" stop-color="#edaa10"/><stop offset="0.055" stop-color="#e29a0d"/><stop offset="0.115" stop-color="#bd7807"/><stop offset="0.152" stop-color="#a56705"/><stop offset="0.190" stop-color="#935a04"/><stop offset="0.227" stop-color="#885303"/><stop offset="0.272" stop-color="#855103"/><stop offset="0.571" stop-color="#845003"/><stop offset="0.623" stop-color="#875203"/><stop offset="0.698" stop-color="#9c6005"/><stop offset="0.803" stop-color="#b47107"/><stop offset="0.870" stop-color="#ce8609"/><stop offset="0.945" stop-color="#eca80f"/><stop offset="0.982" stop-color="#f4b612"/><stop offset="0.997" stop-color="#f3b411"/></linearGradient><linearGradient id="c308" gradientUnits="userSpaceOnUse" x1="935.0" x2="1065.1"><stop offset="0.003" stop-color="#f0ae10"/><stop offset="0.025" stop-color="#edaa10"/><stop offset="0.056" stop-color="#e29b0d"/><stop offset="0.155" stop-color="#a96906"/><stop offset="0.193" stop-color="#965c04"/><stop offset="0.230" stop-color="#8a5403"/><stop offset="0.276" stop-color="#855103"/><stop offset="0.549" stop-color="#845003"/><stop offset="0.640" stop-color="#875203"/><stop offset="0.770" stop-color="#a86905"/><stop offset="0.845" stop-color="#c47e08"/><stop offset="0.937" stop-color="#eaa40f"/><stop offset="0.975" stop-color="#f3b411"/><stop offset="0.997" stop-color="#f2b211"/></linearGradient><linearGradient id="c309" gradientUnits="userSpaceOnUse" x1="936.4" x2="1063.7"><stop offset="0.003" stop-color="#f0ae10"/><stop offset="0.026" stop-color="#eeaa10"/><stop offset="0.057" stop-color="#e39c0d"/><stop offset="0.158" stop-color="#ab6b06"/><stop offset="0.205" stop-color="#965c04"/><stop offset="0.244" stop-color="#8b5403"/><stop offset="0.298" stop-color="#855103"/><stop offset="0.539" stop-color="#845003"/><stop offset="0.663" stop-color="#875203"/><stop offset="0.733" stop-color="#995e04"/><stop offset="0.826" stop-color="#bc7707"/><stop offset="0.927" stop-color="#e7a00e"/><stop offset="0.974" stop-color="#f2b211"/><stop offset="0.997" stop-color="#f1b111"/></linearGradient><linearGradient id="c310" gradientUnits="userSpaceOnUse" x1="937.9" x2="1062.2"><stop offset="0.003" stop-color="#f0ae10"/><stop offset="0.027" stop-color="#eeab10"/><stop offset="0.059" stop-color="#e49d0d"/><stop offset="0.122" stop-color="#c47e08"/><stop offset="0.170" stop-color="#aa6a06"/><stop offset="0.218" stop-color="#965c04"/><stop offset="0.257" stop-color="#8c5504"/><stop offset="0.313" stop-color="#865103"/><stop offset="0.520" stop-color="#855003"/><stop offset="0.687" stop-color="#885203"/><stop offset="0.735" stop-color="#965c04"/><stop offset="0.798" stop-color="#af6e06"/><stop offset="0.926" stop-color="#e69f0e"/><stop offset="0.973" stop-color="#f1b111"/><stop offset="0.997" stop-color="#f0af11"/></linearGradient><linearGradient id="c311" gradientUnits="userSpaceOnUse" x1="939.5" x2="1060.6"><stop offset="0.003" stop-color="#f0ae10"/><stop offset="0.027" stop-color="#eeab10"/><stop offset="0.060" stop-color="#e49e0d"/><stop offset="0.174" stop-color="#ae6d06"/><stop offset="0.223" stop-color="#9a5e04"/><stop offset="0.264" stop-color="#8e5704"/><stop offset="0.337" stop-color="#865103"/><stop offset="0.500" stop-color="#855003"/><stop offset="0.655" stop-color="#865103"/><stop offset="0.712" stop-color="#8c5504"/><stop offset="0.802" stop-color="#b06e06"/><stop offset="0.916" stop-color="#e29b0d"/><stop offset="0.973" stop-color="#f0af11"/><stop offset="0.997" stop-color="#f0ae10"/></linearGradient><linearGradient id="c312" gradientUnits="userSpaceOnUse" x1="941.1" x2="1059.0"><stop offset="0.003" stop-color="#f0ae10"/><stop offset="0.028" stop-color="#eeab10"/><stop offset="0.062" stop-color="#e59e0d"/><stop offset="0.180" stop-color="#b06f06"/><stop offset="0.230" stop-color="#9d6105"/><stop offset="0.273" stop-color="#915904"/><stop offset="0.357" stop-color="#875203"/><stop offset="0.500" stop-color="#855103"/><stop offset="0.643" stop-color="#875203"/><stop offset="0.719" stop-color="#905804"/><stop offset="0.753" stop-color="#995e04"/><stop offset="0.795" stop-color="#ac6b06"/><stop offset="0.913" stop-color="#e1990d"/><stop offset="0.963" stop-color="#eeab10"/><stop offset="0.997" stop-color="#f0ae10"/></linearGradient><linearGradient id="c313" gradientUnits="userSpaceOnUse" x1="942.7" x2="1057.4"><stop offset="0.003" stop-color="#f0ae10"/><stop offset="0.029" stop-color="#eeab10"/><stop offset="0.064" stop-color="#e69f0e"/><stop offset="0.185" stop-color="#b47107"/><stop offset="0.236" stop-color="#a16405"/><stop offset="0.280" stop-color="#955b04"/><stop offset="0.366" stop-color="#895303"/><stop offset="0.496" stop-color="#865103"/><stop offset="0.625" stop-color="#895303"/><stop offset="0.712" stop-color="#945a04"/><stop offset="0.755" stop-color="#9f6205"/><stop offset="0.798" stop-color="#af6d06"/><stop offset="0.876" stop-color="#d28a0a"/><stop offset="0.919" stop-color="#e29b0d"/><stop offset="0.962" stop-color="#edaa10"/><stop offset="0.997" stop-color="#f0ae10"/></linearGradient><linearGradient id="c314" gradientUnits="userSpaceOnUse" x1="944.5" x2="1055.7"><stop offset="0.003" stop-color="#f0ae10"/><stop offset="0.030" stop-color="#eeac10"/><stop offset="0.074" stop-color="#e49d0d"/><stop offset="0.172" stop-color="#bf7a08"/><stop offset="0.260" stop-color="#a16305"/><stop offset="0.314" stop-color="#955b04"/><stop offset="0.367" stop-color="#8e5604"/><stop offset="0.500" stop-color="#885303"/><stop offset="0.633" stop-color="#8e5604"/><stop offset="0.686" stop-color="#955b04"/><stop offset="0.740" stop-color="#a16305"/><stop offset="0.819" stop-color="#bc7707"/><stop offset="0.917" stop-color="#e19a0d"/><stop offset="0.970" stop-color="#eeac10"/><stop offset="0.997" stop-color="#f0ae10"/></linearGradient><linearGradient id="c315" gradientUnits="userSpaceOnUse" x1="946.3" x2="1053.9"><stop offset="0.003" stop-color="#f0ae10"/><stop offset="0.031" stop-color="#eeac10"/><stop offset="0.077" stop-color="#e49e0d"/><stop offset="0.178" stop-color="#c27c08"/><stop offset="0.270" stop-color="#a56705"/><stop offset="0.371" stop-color="#935a04"/><stop offset="0.500" stop-color="#8d5604"/><stop offset="0.629" stop-color="#935a04"/><stop offset="0.730" stop-color="#a56705"/><stop offset="0.822" stop-color="#c27c08"/><stop offset="0.923" stop-color="#e49e0d"/><stop offset="0.969" stop-color="#eeac10"/><stop offset="0.997" stop-color="#f0ae10"/></linearGradient><linearGradient id="c316" gradientUnits="userSpaceOnUse" x1="948.1" x2="1052.0"><stop offset="0.003" stop-color="#f0ae10"/><stop offset="0.032" stop-color="#efac10"/><stop offset="0.080" stop-color="#e59f0e"/><stop offset="0.185" stop-color="#c57f08"/><stop offset="0.280" stop-color="#aa6a06"/><stop offset="0.385" stop-color="#995e04"/><stop offset="0.500" stop-color="#945a04"/><stop offset="0.615" stop-color="#995e04"/><stop offset="0.720" stop-color="#ab6a06"/><stop offset="0.815" stop-color="#c57f08"/><stop offset="0.920" stop-color="#e59f0e"/><stop offset="0.968" stop-color="#efac10"/><stop offset="0.997" stop-color="#f0ae10"/></linearGradient><linearGradient id="c317" gradientUnits="userSpaceOnUse" x1="950.1" x2="1050.0"><stop offset="0.004" stop-color="#f0ae10"/><stop offset="0.033" stop-color="#efac10"/><stop offset="0.083" stop-color="#e6a00e"/><stop offset="0.192" stop-color="#c98209"/><stop offset="0.282" stop-color="#b27006"/><stop offset="0.391" stop-color="#a16405"/><stop offset="0.500" stop-color="#9c6005"/><stop offset="0.609" stop-color="#a16405"/><stop offset="0.718" stop-color="#b27006"/><stop offset="0.808" stop-color="#c98209"/><stop offset="0.917" stop-color="#e6a00e"/><stop offset="0.967" stop-color="#efac10"/><stop offset="0.996" stop-color="#f0ae10"/></linearGradient><linearGradient id="c318" gradientUnits="userSpaceOnUse" x1="952.2" x2="1047.9"><stop offset="0.004" stop-color="#f0ae10"/><stop offset="0.035" stop-color="#efac10"/><stop offset="0.086" stop-color="#e7a10e"/><stop offset="0.200" stop-color="#cd8509"/><stop offset="0.293" stop-color="#b87407"/><stop offset="0.397" stop-color="#aa6a06"/><stop offset="0.500" stop-color="#a56605"/><stop offset="0.603" stop-color="#aa6a06"/><stop offset="0.707" stop-color="#b87407"/><stop offset="0.800" stop-color="#cc8509"/><stop offset="0.914" stop-color="#e7a10e"/><stop offset="0.965" stop-color="#efac10"/><stop offset="0.996" stop-color="#f0ae10"/></linearGradient><linearGradient id="c319" gradientUnits="userSpaceOnUse" x1="954.4" x2="1045.7"><stop offset="0.004" stop-color="#f0ae10"/><stop offset="0.036" stop-color="#efad10"/><stop offset="0.090" stop-color="#e8a20e"/><stop offset="0.198" stop-color="#d38b0a"/><stop offset="0.295" stop-color="#c07b08"/><stop offset="0.403" stop-color="#b37006"/><stop offset="0.500" stop-color="#af6d06"/><stop offset="0.597" stop-color="#b37006"/><stop offset="0.705" stop-color="#c07b08"/><stop offset="0.802" stop-color="#d38b0a"/><stop offset="0.910" stop-color="#e8a20e"/><stop offset="0.964" stop-color="#efad10"/><stop offset="0.996" stop-color="#f0ae10"/></linearGradient><linearGradient id="c320" gradientUnits="userSpaceOnUse" x1="956.7" x2="1043.4"><stop offset="0.004" stop-color="#f0ae10"/><stop offset="0.038" stop-color="#efad10"/><stop offset="0.084" stop-color="#eaa60f"/><stop offset="0.209" stop-color="#d68e0b"/><stop offset="0.300" stop-color="#c78109"/><stop offset="0.403" stop-color="#bc7807"/><stop offset="0.494" stop-color="#b97507"/><stop offset="0.586" stop-color="#bc7707"/><stop offset="0.688" stop-color="#c67f08"/><stop offset="0.791" stop-color="#d68e0b"/><stop offset="0.916" stop-color="#eaa60f"/><stop offset="0.962" stop-color="#efad10"/><stop offset="0.996" stop-color="#f0ae10"/></linearGradient><linearGradient id="c321" gradientUnits="userSpaceOnUse" x1="959.2" x2="1040.9"><stop offset="0.004" stop-color="#f0ae10"/><stop offset="0.041" stop-color="#efad10"/><stop offset="0.089" stop-color="#eba70f"/><stop offset="0.222" stop-color="#d9910b"/><stop offset="0.319" stop-color="#cd8609"/><stop offset="0.415" stop-color="#c57f08"/><stop offset="0.500" stop-color="#c37d08"/><stop offset="0.585" stop-color="#c57f08"/><stop offset="0.681" stop-color="#cd8609"/><stop offset="0.778" stop-color="#d9910b"/><stop offset="0.911" stop-color="#eba70f"/><stop offset="0.959" stop-color="#efad10"/><stop offset="0.996" stop-color="#f0ae10"/></linearGradient><linearGradient id="c322" gradientUnits="userSpaceOnUse" x1="961.8" x2="1038.3"><stop offset="0.005" stop-color="#f0ae10"/><stop offset="0.069" stop-color="#eeab10"/><stop offset="0.313" stop-color="#d58d0b"/><stop offset="0.494" stop-color="#cd8509"/><stop offset="0.674" stop-color="#d48c0a"/><stop offset="0.905" stop-color="#eca80f"/><stop offset="0.995" stop-color="#f0ae10"/></linearGradient><linearGradient id="c323" gradientUnits="userSpaceOnUse" x1="964.7" x2="1035.4"><stop offset="0.005" stop-color="#f0ae10"/><stop offset="0.075" stop-color="#eeac10"/><stop offset="0.326" stop-color="#dc940c"/><stop offset="0.493" stop-color="#d68e0b"/><stop offset="0.674" stop-color="#dc940c"/><stop offset="0.925" stop-color="#eeac10"/><stop offset="0.995" stop-color="#f0ae10"/></linearGradient><linearGradient id="c324" gradientUnits="userSpaceOnUse" x1="967.9" x2="1032.2"><stop offset="0.005" stop-color="#f0ae10"/><stop offset="0.082" stop-color="#efac10"/><stop offset="0.340" stop-color="#e19a0d"/><stop offset="0.492" stop-color="#de960c"/><stop offset="0.660" stop-color="#e19a0d"/><stop offset="0.918" stop-color="#efac10"/><stop offset="0.995" stop-color="#f0ae10"/></linearGradient><linearGradient id="c325" gradientUnits="userSpaceOnUse" x1="971.5" x2="1028.6"><stop offset="0.006" stop-color="#f0ae10"/><stop offset="0.091" stop-color="#efad10"/><stop offset="0.347" stop-color="#e7a00e"/><stop offset="0.500" stop-color="#e59e0d"/><stop offset="0.653" stop-color="#e7a00e"/><stop offset="0.909" stop-color="#efad10"/><stop offset="0.994" stop-color="#f0ae10"/></linearGradient><linearGradient id="c326" gradientUnits="userSpaceOnUse" x1="975.6" x2="1024.5"><stop offset="0.007" stop-color="#f0ae10"/><stop offset="0.510" stop-color="#eaa50f"/><stop offset="0.993" stop-color="#f0ae10"/></linearGradient><linearGradient id="c327" gradientUnits="userSpaceOnUse" x1="980.6" x2="1019.5"><stop offset="0.009" stop-color="#f0ae10"/><stop offset="0.487" stop-color="#eeab10"/><stop offset="0.991" stop-color="#f0ae10"/></linearGradient><linearGradient id="c328" gradientUnits="userSpaceOnUse" x1="987.6" x2="1012.5"><stop offset="0.014" stop-color="#f0ae10"/><stop offset="0.986" stop-color="#f0ae10"/></linearGradient><linearGradient id="c329" gradientUnits="userSpaceOnUse" x1="991.9" x2="1008.2"><stop offset="0.021" stop-color="#f0ae10"/><stop offset="0.979" stop-color="#f0ae10"/></linearGradient></defs><g clip-path="url(#vpc)"><rect x="446" y="0" width="834" height="720" fill="#393939"/><g clip-path="url(#cap)"><rect x="990.1" y="116" width="20.3" height="1.5" fill="url(#c0)"/><rect x="980.8" y="117" width="38.9" height="1.5" fill="url(#c1)"/><rect x="974.8" y="118" width="50.9" height="1.5" fill="url(#c2)"/><rect x="970.0" y="119" width="60.3" height="1.5" fill="url(#c3)"/><rect x="966.0" y="120" width="68.4" height="1.5" fill="url(#c4)"/><rect x="962.4" y="121" width="75.6" height="1.5" fill="url(#c5)"/><rect x="959.2" y="122" width="82.0" height="1.5" fill="url(#c6)"/><rect x="956.3" y="123" width="87.9" height="1.5" fill="url(#c7)"/><rect x="953.5" y="124" width="93.4" height="1.5" fill="url(#c8)"/><rect x="950.9" y="125" width="98.6" height="1.5" fill="url(#c9)"/><rect x="948.5" y="126" width="103.4" height="1.5" fill="url(#c10)"/><rect x="946.2" y="127" width="108.0" height="1.5" fill="url(#c11)"/><rect x="944.0" y="128" width="112.4" height="1.5" fill="url(#c12)"/><rect x="941.9" y="129" width="116.5" height="1.5" fill="url(#c13)"/><rect x="939.9" y="130" width="120.5" height="1.5" fill="url(#c14)"/><rect x="938.0" y="131" width="124.4" height="1.5" fill="url(#c15)"/><rect x="936.2" y="132" width="128.0" height="1.5" fill="url(#c16)"/><rect x="934.4" y="133" width="131.6" height="1.5" fill="url(#c17)"/><rect x="932.7" y="134" width="135.0" height="1.5" fill="url(#c18)"/><rect x="931.1" y="135" width="138.3" height="1.5" fill="url(#c19)"/><rect x="929.5" y="136" width="141.5" height="1.5" fill="url(#c20)"/><rect x="927.9" y="137" width="144.6" height="1.5" fill="url(#c21)"/><rect x="926.4" y="138" width="147.6" height="1.5" fill="url(#c22)"/><rect x="924.9" y="139" width="150.5" height="1.5" fill="url(#c23)"/><rect x="923.5" y="140" width="153.4" height="1.5" fill="url(#c24)"/><rect x="922.1" y="141" width="156.1" height="1.5" fill="url(#c25)"/><rect x="920.8" y="142" width="158.8" height="1.5" fill="url(#c26)"/><rect x="919.5" y="143" width="161.4" height="1.5" fill="url(#c27)"/><rect x="918.2" y="144" width="164.0" height="1.5" fill="url(#c28)"/><rect x="917.0" y="145" width="166.4" height="1.5" fill="url(#c29)"/><rect x="915.8" y="146" width="168.9" height="1.5" fill="url(#c30)"/><rect x="914.6" y="147" width="171.2" height="1.5" fill="url(#c31)"/><rect x="913.4" y="148" width="173.5" height="1.5" fill="url(#c32)"/><rect x="912.3" y="149" width="175.8" height="1.5" fill="url(#c33)"/><rect x="911.2" y="150" width="178.0" height="1.5" fill="url(#c34)"/><rect x="910.1" y="151" width="180.2" height="1.5" fill="url(#c35)"/><rect x="909.1" y="152" width="182.3" height="1.5" fill="url(#c36)"/><rect x="908.0" y="153" width="184.3" height="1.5" fill="url(#c37)"/><rect x="907.0" y="154" width="186.4" height="1.5" fill="url(#c38)"/><rect x="906.0" y="155" width="188.3" height="1.5" fill="url(#c39)"/><rect x="905.1" y="156" width="190.3" height="1.5" fill="url(#c40)"/><rect x="904.1" y="157" width="192.2" height="1.5" fill="url(#c41)"/><rect x="903.2" y="158" width="194.0" height="1.5" fill="url(#c42)"/><rect x="902.3" y="159" width="195.9" height="1.5" fill="url(#c43)"/><rect x="901.4" y="160" width="197.6" height="1.5" fill="url(#c44)"/><rect x="900.5" y="161" width="199.4" height="1.5" fill="url(#c45)"/><rect x="899.7" y="162" width="201.1" height="1.5" fill="url(#c46)"/><rect x="898.8" y="163" width="202.8" height="1.5" fill="url(#c47)"/><rect x="898.0" y="164" width="204.4" height="1.5" fill="url(#c48)"/><rect x="897.2" y="165" width="206.0" height="1.5" fill="url(#c49)"/><rect x="896.4" y="166" width="207.6" height="1.5" fill="url(#c50)"/><rect x="895.6" y="167" width="209.1" height="1.5" fill="url(#c51)"/><rect x="894.9" y="168" width="210.7" height="1.5" fill="url(#c52)"/><rect x="894.1" y="169" width="212.1" height="1.5" fill="url(#c53)"/><rect x="893.4" y="170" width="213.6" height="1.5" fill="url(#c54)"/><rect x="892.7" y="171" width="215.0" height="1.5" fill="url(#c55)"/><rect x="892.0" y="172" width="216.4" height="1.5" fill="url(#c56)"/><rect x="891.3" y="173" width="217.8" height="1.5" fill="url(#c57)"/><rect x="890.6" y="174" width="219.2" height="1.5" fill="url(#c58)"/><rect x="889.9" y="175" width="220.5" height="1.5" fill="url(#c59)"/><rect x="889.3" y="176" width="221.8" height="1.5" fill="url(#c60)"/><rect x="888.7" y="177" width="223.0" height="1.5" fill="url(#c61)"/><rect x="888.0" y="178" width="224.3" height="1.5" fill="url(#c62)"/><rect x="887.4" y="179" width="225.5" height="1.5" fill="url(#c63)"/><rect x="886.8" y="180" width="226.7" height="1.5" fill="url(#c64)"/><rect x="886.2" y="181" width="227.9" height="1.5" fill="url(#c65)"/><rect x="885.7" y="182" width="229.0" height="1.5" fill="url(#c66)"/><rect x="885.1" y="183" width="230.2" height="1.5" fill="url(#c67)"/><rect x="884.6" y="184" width="231.3" height="1.5" fill="url(#c68)"/><rect x="884.0" y="185" width="232.4" height="1.5" fill="url(#c69)"/><rect x="883.5" y="186" width="233.4" height="1.5" fill="url(#c70)"/><rect x="883.0" y="187" width="234.5" height="1.5" fill="url(#c71)"/><rect x="882.5" y="188" width="235.5" height="1.5" fill="url(#c72)"/><rect x="882.0" y="189" width="236.5" height="1.5" fill="url(#c73)"/><rect x="881.5" y="190" width="237.4" height="1.5" fill="url(#c74)"/><rect x="881.0" y="191" width="238.4" height="1.5" fill="url(#c75)"/><rect x="880.5" y="192" width="239.3" height="1.5" fill="url(#c76)"/><rect x="880.1" y="193" width="240.2" height="1.5" fill="url(#c77)"/><rect x="879.6" y="194" width="241.1" height="1.5" fill="url(#c78)"/><rect x="879.2" y="195" width="242.0" height="1.5" fill="url(#c79)"/><rect x="878.7" y="196" width="242.9" height="1.5" fill="url(#c80)"/><rect x="878.3" y="197" width="243.7" height="1.5" fill="url(#c81)"/><rect x="877.9" y="198" width="244.5" height="1.5" fill="url(#c82)"/><rect x="877.5" y="199" width="245.3" height="1.5" fill="url(#c83)"/><rect x="877.1" y="200" width="246.1" height="1.5" fill="url(#c84)"/><rect x="876.8" y="201" width="246.8" height="1.5" fill="url(#c85)"/><rect x="876.4" y="202" width="247.6" height="1.5" fill="url(#c86)"/><rect x="876.0" y="203" width="248.3" height="1.5" fill="url(#c87)"/><rect x="875.7" y="204" width="249.0" height="1.5" fill="url(#c88)"/><rect x="875.3" y="205" width="249.7" height="1.5" fill="url(#c89)"/><rect x="875.0" y="206" width="250.4" height="1.5" fill="url(#c90)"/><rect x="874.7" y="207" width="251.0" height="1.5" fill="url(#c91)"/><rect x="874.3" y="208" width="251.7" height="1.5" fill="url(#c92)"/><rect x="874.0" y="209" width="252.3" height="1.5" fill="url(#c93)"/><rect x="873.7" y="210" width="252.9" height="1.5" fill="url(#c94)"/><rect x="873.4" y="211" width="253.5" height="1.5" fill="url(#c95)"/><rect x="873.2" y="212" width="254.0" height="1.5" fill="url(#c96)"/><rect x="872.9" y="213" width="254.6" height="1.5" fill="url(#c97)"/><rect x="872.6" y="214" width="255.1" height="1.5" fill="url(#c98)"/><rect x="872.4" y="215" width="255.6" height="1.5" fill="url(#c99)"/><rect x="872.1" y="216" width="256.1" height="1.5" fill="url(#c100)"/><rect x="871.9" y="217" width="256.6" height="1.5" fill="url(#c101)"/><rect x="871.6" y="218" width="257.1" height="1.5" fill="url(#c102)"/><rect x="871.4" y="219" width="257.5" height="1.5" fill="url(#c103)"/><rect x="871.2" y="220" width="258.0" height="1.5" fill="url(#c104)"/><rect x="871.0" y="221" width="258.4" height="1.5" fill="url(#c105)"/><rect x="870.8" y="222" width="258.8" height="1.5" fill="url(#c106)"/><rect x="870.6" y="223" width="259.2" height="1.5" fill="url(#c107)"/><rect x="870.4" y="224" width="259.6" height="1.5" fill="url(#c108)"/><rect x="870.2" y="225" width="259.9" height="1.5" fill="url(#c109)"/><rect x="870.0" y="226" width="260.3" height="1.5" fill="url(#c110)"/><rect x="869.9" y="227" width="260.6" height="1.5" fill="url(#c111)"/><rect x="869.7" y="228" width="260.9" height="1.5" fill="url(#c112)"/><rect x="869.6" y="229" width="261.2" height="1.5" fill="url(#c113)"/><rect x="869.4" y="230" width="261.5" height="1.5" fill="url(#c114)"/><rect x="869.3" y="231" width="261.7" height="1.5" fill="url(#c115)"/><rect x="869.2" y="232" width="262.0" height="1.5" fill="url(#c116)"/><rect x="869.1" y="233" width="262.2" height="1.5" fill="url(#c117)"/><rect x="868.9" y="234" width="262.4" height="1.5" fill="url(#c118)"/><rect x="868.9" y="235" width="262.6" height="1.5" fill="url(#c119)"/><rect x="868.8" y="236" width="262.8" height="1.5" fill="url(#c120)"/><rect x="868.7" y="237" width="263.0" height="1.5" fill="url(#c121)"/><rect x="868.6" y="238" width="263.1" height="1.5" fill="url(#c122)"/><rect x="868.5" y="239" width="263.3" height="1.5" fill="url(#c123)"/><rect x="868.5" y="240" width="263.4" height="1.5" fill="url(#c124)"/><rect x="868.4" y="241" width="263.5" height="1.5" fill="url(#c125)"/><rect x="868.4" y="242" width="263.6" height="1.5" fill="url(#c126)"/><rect x="868.3" y="243" width="263.7" height="1.5" fill="url(#c127)"/><rect x="868.3" y="244" width="263.8" height="1.5" fill="url(#c128)"/><rect x="868.3" y="245" width="263.8" height="1.5" fill="url(#c129)"/><rect x="868.2" y="246" width="263.9" height="1.5" fill="url(#c130)"/><rect x="868.2" y="247" width="263.9" height="1.5" fill="url(#c131)"/><rect x="868.2" y="248" width="263.9" height="1.5" fill="url(#c132)"/><rect x="868.2" y="249" width="263.9" height="1.5" fill="url(#c133)"/><rect x="868.2" y="250" width="263.8" height="1.5" fill="url(#c134)"/><rect x="868.3" y="251" width="263.8" height="1.5" fill="url(#c135)"/><rect x="868.3" y="252" width="263.7" height="1.5" fill="url(#c136)"/><rect x="868.3" y="253" width="263.7" height="1.5" fill="url(#c137)"/><rect x="868.4" y="254" width="263.6" height="1.5" fill="url(#c138)"/><rect x="868.4" y="255" width="263.5" height="1.5" fill="url(#c139)"/><rect x="868.5" y="256" width="263.4" height="1.5" fill="url(#c140)"/><rect x="868.5" y="257" width="263.2" height="1.5" fill="url(#c141)"/><rect x="868.6" y="258" width="263.1" height="1.5" fill="url(#c142)"/><rect x="868.7" y="259" width="263.0" height="1.5" fill="url(#c143)"/><rect x="868.8" y="260" width="262.8" height="1.5" fill="url(#c144)"/><rect x="868.8" y="261" width="262.6" height="1.5" fill="url(#c145)"/><rect x="869.0" y="262" width="262.3" height="3.5" fill="url(#c146)"/><rect x="869.2" y="265" width="261.9" height="3.5" fill="url(#c147)"/><rect x="869.5" y="268" width="261.4" height="3.5" fill="url(#c148)"/><rect x="869.7" y="271" width="260.9" height="3.5" fill="url(#c149)"/><rect x="869.9" y="274" width="260.4" height="3.5" fill="url(#c150)"/><rect x="870.2" y="277" width="260.0" height="3.5" fill="url(#c151)"/><rect x="870.4" y="280" width="259.5" height="3.5" fill="url(#c152)"/><rect x="870.6" y="283" width="259.0" height="3.5" fill="url(#c153)"/><rect x="870.9" y="286" width="258.6" height="3.5" fill="url(#c154)"/><rect x="871.1" y="289" width="258.1" height="3.5" fill="url(#c155)"/><rect x="871.3" y="292" width="257.6" height="3.5" fill="url(#c156)"/><rect x="871.6" y="295" width="257.1" height="3.5" fill="url(#c157)"/><rect x="871.8" y="298" width="256.7" height="3.5" fill="url(#c158)"/><rect x="872.0" y="301" width="256.2" height="3.5" fill="url(#c159)"/><rect x="872.3" y="304" width="255.7" height="3.5" fill="url(#c160)"/><rect x="872.5" y="307" width="255.3" height="3.5" fill="url(#c161)"/><rect x="872.7" y="310" width="254.8" height="3.5" fill="url(#c162)"/><rect x="873.0" y="313" width="254.3" height="3.5" fill="url(#c163)"/><rect x="873.2" y="316" width="253.8" height="3.5" fill="url(#c164)"/><rect x="873.4" y="319" width="253.4" height="3.5" fill="url(#c165)"/><rect x="873.7" y="322" width="252.9" height="3.5" fill="url(#c166)"/><rect x="873.9" y="325" width="252.4" height="3.5" fill="url(#c167)"/><rect x="874.1" y="328" width="252.0" height="3.5" fill="url(#c168)"/><rect x="874.4" y="331" width="251.5" height="3.5" fill="url(#c169)"/><rect x="874.6" y="334" width="251.0" height="3.5" fill="url(#c170)"/><rect x="874.9" y="337" width="250.5" height="3.5" fill="url(#c171)"/><rect x="875.1" y="340" width="250.1" height="3.5" fill="url(#c172)"/><rect x="875.3" y="343" width="249.6" height="3.5" fill="url(#c173)"/><rect x="875.6" y="346" width="249.1" height="3.5" fill="url(#c174)"/><rect x="875.8" y="349" width="248.7" height="3.5" fill="url(#c175)"/><rect x="876.0" y="352" width="248.2" height="3.5" fill="url(#c176)"/><rect x="876.3" y="355" width="247.7" height="3.5" fill="url(#c177)"/><rect x="876.5" y="358" width="247.2" height="3.5" fill="url(#c178)"/><rect x="876.7" y="361" width="246.8" height="3.5" fill="url(#c179)"/><rect x="877.0" y="364" width="246.3" height="3.5" fill="url(#c180)"/><rect x="877.2" y="367" width="245.8" height="3.5" fill="url(#c181)"/><rect x="877.4" y="370" width="245.4" height="3.5" fill="url(#c182)"/><rect x="877.7" y="373" width="244.9" height="3.5" fill="url(#c183)"/><rect x="877.9" y="376" width="244.4" height="3.5" fill="url(#c184)"/><rect x="878.1" y="379" width="243.9" height="3.5" fill="url(#c185)"/><rect x="878.4" y="382" width="243.5" height="3.5" fill="url(#c186)"/><rect x="878.6" y="385" width="243.0" height="3.5" fill="url(#c187)"/><rect x="878.8" y="388" width="242.5" height="3.5" fill="url(#c188)"/><rect x="879.1" y="391" width="242.1" height="3.5" fill="url(#c189)"/><rect x="879.3" y="394" width="241.6" height="3.5" fill="url(#c190)"/><rect x="879.5" y="397" width="241.1" height="3.5" fill="url(#c191)"/><rect x="879.8" y="400" width="240.6" height="3.5" fill="url(#c192)"/><rect x="880.0" y="403" width="240.2" height="3.5" fill="url(#c193)"/><rect x="880.2" y="406" width="239.7" height="3.5" fill="url(#c194)"/><rect x="880.5" y="409" width="239.2" height="3.5" fill="url(#c195)"/><rect x="880.7" y="412" width="238.8" height="3.5" fill="url(#c196)"/><rect x="880.9" y="415" width="238.3" height="3.5" fill="url(#c197)"/><rect x="881.2" y="418" width="237.8" height="3.5" fill="url(#c198)"/><rect x="881.4" y="421" width="237.3" height="3.5" fill="url(#c199)"/><rect x="881.7" y="424" width="236.9" height="3.5" fill="url(#c200)"/><rect x="881.9" y="427" width="236.4" height="3.5" fill="url(#c201)"/><rect x="882.1" y="430" width="235.9" height="3.5" fill="url(#c202)"/><rect x="882.4" y="433" width="235.5" height="3.5" fill="url(#c203)"/><rect x="882.6" y="436" width="235.0" height="3.5" fill="url(#c204)"/><rect x="882.8" y="439" width="234.5" height="3.5" fill="url(#c205)"/><rect x="883.1" y="442" width="234.0" height="3.5" fill="url(#c206)"/><rect x="883.3" y="445" width="233.6" height="3.5" fill="url(#c207)"/><rect x="883.5" y="448" width="233.1" height="3.5" fill="url(#c208)"/><rect x="883.8" y="451" width="232.6" height="3.5" fill="url(#c209)"/><rect x="884.0" y="454" width="232.2" height="3.5" fill="url(#c210)"/><rect x="884.2" y="457" width="231.7" height="3.5" fill="url(#c211)"/><rect x="884.5" y="460" width="231.2" height="3.5" fill="url(#c212)"/><rect x="884.7" y="463" width="230.7" height="3.5" fill="url(#c213)"/><rect x="884.9" y="466" width="230.3" height="3.5" fill="url(#c214)"/><rect x="885.2" y="469" width="229.8" height="3.5" fill="url(#c215)"/><rect x="885.4" y="472" width="229.3" height="3.5" fill="url(#c216)"/><rect x="885.6" y="475" width="228.9" height="3.5" fill="url(#c217)"/><rect x="885.8" y="478" width="228.5" height="1.5" fill="url(#c218)"/><rect x="885.9" y="479" width="228.4" height="1.5" fill="url(#c219)"/><rect x="885.9" y="480" width="228.2" height="1.5" fill="url(#c220)"/><rect x="886.0" y="481" width="228.1" height="1.5" fill="url(#c221)"/><rect x="886.1" y="482" width="227.9" height="1.5" fill="url(#c222)"/><rect x="886.2" y="483" width="227.8" height="1.5" fill="url(#c223)"/><rect x="886.3" y="484" width="227.6" height="1.5" fill="url(#c224)"/><rect x="886.4" y="485" width="227.4" height="1.5" fill="url(#c225)"/><rect x="886.4" y="486" width="227.2" height="1.5" fill="url(#c226)"/><rect x="886.5" y="487" width="227.0" height="1.5" fill="url(#c227)"/><rect x="886.7" y="488" width="226.8" height="1.5" fill="url(#c228)"/><rect x="886.8" y="489" width="226.6" height="1.5" fill="url(#c229)"/><rect x="886.9" y="490" width="226.3" height="1.5" fill="url(#c230)"/><rect x="887.0" y="491" width="226.0" height="1.5" fill="url(#c231)"/><rect x="887.2" y="492" width="225.7" height="1.5" fill="url(#c232)"/><rect x="887.3" y="493" width="225.4" height="1.5" fill="url(#c233)"/><rect x="887.5" y="494" width="225.1" height="1.5" fill="url(#c234)"/><rect x="887.7" y="495" width="224.7" height="1.5" fill="url(#c235)"/><rect x="887.9" y="496" width="224.4" height="1.5" fill="url(#c236)"/><rect x="888.1" y="497" width="224.0" height="1.5" fill="url(#c237)"/><rect x="888.3" y="498" width="223.6" height="1.5" fill="url(#c238)"/><rect x="888.5" y="499" width="223.2" height="1.5" fill="url(#c239)"/><rect x="888.7" y="500" width="222.7" height="1.5" fill="url(#c240)"/><rect x="888.9" y="501" width="222.3" height="1.5" fill="url(#c241)"/><rect x="889.2" y="502" width="221.8" height="1.5" fill="url(#c242)"/><rect x="889.4" y="503" width="221.3" height="1.5" fill="url(#c243)"/><rect x="889.7" y="504" width="220.8" height="1.5" fill="url(#c244)"/><rect x="889.9" y="505" width="220.2" height="1.5" fill="url(#c245)"/><rect x="890.2" y="506" width="219.7" height="1.5" fill="url(#c246)"/><rect x="890.5" y="507" width="219.1" height="1.5" fill="url(#c247)"/><rect x="890.8" y="508" width="218.5" height="1.5" fill="url(#c248)"/><rect x="891.1" y="509" width="217.9" height="1.5" fill="url(#c249)"/><rect x="891.4" y="510" width="217.3" height="1.5" fill="url(#c250)"/><rect x="891.8" y="511" width="216.6" height="1.5" fill="url(#c251)"/><rect x="892.1" y="512" width="215.9" height="1.5" fill="url(#c252)"/><rect x="892.4" y="513" width="215.2" height="1.5" fill="url(#c253)"/><rect x="892.8" y="514" width="214.5" height="1.5" fill="url(#c254)"/><rect x="893.2" y="515" width="213.8" height="1.5" fill="url(#c255)"/><rect x="893.6" y="516" width="213.0" height="1.5" fill="url(#c256)"/><rect x="893.9" y="517" width="212.2" height="1.5" fill="url(#c257)"/><rect x="894.4" y="518" width="211.4" height="1.5" fill="url(#c258)"/><rect x="894.8" y="519" width="210.6" height="1.5" fill="url(#c259)"/><rect x="895.2" y="520" width="209.7" height="1.5" fill="url(#c260)"/><rect x="895.6" y="521" width="208.9" height="1.5" fill="url(#c261)"/><rect x="896.1" y="522" width="208.0" height="1.5" fill="url(#c262)"/><rect x="896.5" y="523" width="207.1" height="1.5" fill="url(#c263)"/><rect x="897.0" y="524" width="206.1" height="1.5" fill="url(#c264)"/><rect x="897.5" y="525" width="205.2" height="1.5" fill="url(#c265)"/><rect x="898.0" y="526" width="204.2" height="1.5" fill="url(#c266)"/><rect x="898.5" y="527" width="203.2" height="1.5" fill="url(#c267)"/><rect x="899.0" y="528" width="202.1" height="1.5" fill="url(#c268)"/><rect x="899.5" y="529" width="201.1" height="1.5" fill="url(#c269)"/><rect x="900.1" y="530" width="200.0" height="1.5" fill="url(#c270)"/><rect x="900.6" y="531" width="198.9" height="1.5" fill="url(#c271)"/><rect x="901.2" y="532" width="197.7" height="1.5" fill="url(#c272)"/><rect x="901.8" y="533" width="196.5" height="1.5" fill="url(#c273)"/><rect x="902.4" y="534" width="195.4" height="1.5" fill="url(#c274)"/><rect x="903.0" y="535" width="194.1" height="1.5" fill="url(#c275)"/><rect x="903.6" y="536" width="192.9" height="1.5" fill="url(#c276)"/><rect x="904.3" y="537" width="191.6" height="1.5" fill="url(#c277)"/><rect x="904.9" y="538" width="190.3" height="1.5" fill="url(#c278)"/><rect x="905.6" y="539" width="188.9" height="1.5" fill="url(#c279)"/><rect x="906.3" y="540" width="187.6" height="1.5" fill="url(#c280)"/><rect x="907.0" y="541" width="186.2" height="1.5" fill="url(#c281)"/><rect x="907.7" y="542" width="184.7" height="1.5" fill="url(#c282)"/><rect x="908.4" y="543" width="183.3" height="1.5" fill="url(#c283)"/><rect x="909.2" y="544" width="181.8" height="1.5" fill="url(#c284)"/><rect x="909.9" y="545" width="180.2" height="1.5" fill="url(#c285)"/><rect x="910.7" y="546" width="178.6" height="1.5" fill="url(#c286)"/><rect x="911.5" y="547" width="177.0" height="1.5" fill="url(#c287)"/><rect x="912.4" y="548" width="175.4" height="1.5" fill="url(#c288)"/><rect x="913.2" y="549" width="173.7" height="1.5" fill="url(#c289)"/><rect x="914.1" y="550" width="172.0" height="1.5" fill="url(#c290)"/><rect x="915.0" y="551" width="170.2" height="1.5" fill="url(#c291)"/><rect x="915.9" y="552" width="168.4" height="1.5" fill="url(#c292)"/><rect x="916.8" y="553" width="166.5" height="1.5" fill="url(#c293)"/><rect x="917.7" y="554" width="164.6" height="1.5" fill="url(#c294)"/><rect x="918.7" y="555" width="162.7" height="1.5" fill="url(#c295)"/><rect x="919.7" y="556" width="160.7" height="1.5" fill="url(#c296)"/><rect x="920.7" y="557" width="158.7" height="1.5" fill="url(#c297)"/><rect x="921.8" y="558" width="156.6" height="1.5" fill="url(#c298)"/><rect x="922.8" y="559" width="154.4" height="1.5" fill="url(#c299)"/><rect x="924.0" y="560" width="152.2" height="1.5" fill="url(#c300)"/><rect x="925.1" y="561" width="149.9" height="1.5" fill="url(#c301)"/><rect x="926.3" y="562" width="147.6" height="1.5" fill="url(#c302)"/><rect x="927.5" y="563" width="145.2" height="1.5" fill="url(#c303)"/><rect x="928.7" y="564" width="142.7" height="1.5" fill="url(#c304)"/><rect x="930.0" y="565" width="140.2" height="1.5" fill="url(#c305)"/><rect x="931.3" y="566" width="137.6" height="1.5" fill="url(#c306)"/><rect x="932.6" y="567" width="134.9" height="1.5" fill="url(#c307)"/><rect x="934.0" y="568" width="132.1" height="1.5" fill="url(#c308)"/><rect x="935.4" y="569" width="129.2" height="1.5" fill="url(#c309)"/><rect x="936.9" y="570" width="126.2" height="1.5" fill="url(#c310)"/><rect x="938.5" y="571" width="123.2" height="1.5" fill="url(#c311)"/><rect x="940.1" y="572" width="120.0" height="1.5" fill="url(#c312)"/><rect x="941.7" y="573" width="116.7" height="1.5" fill="url(#c313)"/><rect x="943.5" y="574" width="113.2" height="1.5" fill="url(#c314)"/><rect x="945.3" y="575" width="109.6" height="1.5" fill="url(#c315)"/><rect x="947.1" y="576" width="105.8" height="1.5" fill="url(#c316)"/><rect x="949.1" y="577" width="101.9" height="1.5" fill="url(#c317)"/><rect x="951.2" y="578" width="97.8" height="1.5" fill="url(#c318)"/><rect x="953.4" y="579" width="93.4" height="1.5" fill="url(#c319)"/><rect x="955.7" y="580" width="88.7" height="1.5" fill="url(#c320)"/><rect x="958.2" y="581" width="83.8" height="1.5" fill="url(#c321)"/><rect x="960.8" y="582" width="78.5" height="1.5" fill="url(#c322)"/><rect x="963.7" y="583" width="72.7" height="1.5" fill="url(#c323)"/><rect x="966.9" y="584" width="66.3" height="1.5" fill="url(#c324)"/><rect x="970.5" y="585" width="59.2" height="1.5" fill="url(#c325)"/><rect x="974.6" y="586" width="51.0" height="1.5" fill="url(#c326)"/><rect x="979.6" y="587" width="40.9" height="1.5" fill="url(#c327)"/><rect x="986.6" y="588" width="26.9" height="1.5" fill="url(#c328)"/><rect x="990.9" y="589" width="18.3" height="1.5" fill="url(#c329)"/><path d="M887.21 483.82 L869.61 258.61 L869.45 256.34 L869.34 254.05 L869.26 251.75 L869.25 251.16 L869.22 248.87 L869.23 246.57 L869.28 244.27 L869.38 241.96 L869.41 241.40 L869.55 239.10 L869.73 236.80 L869.95 234.50 L870.22 232.19 L870.28 231.67 L870.59 229.37 L870.94 227.08 L871.33 224.79 L871.77 222.50 L871.87 222.00 L872.35 219.73 L872.86 217.46 L873.43 215.19 L874.03 212.94 L874.68 210.68 L874.81 210.24 L875.49 208.00 L876.22 205.78 L876.99 203.56 L877.81 201.36 L877.96 200.95 L878.81 198.77 L879.70 196.59 L880.64 194.44 L881.61 192.29 L881.79 191.92 L882.80 189.80 L883.85 187.70 L884.95 185.61 L886.08 183.54 L887.25 181.48 L887.44 181.16 L888.65 179.13 L889.90 177.13 L891.18 175.14 L892.50 173.18 L892.70 172.88 L894.06 170.95 L895.45 169.04 L896.88 167.15 L898.35 165.29 L898.56 165.03 L900.06 163.20 L901.59 161.40 L903.16 159.62 L904.76 157.87 L904.97 157.64 L906.61 155.92 L908.27 154.24 L909.97 152.58 L910.18 152.37 L911.91 150.75 L913.67 149.16 L915.46 147.60 L915.67 147.42 L917.49 145.90 L919.33 144.41 L921.20 142.95 L921.42 142.79 L923.31 141.37 L925.24 139.99 L927.19 138.64 L927.40 138.50 L929.37 137.19 L931.37 135.92 L933.39 134.68 L933.60 134.56 L935.64 133.37 L937.71 132.21 L937.91 132.10 L939.99 130.98 L942.10 129.91 L942.30 129.81 L944.42 128.78 L946.56 127.78 L946.76 127.69 L948.91 126.75 L949.11 126.66 L951.27 125.76 L953.46 124.89 L953.65 124.82 L955.84 124.00 L956.04 123.93 L958.24 123.15 L958.43 123.09 L960.64 122.36 L960.83 122.30 L963.04 121.61 L963.24 121.56 L965.45 120.92 L965.64 120.87 L965.84 120.81 L968.04 120.23 L968.24 120.18 L970.44 119.64 L970.63 119.59 L970.83 119.55 L973.02 119.06 L973.21 119.02 L973.40 118.98 L975.57 118.54 L975.76 118.50 L975.95 118.47 L978.10 118.08 L978.28 118.04 L978.47 118.01 L978.67 117.98 L980.77 117.64 L980.95 117.62 L981.14 117.59 L981.33 117.56 L981.53 117.53 L983.56 117.25 L983.74 117.23 L983.92 117.20 L984.11 117.18 L984.31 117.16 L984.51 117.13 L986.43 116.91 L986.61 116.89 L986.79 116.87 L986.97 116.85 L987.16 116.83 L987.36 116.82 L987.56 116.80 L987.76 116.78 L989.50 116.62 L989.68 116.61 L989.86 116.59 L990.04 116.58 L990.22 116.56 L990.41 116.55 L990.60 116.53 L990.79 116.52 L990.99 116.51 L991.19 116.49 L991.39 116.48 L991.59 116.47 L993.00 116.38 L993.18 116.37 L993.35 116.36 L993.53 116.35 L993.71 116.34 L993.89 116.33 L994.07 116.32 L994.25 116.31 L994.44 116.31 L994.62 116.30 L994.81 116.29 L995.00 116.28 L995.20 116.27 L995.39 116.27 L995.58 116.26 L995.78 116.25 L995.98 116.25 L996.18 116.24 L996.38 116.24 L996.58 116.23 L996.78 116.23 L996.98 116.22 L997.19 116.22 L997.39 116.21 L997.60 116.21 L997.80 116.20 L998.01 116.20 L998.44 116.19 L998.61 116.19 L998.77 116.19 L998.94 116.19 L999.11 116.19 L999.28 116.18 L999.45 116.18 L999.62 116.18 L999.78 116.18 L999.95 116.18 L1000.12 116.18 L1000.29 116.18 L1000.46 116.18 L1000.63 116.18 L1000.80 116.18 L1000.97 116.18 L1001.14 116.18 L1001.30 116.19 L1001.47 116.19 L1001.64 116.19 L1001.81 116.19 L1001.97 116.19 L1002.41 116.20 L1002.62 116.20 L1002.83 116.21 L1003.03 116.21 L1003.24 116.22 L1003.44 116.22 L1003.64 116.22 L1003.84 116.23 L1004.05 116.24 L1004.24 116.24 L1004.44 116.25 L1004.64 116.25 L1004.84 116.26 L1005.03 116.27 L1005.22 116.27 L1005.42 116.28 L1005.61 116.29 L1005.79 116.30 L1005.98 116.30 L1006.17 116.31 L1006.35 116.32 L1006.53 116.33 L1006.71 116.34 L1006.89 116.35 L1007.07 116.36 L1007.24 116.37 L1007.41 116.38 L1008.83 116.47 L1009.03 116.48 L1009.23 116.49 L1009.43 116.51 L1009.63 116.52 L1009.82 116.53 L1010.01 116.55 L1010.20 116.56 L1010.38 116.58 L1010.56 116.59 L1010.74 116.61 L1010.91 116.62 L1012.67 116.78 L1012.87 116.80 L1013.06 116.82 L1013.26 116.83 L1013.44 116.85 L1013.63 116.87 L1013.81 116.89 L1013.99 116.91 L1015.92 117.13 L1016.11 117.16 L1016.31 117.18 L1016.50 117.20 L1016.68 117.23 L1016.86 117.25 L1018.90 117.53 L1019.09 117.56 L1019.28 117.59 L1019.47 117.61 L1019.65 117.64 L1021.75 117.98 L1021.95 118.01 L1022.14 118.04 L1022.32 118.08 L1024.47 118.47 L1024.66 118.50 L1024.85 118.54 L1027.02 118.98 L1027.21 119.02 L1027.40 119.06 L1029.59 119.55 L1029.79 119.59 L1029.98 119.64 L1032.18 120.18 L1032.38 120.23 L1034.58 120.81 L1034.78 120.87 L1034.97 120.92 L1037.18 121.56 L1037.37 121.61 L1039.59 122.30 L1039.78 122.36 L1041.99 123.09 L1042.18 123.15 L1044.38 123.93 L1044.58 124.00 L1046.77 124.82 L1048.94 125.68 L1049.15 125.76 L1051.31 126.66 L1051.51 126.75 L1053.66 127.70 L1055.80 128.68 L1056.00 128.78 L1058.12 129.81 L1060.22 130.88 L1060.43 130.99 L1062.51 132.10 L1064.57 133.25 L1064.78 133.37 L1066.82 134.57 L1068.84 135.80 L1069.05 135.93 L1071.05 137.20 L1073.02 138.51 L1073.23 138.65 L1075.18 140.00 L1077.11 141.38 L1079.01 142.80 L1079.22 142.96 L1081.09 144.42 L1082.94 145.91 L1084.75 147.44 L1084.96 147.62 L1086.75 149.18 L1088.51 150.77 L1090.24 152.40 L1091.93 154.05 L1092.15 154.26 L1093.81 155.95 L1095.45 157.67 L1097.04 159.41 L1097.25 159.65 L1098.82 161.43 L1100.36 163.23 L1101.86 165.07 L1103.32 166.92 L1103.53 167.19 L1104.96 169.08 L1106.35 170.99 L1107.71 172.93 L1109.03 174.89 L1109.22 175.19 L1110.51 177.18 L1111.76 179.18 L1112.96 181.21 L1114.13 183.26 L1114.32 183.60 L1115.45 185.67 L1116.54 187.76 L1117.60 189.87 L1118.61 191.99 L1119.58 194.13 L1119.75 194.51 L1120.69 196.67 L1121.58 198.84 L1122.43 201.03 L1123.24 203.23 L1123.39 203.65 L1124.16 205.86 L1124.89 208.09 L1125.57 210.33 L1126.22 212.57 L1126.34 213.03 L1126.94 215.29 L1127.50 217.56 L1128.02 219.83 L1128.50 222.11 L1128.93 224.39 L1129.02 224.89 L1129.41 227.19 L1129.76 229.49 L1130.07 231.78 L1130.33 234.08 L1130.39 234.62 L1130.61 236.92 L1130.79 239.23 L1130.92 241.53 L1131.02 243.84 L1131.04 244.40 L1131.09 246.71 L1131.10 249.01 L1131.06 251.30 L1130.99 253.59 L1130.97 254.19 L1130.85 256.48 L1130.69 258.76 L1112.89 484.16 L1112.74 485.86 L1112.64 486.96 L1112.45 488.65 L1112.31 489.76 L1112.09 491.45 L1111.83 493.12 L1111.66 494.24 L1111.36 495.90 L1111.15 497.02 L1110.82 498.67 L1110.58 499.79 L1110.21 501.43 L1109.81 503.06 L1109.53 504.18 L1109.10 505.79 L1108.78 506.91 L1108.31 508.51 L1107.81 510.09 L1107.46 511.20 L1106.93 512.77 L1106.54 513.88 L1105.97 515.43 L1105.55 516.53 L1104.95 518.06 L1104.49 519.16 L1103.86 520.67 L1103.20 522.15 L1102.71 523.24 L1102.02 524.70 L1101.50 525.79 L1100.78 527.22 L1100.22 528.30 L1099.48 529.71 L1098.89 530.78 L1098.12 532.16 L1097.49 533.22 L1096.70 534.57 L1096.04 535.62 L1095.22 536.94 L1094.54 537.98 L1093.69 539.27 L1092.81 540.54 L1092.11 541.56 L1091.37 542.57 L1090.48 543.79 L1089.71 544.79 L1088.80 545.98 L1088.01 546.97 L1087.08 548.12 L1086.26 549.09 L1085.31 550.20 L1084.47 551.16 L1083.50 552.24 L1082.64 553.17 L1081.66 554.21 L1080.77 555.13 L1079.78 556.13 L1078.87 557.04 L1077.93 557.93 L1076.94 558.88 L1075.98 559.75 L1074.98 560.66 L1074.01 561.51 L1072.99 562.38 L1072.01 563.21 L1070.99 564.04 L1069.98 564.85 L1068.96 565.65 L1067.94 566.42 L1066.90 567.20 L1065.84 567.98 L1064.83 568.69 L1063.76 569.44 L1062.66 570.18 L1061.67 570.83 L1060.57 571.55 L1059.44 572.25 L1058.47 572.85 L1057.33 573.53 L1056.18 574.20 L1055.23 574.74 L1054.07 575.39 L1052.89 576.02 L1051.96 576.51 L1050.78 577.11 L1049.58 577.71 L1048.69 578.14 L1047.49 578.71 L1046.27 579.27 L1045.04 579.81 L1044.19 580.17 L1042.97 580.69 L1041.72 581.20 L1040.46 581.69 L1039.67 581.99 L1038.42 582.45 L1037.15 582.90 L1035.87 583.34 L1035.15 583.58 L1033.88 583.99 L1032.59 584.39 L1031.29 584.77 L1029.98 585.14 L1029.36 585.31 L1028.07 585.65 L1026.76 585.98 L1025.44 586.29 L1024.12 586.59 L1022.78 586.87 L1021.44 587.14 L1020.98 587.23 L1019.65 587.48 L1018.32 587.70 L1016.98 587.92 L1015.63 588.11 L1014.28 588.29 L1012.92 588.46 L1011.56 588.61 L1010.19 588.74 L1008.82 588.85 L1008.62 588.87 L1007.28 588.96 L1005.93 589.04 L1004.58 589.10 L1003.22 589.15 L1001.87 589.18 L1000.52 589.20 L999.16 589.19 L997.81 589.17 L996.45 589.14 L995.10 589.09 L993.75 589.02 L992.40 588.93 L991.06 588.83 L990.86 588.82 L989.49 588.70 L988.12 588.56 L986.76 588.41 L985.40 588.24 L984.05 588.05 L982.70 587.85 L981.37 587.63 L980.04 587.40 L978.71 587.15 L978.25 587.06 L976.90 586.79 L975.57 586.50 L974.25 586.20 L972.93 585.88 L971.63 585.54 L971.03 585.38 L969.71 585.02 L968.40 584.65 L967.11 584.26 L965.83 583.86 L965.13 583.63 L963.83 583.20 L962.55 582.76 L961.29 582.31 L960.04 581.84 L959.25 581.53 L957.99 581.04 L956.75 580.53 L955.53 580.01 L954.68 579.64 L953.45 579.09 L952.24 578.53 L951.36 578.11 L950.15 577.52 L948.95 576.92 L947.78 576.31 L946.85 575.82 L945.68 575.19 L944.52 574.54 L943.57 573.99 L942.42 573.32 L941.29 572.64 L940.32 572.03 L939.19 571.32 L938.09 570.61 L937.10 569.95 L936.01 569.20 L934.94 568.45 L933.94 567.73 L932.88 566.96 L931.88 566.20 L930.83 565.40 L929.81 564.60 L928.80 563.78 L927.79 562.95 L926.79 562.10 L925.80 561.25 L924.83 560.39 L923.83 559.48 L922.88 558.60 L921.88 557.65 L920.96 556.75 L919.97 555.76 L919.06 554.85 L918.18 553.92 L917.20 552.88 L916.35 551.94 L915.38 550.86 L914.55 549.90 L913.60 548.79 L912.79 547.81 L911.86 546.66 L911.07 545.67 L910.16 544.48 L909.40 543.48 L908.51 542.25 L907.78 541.24 L906.91 539.98 L906.21 538.95 L905.36 537.66 L904.69 536.62 L903.87 535.30 L903.22 534.25 L902.43 532.89 L901.81 531.83 L901.04 530.45 L900.46 529.38 L899.72 527.97 L899.17 526.89 L898.45 525.45 L897.94 524.37 L897.25 522.91 L896.59 521.42 L896.11 520.33 L895.48 518.82 L895.03 517.72 L894.44 516.19 L894.02 515.09 L893.46 513.54 L893.08 512.43 L892.55 510.86 L892.05 509.28 L891.70 508.16 L891.24 506.56 L890.93 505.45 L890.50 503.83 L890.10 502.20 L889.83 501.09 L889.47 499.44 L889.23 498.33 L888.90 496.67 L888.70 495.56 L888.41 493.89 L888.15 492.22 L887.99 491.11 L887.76 489.42 L887.64 488.32 L887.45 486.62 L887.30 484.92Z" fill="none" stroke="#f8a010" stroke-opacity="0.5" stroke-width="5" filter="url(#rb)"/></g><g mask="url(#notcap)"><g fill="none" stroke-width="1.2"><path d="M476.2 120.7L475.7 123.1M536.7 118.3L538.2 120.5M647.2 114.5L651.3 116.1M697.8 112.8L704.2 114.6M748.2 111.7L754.7 113.2M796.9 110.7L804.4 112.1M843.9 109.7L854.2 111.4M893.2 109.3L904.8 110.9M941.6 108.8L954.6 110.4M1044.1 108.8L1060 110.4M1099.5 109.1L1120.1 111M1158.8 109.8L1185.1 112M1226.5 111L1256.1 113.3M440.2 123.4L699.5 112.7M790.2 112.4L857.9 109.4M912.8 110.5L958.7 108.4M1003.6 110L1035.6 108.4M1075.9 110.4L1106.1 108.8M1142.7 111.1L1168.3 109.7M1208.1 112.1L1229.5 110.8" stroke="#5c5c5c" stroke-opacity="0.000"/><path d="M475.7 123.1L473.9 131.4M538.2 120.5L543.5 128.1M651.3 116.1L667.9 122.8M704.2 114.6L725.8 121M754.7 113.2L782.3 119.6M804.4 112.1L838.5 118.6M854.2 111.4L893.2 117.7M904.8 110.9L948.8 117.1M954.6 110.4L1000.8 116.2M1060 110.4L1133.6 117.9M1120.1 111L1210.4 119.5M1185.1 112L1291.2 121.1M1256.1 113.3L1292.3 116.2M440.2 127.7L790.2 112.4M440.2 132.5L505.5 129.4M519 128.8L912.8 110.5M835.2 118.3L1003.6 110M953.1 116.9L1075.9 110.4M1045.6 116.7L1142.7 111.1M1123 117.4L1208.1 112.1M1263.5 120.3L1292.7 118.2" stroke="#5c5c5c" stroke-opacity="0.062"/><path d="M473.9 131.4L472.6 137.5M543.5 128.1L547.4 133.7M667.9 122.8L681.1 128M725.8 121L742.8 125.9M782.3 119.6L803 124.4M838.5 118.6L860.7 122.8M893.2 117.7L920.9 122.2M948.8 117.1L969.2 120M1032.1 120.2L1047.6 122.1M1133.6 117.9L1194.2 124.1M1210.4 119.5L1285 126.4M505.5 129.4L519 128.8M440.2 137.9L835.2 118.3M831.7 123.4L953.1 116.9M957.5 121.7L964 121.4M1025.6 117.8L1045.6 116.7M1056 121.6L1123 117.4M1213.9 124.1L1263.5 120.3M1288.5 126.1L1292.1 125.8" stroke="#5c5c5c" stroke-opacity="0.125"/><path d="M472.6 137.5L471.5 142.5M547.4 133.7L550.5 138.3M681.1 128L691.1 132M742.8 125.9L755.6 129.7M803 124.4L818.5 127.9M860.7 122.8L881 126.7M920.9 122.2L944.3 126M1047.6 122.1L1081.5 126.3M1194.2 124.1L1248.3 129.6M1285 126.4L1290.1 126.9M622.6 134.5L831.7 123.4M867.7 126.9L957.5 121.7M1043.3 122.4L1056 121.6M1171.1 127.3L1213.9 124.1M1247.8 129.5L1288.5 126.1" stroke="#5c5c5c" stroke-opacity="0.188"/><path d="M471.5 142.5L470.4 147.4M550.5 138.3L553.2 142.1M691.1 132L700.7 135.8M755.6 129.7L767.9 133.3M818.5 127.9L835.6 131.9M881 126.7L901.1 130.5M944.3 126L949.9 126.9M1081.5 126.3L1115.7 130.6M1248.3 129.6L1290.2 133.8M440.3 144.2L622.6 134.5M749.7 133.7L867.7 126.9M921.8 129.9L945.3 128.5M1128.6 130.5L1171.1 127.3M1215.7 132.2L1247.8 129.5" stroke="#5c5c5c" stroke-opacity="0.250"/><path d="M470.4 147.4L469.6 151.3M553.2 142.1L556 146.2M700.7 135.8L709.6 139.4M767.9 133.3L779.4 136.6M835.6 131.9L849.7 135.1M901.1 130.5L917.5 133.7M1115.7 130.6L1149.6 134.9M440.3 151.4L749.7 133.7M844.9 134.7L921.8 129.9M1092 133.2L1128.6 130.5M1181.4 135.1L1215.7 132.2M1266.7 137.8L1291.2 135.5" stroke="#5c5c5c" stroke-opacity="0.312"/><path d="M469.6 151.3L468.7 155.5M556 146.2L558.6 150M709.6 139.4L717.7 142.6M779.4 136.6L789.7 139.6M849.7 135.1L862.3 138M917.5 133.7L932.2 136.5M1068.8 134.1L1088.9 136.9M1149.6 134.9L1180.2 138.7M738.8 141.3L844.9 134.7M1067.8 135L1092 133.2M1149.3 137.8L1181.4 135.1M1240.8 140.3L1266.7 137.8" stroke="#5c5c5c" stroke-opacity="0.375"/><path d="M468.7 155.5L467.7 160M558.6 150L561.4 154.1M717.7 142.6L724.7 145.4M789.7 139.6L800.8 142.9M862.3 138L875.8 141.2M1088.9 136.9L1115.2 140.7M1180.2 138.7L1215.5 143.1M440.3 159.9L738.8 141.3M1115 140.6L1149.3 137.8M1213.3 142.9L1240.8 140.3" stroke="#5c5c5c" stroke-opacity="0.438"/><path d="M467.7 160L466.8 164M561.4 154.1L563.9 157.6M724.7 145.4L733.9 149.1M800.8 142.9L812.8 146.4M875.8 141.2L890.4 144.5M1115.2 140.7L1142.4 144.5M1215.5 143.1L1253.3 147.9M1081.8 143.4L1115 140.6M1189.2 145.1L1213.3 142.9M1285.6 148.6L1290.2 148.1" stroke="#5c5c5c" stroke-opacity="0.500"/><path d="M466.8 164L465.9 168.2M563.9 157.6L566.5 161.4M733.9 149.1L741.9 152.2M812.8 146.4L823 149.4M890.4 144.5L902.9 147.4M1142.4 144.5L1171 148.5M1253.3 147.9L1290.1 152.5M910.3 146.8L917.1 146.3M1080.2 143.5L1081.8 143.4M1157.3 148.2L1189.2 145.1M1261.8 151.2L1285.6 148.6" stroke="#5c5c5c" stroke-opacity="0.562"/><path d="M465.9 168.2L464.9 172.8M566.5 161.4L569.3 165.4M741.9 152.2L750.4 155.6M823 149.4L834 152.6M902.9 147.4L916.1 150.5M1086.8 149.1L1093.8 150.3M1171 148.5L1201.9 152.9M848.7 151.5L910.3 146.8M1128.5 150.9L1157.3 148.2M1236.7 153.9L1261.8 151.2" stroke="#5c5c5c" stroke-opacity="0.625"/><path d="M464.9 172.8L464.1 176.5M569.3 165.4L571.5 168.6M750.4 155.6L757.2 158.3M834 152.6L845.6 156M1093.8 150.3L1118 154.2M1201.9 152.9L1236.5 157.8M763.3 157.9L848.7 151.5M1097.8 153.8L1128.5 150.9M1210.2 156.8L1236.7 153.9" stroke="#5c5c5c" stroke-opacity="0.688"/><path d="M464.1 176.5L462.9 181.7M571.5 168.6L574.7 173.3M757.2 158.3L766.8 162.1M845.6 156L854.9 158.7M1118 154.2L1144.8 158.5M1236.5 157.8L1276.3 163.4M440.4 182.1L763.3 157.9M1092.2 154.3L1097.8 153.8M1183.9 159.6L1210.2 156.8" stroke="#5c5c5c" stroke-opacity="0.750"/><path d="M462.9 181.7L462 186M574.7 173.3L577.3 177M766.8 162.1L777.1 166.3M854.9 158.7L867.6 162.4M1144.8 158.5L1175.9 163.6M1276.3 163.4L1290.2 165.4M849.5 162.8L904.5 158.2M1154.2 162.9L1183.9 159.6M1271 167.5L1294.1 164.5" stroke="#5c5c5c" stroke-opacity="0.812"/><path d="M462 186L460.6 192.1M577.3 177L580.9 182.3M777.1 166.3L786.4 169.9M867.6 162.4L882.7 166.8M1175.9 163.6L1214.6 169.9M739.8 172L849.5 162.8M1118.9 166.7L1154.2 162.9M1242.6 171.1L1271 167.5" stroke="#5c5c5c" stroke-opacity="0.875"/><path d="M460.6 192.1L458.9 200M580.9 182.3L585.6 189M786.4 169.9L801.3 175.9M882.7 166.8L894.6 170.3M1105.4 169.5L1125.8 173.4M1214.6 169.9L1273.6 179.5M440.5 197L739.8 172M1104.7 168.2L1118.9 166.7M1203.9 176L1242.6 171.1" stroke="#5c5c5c" stroke-opacity="0.938"/><path d="M458.9 200L440 286.6M585.6 189L959.5 730.3M801.3 175.9L876.4 205.8M1127 305.6L1290.9 370.9M1130.8 239.3L1290.5 286M1121.1 197.8L1290.2 236.8M1125.8 173.4L1290 204.7M1273.6 179.5L1290.3 182.2M440.6 215.9L892.8 173.1M440.7 240.4L881.8 192.5M440.8 273.5L873 218.3M1116.5 187.2L1203.9 176M441 320.8L869.6 254.4M1127 214.5L1290.2 189.2M441.3 393.8L874.3 308.5M1130.8 257.9L1290.1 226.5M610.9 729.1L1290.1 435.1" stroke="#5c5c5c" stroke-opacity="1.000"/><path d="M991.7 108.7L1006 110.3M1269.9 113.5L1290.4 112.1" stroke="#6a6a6a" stroke-opacity="0.000"/><path d="M1006 110.3L1066.3 117M1195.2 118.6L1269.9 113.5" stroke="#6a6a6a" stroke-opacity="0.062"/><path d="M1066.3 117L1116.2 122.7M1135.6 122.7L1195.2 118.6" stroke="#6a6a6a" stroke-opacity="0.125"/><path d="M1116.2 122.7L1158.7 127.4M1085.8 126L1135.6 122.7" stroke="#6a6a6a" stroke-opacity="0.188"/><path d="M1158.7 127.4L1202.7 132.4M1059.1 127.9L1085.8 126" stroke="#6a6a6a" stroke-opacity="0.250"/><path d="M1202.7 132.4L1244.9 137.1" stroke="#6a6a6a" stroke-opacity="0.312"/><path d="M1244.9 137.1L1290.3 142.2M928.3 136.8L930.6 136.6" stroke="#6a6a6a" stroke-opacity="0.375"/><path d="M865.2 141L928.3 136.8" stroke="#6a6a6a" stroke-opacity="0.438"/><path d="M783.5 146.6L865.2 141" stroke="#6a6a6a" stroke-opacity="0.500"/><path d="M634.9 156.7L783.5 146.6" stroke="#6a6a6a" stroke-opacity="0.562"/><path d="M440.4 169.9L634.9 156.7" stroke="#6a6a6a" stroke-opacity="0.625"/></g></g><g clip-path="url(#cap)" filter="url(#lite)"><g fill="none" stroke-width="1.2"><path d="M476.2 120.7L475.7 123.1M536.7 118.3L538.2 120.5M647.2 114.5L651.3 116.1M697.8 112.8L704.2 114.6M748.2 111.7L754.7 113.2M796.9 110.7L804.4 112.1M843.9 109.7L854.2 111.4M893.2 109.3L904.8 110.9M941.6 108.8L954.6 110.4M1044.1 108.8L1060 110.4M1099.5 109.1L1120.1 111M1158.8 109.8L1185.1 112M1226.5 111L1256.1 113.3M440.2 123.4L699.5 112.7M790.2 112.4L857.9 109.4M912.8 110.5L958.7 108.4M1003.6 110L1035.6 108.4M1075.9 110.4L1106.1 108.8M1142.7 111.1L1168.3 109.7M1208.1 112.1L1229.5 110.8" stroke="#5c5c5c" stroke-opacity="0.000"/><path d="M475.7 123.1L473.9 131.4M538.2 120.5L543.5 128.1M651.3 116.1L667.9 122.8M704.2 114.6L725.8 121M754.7 113.2L782.3 119.6M804.4 112.1L838.5 118.6M854.2 111.4L893.2 117.7M904.8 110.9L948.8 117.1M954.6 110.4L1000.8 116.2M1060 110.4L1133.6 117.9M1120.1 111L1210.4 119.5M1185.1 112L1291.2 121.1M1256.1 113.3L1292.3 116.2M440.2 127.7L790.2 112.4M440.2 132.5L505.5 129.4M519 128.8L912.8 110.5M835.2 118.3L1003.6 110M953.1 116.9L1075.9 110.4M1045.6 116.7L1142.7 111.1M1123 117.4L1208.1 112.1M1263.5 120.3L1292.7 118.2" stroke="#5c5c5c" stroke-opacity="0.062"/><path d="M473.9 131.4L472.6 137.5M543.5 128.1L547.4 133.7M667.9 122.8L681.1 128M725.8 121L742.8 125.9M782.3 119.6L803 124.4M838.5 118.6L860.7 122.8M893.2 117.7L920.9 122.2M948.8 117.1L969.2 120M1032.1 120.2L1047.6 122.1M1133.6 117.9L1194.2 124.1M1210.4 119.5L1285 126.4M505.5 129.4L519 128.8M440.2 137.9L835.2 118.3M831.7 123.4L953.1 116.9M957.5 121.7L964 121.4M1025.6 117.8L1045.6 116.7M1056 121.6L1123 117.4M1213.9 124.1L1263.5 120.3M1288.5 126.1L1292.1 125.8" stroke="#5c5c5c" stroke-opacity="0.125"/><path d="M472.6 137.5L471.5 142.5M547.4 133.7L550.5 138.3M681.1 128L691.1 132M742.8 125.9L755.6 129.7M803 124.4L818.5 127.9M860.7 122.8L881 126.7M920.9 122.2L944.3 126M1047.6 122.1L1081.5 126.3M1194.2 124.1L1248.3 129.6M1285 126.4L1290.1 126.9M622.6 134.5L831.7 123.4M867.7 126.9L957.5 121.7M1043.3 122.4L1056 121.6M1171.1 127.3L1213.9 124.1M1247.8 129.5L1288.5 126.1" stroke="#5c5c5c" stroke-opacity="0.188"/><path d="M471.5 142.5L470.4 147.4M550.5 138.3L553.2 142.1M691.1 132L700.7 135.8M755.6 129.7L767.9 133.3M818.5 127.9L835.6 131.9M881 126.7L901.1 130.5M944.3 126L949.9 126.9M1081.5 126.3L1115.7 130.6M1248.3 129.6L1290.2 133.8M440.3 144.2L622.6 134.5M749.7 133.7L867.7 126.9M921.8 129.9L945.3 128.5M1128.6 130.5L1171.1 127.3M1215.7 132.2L1247.8 129.5" stroke="#5c5c5c" stroke-opacity="0.250"/><path d="M470.4 147.4L469.6 151.3M553.2 142.1L556 146.2M700.7 135.8L709.6 139.4M767.9 133.3L779.4 136.6M835.6 131.9L849.7 135.1M901.1 130.5L917.5 133.7M1115.7 130.6L1149.6 134.9M440.3 151.4L749.7 133.7M844.9 134.7L921.8 129.9M1092 133.2L1128.6 130.5M1181.4 135.1L1215.7 132.2M1266.7 137.8L1291.2 135.5" stroke="#5c5c5c" stroke-opacity="0.312"/><path d="M469.6 151.3L468.7 155.5M556 146.2L558.6 150M709.6 139.4L717.7 142.6M779.4 136.6L789.7 139.6M849.7 135.1L862.3 138M917.5 133.7L932.2 136.5M1068.8 134.1L1088.9 136.9M1149.6 134.9L1180.2 138.7M738.8 141.3L844.9 134.7M1067.8 135L1092 133.2M1149.3 137.8L1181.4 135.1M1240.8 140.3L1266.7 137.8" stroke="#5c5c5c" stroke-opacity="0.375"/><path d="M468.7 155.5L467.7 160M558.6 150L561.4 154.1M717.7 142.6L724.7 145.4M789.7 139.6L800.8 142.9M862.3 138L875.8 141.2M1088.9 136.9L1115.2 140.7M1180.2 138.7L1215.5 143.1M440.3 159.9L738.8 141.3M1115 140.6L1149.3 137.8M1213.3 142.9L1240.8 140.3" stroke="#5c5c5c" stroke-opacity="0.438"/><path d="M467.7 160L466.8 164M561.4 154.1L563.9 157.6M724.7 145.4L733.9 149.1M800.8 142.9L812.8 146.4M875.8 141.2L890.4 144.5M1115.2 140.7L1142.4 144.5M1215.5 143.1L1253.3 147.9M1081.8 143.4L1115 140.6M1189.2 145.1L1213.3 142.9M1285.6 148.6L1290.2 148.1" stroke="#5c5c5c" stroke-opacity="0.500"/><path d="M466.8 164L465.9 168.2M563.9 157.6L566.5 161.4M733.9 149.1L741.9 152.2M812.8 146.4L823 149.4M890.4 144.5L902.9 147.4M1142.4 144.5L1171 148.5M1253.3 147.9L1290.1 152.5M910.3 146.8L917.1 146.3M1080.2 143.5L1081.8 143.4M1157.3 148.2L1189.2 145.1M1261.8 151.2L1285.6 148.6" stroke="#5c5c5c" stroke-opacity="0.562"/><path d="M465.9 168.2L464.9 172.8M566.5 161.4L569.3 165.4M741.9 152.2L750.4 155.6M823 149.4L834 152.6M902.9 147.4L916.1 150.5M1086.8 149.1L1093.8 150.3M1171 148.5L1201.9 152.9M848.7 151.5L910.3 146.8M1128.5 150.9L1157.3 148.2M1236.7 153.9L1261.8 151.2" stroke="#5c5c5c" stroke-opacity="0.625"/><path d="M464.9 172.8L464.1 176.5M569.3 165.4L571.5 168.6M750.4 155.6L757.2 158.3M834 152.6L845.6 156M1093.8 150.3L1118 154.2M1201.9 152.9L1236.5 157.8M763.3 157.9L848.7 151.5M1097.8 153.8L1128.5 150.9M1210.2 156.8L1236.7 153.9" stroke="#5c5c5c" stroke-opacity="0.688"/><path d="M464.1 176.5L462.9 181.7M571.5 168.6L574.7 173.3M757.2 158.3L766.8 162.1M845.6 156L854.9 158.7M1118 154.2L1144.8 158.5M1236.5 157.8L1276.3 163.4M440.4 182.1L763.3 157.9M1092.2 154.3L1097.8 153.8M1183.9 159.6L1210.2 156.8" stroke="#5c5c5c" stroke-opacity="0.750"/><path d="M462.9 181.7L462 186M574.7 173.3L577.3 177M766.8 162.1L777.1 166.3M854.9 158.7L867.6 162.4M1144.8 158.5L1175.9 163.6M1276.3 163.4L1290.2 165.4M849.5 162.8L904.5 158.2M1154.2 162.9L1183.9 159.6M1271 167.5L1294.1 164.5" stroke="#5c5c5c" stroke-opacity="0.812"/><path d="M462 186L460.6 192.1M577.3 177L580.9 182.3M777.1 166.3L786.4 169.9M867.6 162.4L882.7 166.8M1175.9 163.6L1214.6 169.9M739.8 172L849.5 162.8M1118.9 166.7L1154.2 162.9M1242.6 171.1L1271 167.5" stroke="#5c5c5c" stroke-opacity="0.875"/><path d="M460.6 192.1L458.9 200M580.9 182.3L585.6 189M786.4 169.9L801.3 175.9M882.7 166.8L894.6 170.3M1105.4 169.5L1125.8 173.4M1214.6 169.9L1273.6 179.5M440.5 197L739.8 172M1104.7 168.2L1118.9 166.7M1203.9 176L1242.6 171.1" stroke="#5c5c5c" stroke-opacity="0.938"/><path d="M458.9 200L440 286.6M585.6 189L959.5 730.3M801.3 175.9L876.4 205.8M1127 305.6L1290.9 370.9M1130.8 239.3L1290.5 286M1121.1 197.8L1290.2 236.8M1125.8 173.4L1290 204.7M1273.6 179.5L1290.3 182.2M440.6 215.9L892.8 173.1M440.7 240.4L881.8 192.5M440.8 273.5L873 218.3M1116.5 187.2L1203.9 176M441 320.8L869.6 254.4M1127 214.5L1290.2 189.2M441.3 393.8L874.3 308.5M1130.8 257.9L1290.1 226.5M610.9 729.1L1290.1 435.1" stroke="#5c5c5c" stroke-opacity="1.000"/><path d="M991.7 108.7L1006 110.3M1269.9 113.5L1290.4 112.1" stroke="#6a6a6a" stroke-opacity="0.000"/><path d="M1006 110.3L1066.3 117M1195.2 118.6L1269.9 113.5" stroke="#6a6a6a" stroke-opacity="0.062"/><path d="M1066.3 117L1116.2 122.7M1135.6 122.7L1195.2 118.6" stroke="#6a6a6a" stroke-opacity="0.125"/><path d="M1116.2 122.7L1158.7 127.4M1085.8 126L1135.6 122.7" stroke="#6a6a6a" stroke-opacity="0.188"/><path d="M1158.7 127.4L1202.7 132.4M1059.1 127.9L1085.8 126" stroke="#6a6a6a" stroke-opacity="0.250"/><path d="M1202.7 132.4L1244.9 137.1" stroke="#6a6a6a" stroke-opacity="0.312"/><path d="M1244.9 137.1L1290.3 142.2M928.3 136.8L930.6 136.6" stroke="#6a6a6a" stroke-opacity="0.375"/><path d="M865.2 141L928.3 136.8" stroke="#6a6a6a" stroke-opacity="0.438"/><path d="M783.5 146.6L865.2 141" stroke="#6a6a6a" stroke-opacity="0.500"/><path d="M634.9 156.7L783.5 146.6" stroke="#6a6a6a" stroke-opacity="0.562"/><path d="M440.4 169.9L634.9 156.7" stroke="#6a6a6a" stroke-opacity="0.625"/></g></g><path d="M-49634.2 14086.1 L890.9 399.9M1124.6 336.6 L2174.7 52.1" stroke="#e8405e" stroke-width="2.2" fill="none"/><path d="M491.4 52.5 L872 290.3M1075.7 417.5 L372379.9 232368.8" stroke="#3d9cf0" stroke-width="2.2" fill="none"/><path d="M999.5 1919.3 L1000 589.5M1000.2 116.6 L1042.4 -106514.2" stroke="#8fd13a" stroke-width="2.2" fill="none"/><path d="M1082.4 284.8 L1093 282.2 L1102.3 279.5 L1110.4 276.5 L1117.2 273.3 L1122.5 270.1 L1124.9 268.3 L1126.8 266.4 L1128.4 264.6 L1129.5 262.7 L1130.3 260.9 L1130.7 259.1M869.6 258.9 L870.2 261.4 L871.4 263.8 L873.3 266.3 L875.6 268.4 L878.9 270.8 L882.3 272.9 L886.3 274.9 L890.9 276.9 L896 278.8 L901.6 280.6 L914.4 284 L929 286.9 L945.2 289.2 L962.7 291 L979.7 292 L998.4 292.4 L1015.9 292.2 L1033.1 291.3 L1050.8 289.7 L1067.4 287.5 L1082.4 284.8M1069.9 530.3 L1079.1 525.9 L1087.2 521.1 L1094.3 515.8 L1097.1 513.3 L1100.2 510.3 L1102.6 507.7 L1105.1 504.5 L1107.2 501.2 L1109 497.9 L1110.5 494.6 L1111.6 491.3 L1112.4 488 L1112.8 484.7M887.2 484.4 L887.9 488.8 L889.1 493.2 L891 497.6 L893.1 501.4 L896 505.7 L899.1 509.4 L902.7 513 L906.7 516.5 L911.2 519.9 L916.1 523.1 L921.4 526.1 L927.1 529 L933.2 531.6 L939.7 534 L946.4 536.2 L953.5 538.1 L960.8 539.8 L968.3 541.1 L976 542.2 L982.7 542.9 L990.6 543.4 L998.6 543.6 L1005.4 543.6 L1013.4 543.2 L1020.1 542.7 L1027.9 541.7 L1035.5 540.5 L1043 539 L1050.1 537.2 L1057.1 535.2 L1063.7 532.9 L1069.9 530.3M1069.9 530.3 L1082.4 284.8M898.7 508.9 L881.8 272.6M1082.4 284.8 L1082.7 277.2 L1082.6 269.5 L1082.4 261.6 L1081.8 253.7 L1081 245.8 L1079.9 237.8 L1077.3 223.3 L1073.7 209 L1071.5 201.4 L1069 194 L1063.9 181 L1060.8 174.2 L1057.6 167.8 L1054.7 162.6 L1051.2 156.7 L1047.5 151.2 L1043.7 146 L1039.8 141.3 L1035.8 136.9 L1031.8 132.9 L1027.7 129.4 L1023.5 126.3 L1019.4 123.6 L1015.2 121.3 L1010.4 119.2 L1006.3 117.9 L1002.2 116.9 L998.2 116.4 L993.6 116.3M1015.2 117 L1008.2 116.5 L1002.2 116.5 L996.1 116.9 L990 117.8 L982.8 119.2 L976.6 120.9 L970.4 123 L964.3 125.6 L958.2 128.5 L952.3 131.9 L946.4 135.6 L940.7 139.7 L935.1 144.2 L929.7 149 L924.5 154.2 L919.5 159.7 L914.8 165.5 L910.3 171.5 L906.1 177.9 L902.2 184.4 L898.5 191.2 L895.3 198.1 L892.3 205.2 L889.7 212.5 L887.4 219.8 L885.5 227.2 L884 234.6 L882.8 242.1 L882 249.5 L881.5 256.9 L881.5 264.2 L881.8 272.6M1047.9 578.5 L1050.4 577.1 L1052.5 575.7 L1054.8 573.7 L1056.7 571.8 L1058.8 569.2 L1060.4 566.8 L1063.3 561.3 L1066 554.3 L1067.9 547 L1069.2 539 L1069.9 530.3M898.7 508.9 L899.2 514.1 L900.2 519.9 L901.6 525.5 L903.3 530.8 L905.4 535.8 L907.9 540.5 L910.7 544.9 L913.8 549" fill="none" stroke="#b8b4c4" stroke-opacity="0.5" stroke-width="1.2"/><path d="M900.3 527.6 L1025.4 480.9M1025.4 480.9 L1094.9 536.7M1031.9 121.5 L1025.4 480.9" fill="none" stroke="#ffb000" stroke-opacity="0.5" stroke-width="1.3"/><path d="M814.9 112.1 L1032.2 102.5M1032.2 102.5 L1205.9 118.5M1205.9 118.5 L946.6 136.4M946.6 136.4 L814.9 112.1M858.9 543.1 L899.7 527.8M1095.4 537.1 L1152.7 583M1152.7 583 L962.7 681.7M962.7 681.7 L858.9 543.1M814.9 112.1 L858.9 543.1M1032.2 102.5 L1031.9 119.9M1205.9 118.5 L1152.7 583M946.6 136.4 L962.7 681.7" fill="none" stroke="#ffc01a" stroke-width="2.7" stroke-linejoin="round"/><circle cx="1000.1" cy="370.3" r="107" fill="none" stroke="#e6dedb" stroke-opacity="0.9" stroke-width="1.8"/><path d="M1094.9 370.4 L1095.3 372.5 L1095.5 374.5 L1095.5 376.6 L1095.2 378.7 L1094.6 380.8 L1093.7 382.9 L1091.3 386.9 L1087.8 390.8 L1083.2 394.6 L1077.7 398.2 L1071.5 401.4 L1064.5 404.4 L1056.7 407 L1048.2 409.3 L1039.5 411.2 L1029.9 412.7 L1020.4 413.8 L1010.2 414.5 L1000.3 414.7 L990.4 414.5 L980.2 413.9 L970.7 412.8 L961.1 411.3 L952 409.3 L943.5 407 L935.7 404.4 L928.7 401.4 L922.5 398.2 L916.9 394.6 L912.4 390.8 L908.9 386.9 L906.5 382.9 L905.6 380.8 L905 378.7 L904.7 376.6 L904.6 374.5 L904.9 372.4 L905.3 370.4" fill="none" stroke="#a2e41c" stroke-width="4" stroke-linecap="round"/><path d="M1050.4 290.4 L1047.4 288.1 L1044.2 286.1 L1040.8 284.3 L1037.6 282.8 L1034 281.4 L1030.2 280.2 L1026.4 279.3 L1022.7 278.7 L1018.6 278.2 L1014.8 278 L1007 278.4 L998.7 279.7 L990.6 281.9 L982.1 285.1 L974.1 289.1 L966.3 293.9 L958.7 299.6 L951.5 306 L944.8 313.1 L938.6 320.8 L933.2 328.6 L928.5 336.8 L924.2 345.7 L920.8 354.8 L918.1 364 L916.3 373.3 L915.3 382.4 L915.2 391.3 L915.9 399.9 L917.4 408.1 L919.8 416.2 L922.9 423.4 L924.7 426.7 L926.8 430.2 L929 433.2 L931.5 436.3 L934.2 439.2 L937 441.8 L939.7 444.1 L942.8 446.3 L946.1 448.3 L949.4 450.1" fill="none" stroke="#4ea6f6" stroke-width="4" stroke-linecap="round"/><path d="M975.3 279.3 L977.5 278.2 L979.9 277.4 L982.4 276.8 L985 276.5 L987.6 276.4 L990.3 276.6 L995.6 277.7 L1001.1 279.8 L1006.7 283 L1012.3 287.2 L1017.7 292.1 L1023 297.9 L1028.1 304.5 L1033.1 311.9 L1037.7 320 L1042 328.7 L1045.7 337.4 L1049.1 346.9 L1051.9 356.3 L1054.3 365.8 L1056.1 375.7 L1057.4 385.2 L1058.1 394.8 L1058.2 404.1 L1057.7 413 L1056.7 421.3 L1055.1 428.9 L1052.9 435.9 L1050.2 442.3 L1047.1 447.7 L1043.5 452.3 L1039.5 456 L1037.2 457.5 L1034.9 458.8 L1032.6 459.8 L1030.2 460.6 L1027.7 461.1 L1025.1 461.3" fill="none" stroke="#f2506c" stroke-width="4" stroke-linecap="round"/><path d="M1000.1 370.3L1092.8 345.2" stroke="#f2506c" stroke-width="3.5"/><path d="M1113.8 339.5 L1095.7 351.7 L1095.3 352.0 L1094.9 352.2 L1094.4 352.3 L1093.9 352.3 L1093.4 352.2 L1092.9 352.1 L1092.4 351.9 L1092.0 351.6 L1091.5 351.2 L1091.0 350.8 L1090.6 350.3 L1090.1 349.8 L1089.8 349.2 L1089.4 348.6 L1089.1 347.9 L1088.8 347.2 L1088.6 346.5 L1088.4 345.8 L1088.2 345.1 L1088.2 344.3 L1088.1 343.6 L1088.1 342.9 L1088.2 342.2 L1088.3 341.5 L1088.5 340.9 L1088.7 340.4 L1088.9 339.8 L1089.2 339.4 L1089.6 339.0 L1090.0 338.6 L1090.4 338.4 L1090.8 338.2 L1091.3 338.1 L1091.8 338.1Z" fill="#f2506c"/><path d="M1014.9 355.1 L1015.1 338.5 L1025.6 344.2 L1025.3 361.1Z" fill="#f2506c"/><path d="M1000.1 370.3L1000.1 252.7" stroke="#a2e41c" stroke-width="3.5"/><path d="M991.6 252.8 L991.6 252.6 L1000.1 220.5 L1008.6 252.6 L1008.7 252.8 L1008.6 253.0 L1008.4 253.3 L1008.1 253.5 L1007.8 253.7 L1007.4 253.9 L1006.8 254.1 L1006.2 254.3 L1005.6 254.4 L1004.9 254.6 L1004.1 254.7 L1003.3 254.8 L1002.4 254.9 L1001.5 254.9 L1000.6 254.9 L999.7 254.9 L998.8 254.9 L998.0 254.9 L997.1 254.8 L996.3 254.7 L995.5 254.6 L994.8 254.4 L994.1 254.3 L993.5 254.1 L993.0 253.9 L992.5 253.7 L992.2 253.5 L991.9 253.3 L991.7 253.1Z" fill="#a2e41c"/><path d="M1036.2 373.4 L1046.7 379.5 L1060.7 375.4 L1050.1 369.4Z" fill="#a2e41c"/><path d="M1000.1 370.3L1076.4 417.9" stroke="#4ea6f6" stroke-width="3.5"/><path d="M1099.1 432.2 L1073.1 426.2 L1072.4 426.1 L1071.8 425.8 L1071.3 425.5 L1070.8 425.1 L1070.3 424.6 L1070.0 424.0 L1069.7 423.4 L1069.4 422.7 L1069.3 422.0 L1069.2 421.2 L1069.2 420.3 L1069.3 419.5 L1069.4 418.6 L1069.7 417.7 L1070.0 416.8 L1070.3 416.0 L1070.8 415.1 L1071.3 414.3 L1071.9 413.5 L1072.5 412.8 L1073.1 412.2 L1073.8 411.5 L1074.5 411.0 L1075.3 410.6 L1076.0 410.2 L1076.8 409.9 L1077.5 409.7 L1078.2 409.6 L1079.0 409.6 L1079.6 409.7 L1080.3 409.8 L1080.9 410.1 L1081.4 410.4 L1081.9 410.8 L1082.3 411.3Z" fill="#4ea6f6"/><path d="M1021.6 341.1 L1035.5 337.6 L1035.9 321.8 L1021.8 325.1Z" fill="#4ea6f6"/></g><rect x="444" y="0" width="2" height="720" fill="#242424"/></svg>
<div style="position:absolute;left:75px;top:378px;width:303px;height:28px;background:#4a4a4a;border-radius:5px"></div><svg width="446" height="720" style="position:absolute;left:0;top:0"><path d="M52 294 V392 H60" fill="none" stroke="#6b6b6b" stroke-width="2"/><path d="M67.5 406 V420.5 H75" fill="none" stroke="#505050" stroke-width="1"/><path d="M48.0 277.5 L52.5 282 L57.0 277.5" fill="none" stroke="#858585" stroke-width="2" stroke-linecap="round" stroke-linejoin="round"/><circle cx="75" cy="280" r="6.5" fill="none" stroke="#e2e2e2" stroke-width="2.2"/><path d="M63.0 305.5 L67.5 310 L72.0 305.5" fill="none" stroke="#858585" stroke-width="2" stroke-linecap="round" stroke-linejoin="round"/><circle cx="90" cy="308" r="6.5" fill="none" stroke="#fa5c5c" stroke-width="2.2"/><path d="M382.8 308 C385.7 297.7 398.3 297.7 401.2 308 C398.3 318.3 385.7 318.3 382.8 308Z" fill="#e4e4e4"/><circle cx="392" cy="308" r="4.9" fill="#2a2a2a"/><circle cx="392" cy="308" r="2.3" fill="#e4e4e4"/><defs><clipPath id="gl"><rect x="95" y="326" width="10" height="20"/></clipPath><clipPath id="gr"><rect x="105" y="326" width="10" height="20"/></clipPath></defs><g clip-path="url(#gl)" stroke="#fa5c5c"><circle cx="105" cy="336" r="7.9" fill="none" stroke-width="2.2"/><ellipse cx="105" cy="336" rx="3.4" ry="7.9" fill="none" stroke-width="1.8"/><path d="M97 336.6H113" stroke-width="1.8"/></g><g clip-path="url(#gr)" stroke="#5a8cff"><circle cx="105" cy="336" r="7.9" fill="none" stroke-width="2.2"/><ellipse cx="105" cy="336" rx="3.4" ry="7.9" fill="none" stroke-width="1.8"/><path d="M97 336.6H113" stroke-width="1.8"/></g><circle cx="104.8" cy="364" r="4.3" fill="#fa5c5c"/><path d="M111.60 364.00L114.00 364.00M109.47 368.67L110.88 370.08M104.80 370.80L104.80 373.20M100.13 368.67L98.72 370.08M98.00 364.00L95.60 364.00M100.13 359.33L98.72 357.92M104.80 357.20L104.80 354.80M109.47 359.33L110.88 357.92" stroke="#fa5c5c" stroke-width="2.3" stroke-linecap="round"/><path d="M382.8 364 C385.7 353.7 398.3 353.7 401.2 364 C398.3 374.3 385.7 374.3 382.8 364Z" fill="#e4e4e4"/><circle cx="392" cy="364" r="4.9" fill="#2a2a2a"/><circle cx="392" cy="364" r="2.3" fill="#e4e4e4"/><path d="M63.0 389.5 L67.5 394 L72.0 389.5" fill="none" stroke="#858585" stroke-width="2" stroke-linecap="round" stroke-linejoin="round"/><path d="M83 385H97V399H83ZM83 385L97 399" fill="none" stroke="#fa5c5c" stroke-width="2.4"/><circle cx="83" cy="385" r="2.5" fill="#fa5c5c"/><circle cx="83" cy="399" r="2.5" fill="#fa5c5c"/><circle cx="97" cy="385" r="2.5" fill="#fa5c5c"/><circle cx="97" cy="399" r="2.5" fill="#fa5c5c"/><path d="M382.8 392 C385.7 381.7 398.3 381.7 401.2 392 C398.3 402.3 385.7 402.3 382.8 392Z" fill="#e4e4e4"/><circle cx="392" cy="392" r="4.9" fill="#2a2a2a"/><circle cx="392" cy="392" r="2.3" fill="#e4e4e4"/><path d="M78.0 417.5 L82.5 422 L87.0 417.5" fill="none" stroke="#858585" stroke-width="2" stroke-linecap="round" stroke-linejoin="round"/><rect x="96.7" y="411.7" width="16.6" height="16.6" rx="2.5" fill="none" stroke="#fa5c5c" stroke-width="1.6"/><rect x="99.0" y="414.0" width="2.8" height="2.8" rx="0.8" fill="#fa5c5c"/><rect x="99.0" y="423.20000000000005" width="2.8" height="2.8" rx="0.8" fill="#fa5c5c"/><rect x="108.19999999999999" y="414.0" width="2.8" height="2.8" rx="0.8" fill="#fa5c5c"/><rect x="108.19999999999999" y="423.20000000000005" width="2.8" height="2.8" rx="0.8" fill="#fa5c5c"/><path d="M382.8 420 C385.7 409.7 398.3 409.7 401.2 420 C398.3 430.3 385.7 430.3 382.8 420Z" fill="#e4e4e4"/><circle cx="392" cy="420" r="4.9" fill="#2a2a2a"/><circle cx="392" cy="420" r="2.3" fill="#e4e4e4"/><path d="M120.00 439.80 L127.10 443.90 L127.10 452.10 L120.00 456.20 L112.90 452.10 L112.90 443.90Z" fill="none" stroke="#fa5c5c" stroke-width="2.6" stroke-linejoin="round"/><path d="M113.2 444.4L120 448.3L126.8 444.4M120 448.3V456" fill="none" stroke="#fa5c5c" stroke-width="2.2"/><path d="M382.8 448 C385.7 437.7 398.3 437.7 401.2 448 C398.3 458.3 385.7 458.3 382.8 448Z" fill="#e4e4e4"/><circle cx="392" cy="448" r="4.9" fill="#2a2a2a"/><circle cx="392" cy="448" r="2.3" fill="#e4e4e4"/></svg><div class="t" style="left:91.25px;top:268.8px;color:#d2d2d2;letter-spacing:0.38px">Main</div><div class="t" style="left:107.5px;top:296.8px;color:#d2d2d2;letter-spacing:0.1px">World3D</div><div class="t" style="left:122.2px;top:324.8px;color:#d2d2d2;letter-spacing:0.02px">WorldEnvironment</div><div class="t" style="left:120.8px;top:352.8px;color:#d2d2d2;letter-spacing:0.2px">DirectionalLight3D</div><div class="t" style="left:106.5px;top:380.8px;color:#ffffff;letter-spacing:0.29px">MeshInstance3D</div><div class="t" style="left:120.8px;top:408.8px;color:#d2d2d2;letter-spacing:0.18px">StaticBody3D</div><div class="t" style="left:136.6px;top:436.8px;color:#d2d2d2;letter-spacing:0.08px">CollisionShape3D</div>
<div style="position:absolute;left:473px;top:179px;width:306px;height:362.5px;background:#2a2a2a;border-radius:5px 5px 0 0;box-shadow:inset -2px 0 0 #252525, 0 0 0 0.6px rgba(15,15,15,0.6)"></div><div class="ttl" style="left:473px;width:306px;top:184px;text-align:center;padding-right:0px">Create Collision Shape</div><svg width="24" height="24" style="position:absolute;left:750px;top:182px"><circle cx="12" cy="12" r="9.4" fill="#3bab50" stroke="#102010" stroke-width="0.8"/><path d="M8.2 8.2L15.8 15.8M15.8 8.2L8.2 15.8" stroke="#fff" stroke-width="2.3" stroke-linecap="round"/></svg><div class="t dl" style="left:495.5px;top:228.7px">Collision Shape Placement</div><div class="t dl" style="left:495.5px;top:315.2px">Collision Shape Type</div><div class="t dl" style="left:495.5px;top:402.7px">Alignment Axis</div><div style="position:absolute;left:485px;top:263px;width:282px;height:40.5px;background:#444444;border-radius:5px"></div><div class="t dd" style="left:495.5px;top:272.25px">Static Body Child</div><svg width="16" height="10" style="position:absolute;left:741.5px;top:278.5px"><path d="M2.5 2.5L8 7.8L13.5 2.5" fill="none" stroke="#c8c8c8" stroke-width="2.2" stroke-linecap="round" stroke-linejoin="round"/></svg><div style="position:absolute;left:485px;top:350px;width:282px;height:40.5px;background:#444444;border-radius:5px"></div><div class="t dd" style="left:495.5px;top:359.25px">Capsule</div><svg width="16" height="10" style="position:absolute;left:741.5px;top:365.5px"><path d="M2.5 2.5L8 7.8L13.5 2.5" fill="none" stroke="#c8c8c8" stroke-width="2.2" stroke-linecap="round" stroke-linejoin="round"/></svg><div style="position:absolute;left:485px;top:437px;width:282px;height:40.5px;background:#444444;border-radius:5px"></div><div class="t dd" style="left:495.5px;top:446.25px">Longest Axis</div><svg width="16" height="10" style="position:absolute;left:741.5px;top:452.5px"><path d="M2.5 2.5L8 7.8L13.5 2.5" fill="none" stroke="#c8c8c8" stroke-width="2.2" stroke-linecap="round" stroke-linejoin="round"/></svg><div style="position:absolute;left:490px;top:488px;width:131px;height:42px;background:#434343;border-radius:5px"></div><div class="t btn" style="left:490px;width:131px;top:497.8px;text-align:center;color:#d0d0d0">Cancel</div><div style="position:absolute;left:631px;top:488px;width:127px;height:38px;background:#434343;border-radius:5px;border:2px solid #5592e2"></div><div class="t btn" style="left:631px;width:131px;top:497.8px;text-align:center;color:#f0f0f0">Create</div>
</body></html>
